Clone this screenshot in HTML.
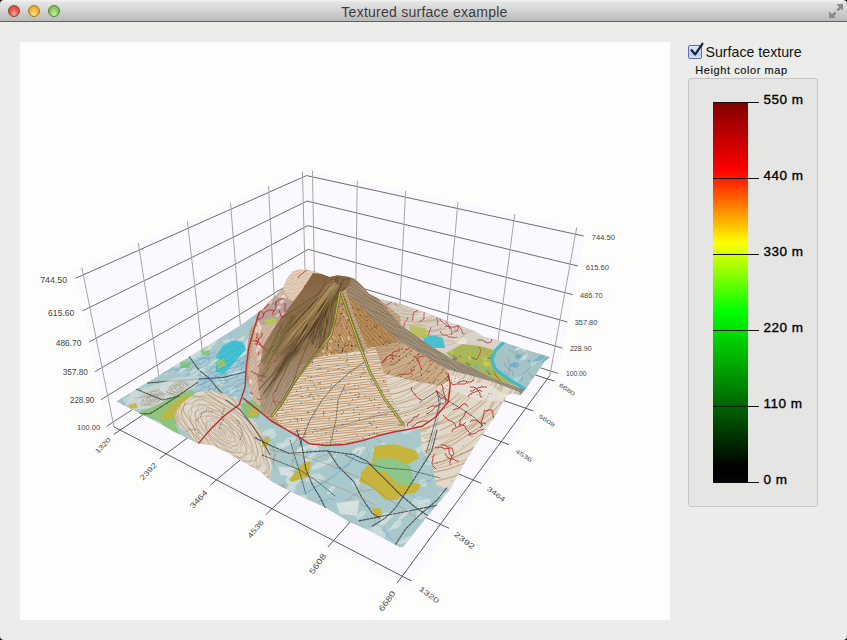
<!DOCTYPE html>
<html><head><meta charset="utf-8">
<style>
html,body{margin:0;padding:0;}
body{width:847px;height:640px;overflow:hidden;background:#ecedeb;position:relative;font-family:"Liberation Sans",sans-serif;}
#title{position:absolute;left:0;top:0;width:847px;height:21px;background:linear-gradient(#f4f4f4 0px,#e6e6e6 2px,#d2d2d2 11px,#bcbcbc 20px);border-bottom:1px solid #606060;}
#title .t{position:absolute;left:1px;width:847px;top:3.5px;text-align:center;font-size:14px;letter-spacing:0.25px;color:#3c3c3c;}
.tl{position:absolute;top:5px;width:10px;height:10px;border-radius:50%;}
#chart{position:absolute;left:20px;top:42px;width:650px;height:578px;background:#fdfefc;overflow:hidden;}
#chart svg{position:absolute;left:0;top:0;}
#chk{position:absolute;left:688px;top:45px;width:12px;height:12px;border:1px solid #6a6aa6;border-radius:2px;background:linear-gradient(#dfe8f8,#b6d2f6 70%,#cfe2fa);}
#chkl{position:absolute;left:705.5px;top:44px;font-size:14.2px;letter-spacing:0px;color:#101010;}
#hcm{position:absolute;left:695.3px;top:64px;font-size:11px;letter-spacing:0.58px;color:#111;-webkit-text-stroke:0.15px #111;}
#grp{position:absolute;left:688px;top:78px;width:128px;height:427px;border:1px solid #c6c6c6;border-radius:3px;background:#e5e6e4;}
#bar{position:absolute;left:713px;top:102px;width:35px;height:381px;background:linear-gradient(to top,#06040a 0%,#000000 4%,#00ff00 45%,#ffff00 63%,#ff0000 82%,#800000 100%);}
.tick{position:absolute;left:713px;width:46px;height:1px;background:#111;}
.bl{position:absolute;left:763.5px;font-size:13.5px;letter-spacing:0.5px;color:#000;-webkit-text-stroke:0.35px #000;}
</style></head><body>
<div id="title"><div class="t">Textured surface example</div>
<div class="tl" style="left:8px;border:1px solid #9a3e36;background:radial-gradient(ellipse at 50% 85%,#f4b0a4 0%,#e0584a 55%,#c84438 100%)"></div>
<div class="tl" style="left:28px;border:1px solid #a07a1c;background:radial-gradient(ellipse at 50% 85%,#f8e490 0%,#f0b238 55%,#d89820 100%)"></div>
<div class="tl" style="left:48px;border:1px solid #4e8a32;background:radial-gradient(ellipse at 50% 85%,#d0ecaa 0%,#8ccb5a 55%,#6aa83e 100%)"></div>
<svg style="position:absolute;left:826px;top:2px" width="20" height="18" viewBox="826 2 20 18"><polygon points="836.2,4 843,4 843,10.8 841,8.8 838.2,11.6 836.4,9.8 839.2,7" fill="#8a8a8a"/><polygon points="829,11.2 829,18 835.8,18 833.8,16 836.6,13.2 834.8,11.4 832,14.2" fill="#8a8a8a"/><line x1="836.6" y1="12.6" x2="838" y2="11.2" stroke="#f0f0f0" stroke-width="0.8" opacity="0.6"/></svg>
</div>
<div id="chart">
<svg width="650" height="578" viewBox="20 42 650 578" font-family="Liberation Sans, sans-serif">
<defs>
<pattern id="strH" width="8" height="2.6" patternUnits="userSpaceOnUse" patternTransform="rotate(-5)"><rect x="0" y="0.9" width="8" height="0.9" fill="#a8784a" opacity="0.55"/></pattern>
<pattern id="con" width="9" height="3.2" patternUnits="userSpaceOnUse" patternTransform="rotate(35)"><path d="M0,1.6 Q2.25,0.6 4.5,1.6 T9,1.6" fill="none" stroke="#a87e58" stroke-width="0.7" opacity="0.6"/></pattern>
<pattern id="dots" width="7" height="6" patternUnits="userSpaceOnUse"><circle cx="1.2" cy="1.5" r="0.55" fill="#2a2a2a" opacity="0.6"/><circle cx="4.6" cy="3.8" r="0.5" fill="#3a2a1a" opacity="0.55"/><circle cx="2.8" cy="5.2" r="0.45" fill="#202020" opacity="0.5"/></pattern>
<pattern id="strk" width="4" height="12" patternUnits="userSpaceOnUse" patternTransform="rotate(35)"><rect x="0.5" y="0" width="0.9" height="12" fill="#5a4630" opacity="0.5"/><rect x="2.6" y="0" width="0.6" height="12" fill="#d8c0a0" opacity="0.4"/></pattern>
<pattern id="mott" width="34" height="22" patternUnits="userSpaceOnUse" patternTransform="rotate(-30)"><ellipse cx="8" cy="6" rx="6" ry="3" fill="#dfe8e6" opacity="0.55"/><ellipse cx="24" cy="15" rx="7" ry="3.5" fill="#dfe8e6" opacity="0.5"/></pattern>
<pattern id="blu" width="26" height="18" patternUnits="userSpaceOnUse" patternTransform="rotate(-28)"><path d="M0,4 Q6,1 13,5 T26,4" fill="none" stroke="#5b9fd0" stroke-width="0.6" opacity="0.6"/><path d="M0,13 Q7,16 13,12 T26,13" fill="none" stroke="#7a8a90" stroke-width="0.6" opacity="0.45"/></pattern>
</defs>
<polygon points="107.65,431.03 309.36,298.08 306.34,169.71 74.24,270.57" fill="#fbf9fd"/>
<polygon points="309.36,298.08 557.94,378.09 586.02,229.26 306.34,169.71" fill="#fbf9fd"/>
<polygon points="107.65,431.03 309.36,298.08 557.94,378.09 407.56,588.68" fill="#fbf9fd"/>
<line x1="106.55" y1="426.40" x2="309.27" y2="294.18" stroke="#6e6e6e" stroke-width="1" opacity="1"/>
<line x1="100.97" y1="399.61" x2="308.75" y2="272.13" stroke="#6e6e6e" stroke-width="1" opacity="1"/>
<line x1="95.12" y1="371.51" x2="308.21" y2="249.30" stroke="#6e6e6e" stroke-width="1" opacity="1"/>
<line x1="88.97" y1="341.99" x2="307.65" y2="225.63" stroke="#6e6e6e" stroke-width="1" opacity="1"/>
<line x1="82.50" y1="310.93" x2="307.08" y2="201.07" stroke="#6e6e6e" stroke-width="1" opacity="1"/>
<line x1="75.69" y1="278.23" x2="306.48" y2="175.58" stroke="#6e6e6e" stroke-width="1" opacity="1"/>
<line x1="113.97" y1="426.86" x2="81.78" y2="267.29" stroke="#a4a4a4" stroke-width="1" opacity="1"/>
<line x1="161.85" y1="395.30" x2="138.30" y2="242.73" stroke="#a4a4a4" stroke-width="1" opacity="1"/>
<line x1="204.15" y1="367.43" x2="187.41" y2="221.39" stroke="#a4a4a4" stroke-width="1" opacity="1"/>
<line x1="241.78" y1="342.62" x2="230.47" y2="202.68" stroke="#a4a4a4" stroke-width="1" opacity="1"/>
<line x1="275.48" y1="320.41" x2="268.54" y2="186.14" stroke="#a4a4a4" stroke-width="1" opacity="1"/>
<line x1="305.84" y1="300.40" x2="302.43" y2="171.41" stroke="#a4a4a4" stroke-width="1" opacity="1"/>
<line x1="309.27" y1="294.18" x2="557.79" y2="373.34" stroke="#6e6e6e" stroke-width="1" opacity="1"/>
<line x1="308.75" y1="272.13" x2="562.50" y2="348.23" stroke="#6e6e6e" stroke-width="1" opacity="1"/>
<line x1="308.21" y1="249.30" x2="567.42" y2="322.02" stroke="#6e6e6e" stroke-width="1" opacity="1"/>
<line x1="307.65" y1="225.63" x2="572.57" y2="294.62" stroke="#6e6e6e" stroke-width="1" opacity="1"/>
<line x1="307.08" y1="201.07" x2="577.95" y2="265.97" stroke="#6e6e6e" stroke-width="1" opacity="1"/>
<line x1="306.48" y1="175.58" x2="583.58" y2="235.97" stroke="#6e6e6e" stroke-width="1" opacity="1"/>
<line x1="549.87" y1="375.49" x2="576.75" y2="227.29" stroke="#a4a4a4" stroke-width="1" opacity="1"/>
<line x1="495.67" y1="358.04" x2="514.79" y2="214.10" stroke="#a4a4a4" stroke-width="1" opacity="1"/>
<line x1="445.47" y1="341.89" x2="457.95" y2="201.99" stroke="#a4a4a4" stroke-width="1" opacity="1"/>
<line x1="398.85" y1="326.88" x2="405.60" y2="190.85" stroke="#a4a4a4" stroke-width="1" opacity="1"/>
<line x1="355.44" y1="312.91" x2="357.25" y2="180.55" stroke="#a4a4a4" stroke-width="1" opacity="1"/>
<line x1="314.91" y1="299.87" x2="312.45" y2="171.01" stroke="#a4a4a4" stroke-width="1" opacity="1"/>
<line x1="113.97" y1="426.86" x2="411.36" y2="580.91" stroke="#5a5a5a" stroke-width="1" opacity="1"/>
<line x1="161.85" y1="395.30" x2="449.07" y2="528.29" stroke="#5a5a5a" stroke-width="1" opacity="1"/>
<line x1="204.15" y1="367.43" x2="481.24" y2="483.40" stroke="#5a5a5a" stroke-width="1" opacity="1"/>
<line x1="241.78" y1="342.62" x2="509.01" y2="444.66" stroke="#5a5a5a" stroke-width="1" opacity="1"/>
<line x1="275.48" y1="320.41" x2="533.22" y2="410.88" stroke="#5a5a5a" stroke-width="1" opacity="1"/>
<line x1="305.84" y1="300.40" x2="554.51" y2="381.17" stroke="#5a5a5a" stroke-width="1" opacity="1"/>
<line x1="549.87" y1="375.49" x2="396.98" y2="583.29" stroke="#5a5a5a" stroke-width="1" opacity="1"/>
<line x1="495.67" y1="358.04" x2="327.92" y2="546.98" stroke="#5a5a5a" stroke-width="1" opacity="1"/>
<line x1="445.47" y1="341.89" x2="266.03" y2="514.44" stroke="#5a5a5a" stroke-width="1" opacity="1"/>
<line x1="398.85" y1="326.88" x2="210.25" y2="485.11" stroke="#5a5a5a" stroke-width="1" opacity="1"/>
<line x1="355.44" y1="312.91" x2="159.73" y2="458.55" stroke="#5a5a5a" stroke-width="1" opacity="1"/>
<line x1="314.91" y1="299.87" x2="113.74" y2="434.37" stroke="#5a5a5a" stroke-width="1" opacity="1"/>
<clipPath id="cout"><polygon points="116.0,401.5 241.2,324.8 263.1,308.4 270.0,301.0 275.7,295.4 282.8,288.3 287.0,278.4 292.7,271.3 299.8,269.6 308.3,270.2 315.3,271.6 322.4,274.2 329.5,277.0 338.0,275.3 349.3,276.7 355.0,279.1 362.1,285.5 369.2,294.0 377.7,298.0 403.6,304.8 427.2,313.0 450.8,322.5 474.5,330.8 483.9,336.7 498.0,340.2 521.7,348.5 550.4,357.0 544.7,361.3 537.1,372.7 526.7,387.8 520.1,395.3 512.6,393.4 506.9,395.3 503.1,402.9 494.6,417.0 486.1,429.3 474.8,446.3 460.6,470.0 450.0,490.0 427.5,516.2 403.4,547.0 399.0,546.9 370.6,531.5 348.7,521.7 324.7,507.5 302.8,497.6 290.0,491.5 269.7,480.6 260.9,471.9 241.2,460.9 228.1,453.3 212.8,445.6 197.5,443.4 175.6,432.5 153.7,420.5 134.0,410.6"/></clipPath><g clip-path="url(#cout)"><polygon points="116.0,401.5 241.2,324.8 263.1,308.4 270.0,301.0 275.7,295.4 282.8,288.3 287.0,278.4 292.7,271.3 299.8,269.6 308.3,270.2 315.3,271.6 322.4,274.2 329.5,277.0 338.0,275.3 349.3,276.7 355.0,279.1 362.1,285.5 369.2,294.0 377.7,298.0 403.6,304.8 427.2,313.0 450.8,322.5 474.5,330.8 483.9,336.7 498.0,340.2 521.7,348.5 550.4,357.0 544.7,361.3 537.1,372.7 526.7,387.8 520.1,395.3 512.6,393.4 506.9,395.3 503.1,402.9 494.6,417.0 486.1,429.3 474.8,446.3 460.6,470.0 450.0,490.0 427.5,516.2 403.4,547.0 399.0,546.9 370.6,531.5 348.7,521.7 324.7,507.5 302.8,497.6 290.0,491.5 269.7,480.6 260.9,471.9 241.2,460.9 228.1,453.3 212.8,445.6 197.5,443.4 175.6,432.5 153.7,420.5 134.0,410.6" fill="#a9c8cc" />
<clipPath id="c1"><polygon points="116.0,401.5 241.2,324.8 263.1,308.4 270.0,301.0 275.7,295.4 282.8,288.3 287.0,278.4 292.7,271.3 299.8,269.6 308.3,270.2 315.3,271.6 322.4,274.2 329.5,277.0 338.0,275.3 349.3,276.7 355.0,279.1 362.1,285.5 369.2,294.0 377.7,298.0 403.6,304.8 427.2,313.0 450.8,322.5 474.5,330.8 483.9,336.7 498.0,340.2 521.7,348.5 550.4,357.0 544.7,361.3 537.1,372.7 526.7,387.8 520.1,395.3 512.6,393.4 506.9,395.3 503.1,402.9 494.6,417.0 486.1,429.3 474.8,446.3 460.6,470.0 450.0,490.0 427.5,516.2 403.4,547.0 399.0,546.9 370.6,531.5 348.7,521.7 324.7,507.5 302.8,497.6 290.0,491.5 269.7,480.6 260.9,471.9 241.2,460.9 228.1,453.3 212.8,445.6 197.5,443.4 175.6,432.5 153.7,420.5 134.0,410.6"/></clipPath><g clip-path="url(#c1)"><ellipse cx="387.5" cy="518.5" rx="8.9" ry="2.3" fill="#d6e2e0" opacity="0.6" transform="rotate(-38 387.5 518.5)"/>
<ellipse cx="495.5" cy="271.1" rx="9.2" ry="4.2" fill="#d6e2e0" opacity="0.6" transform="rotate(-31 495.5 271.1)"/>
<ellipse cx="247.6" cy="346.8" rx="5.3" ry="3.0" fill="#d6e2e0" opacity="0.6" transform="rotate(-30 247.6 346.8)"/>
<ellipse cx="356.4" cy="545.8" rx="9.0" ry="3.6" fill="#d6e2e0" opacity="0.6" transform="rotate(-10 356.4 545.8)"/>
<ellipse cx="209.5" cy="314.0" rx="7.8" ry="1.7" fill="#d6e2e0" opacity="0.6" transform="rotate(-49 209.5 314.0)"/>
<ellipse cx="339.7" cy="398.9" rx="9.9" ry="3.6" fill="#d6e2e0" opacity="0.6" transform="rotate(-29 339.7 398.9)"/>
<ellipse cx="331.8" cy="338.3" rx="3.6" ry="2.2" fill="#d6e2e0" opacity="0.6" transform="rotate(-22 331.8 338.3)"/>
<ellipse cx="203.1" cy="372.1" rx="3.5" ry="4.3" fill="#d6e2e0" opacity="0.6" transform="rotate(-44 203.1 372.1)"/>
<ellipse cx="232.2" cy="513.8" rx="7.1" ry="4.3" fill="#d6e2e0" opacity="0.6" transform="rotate(-24 232.2 513.8)"/>
<ellipse cx="438.2" cy="295.0" rx="7.3" ry="3.2" fill="#d6e2e0" opacity="0.6" transform="rotate(-15 438.2 295.0)"/>
<ellipse cx="272.9" cy="435.5" rx="3.9" ry="2.8" fill="#d6e2e0" opacity="0.6" transform="rotate(-37 272.9 435.5)"/>
<ellipse cx="181.2" cy="496.1" rx="6.2" ry="4.7" fill="#d6e2e0" opacity="0.6" transform="rotate(-26 181.2 496.1)"/>
<ellipse cx="378.8" cy="446.6" rx="8.2" ry="2.1" fill="#d6e2e0" opacity="0.6" transform="rotate(-32 378.8 446.6)"/>
<ellipse cx="220.1" cy="381.3" rx="4.2" ry="4.7" fill="#d6e2e0" opacity="0.6" transform="rotate(-41 220.1 381.3)"/>
<ellipse cx="407.8" cy="352.9" rx="9.6" ry="3.7" fill="#d6e2e0" opacity="0.6" transform="rotate(-45 407.8 352.9)"/>
<ellipse cx="483.1" cy="531.7" rx="9.8" ry="3.4" fill="#d6e2e0" opacity="0.6" transform="rotate(-44 483.1 531.7)"/>
<ellipse cx="199.6" cy="527.0" rx="7.4" ry="2.2" fill="#d6e2e0" opacity="0.6" transform="rotate(-15 199.6 527.0)"/>
<ellipse cx="394.7" cy="427.6" rx="6.1" ry="2.9" fill="#d6e2e0" opacity="0.6" transform="rotate(-40 394.7 427.6)"/>
<ellipse cx="132.5" cy="512.7" rx="6.8" ry="3.4" fill="#d6e2e0" opacity="0.6" transform="rotate(-37 132.5 512.7)"/>
<ellipse cx="442.4" cy="276.6" rx="6.1" ry="1.7" fill="#d6e2e0" opacity="0.6" transform="rotate(-45 442.4 276.6)"/>
<ellipse cx="536.1" cy="452.1" rx="6.5" ry="3.3" fill="#d6e2e0" opacity="0.6" transform="rotate(-15 536.1 452.1)"/>
<ellipse cx="265.5" cy="433.3" rx="8.3" ry="2.7" fill="#d6e2e0" opacity="0.6" transform="rotate(-29 265.5 433.3)"/>
<ellipse cx="448.4" cy="521.8" rx="4.6" ry="4.6" fill="#d6e2e0" opacity="0.6" transform="rotate(-50 448.4 521.8)"/>
<ellipse cx="443.1" cy="494.4" rx="4.5" ry="2.9" fill="#d6e2e0" opacity="0.6" transform="rotate(-17 443.1 494.4)"/>
<ellipse cx="122.2" cy="443.9" rx="9.1" ry="3.2" fill="#d6e2e0" opacity="0.6" transform="rotate(-21 122.2 443.9)"/>
<ellipse cx="214.4" cy="324.7" rx="6.0" ry="2.2" fill="#d6e2e0" opacity="0.6" transform="rotate(-36 214.4 324.7)"/>
<ellipse cx="527.9" cy="428.6" rx="5.9" ry="2.5" fill="#d6e2e0" opacity="0.6" transform="rotate(-12 527.9 428.6)"/>
<ellipse cx="309.1" cy="541.6" rx="7.1" ry="3.3" fill="#d6e2e0" opacity="0.6" transform="rotate(-14 309.1 541.6)"/>
<ellipse cx="438.7" cy="430.7" rx="6.5" ry="4.4" fill="#d6e2e0" opacity="0.6" transform="rotate(-34 438.7 430.7)"/>
<ellipse cx="516.8" cy="288.7" rx="6.5" ry="3.3" fill="#d6e2e0" opacity="0.6" transform="rotate(-12 516.8 288.7)"/>
<ellipse cx="225.0" cy="493.2" rx="8.2" ry="3.9" fill="#d6e2e0" opacity="0.6" transform="rotate(-25 225.0 493.2)"/>
<ellipse cx="538.0" cy="361.9" rx="6.3" ry="2.2" fill="#d6e2e0" opacity="0.6" transform="rotate(-48 538.0 361.9)"/>
<ellipse cx="208.5" cy="523.5" rx="9.4" ry="2.0" fill="#d6e2e0" opacity="0.6" transform="rotate(-26 208.5 523.5)"/>
<ellipse cx="324.2" cy="434.6" rx="8.1" ry="2.6" fill="#d6e2e0" opacity="0.6" transform="rotate(-12 324.2 434.6)"/>
<ellipse cx="318.4" cy="443.8" rx="7.9" ry="2.2" fill="#d6e2e0" opacity="0.6" transform="rotate(-48 318.4 443.8)"/>
<ellipse cx="294.8" cy="481.5" rx="9.2" ry="3.9" fill="#d6e2e0" opacity="0.6" transform="rotate(-45 294.8 481.5)"/>
<ellipse cx="512.8" cy="492.1" rx="9.6" ry="3.3" fill="#d6e2e0" opacity="0.6" transform="rotate(-13 512.8 492.1)"/>
<ellipse cx="136.3" cy="278.0" rx="3.6" ry="2.4" fill="#d6e2e0" opacity="0.6" transform="rotate(-40 136.3 278.0)"/>
<ellipse cx="197.5" cy="426.9" rx="3.8" ry="3.5" fill="#d6e2e0" opacity="0.6" transform="rotate(-43 197.5 426.9)"/>
<ellipse cx="410.5" cy="275.4" rx="5.7" ry="4.6" fill="#d6e2e0" opacity="0.6" transform="rotate(-28 410.5 275.4)"/>
<ellipse cx="468.6" cy="452.1" rx="7.8" ry="2.2" fill="#d6e2e0" opacity="0.6" transform="rotate(-27 468.6 452.1)"/>
<ellipse cx="133.2" cy="492.0" rx="10.2" ry="4.3" fill="#d6e2e0" opacity="0.6" transform="rotate(-48 133.2 492.0)"/>
<ellipse cx="263.1" cy="357.8" rx="4.3" ry="3.6" fill="#d6e2e0" opacity="0.6" transform="rotate(-18 263.1 357.8)"/>
<ellipse cx="252.3" cy="508.9" rx="9.1" ry="2.0" fill="#d6e2e0" opacity="0.6" transform="rotate(-19 252.3 508.9)"/>
<ellipse cx="499.4" cy="324.3" rx="7.5" ry="3.6" fill="#d6e2e0" opacity="0.6" transform="rotate(-26 499.4 324.3)"/>
<ellipse cx="157.8" cy="453.0" rx="7.9" ry="4.2" fill="#d6e2e0" opacity="0.6" transform="rotate(-18 157.8 453.0)"/>
<ellipse cx="258.1" cy="469.9" rx="9.6" ry="4.5" fill="#d6e2e0" opacity="0.6" transform="rotate(-44 258.1 469.9)"/>
<ellipse cx="127.6" cy="450.1" rx="5.0" ry="3.4" fill="#d6e2e0" opacity="0.6" transform="rotate(-12 127.6 450.1)"/>
<ellipse cx="280.8" cy="339.7" rx="6.7" ry="3.7" fill="#d6e2e0" opacity="0.6" transform="rotate(-46 280.8 339.7)"/>
<ellipse cx="281.3" cy="306.7" rx="8.1" ry="4.3" fill="#d6e2e0" opacity="0.6" transform="rotate(-35 281.3 306.7)"/>
<ellipse cx="277.5" cy="419.3" rx="5.0" ry="2.4" fill="#d6e2e0" opacity="0.6" transform="rotate(-37 277.5 419.3)"/>
<ellipse cx="314.7" cy="292.2" rx="8.8" ry="3.5" fill="#d6e2e0" opacity="0.6" transform="rotate(-38 314.7 292.2)"/>
<ellipse cx="149.7" cy="481.3" rx="4.4" ry="2.0" fill="#d6e2e0" opacity="0.6" transform="rotate(-45 149.7 481.3)"/>
<ellipse cx="151.3" cy="521.0" rx="5.4" ry="2.6" fill="#d6e2e0" opacity="0.6" transform="rotate(-17 151.3 521.0)"/>
<ellipse cx="385.3" cy="321.5" rx="6.5" ry="4.4" fill="#d6e2e0" opacity="0.6" transform="rotate(-35 385.3 321.5)"/>
<ellipse cx="424.8" cy="296.5" rx="8.6" ry="4.1" fill="#d6e2e0" opacity="0.6" transform="rotate(-17 424.8 296.5)"/>
<ellipse cx="408.9" cy="372.4" rx="3.9" ry="3.3" fill="#d6e2e0" opacity="0.6" transform="rotate(-20 408.9 372.4)"/>
<ellipse cx="198.9" cy="343.5" rx="7.3" ry="4.0" fill="#d6e2e0" opacity="0.6" transform="rotate(-14 198.9 343.5)"/>
<ellipse cx="170.6" cy="320.7" rx="9.1" ry="3.7" fill="#d6e2e0" opacity="0.6" transform="rotate(-21 170.6 320.7)"/>
<ellipse cx="549.0" cy="530.1" rx="9.4" ry="4.1" fill="#d6e2e0" opacity="0.6" transform="rotate(-34 549.0 530.1)"/>
<ellipse cx="394.5" cy="320.8" rx="8.8" ry="4.0" fill="#d6e2e0" opacity="0.6" transform="rotate(-21 394.5 320.8)"/>
<ellipse cx="309.2" cy="374.5" rx="6.4" ry="1.7" fill="#d6e2e0" opacity="0.6" transform="rotate(-16 309.2 374.5)"/>
<ellipse cx="351.6" cy="377.1" rx="7.3" ry="3.9" fill="#d6e2e0" opacity="0.6" transform="rotate(-35 351.6 377.1)"/>
<ellipse cx="476.8" cy="524.7" rx="6.2" ry="2.0" fill="#d6e2e0" opacity="0.6" transform="rotate(-20 476.8 524.7)"/>
<ellipse cx="547.3" cy="310.7" rx="8.5" ry="4.2" fill="#d6e2e0" opacity="0.6" transform="rotate(-13 547.3 310.7)"/>
<ellipse cx="169.6" cy="295.1" rx="10.4" ry="2.0" fill="#d6e2e0" opacity="0.6" transform="rotate(-43 169.6 295.1)"/>
<ellipse cx="365.8" cy="393.4" rx="8.8" ry="2.2" fill="#d6e2e0" opacity="0.6" transform="rotate(-13 365.8 393.4)"/>
<ellipse cx="210.3" cy="483.0" rx="4.0" ry="3.1" fill="#d6e2e0" opacity="0.6" transform="rotate(-49 210.3 483.0)"/>
<ellipse cx="252.3" cy="356.2" rx="8.5" ry="3.1" fill="#d6e2e0" opacity="0.6" transform="rotate(-48 252.3 356.2)"/>
<ellipse cx="548.4" cy="516.1" rx="9.9" ry="2.4" fill="#d6e2e0" opacity="0.6" transform="rotate(-34 548.4 516.1)"/>
<ellipse cx="214.7" cy="304.2" rx="3.7" ry="3.2" fill="#d6e2e0" opacity="0.6" transform="rotate(-45 214.7 304.2)"/>
<ellipse cx="192.6" cy="508.3" rx="6.9" ry="2.2" fill="#d6e2e0" opacity="0.6" transform="rotate(-23 192.6 508.3)"/>
<ellipse cx="231.5" cy="415.8" rx="5.5" ry="3.3" fill="#d6e2e0" opacity="0.6" transform="rotate(-25 231.5 415.8)"/>
<ellipse cx="348.9" cy="379.3" rx="9.0" ry="4.4" fill="#d6e2e0" opacity="0.6" transform="rotate(-43 348.9 379.3)"/>
<ellipse cx="175.2" cy="301.0" rx="10.4" ry="4.6" fill="#d6e2e0" opacity="0.6" transform="rotate(-41 175.2 301.0)"/>
<ellipse cx="537.3" cy="327.2" rx="7.0" ry="3.2" fill="#d6e2e0" opacity="0.6" transform="rotate(-13 537.3 327.2)"/>
<ellipse cx="133.6" cy="357.1" rx="7.7" ry="1.8" fill="#d6e2e0" opacity="0.6" transform="rotate(-41 133.6 357.1)"/>
<ellipse cx="318.0" cy="513.9" rx="8.8" ry="4.3" fill="#d6e2e0" opacity="0.6" transform="rotate(-20 318.0 513.9)"/>
<ellipse cx="423.4" cy="505.3" rx="8.3" ry="4.0" fill="#d6e2e0" opacity="0.6" transform="rotate(-38 423.4 505.3)"/>
<ellipse cx="188.8" cy="479.5" rx="4.7" ry="4.5" fill="#d6e2e0" opacity="0.6" transform="rotate(-26 188.8 479.5)"/>
<ellipse cx="259.1" cy="529.4" rx="4.6" ry="3.2" fill="#d6e2e0" opacity="0.6" transform="rotate(-46 259.1 529.4)"/>
<ellipse cx="535.4" cy="429.2" rx="9.1" ry="2.5" fill="#d6e2e0" opacity="0.6" transform="rotate(-18 535.4 429.2)"/>
<ellipse cx="421.3" cy="448.2" rx="10.2" ry="3.0" fill="#d6e2e0" opacity="0.6" transform="rotate(-33 421.3 448.2)"/>
<ellipse cx="416.7" cy="501.2" rx="5.8" ry="3.7" fill="#d6e2e0" opacity="0.6" transform="rotate(-42 416.7 501.2)"/>
<ellipse cx="355.7" cy="483.0" rx="4.0" ry="3.9" fill="#d6e2e0" opacity="0.6" transform="rotate(-49 355.7 483.0)"/>
<ellipse cx="532.3" cy="399.6" rx="6.4" ry="3.9" fill="#d6e2e0" opacity="0.6" transform="rotate(-29 532.3 399.6)"/>
<ellipse cx="433.5" cy="293.1" rx="7.4" ry="3.4" fill="#d6e2e0" opacity="0.6" transform="rotate(-13 433.5 293.1)"/>
<ellipse cx="133.2" cy="395.2" rx="7.9" ry="3.4" fill="#d6e2e0" opacity="0.6" transform="rotate(-47 133.2 395.2)"/>
<ellipse cx="373.7" cy="331.2" rx="4.9" ry="4.4" fill="#d6e2e0" opacity="0.6" transform="rotate(-42 373.7 331.2)"/>
<ellipse cx="313.3" cy="477.7" rx="8.5" ry="3.4" fill="#d6e2e0" opacity="0.6" transform="rotate(-18 313.3 477.7)"/>
<ellipse cx="318.4" cy="441.7" rx="9.2" ry="3.8" fill="#d6e2e0" opacity="0.6" transform="rotate(-24 318.4 441.7)"/>
<ellipse cx="292.4" cy="424.5" rx="6.3" ry="4.0" fill="#d6e2e0" opacity="0.6" transform="rotate(-35 292.4 424.5)"/>
<ellipse cx="318.7" cy="479.2" rx="7.0" ry="2.7" fill="#d6e2e0" opacity="0.6" transform="rotate(-17 318.7 479.2)"/>
<ellipse cx="281.5" cy="503.9" rx="9.0" ry="3.0" fill="#d6e2e0" opacity="0.6" transform="rotate(-21 281.5 503.9)"/>
<ellipse cx="130.9" cy="377.7" rx="9.5" ry="3.5" fill="#d6e2e0" opacity="0.6" transform="rotate(-28 130.9 377.7)"/>
<ellipse cx="404.8" cy="457.6" rx="7.6" ry="2.9" fill="#d6e2e0" opacity="0.6" transform="rotate(-43 404.8 457.6)"/>
<ellipse cx="243.1" cy="350.9" rx="6.5" ry="4.8" fill="#d6e2e0" opacity="0.6" transform="rotate(-36 243.1 350.9)"/>
<ellipse cx="310.3" cy="372.7" rx="7.6" ry="4.6" fill="#d6e2e0" opacity="0.6" transform="rotate(-14 310.3 372.7)"/>
<ellipse cx="279.8" cy="343.6" rx="9.7" ry="3.2" fill="#d6e2e0" opacity="0.6" transform="rotate(-23 279.8 343.6)"/>
<ellipse cx="147.8" cy="510.0" rx="5.7" ry="3.2" fill="#d6e2e0" opacity="0.6" transform="rotate(-42 147.8 510.0)"/>
<ellipse cx="298.6" cy="499.3" rx="9.3" ry="3.1" fill="#d6e2e0" opacity="0.6" transform="rotate(-19 298.6 499.3)"/>
<ellipse cx="315.0" cy="373.2" rx="7.3" ry="2.2" fill="#d6e2e0" opacity="0.6" transform="rotate(-37 315.0 373.2)"/>
<ellipse cx="422.9" cy="483.3" rx="3.9" ry="3.9" fill="#d6e2e0" opacity="0.6" transform="rotate(-17 422.9 483.3)"/>
<ellipse cx="309.4" cy="286.9" rx="8.3" ry="2.4" fill="#d6e2e0" opacity="0.6" transform="rotate(-24 309.4 286.9)"/>
<ellipse cx="279.6" cy="446.3" rx="5.3" ry="3.1" fill="#d6e2e0" opacity="0.6" transform="rotate(-29 279.6 446.3)"/>
<ellipse cx="390.1" cy="326.0" rx="10.2" ry="2.5" fill="#d6e2e0" opacity="0.6" transform="rotate(-38 390.1 326.0)"/>
<ellipse cx="227.3" cy="288.3" rx="6.5" ry="4.1" fill="#d6e2e0" opacity="0.6" transform="rotate(-22 227.3 288.3)"/>
<ellipse cx="201.0" cy="307.6" rx="5.7" ry="4.1" fill="#d6e2e0" opacity="0.6" transform="rotate(-30 201.0 307.6)"/>
<ellipse cx="517.0" cy="451.7" rx="7.8" ry="4.1" fill="#d6e2e0" opacity="0.6" transform="rotate(-20 517.0 451.7)"/>
<ellipse cx="265.4" cy="340.9" rx="6.6" ry="3.2" fill="#d6e2e0" opacity="0.6" transform="rotate(-44 265.4 340.9)"/>
<ellipse cx="307.7" cy="447.1" rx="4.5" ry="2.0" fill="#d6e2e0" opacity="0.6" transform="rotate(-43 307.7 447.1)"/>
<ellipse cx="239.1" cy="536.4" rx="3.7" ry="2.2" fill="#d6e2e0" opacity="0.6" transform="rotate(-43 239.1 536.4)"/>
<ellipse cx="322.1" cy="273.8" rx="6.7" ry="2.1" fill="#d6e2e0" opacity="0.6" transform="rotate(-39 322.1 273.8)"/>
<ellipse cx="460.2" cy="320.7" rx="7.8" ry="2.9" fill="#d6e2e0" opacity="0.6" transform="rotate(-33 460.2 320.7)"/>
<ellipse cx="470.8" cy="314.2" rx="10.0" ry="4.5" fill="#d6e2e0" opacity="0.6" transform="rotate(-23 470.8 314.2)"/>
<ellipse cx="137.5" cy="453.6" rx="7.7" ry="4.1" fill="#d6e2e0" opacity="0.6" transform="rotate(-41 137.5 453.6)"/>
<ellipse cx="530.1" cy="515.4" rx="4.3" ry="2.6" fill="#d6e2e0" opacity="0.6" transform="rotate(-49 530.1 515.4)"/>
<ellipse cx="477.0" cy="523.4" rx="10.4" ry="3.6" fill="#d6e2e0" opacity="0.6" transform="rotate(-23 477.0 523.4)"/>
<ellipse cx="410.7" cy="427.8" rx="10.2" ry="3.5" fill="#d6e2e0" opacity="0.6" transform="rotate(-37 410.7 427.8)"/>
<ellipse cx="338.8" cy="274.8" rx="8.6" ry="3.8" fill="#d6e2e0" opacity="0.6" transform="rotate(-33 338.8 274.8)"/>
<ellipse cx="485.9" cy="479.2" rx="5.9" ry="1.8" fill="#d6e2e0" opacity="0.6" transform="rotate(-45 485.9 479.2)"/>
<ellipse cx="196.0" cy="353.9" rx="6.6" ry="4.6" fill="#d6e2e0" opacity="0.6" transform="rotate(-39 196.0 353.9)"/>
<ellipse cx="506.3" cy="458.4" rx="9.5" ry="2.9" fill="#d6e2e0" opacity="0.6" transform="rotate(-50 506.3 458.4)"/>
<ellipse cx="457.9" cy="337.7" rx="4.5" ry="4.2" fill="#d6e2e0" opacity="0.6" transform="rotate(-23 457.9 337.7)"/>
<ellipse cx="208.3" cy="343.8" rx="10.1" ry="2.5" fill="#d6e2e0" opacity="0.6" transform="rotate(-22 208.3 343.8)"/>
<ellipse cx="172.3" cy="495.7" rx="4.3" ry="3.3" fill="#d6e2e0" opacity="0.6" transform="rotate(-49 172.3 495.7)"/>
<ellipse cx="355.0" cy="504.5" rx="4.1" ry="2.5" fill="#d6e2e0" opacity="0.6" transform="rotate(-19 355.0 504.5)"/>
<ellipse cx="380.2" cy="356.4" rx="7.9" ry="3.1" fill="#d6e2e0" opacity="0.6" transform="rotate(-16 380.2 356.4)"/>
<ellipse cx="243.3" cy="479.8" rx="7.9" ry="4.0" fill="#d6e2e0" opacity="0.6" transform="rotate(-35 243.3 479.8)"/>
<ellipse cx="430.9" cy="463.3" rx="6.2" ry="1.7" fill="#d6e2e0" opacity="0.6" transform="rotate(-11 430.9 463.3)"/>
<ellipse cx="426.0" cy="326.4" rx="8.6" ry="2.5" fill="#d6e2e0" opacity="0.6" transform="rotate(-31 426.0 326.4)"/>
<ellipse cx="489.5" cy="393.9" rx="5.5" ry="2.6" fill="#d6e2e0" opacity="0.6" transform="rotate(-47 489.5 393.9)"/>
<ellipse cx="211.4" cy="344.8" rx="4.7" ry="1.8" fill="#d6e2e0" opacity="0.6" transform="rotate(-31 211.4 344.8)"/>
<ellipse cx="209.1" cy="474.5" rx="10.0" ry="2.5" fill="#d6e2e0" opacity="0.6" transform="rotate(-27 209.1 474.5)"/>
<ellipse cx="336.1" cy="290.4" rx="4.4" ry="4.4" fill="#d6e2e0" opacity="0.6" transform="rotate(-31 336.1 290.4)"/>
<ellipse cx="465.5" cy="288.1" rx="7.7" ry="4.4" fill="#d6e2e0" opacity="0.6" transform="rotate(-15 465.5 288.1)"/>
<ellipse cx="118.5" cy="414.3" rx="6.1" ry="4.0" fill="#d6e2e0" opacity="0.6" transform="rotate(-47 118.5 414.3)"/>
<ellipse cx="231.1" cy="495.0" rx="6.8" ry="3.1" fill="#d6e2e0" opacity="0.6" transform="rotate(-11 231.1 495.0)"/>
<ellipse cx="255.0" cy="281.2" rx="6.2" ry="2.1" fill="#d6e2e0" opacity="0.6" transform="rotate(-47 255.0 281.2)"/>
<ellipse cx="362.7" cy="534.1" rx="7.6" ry="3.7" fill="#d6e2e0" opacity="0.6" transform="rotate(-37 362.7 534.1)"/>
<ellipse cx="364.1" cy="478.3" rx="7.6" ry="4.2" fill="#d6e2e0" opacity="0.6" transform="rotate(-28 364.1 478.3)"/>
<ellipse cx="202.1" cy="431.2" rx="6.9" ry="2.1" fill="#d6e2e0" opacity="0.6" transform="rotate(-25 202.1 431.2)"/>
<ellipse cx="470.9" cy="307.1" rx="7.3" ry="3.9" fill="#d6e2e0" opacity="0.6" transform="rotate(-34 470.9 307.1)"/>
<ellipse cx="233.3" cy="372.9" rx="7.3" ry="3.8" fill="#d6e2e0" opacity="0.6" transform="rotate(-28 233.3 372.9)"/>
<ellipse cx="162.5" cy="496.5" rx="10.0" ry="1.9" fill="#d6e2e0" opacity="0.6" transform="rotate(-40 162.5 496.5)"/>
<ellipse cx="191.4" cy="505.2" rx="9.9" ry="1.7" fill="#d6e2e0" opacity="0.6" transform="rotate(-37 191.4 505.2)"/>
<ellipse cx="199.6" cy="399.8" rx="10.0" ry="1.8" fill="#d6e2e0" opacity="0.6" transform="rotate(-43 199.6 399.8)"/>
<ellipse cx="327.6" cy="415.0" rx="8.7" ry="3.0" fill="#d6e2e0" opacity="0.6" transform="rotate(-44 327.6 415.0)"/>
<ellipse cx="269.6" cy="542.0" rx="8.8" ry="2.0" fill="#d6e2e0" opacity="0.6" transform="rotate(-18 269.6 542.0)"/>
<ellipse cx="251.1" cy="486.4" rx="3.6" ry="4.4" fill="#d6e2e0" opacity="0.6" transform="rotate(-44 251.1 486.4)"/>
<ellipse cx="314.0" cy="453.2" rx="7.1" ry="2.1" fill="#d6e2e0" opacity="0.6" transform="rotate(-44 314.0 453.2)"/>
<ellipse cx="239.6" cy="284.1" rx="5.0" ry="2.0" fill="#d6e2e0" opacity="0.6" transform="rotate(-31 239.6 284.1)"/>
<ellipse cx="270.9" cy="432.4" rx="5.5" ry="1.7" fill="#d6e2e0" opacity="0.6" transform="rotate(-37 270.9 432.4)"/>
<ellipse cx="444.1" cy="340.6" rx="6.3" ry="4.0" fill="#d6e2e0" opacity="0.6" transform="rotate(-34 444.1 340.6)"/>
<ellipse cx="501.4" cy="524.3" rx="5.7" ry="4.0" fill="#d6e2e0" opacity="0.6" transform="rotate(-40 501.4 524.3)"/>
<ellipse cx="176.6" cy="391.1" rx="7.7" ry="4.6" fill="#d6e2e0" opacity="0.6" transform="rotate(-44 176.6 391.1)"/>
<ellipse cx="425.5" cy="401.5" rx="4.4" ry="4.7" fill="#d6e2e0" opacity="0.6" transform="rotate(-22 425.5 401.5)"/>
<ellipse cx="172.0" cy="520.9" rx="4.2" ry="1.9" fill="#d6e2e0" opacity="0.6" transform="rotate(-37 172.0 520.9)"/>
<ellipse cx="523.4" cy="278.8" rx="9.9" ry="3.6" fill="#d6e2e0" opacity="0.6" transform="rotate(-47 523.4 278.8)"/>
<ellipse cx="363.0" cy="396.9" rx="7.4" ry="4.0" fill="#d6e2e0" opacity="0.6" transform="rotate(-23 363.0 396.9)"/><polyline points="549,313 549,310 550,307 551,304 554,303 557,302 558,299 558,296 556,294" fill="none" stroke="#4f98d4" stroke-width="0.6" opacity="0.5"/>
<polyline points="278,530 278,533 277,536 276,539 275,542 273,544 271,546 269,548 266,549" fill="none" stroke="#4f98d4" stroke-width="0.6" opacity="0.5"/>
<polyline points="408,492 410,494 413,496 415,497 418,499 421,499 423,501 425,503 428,504" fill="none" stroke="#4f98d4" stroke-width="0.6" opacity="0.5"/>
<polyline points="162,463 161,460 160,457 159,455 158,452 156,450 154,447 153,444 156,443" fill="none" stroke="#4f98d4" stroke-width="0.6" opacity="0.5"/>
<polyline points="372,312 373,309 371,307 369,304 367,302 365,301 362,301 359,302 358,305" fill="none" stroke="#4f98d4" stroke-width="0.6" opacity="0.5"/>
<polyline points="546,533 549,534 552,532 553,529 556,528 559,527 562,526 564,524 567,523" fill="none" stroke="#4f98d4" stroke-width="0.6" opacity="0.5"/>
<polyline points="149,326 146,327 143,327 140,326 137,326 135,324 132,323 129,323 129,320" fill="none" stroke="#4f98d4" stroke-width="0.6" opacity="0.5"/>
<polyline points="533,519 532,516 532,513 531,510 529,509 526,508 523,507 520,505 519,503" fill="none" stroke="#4f98d4" stroke-width="0.6" opacity="0.5"/>
<polyline points="184,520 181,522 178,520 176,518 175,516 173,513 174,510 174,507 173,504" fill="none" stroke="#4f98d4" stroke-width="0.6" opacity="0.5"/>
<polyline points="370,534 371,531 372,529 374,526 375,523 375,520 374,517 375,514 374,511" fill="none" stroke="#4f98d4" stroke-width="0.6" opacity="0.5"/>
<polyline points="458,395 459,398 461,400 462,403 460,405 457,404 454,403 451,402 449,400" fill="none" stroke="#4f98d4" stroke-width="0.6" opacity="0.5"/>
<polyline points="120,392 119,395 118,398 116,400 114,402 112,404 110,406 107,408 104,409" fill="none" stroke="#4f98d4" stroke-width="0.6" opacity="0.5"/>
<polyline points="158,282 161,283 163,285 165,288 167,290 168,293 169,296 171,298 173,300" fill="none" stroke="#4f98d4" stroke-width="0.6" opacity="0.5"/>
<polyline points="478,443 477,440 474,438 473,436 472,433 470,431 467,430 465,428 464,425" fill="none" stroke="#4f98d4" stroke-width="0.6" opacity="0.5"/>
<polyline points="350,285 348,287 346,289 343,291 341,293 340,296 338,299 337,301 336,304" fill="none" stroke="#4f98d4" stroke-width="0.6" opacity="0.5"/>
<polyline points="401,318 404,317 407,318 409,321 408,323 409,326 408,329 407,332 405,334" fill="none" stroke="#4f98d4" stroke-width="0.6" opacity="0.5"/>
<polyline points="261,437 264,436 267,437 269,439 272,441 274,443 275,445 277,448 276,451" fill="none" stroke="#4f98d4" stroke-width="0.6" opacity="0.5"/>
<polyline points="158,455 161,456 164,456 167,455 170,455 173,453 174,451 173,448 173,445" fill="none" stroke="#4f98d4" stroke-width="0.6" opacity="0.5"/>
<polyline points="386,414 387,417 387,420 386,423 386,426 385,429 383,431 381,433 379,435" fill="none" stroke="#4f98d4" stroke-width="0.6" opacity="0.5"/>
<polyline points="231,307 230,310 230,313 230,316 231,319 231,322 230,325 231,328 228,329" fill="none" stroke="#4f98d4" stroke-width="0.6" opacity="0.5"/>
<polyline points="509,338 507,335 505,333 504,330 503,328 501,325 500,323 497,322 494,322" fill="none" stroke="#4f98d4" stroke-width="0.6" opacity="0.5"/>
<polyline points="546,278 546,281 547,284 547,287 549,289 552,289 555,287 554,284 553,282" fill="none" stroke="#4f98d4" stroke-width="0.6" opacity="0.5"/>
<polyline points="163,495 162,492 162,489 161,486 159,483 159,480 161,478 164,476 166,474" fill="none" stroke="#4f98d4" stroke-width="0.6" opacity="0.5"/>
<polyline points="166,426 167,423 168,421 171,420 173,417 173,414 175,412 176,409 177,406" fill="none" stroke="#4f98d4" stroke-width="0.6" opacity="0.5"/>
<polyline points="394,469 393,466 394,463 393,460 392,458 389,456 388,453 386,451 383,450" fill="none" stroke="#4f98d4" stroke-width="0.6" opacity="0.5"/>
<polyline points="522,533 525,531 526,529 527,526 524,524 522,522 520,520 518,518 518,515" fill="none" stroke="#4f98d4" stroke-width="0.6" opacity="0.5"/>
<polyline points="248,437 251,435 253,433 253,430 254,427 252,424 252,421 249,420 246,421" fill="none" stroke="#4f98d4" stroke-width="0.6" opacity="0.5"/>
<polyline points="399,351 400,348 401,345 403,343 402,340 401,337 399,335 398,333 396,330" fill="none" stroke="#4f98d4" stroke-width="0.6" opacity="0.5"/>
<polyline points="245,422 245,419 245,416 247,414 250,415 253,414 256,414 257,416 257,419" fill="none" stroke="#4f98d4" stroke-width="0.6" opacity="0.5"/>
<polyline points="502,488 504,486 505,483 507,481 508,478 509,475 508,472 507,469 505,467" fill="none" stroke="#4f98d4" stroke-width="0.6" opacity="0.5"/>
<polyline points="122,323 119,325 116,326 114,327 111,329 109,331 106,331 103,333 100,334" fill="none" stroke="#4f98d4" stroke-width="0.6" opacity="0.5"/>
<polyline points="498,436 501,436 504,436 507,435 510,436 513,435 514,433 514,430 511,428" fill="none" stroke="#4f98d4" stroke-width="0.6" opacity="0.5"/>
<polyline points="501,465 499,468 498,471 495,472 492,472 489,473 487,472 487,469 488,466" fill="none" stroke="#4f98d4" stroke-width="0.6" opacity="0.5"/>
<polyline points="337,294 337,291 335,288 333,286 331,284 328,283 326,281 326,278 325,276" fill="none" stroke="#4f98d4" stroke-width="0.6" opacity="0.5"/>
<polyline points="293,447 296,447 299,446 301,445 302,442 301,439 300,436 300,433 298,430" fill="none" stroke="#4f98d4" stroke-width="0.6" opacity="0.5"/>
<polyline points="289,342 286,342 283,342 282,345 282,348 279,350 280,353 281,355 282,358" fill="none" stroke="#4f98d4" stroke-width="0.6" opacity="0.5"/>
<polyline points="504,529 504,532 504,535 507,537 509,539 512,539 515,539 518,539 521,539" fill="none" stroke="#4f98d4" stroke-width="0.6" opacity="0.5"/>
<polyline points="427,509 430,508 433,508 435,511 437,513 439,515 441,517 443,518 446,520" fill="none" stroke="#4f98d4" stroke-width="0.6" opacity="0.5"/>
<polyline points="528,348 531,348 532,345 532,342 532,339 533,336 535,334 537,332 539,330" fill="none" stroke="#4f98d4" stroke-width="0.6" opacity="0.5"/>
<polyline points="376,456 375,453 375,450 377,448 380,446 380,443 379,440 377,439 374,439" fill="none" stroke="#4f98d4" stroke-width="0.6" opacity="0.5"/><polyline points="219,519 220,521 220,524 220,527 221,530 222,533 223,535 224,538 222,541 219,542 216,542" fill="none" stroke="#8a9aa0" stroke-width="0.6" opacity="0.5"/>
<polyline points="149,466 152,465 155,465 158,464 160,465 163,465 166,463 169,464 172,466 174,468 175,470" fill="none" stroke="#8a9aa0" stroke-width="0.6" opacity="0.5"/>
<polyline points="319,384 318,387 317,390 318,393 319,396 318,398 317,401 319,404 317,407 316,410 317,412" fill="none" stroke="#8a9aa0" stroke-width="0.6" opacity="0.5"/>
<polyline points="508,369 506,367 503,366 500,366 497,365 494,364 492,363 489,362 486,361 486,358 486,355" fill="none" stroke="#8a9aa0" stroke-width="0.6" opacity="0.5"/>
<polyline points="424,343 421,342 419,339 419,336 419,333 418,330 417,328 416,325 416,322 418,320 421,318" fill="none" stroke="#8a9aa0" stroke-width="0.6" opacity="0.5"/>
<polyline points="366,441 365,443 365,446 367,448 367,451 369,454 368,457 367,460 364,461 361,460 358,459" fill="none" stroke="#8a9aa0" stroke-width="0.6" opacity="0.5"/>
<polyline points="141,484 141,487 142,490 140,492 141,495 142,498 143,500 145,503 145,506 145,509 144,512" fill="none" stroke="#8a9aa0" stroke-width="0.6" opacity="0.5"/>
<polyline points="266,438 263,438 260,438 259,440 259,443 258,446 256,448 253,449 250,450 249,453 246,454" fill="none" stroke="#8a9aa0" stroke-width="0.6" opacity="0.5"/>
<polyline points="385,305 386,302 387,299 390,300 392,302 393,305 393,308 395,310 394,313 396,316 397,319" fill="none" stroke="#8a9aa0" stroke-width="0.6" opacity="0.5"/>
<polyline points="177,430 174,431 172,433 171,436 170,439 170,442 172,444 174,445 177,445 179,442 179,439" fill="none" stroke="#8a9aa0" stroke-width="0.6" opacity="0.5"/>
<polyline points="438,448 435,450 435,453 436,456 435,459 435,462 436,465 433,467 432,470 432,473 433,475" fill="none" stroke="#8a9aa0" stroke-width="0.6" opacity="0.5"/>
<polyline points="403,456 400,458 398,460 395,460 392,461 389,462 386,462 384,464 382,466 380,468 378,471" fill="none" stroke="#8a9aa0" stroke-width="0.6" opacity="0.5"/>
<polyline points="481,449 480,452 482,454 480,457 480,460 478,462 476,464 473,463 470,463 467,464 464,465" fill="none" stroke="#8a9aa0" stroke-width="0.6" opacity="0.5"/>
<polyline points="184,406 181,407 178,406 175,406 173,404 173,401 175,399 177,397 177,394 177,391 174,389" fill="none" stroke="#8a9aa0" stroke-width="0.6" opacity="0.5"/>
<polyline points="153,480 155,477 157,475 160,475 162,477 165,478 166,481 168,483 170,485 171,488 174,489" fill="none" stroke="#8a9aa0" stroke-width="0.6" opacity="0.5"/>
<polyline points="215,530 215,533 216,536 216,539 218,542 221,543 224,542 226,544 226,547 225,549 225,552" fill="none" stroke="#8a9aa0" stroke-width="0.6" opacity="0.5"/>
<polyline points="349,544 348,542 348,539 349,536 350,533 351,530 352,528 353,525 351,522 348,521 345,521" fill="none" stroke="#8a9aa0" stroke-width="0.6" opacity="0.5"/>
<polyline points="121,468 120,471 122,474 124,476 127,476 129,478 129,481 128,484 128,487 126,489 125,492" fill="none" stroke="#8a9aa0" stroke-width="0.6" opacity="0.5"/>
<polyline points="160,324 158,325 155,323 152,323 149,323 146,323 143,323 141,324 139,327 137,329 135,331" fill="none" stroke="#8a9aa0" stroke-width="0.6" opacity="0.5"/>
<polyline points="149,346 146,348 143,349 143,352 144,354 143,357 143,360 143,363 143,366 144,369 146,371" fill="none" stroke="#8a9aa0" stroke-width="0.6" opacity="0.5"/>
<polyline points="130,352 132,350 133,347 133,344 133,341 133,338 135,335 138,336 140,338 142,340 145,342" fill="none" stroke="#8a9aa0" stroke-width="0.6" opacity="0.5"/>
<polyline points="486,443 488,441 490,439 491,436 491,433 493,430 494,428 494,425 493,422 495,419 496,417" fill="none" stroke="#8a9aa0" stroke-width="0.6" opacity="0.5"/>
<polyline points="536,399 535,396 535,393 538,393 540,390 543,390 545,392 547,394 548,397 547,400 547,403" fill="none" stroke="#8a9aa0" stroke-width="0.6" opacity="0.5"/>
<polyline points="125,298 125,295 125,292 125,289 126,286 125,284 127,281 129,280 132,280 135,279 138,278" fill="none" stroke="#8a9aa0" stroke-width="0.6" opacity="0.5"/>
<polyline points="246,452 248,450 250,453 253,453 256,454 258,456 260,458 261,461 263,463 265,466 265,469" fill="none" stroke="#8a9aa0" stroke-width="0.6" opacity="0.5"/></g>
<clipPath id="c2"><polygon points="116.0,401.5 241.2,324.8 263.1,308.4 270.0,301.0 275.7,295.4 282.8,288.3 287.0,278.4 292.7,271.3 299.8,269.6 308.3,270.2 315.3,271.6 322.4,274.2 329.5,277.0 338.0,275.3 349.3,276.7 355.0,279.1 362.1,285.5 369.2,294.0 377.7,298.0 403.6,304.8 427.2,313.0 450.8,322.5 474.5,330.8 483.9,336.7 498.0,340.2 521.7,348.5 550.4,357.0 544.7,361.3 537.1,372.7 526.7,387.8 520.1,395.3 512.6,393.4 506.9,395.3 503.1,402.9 494.6,417.0 486.1,429.3 474.8,446.3 460.6,470.0 450.0,490.0 427.5,516.2 403.4,547.0 399.0,546.9 370.6,531.5 348.7,521.7 324.7,507.5 302.8,497.6 290.0,491.5 269.7,480.6 260.9,471.9 241.2,460.9 228.1,453.3 212.8,445.6 197.5,443.4 175.6,432.5 153.7,420.5 134.0,410.6"/></clipPath><g clip-path="url(#c2)"><ellipse cx="134.9" cy="337.3" rx="4.4" ry="2.4" fill="#d8e2e0" opacity="0.65" transform="rotate(-12 134.9 337.3)"/>
<ellipse cx="242.2" cy="421.5" rx="6.1" ry="2.9" fill="#d8e2e0" opacity="0.65" transform="rotate(-39 242.2 421.5)"/>
<ellipse cx="165.9" cy="320.3" rx="6.7" ry="1.9" fill="#d8e2e0" opacity="0.65" transform="rotate(-47 165.9 320.3)"/>
<ellipse cx="158.3" cy="353.9" rx="6.1" ry="1.3" fill="#d8e2e0" opacity="0.65" transform="rotate(-41 158.3 353.9)"/>
<ellipse cx="236.1" cy="409.8" rx="5.6" ry="2.6" fill="#d8e2e0" opacity="0.65" transform="rotate(-41 236.1 409.8)"/>
<ellipse cx="233.3" cy="399.9" rx="5.1" ry="1.7" fill="#d8e2e0" opacity="0.65" transform="rotate(-41 233.3 399.9)"/>
<ellipse cx="166.8" cy="354.8" rx="2.8" ry="2.3" fill="#d8e2e0" opacity="0.65" transform="rotate(-32 166.8 354.8)"/>
<ellipse cx="154.5" cy="360.4" rx="4.2" ry="2.2" fill="#d8e2e0" opacity="0.65" transform="rotate(-25 154.5 360.4)"/>
<ellipse cx="182.6" cy="340.7" rx="6.5" ry="2.5" fill="#d8e2e0" opacity="0.65" transform="rotate(-32 182.6 340.7)"/>
<ellipse cx="211.6" cy="399.0" rx="6.7" ry="3.3" fill="#d8e2e0" opacity="0.65" transform="rotate(-23 211.6 399.0)"/>
<ellipse cx="212.6" cy="336.5" rx="6.0" ry="1.9" fill="#d8e2e0" opacity="0.65" transform="rotate(-40 212.6 336.5)"/>
<ellipse cx="132.1" cy="361.7" rx="2.6" ry="2.9" fill="#d8e2e0" opacity="0.65" transform="rotate(-20 132.1 361.7)"/>
<ellipse cx="219.9" cy="333.5" rx="5.7" ry="3.3" fill="#d8e2e0" opacity="0.65" transform="rotate(-49 219.9 333.5)"/>
<ellipse cx="141.9" cy="348.1" rx="4.8" ry="1.7" fill="#d8e2e0" opacity="0.65" transform="rotate(-28 141.9 348.1)"/>
<ellipse cx="162.1" cy="388.8" rx="5.2" ry="3.0" fill="#d8e2e0" opacity="0.65" transform="rotate(-40 162.1 388.8)"/>
<ellipse cx="210.7" cy="397.1" rx="6.1" ry="1.4" fill="#d8e2e0" opacity="0.65" transform="rotate(-12 210.7 397.1)"/>
<ellipse cx="193.3" cy="348.6" rx="4.7" ry="2.5" fill="#d8e2e0" opacity="0.65" transform="rotate(-29 193.3 348.6)"/>
<ellipse cx="149.2" cy="347.8" rx="4.3" ry="3.2" fill="#d8e2e0" opacity="0.65" transform="rotate(-33 149.2 347.8)"/>
<ellipse cx="121.2" cy="367.5" rx="3.5" ry="1.3" fill="#d8e2e0" opacity="0.65" transform="rotate(-11 121.2 367.5)"/>
<ellipse cx="155.4" cy="376.4" rx="4.3" ry="1.4" fill="#d8e2e0" opacity="0.65" transform="rotate(-14 155.4 376.4)"/>
<ellipse cx="241.4" cy="339.6" rx="4.6" ry="2.2" fill="#d8e2e0" opacity="0.65" transform="rotate(-43 241.4 339.6)"/>
<ellipse cx="204.7" cy="402.1" rx="6.3" ry="2.9" fill="#d8e2e0" opacity="0.65" transform="rotate(-49 204.7 402.1)"/>
<ellipse cx="146.8" cy="374.0" rx="6.0" ry="2.2" fill="#d8e2e0" opacity="0.65" transform="rotate(-32 146.8 374.0)"/>
<ellipse cx="228.7" cy="322.5" rx="3.8" ry="2.0" fill="#d8e2e0" opacity="0.65" transform="rotate(-10 228.7 322.5)"/>
<ellipse cx="146.5" cy="324.9" rx="4.6" ry="2.9" fill="#d8e2e0" opacity="0.65" transform="rotate(-44 146.5 324.9)"/>
<ellipse cx="228.5" cy="340.6" rx="6.0" ry="1.7" fill="#d8e2e0" opacity="0.65" transform="rotate(-15 228.5 340.6)"/>
<ellipse cx="143.0" cy="396.8" rx="6.7" ry="1.9" fill="#d8e2e0" opacity="0.65" transform="rotate(-46 143.0 396.8)"/>
<ellipse cx="194.5" cy="372.4" rx="4.9" ry="3.2" fill="#d8e2e0" opacity="0.65" transform="rotate(-31 194.5 372.4)"/>
<ellipse cx="182.6" cy="371.2" rx="4.8" ry="2.3" fill="#d8e2e0" opacity="0.65" transform="rotate(-44 182.6 371.2)"/>
<ellipse cx="155.6" cy="347.8" rx="3.7" ry="3.2" fill="#d8e2e0" opacity="0.65" transform="rotate(-45 155.6 347.8)"/>
<ellipse cx="143.5" cy="375.3" rx="4.1" ry="1.9" fill="#d8e2e0" opacity="0.65" transform="rotate(-35 143.5 375.3)"/>
<ellipse cx="183.3" cy="390.8" rx="7.4" ry="3.4" fill="#d8e2e0" opacity="0.65" transform="rotate(-33 183.3 390.8)"/>
<ellipse cx="176.5" cy="363.6" rx="3.7" ry="3.6" fill="#d8e2e0" opacity="0.65" transform="rotate(-47 176.5 363.6)"/>
<ellipse cx="143.5" cy="389.5" rx="5.4" ry="1.9" fill="#d8e2e0" opacity="0.65" transform="rotate(-13 143.5 389.5)"/>
<ellipse cx="170.9" cy="382.6" rx="3.0" ry="3.5" fill="#d8e2e0" opacity="0.65" transform="rotate(-46 170.9 382.6)"/>
<ellipse cx="168.8" cy="413.0" rx="7.2" ry="3.5" fill="#d8e2e0" opacity="0.65" transform="rotate(-17 168.8 413.0)"/>
<ellipse cx="147.3" cy="323.3" rx="4.8" ry="1.4" fill="#d8e2e0" opacity="0.65" transform="rotate(-12 147.3 323.3)"/>
<ellipse cx="117.1" cy="354.2" rx="3.5" ry="1.3" fill="#d8e2e0" opacity="0.65" transform="rotate(-30 117.1 354.2)"/>
<ellipse cx="126.2" cy="414.5" rx="5.9" ry="2.2" fill="#d8e2e0" opacity="0.65" transform="rotate(-16 126.2 414.5)"/>
<ellipse cx="222.8" cy="354.3" rx="6.7" ry="3.6" fill="#d8e2e0" opacity="0.65" transform="rotate(-25 222.8 354.3)"/>
<ellipse cx="163.1" cy="414.6" rx="7.2" ry="2.1" fill="#d8e2e0" opacity="0.65" transform="rotate(-47 163.1 414.6)"/>
<ellipse cx="232.3" cy="389.8" rx="3.7" ry="2.7" fill="#d8e2e0" opacity="0.65" transform="rotate(-38 232.3 389.8)"/>
<ellipse cx="239.2" cy="355.9" rx="3.5" ry="1.4" fill="#d8e2e0" opacity="0.65" transform="rotate(-36 239.2 355.9)"/>
<ellipse cx="248.6" cy="342.9" rx="4.8" ry="3.7" fill="#d8e2e0" opacity="0.65" transform="rotate(-50 248.6 342.9)"/>
<ellipse cx="155.5" cy="406.2" rx="3.0" ry="3.6" fill="#d8e2e0" opacity="0.65" transform="rotate(-17 155.5 406.2)"/>
<ellipse cx="135.2" cy="382.2" rx="5.3" ry="3.0" fill="#d8e2e0" opacity="0.65" transform="rotate(-38 135.2 382.2)"/>
<ellipse cx="167.5" cy="345.3" rx="4.0" ry="1.7" fill="#d8e2e0" opacity="0.65" transform="rotate(-14 167.5 345.3)"/>
<ellipse cx="234.9" cy="357.8" rx="6.0" ry="2.5" fill="#d8e2e0" opacity="0.65" transform="rotate(-39 234.9 357.8)"/>
<ellipse cx="162.8" cy="421.3" rx="4.2" ry="2.7" fill="#d8e2e0" opacity="0.65" transform="rotate(-12 162.8 421.3)"/>
<ellipse cx="155.9" cy="404.9" rx="3.1" ry="3.1" fill="#d8e2e0" opacity="0.65" transform="rotate(-18 155.9 404.9)"/><polyline points="228,422 226,420 223,419 221,417 219,418 216,418 213,420" fill="none" stroke="#4f98d4" stroke-width="0.7" opacity="0.65"/>
<polyline points="212,402 215,400 218,401 221,400 224,400 227,400 229,402" fill="none" stroke="#4f98d4" stroke-width="0.7" opacity="0.65"/>
<polyline points="161,369 163,367 165,365 167,362 170,362 173,362 176,363" fill="none" stroke="#4f98d4" stroke-width="0.7" opacity="0.65"/>
<polyline points="216,387 215,389 214,392 212,395 212,398 210,400 207,401" fill="none" stroke="#4f98d4" stroke-width="0.7" opacity="0.65"/>
<polyline points="121,419 118,419 115,419 112,419 111,422 110,425 109,428" fill="none" stroke="#4f98d4" stroke-width="0.7" opacity="0.65"/>
<polyline points="123,406 122,403 122,400 121,398 118,397 115,397 112,397" fill="none" stroke="#4f98d4" stroke-width="0.7" opacity="0.65"/>
<polyline points="161,321 160,323 157,325 154,326 153,329 150,330 148,332" fill="none" stroke="#4f98d4" stroke-width="0.7" opacity="0.65"/>
<polyline points="164,399 161,398 159,397 157,395 155,392 154,389 153,386" fill="none" stroke="#4f98d4" stroke-width="0.7" opacity="0.65"/>
<polyline points="208,329 211,328 214,329 217,329 220,329 221,332 223,334" fill="none" stroke="#4f98d4" stroke-width="0.7" opacity="0.65"/>
<polyline points="216,416 217,413 218,411 221,409 222,406 224,404 226,402" fill="none" stroke="#4f98d4" stroke-width="0.7" opacity="0.65"/>
<polyline points="215,417 217,419 220,419 223,419 226,419 227,416 229,413" fill="none" stroke="#4f98d4" stroke-width="0.7" opacity="0.65"/>
<polyline points="121,351 118,349 116,347 115,344 117,341 117,338 119,336" fill="none" stroke="#4f98d4" stroke-width="0.7" opacity="0.65"/>
<polyline points="204,412 206,410 209,410 212,409 215,409 217,408 220,407" fill="none" stroke="#4f98d4" stroke-width="0.7" opacity="0.65"/>
<polyline points="180,416 183,418 186,419 188,419 190,422 189,425 188,428" fill="none" stroke="#4f98d4" stroke-width="0.7" opacity="0.65"/>
<polyline points="217,398 219,400 221,403 222,405 221,408 220,411 217,412" fill="none" stroke="#4f98d4" stroke-width="0.7" opacity="0.65"/>
<polyline points="176,339 174,336 171,334 169,332 168,330 169,327 168,324" fill="none" stroke="#4f98d4" stroke-width="0.7" opacity="0.65"/>
<polyline points="203,422 205,420 207,418 208,415 208,412 207,409 207,406" fill="none" stroke="#4f98d4" stroke-width="0.7" opacity="0.65"/>
<polyline points="247,383 244,383 241,383 239,384 236,386 234,388 232,390" fill="none" stroke="#4f98d4" stroke-width="0.7" opacity="0.65"/>
<polyline points="150,419 153,419 156,417 158,416 161,415 164,414 167,414" fill="none" stroke="#4f98d4" stroke-width="0.7" opacity="0.65"/>
<polyline points="230,333 231,336 230,338 231,341 232,344 235,346 238,347" fill="none" stroke="#4f98d4" stroke-width="0.7" opacity="0.65"/>
<polyline points="209,386 209,389 208,392 208,395 208,398 207,400 205,403" fill="none" stroke="#4f98d4" stroke-width="0.7" opacity="0.65"/>
<polyline points="237,360 239,361 242,363 245,364 248,364 250,366 252,368" fill="none" stroke="#4f98d4" stroke-width="0.7" opacity="0.65"/>
<polyline points="197,357 200,359 203,358 206,358 209,358 209,361 210,364" fill="none" stroke="#4f98d4" stroke-width="0.7" opacity="0.65"/>
<polyline points="250,353 247,354 245,357 244,360 243,362 241,365 241,368" fill="none" stroke="#4f98d4" stroke-width="0.7" opacity="0.65"/>
<polyline points="249,379 249,382 250,384 250,387 252,389 255,391 256,394" fill="none" stroke="#4f98d4" stroke-width="0.7" opacity="0.65"/>
<polyline points="205,322 207,325 207,328 206,331 208,333 211,334 213,336" fill="none" stroke="#4f98d4" stroke-width="0.7" opacity="0.65"/>
<polyline points="131,388 134,389 137,389 140,389 143,390 146,389 149,389" fill="none" stroke="#4f98d4" stroke-width="0.7" opacity="0.65"/>
<polyline points="142,393 144,396 147,397 149,396 152,395 155,395 158,394" fill="none" stroke="#4f98d4" stroke-width="0.7" opacity="0.65"/>
<polyline points="166,361 166,364 168,366 171,367 173,369 176,370 179,371" fill="none" stroke="#4f98d4" stroke-width="0.7" opacity="0.65"/>
<polyline points="162,396 164,394 167,392 170,393 173,393 174,396 177,397" fill="none" stroke="#4f98d4" stroke-width="0.7" opacity="0.65"/><polyline points="119,409 120,406 123,405 125,403 127,401 129,398 130,395" fill="none" stroke="#3a4a50" stroke-width="0.8" opacity="0.55" stroke-dasharray="1.5,1"/>
<polyline points="161,373 164,373 167,372 170,371 171,369 171,366 174,364" fill="none" stroke="#3a4a50" stroke-width="0.8" opacity="0.55" stroke-dasharray="1.5,1"/>
<polyline points="228,381 225,380 222,381 219,380 218,377 215,376 213,374" fill="none" stroke="#3a4a50" stroke-width="0.8" opacity="0.55" stroke-dasharray="1.5,1"/>
<polyline points="145,323 148,323 150,325 153,325 155,327 158,329 160,327" fill="none" stroke="#3a4a50" stroke-width="0.8" opacity="0.55" stroke-dasharray="1.5,1"/>
<polyline points="184,386 183,389 181,391 178,393 175,393 172,392 170,391" fill="none" stroke="#3a4a50" stroke-width="0.8" opacity="0.55" stroke-dasharray="1.5,1"/>
<polyline points="159,380 158,383 159,386 159,389 160,392 160,395 158,397" fill="none" stroke="#3a4a50" stroke-width="0.8" opacity="0.55" stroke-dasharray="1.5,1"/>
<polyline points="168,424 170,423 173,422 176,423 179,424 182,425 184,427" fill="none" stroke="#3a4a50" stroke-width="0.8" opacity="0.55" stroke-dasharray="1.5,1"/>
<polyline points="149,380 148,377 149,375 152,373 150,370 148,368 145,367" fill="none" stroke="#3a4a50" stroke-width="0.8" opacity="0.55" stroke-dasharray="1.5,1"/>
<polyline points="165,330 167,332 170,333 172,335 174,337 174,340 175,343" fill="none" stroke="#3a4a50" stroke-width="0.8" opacity="0.55" stroke-dasharray="1.5,1"/>
<polyline points="242,416 242,419 241,422 241,425 243,428 245,430 247,432" fill="none" stroke="#3a4a50" stroke-width="0.8" opacity="0.55" stroke-dasharray="1.5,1"/></g>
<clipPath id="c3"><polygon points="116.0,401.5 241.2,324.8 263.1,308.4 270.0,301.0 275.7,295.4 282.8,288.3 287.0,278.4 292.7,271.3 299.8,269.6 308.3,270.2 315.3,271.6 322.4,274.2 329.5,277.0 338.0,275.3 349.3,276.7 355.0,279.1 362.1,285.5 369.2,294.0 377.7,298.0 403.6,304.8 427.2,313.0 450.8,322.5 474.5,330.8 483.9,336.7 498.0,340.2 521.7,348.5 550.4,357.0 544.7,361.3 537.1,372.7 526.7,387.8 520.1,395.3 512.6,393.4 506.9,395.3 503.1,402.9 494.6,417.0 486.1,429.3 474.8,446.3 460.6,470.0 450.0,490.0 427.5,516.2 403.4,547.0 399.0,546.9 370.6,531.5 348.7,521.7 324.7,507.5 302.8,497.6 290.0,491.5 269.7,480.6 260.9,471.9 241.2,460.9 228.1,453.3 212.8,445.6 197.5,443.4 175.6,432.5 153.7,420.5 134.0,410.6"/></clipPath><g clip-path="url(#c3)"><ellipse cx="326.6" cy="532.6" rx="8.4" ry="2.0" fill="#d8e2e0" opacity="0.65" transform="rotate(-19 326.6 532.6)"/>
<ellipse cx="308.7" cy="459.7" rx="4.2" ry="3.2" fill="#d8e2e0" opacity="0.65" transform="rotate(-39 308.7 459.7)"/>
<ellipse cx="302.2" cy="450.5" rx="4.9" ry="3.8" fill="#d8e2e0" opacity="0.65" transform="rotate(-49 302.2 450.5)"/>
<ellipse cx="349.1" cy="504.5" rx="3.3" ry="2.4" fill="#d8e2e0" opacity="0.65" transform="rotate(-14 349.1 504.5)"/>
<ellipse cx="448.9" cy="531.0" rx="4.0" ry="3.8" fill="#d8e2e0" opacity="0.65" transform="rotate(-32 448.9 531.0)"/>
<ellipse cx="288.3" cy="491.5" rx="8.5" ry="4.1" fill="#d8e2e0" opacity="0.65" transform="rotate(-34 288.3 491.5)"/>
<ellipse cx="267.4" cy="536.4" rx="8.9" ry="3.0" fill="#d8e2e0" opacity="0.65" transform="rotate(-41 267.4 536.4)"/>
<ellipse cx="361.0" cy="514.5" rx="5.9" ry="2.6" fill="#d8e2e0" opacity="0.65" transform="rotate(-40 361.0 514.5)"/>
<ellipse cx="312.9" cy="445.3" rx="4.5" ry="4.4" fill="#d8e2e0" opacity="0.65" transform="rotate(-50 312.9 445.3)"/>
<ellipse cx="396.9" cy="524.4" rx="5.4" ry="3.3" fill="#d8e2e0" opacity="0.65" transform="rotate(-41 396.9 524.4)"/>
<ellipse cx="385.3" cy="515.7" rx="7.4" ry="3.0" fill="#d8e2e0" opacity="0.65" transform="rotate(-11 385.3 515.7)"/>
<ellipse cx="423.9" cy="501.3" rx="7.1" ry="2.3" fill="#d8e2e0" opacity="0.65" transform="rotate(-12 423.9 501.3)"/>
<ellipse cx="380.8" cy="535.8" rx="4.7" ry="4.4" fill="#d8e2e0" opacity="0.65" transform="rotate(-46 380.8 535.8)"/>
<ellipse cx="358.4" cy="451.8" rx="4.1" ry="3.8" fill="#d8e2e0" opacity="0.65" transform="rotate(-47 358.4 451.8)"/>
<ellipse cx="329.6" cy="460.5" rx="8.1" ry="1.7" fill="#d8e2e0" opacity="0.65" transform="rotate(-37 329.6 460.5)"/>
<ellipse cx="422.0" cy="513.5" rx="7.2" ry="4.5" fill="#d8e2e0" opacity="0.65" transform="rotate(-49 422.0 513.5)"/>
<ellipse cx="384.6" cy="519.7" rx="7.5" ry="3.6" fill="#d8e2e0" opacity="0.65" transform="rotate(-47 384.6 519.7)"/>
<ellipse cx="271.4" cy="522.7" rx="6.7" ry="2.3" fill="#d8e2e0" opacity="0.65" transform="rotate(-50 271.4 522.7)"/>
<ellipse cx="359.0" cy="449.7" rx="7.5" ry="2.5" fill="#d8e2e0" opacity="0.65" transform="rotate(-18 359.0 449.7)"/>
<ellipse cx="273.6" cy="492.9" rx="3.6" ry="3.8" fill="#d8e2e0" opacity="0.65" transform="rotate(-28 273.6 492.9)"/>
<ellipse cx="300.8" cy="543.0" rx="7.1" ry="2.5" fill="#d8e2e0" opacity="0.65" transform="rotate(-16 300.8 543.0)"/>
<ellipse cx="329.1" cy="540.8" rx="4.8" ry="4.5" fill="#d8e2e0" opacity="0.65" transform="rotate(-48 329.1 540.8)"/>
<ellipse cx="398.2" cy="471.2" rx="5.5" ry="3.4" fill="#d8e2e0" opacity="0.65" transform="rotate(-48 398.2 471.2)"/>
<ellipse cx="298.6" cy="451.1" rx="7.4" ry="2.2" fill="#d8e2e0" opacity="0.65" transform="rotate(-30 298.6 451.1)"/>
<ellipse cx="319.1" cy="465.3" rx="8.6" ry="3.0" fill="#d8e2e0" opacity="0.65" transform="rotate(-24 319.1 465.3)"/>
<ellipse cx="392.4" cy="527.9" rx="4.6" ry="1.7" fill="#d8e2e0" opacity="0.65" transform="rotate(-31 392.4 527.9)"/>
<ellipse cx="288.2" cy="442.2" rx="8.5" ry="3.4" fill="#d8e2e0" opacity="0.65" transform="rotate(-33 288.2 442.2)"/>
<ellipse cx="281.6" cy="521.5" rx="6.2" ry="2.0" fill="#d8e2e0" opacity="0.65" transform="rotate(-11 281.6 521.5)"/>
<ellipse cx="440.4" cy="539.2" rx="8.0" ry="3.1" fill="#d8e2e0" opacity="0.65" transform="rotate(-38 440.4 539.2)"/>
<ellipse cx="382.1" cy="456.2" rx="6.7" ry="1.7" fill="#d8e2e0" opacity="0.65" transform="rotate(-49 382.1 456.2)"/>
<ellipse cx="394.5" cy="476.7" rx="7.2" ry="3.8" fill="#d8e2e0" opacity="0.65" transform="rotate(-17 394.5 476.7)"/>
<ellipse cx="375.1" cy="530.6" rx="7.0" ry="4.3" fill="#d8e2e0" opacity="0.65" transform="rotate(-14 375.1 530.6)"/>
<ellipse cx="263.4" cy="468.6" rx="5.3" ry="2.3" fill="#d8e2e0" opacity="0.65" transform="rotate(-43 263.4 468.6)"/>
<ellipse cx="425.3" cy="442.7" rx="4.1" ry="3.8" fill="#d8e2e0" opacity="0.65" transform="rotate(-41 425.3 442.7)"/>
<ellipse cx="305.4" cy="543.5" rx="7.6" ry="2.8" fill="#d8e2e0" opacity="0.65" transform="rotate(-45 305.4 543.5)"/>
<ellipse cx="307.5" cy="545.0" rx="7.7" ry="1.7" fill="#d8e2e0" opacity="0.65" transform="rotate(-22 307.5 545.0)"/>
<ellipse cx="328.3" cy="517.0" rx="4.8" ry="1.9" fill="#d8e2e0" opacity="0.65" transform="rotate(-49 328.3 517.0)"/>
<ellipse cx="312.7" cy="532.1" rx="8.3" ry="3.5" fill="#d8e2e0" opacity="0.65" transform="rotate(-20 312.7 532.1)"/>
<ellipse cx="293.0" cy="477.9" rx="8.4" ry="4.5" fill="#d8e2e0" opacity="0.65" transform="rotate(-32 293.0 477.9)"/>
<ellipse cx="406.3" cy="539.9" rx="9.0" ry="2.4" fill="#d8e2e0" opacity="0.65" transform="rotate(-24 406.3 539.9)"/>
<ellipse cx="331.0" cy="489.8" rx="5.8" ry="2.3" fill="#d8e2e0" opacity="0.65" transform="rotate(-49 331.0 489.8)"/>
<ellipse cx="404.5" cy="514.5" rx="8.0" ry="2.0" fill="#d8e2e0" opacity="0.65" transform="rotate(-41 404.5 514.5)"/>
<ellipse cx="371.2" cy="540.2" rx="5.8" ry="2.1" fill="#d8e2e0" opacity="0.65" transform="rotate(-26 371.2 540.2)"/>
<ellipse cx="441.7" cy="532.9" rx="8.4" ry="2.7" fill="#d8e2e0" opacity="0.65" transform="rotate(-40 441.7 532.9)"/>
<ellipse cx="424.8" cy="524.3" rx="8.1" ry="2.7" fill="#d8e2e0" opacity="0.65" transform="rotate(-39 424.8 524.3)"/><polyline points="302,533 303,530 306,529 309,530 311,532 314,532 317,532" fill="none" stroke="#4f98d4" stroke-width="0.7" opacity="0.6"/>
<polyline points="307,468 304,467 301,466 299,465 296,463 294,461 291,460" fill="none" stroke="#4f98d4" stroke-width="0.7" opacity="0.6"/>
<polyline points="335,500 332,499 329,498 327,500 324,500 321,501 318,502" fill="none" stroke="#4f98d4" stroke-width="0.7" opacity="0.6"/>
<polyline points="286,491 285,488 282,486 279,486 276,485 273,485 271,483" fill="none" stroke="#4f98d4" stroke-width="0.7" opacity="0.6"/>
<polyline points="421,483 424,482 427,481 430,481 432,479 434,477 436,474" fill="none" stroke="#4f98d4" stroke-width="0.7" opacity="0.6"/>
<polyline points="429,457 429,454 429,451 430,448 432,448 435,447 438,446" fill="none" stroke="#4f98d4" stroke-width="0.7" opacity="0.6"/>
<polyline points="407,476 405,477 402,476 399,475 396,475 393,476 390,476" fill="none" stroke="#4f98d4" stroke-width="0.7" opacity="0.6"/>
<polyline points="267,534 270,533 273,532 275,535 276,537 277,540 276,543" fill="none" stroke="#4f98d4" stroke-width="0.7" opacity="0.6"/>
<polyline points="350,464 348,465 345,466 342,467 339,468 336,468 334,469" fill="none" stroke="#4f98d4" stroke-width="0.7" opacity="0.6"/>
<polyline points="375,511 373,509 370,507 367,507 365,506 362,505 360,503" fill="none" stroke="#4f98d4" stroke-width="0.7" opacity="0.6"/>
<polyline points="442,532 441,529 441,526 441,523 443,521 443,518 443,515" fill="none" stroke="#4f98d4" stroke-width="0.7" opacity="0.6"/>
<polyline points="297,516 299,519 302,520 304,522 306,524 308,526 311,526" fill="none" stroke="#4f98d4" stroke-width="0.7" opacity="0.6"/>
<polyline points="394,541 391,539 389,537 388,535 386,532 384,530 384,527" fill="none" stroke="#4f98d4" stroke-width="0.7" opacity="0.6"/>
<polyline points="392,466 393,463 393,460 394,457 396,455 397,452 400,451" fill="none" stroke="#4f98d4" stroke-width="0.7" opacity="0.6"/><polyline points="296,448 296,451 294,453 293,456 294,458 293,461 292,464 293,467 294,470" fill="none" stroke="#a8805a" stroke-width="0.7" opacity="0.6"/>
<polyline points="441,464 439,462 436,462 434,461 431,461 429,458 427,456 424,458 422,460" fill="none" stroke="#a8805a" stroke-width="0.7" opacity="0.6"/>
<polyline points="316,459 319,457 322,457 324,455 327,455 329,453 332,455 333,457 336,460" fill="none" stroke="#a8805a" stroke-width="0.7" opacity="0.6"/>
<polyline points="345,500 348,500 350,499 351,496 354,495 357,494 359,492 361,490 362,487" fill="none" stroke="#a8805a" stroke-width="0.7" opacity="0.6"/>
<polyline points="276,469 274,467 274,464 273,461 274,458 275,455 274,452 274,449 272,446" fill="none" stroke="#a8805a" stroke-width="0.7" opacity="0.6"/>
<polyline points="344,540 341,540 338,539 335,540 332,539 329,539 326,540 323,540 321,538" fill="none" stroke="#a8805a" stroke-width="0.7" opacity="0.6"/>
<polyline points="291,446 293,444 295,442 297,440 297,437 298,434 300,432 303,432 306,432" fill="none" stroke="#a8805a" stroke-width="0.7" opacity="0.6"/>
<polyline points="346,535 348,537 350,539 349,542 347,544 346,547 345,549 343,552 342,555" fill="none" stroke="#a8805a" stroke-width="0.7" opacity="0.6"/>
<polyline points="303,547 301,549 298,549 295,547 293,545 292,543 289,541 287,539 286,536" fill="none" stroke="#a8805a" stroke-width="0.7" opacity="0.6"/>
<polyline points="362,491 365,491 368,490 371,490 374,489 375,487 375,484 377,482 377,479" fill="none" stroke="#a8805a" stroke-width="0.7" opacity="0.6"/>
<polyline points="356,537 356,540 357,543 358,546 357,549 357,552 359,554 360,557 359,560" fill="none" stroke="#a8805a" stroke-width="0.7" opacity="0.6"/>
<polyline points="285,483 284,486 282,489 283,492 283,495 283,498 285,500 286,503 287,506" fill="none" stroke="#a8805a" stroke-width="0.7" opacity="0.6"/>
<polyline points="292,496 290,495 287,493 285,491 285,488 283,485 280,485 277,485 274,484" fill="none" stroke="#a8805a" stroke-width="0.7" opacity="0.6"/>
<polyline points="277,453 275,455 274,458 275,461 273,463 270,464 267,465 264,465 263,462" fill="none" stroke="#a8805a" stroke-width="0.7" opacity="0.6"/></g>
<polygon points="215.8,356.7 223.3,345.3 232.8,340.6 242.2,341.6 246.0,349.1 234.7,362.3 223.3,373.7 215.8,371.8" fill="#40c2d2" />
<polygon points="216.0,361.0 224.0,359.0 226.0,366.0 218.0,369.0" fill="#9cc46a" />
<polygon points="180.0,362.0 191.0,361.0 190.0,368.0 181.0,368.0" fill="#88c480" />
<polygon points="201.0,350.0 210.0,349.0 210.0,355.0 202.0,355.0" fill="#88c480" />
<polygon points="258.0,336.0 268.0,331.0 272.0,336.0 262.0,340.0" fill="#88c480" />
<polyline points="189.3,356.7 198.8,369.9 208.2,377.4 219.6,390.7 232.8,405.8" fill="none" stroke="#2e3236" stroke-width="1.1" stroke-linejoin="round" stroke-linecap="round" opacity="0.8" stroke-dasharray="2,1"/>
<polyline points="147.8,383.1 170.0,381.0 195.0,379.3 223.3,377.4 246.0,371.8" fill="none" stroke="#2e3236" stroke-width="1.1" stroke-linejoin="round" stroke-linecap="round" opacity="0.8" stroke-dasharray="2,1"/>
<polyline points="135.0,398.0 165.0,394.0 190.0,398.0 215.0,394.0" fill="none" stroke="#2e3236" stroke-width="1.0" stroke-linejoin="round" stroke-linecap="round" opacity="0.6" stroke-dasharray="2,1"/>
<polyline points="200.0,385.0 215.0,378.0 230.0,372.0 248.0,360.0" fill="none" stroke="#4f98d4" stroke-width="0.8" stroke-linejoin="round" stroke-linecap="round" opacity="0.7"/>
<clipPath id="c4"><polygon points="180.0,370.0 215.0,352.0 246.0,340.0 248.0,395.0 200.0,400.0 175.0,392.0"/></clipPath><g clip-path="url(#c4)"><polyline points="168,338 173,338 176,335" fill="none" stroke="#4f98d4" stroke-width="0.7" opacity="0.7"/>
<polyline points="167,344 171,343 174,339 178,338 182,337 185,333" fill="none" stroke="#4f98d4" stroke-width="0.7" opacity="0.7"/>
<polyline points="169,348 173,347 176,344 180,342 185,341 187,338 191,337 195,335" fill="none" stroke="#4f98d4" stroke-width="0.7" opacity="0.7"/>
<polyline points="167,354 171,352 176,351 178,347 183,347 186,345 189,342 194,341 197,339 200,336" fill="none" stroke="#4f98d4" stroke-width="0.7" opacity="0.7"/>
<polyline points="170,359 173,356 177,354 181,353 184,350 188,348 192,347 195,344 199,343 203,341 206,338 211,337 214,335" fill="none" stroke="#4f98d4" stroke-width="0.7" opacity="0.7"/>
<polyline points="168,364 171,362 176,361 179,358 183,356 187,356 190,352 194,350 198,350 201,346 205,345 209,344 212,340 216,339 220,338 223,334" fill="none" stroke="#4f98d4" stroke-width="0.7" opacity="0.7"/>
<polyline points="170,367 174,367 177,364 181,362 186,361 188,358 192,356 197,355 199,352 203,350 208,349 210,346 215,345 219,343 221,340 226,339 230,337 232,334" fill="none" stroke="#4f98d4" stroke-width="0.7" opacity="0.7"/>
<polyline points="169,375 173,372 176,369 180,369 183,366 187,364 191,363 194,360 198,358 203,358 205,354 209,352 214,352 216,348 220,347 225,346 227,342 232,341 236,340 238,336" fill="none" stroke="#4f98d4" stroke-width="0.7" opacity="0.7"/>
<polyline points="168,381 171,379 174,376 179,375 182,373 185,370 190,370 193,367 196,364 201,364 204,361 208,358 212,358 215,355 219,353 223,352 226,349 230,347 234,346 237,342 241,341 245,340 248,336 252,336" fill="none" stroke="#4f98d4" stroke-width="0.7" opacity="0.7"/>
<polyline points="170,385 174,384 177,380 181,380 185,378 188,374 192,374 196,372 199,368 203,368 207,366 210,363 215,363 218,359 221,357 226,357 229,353 232,351 237,351 240,347 244,346 248,345 251,341 255,340" fill="none" stroke="#4f98d4" stroke-width="0.7" opacity="0.7"/>
<polyline points="168,391 172,389 176,389 179,385 183,383 188,383 190,379 194,378 199,377 201,373 206,372 210,371 212,367 217,367 220,365 223,361 228,361 231,358 234,355 239,355 242,352 246,350 250,349 253,346" fill="none" stroke="#4f98d4" stroke-width="0.7" opacity="0.7"/>
<polyline points="170,395 175,395 178,392 181,389 186,389 189,385 193,384 197,383 200,379 204,378 208,377 211,373 215,372 219,371 222,367 226,367 230,365 233,361 238,361 241,359 244,356 249,355 252,353 255,350" fill="none" stroke="#4f98d4" stroke-width="0.7" opacity="0.7"/>
<polyline points="169,402 173,399 176,396 180,396 184,393 187,391 192,390 195,387 198,385 203,385 205,381 209,379 214,379 216,375 221,374 225,373 227,369 232,368 236,367 238,363 243,363 247,360 250,357 254,357" fill="none" stroke="#4f98d4" stroke-width="0.7" opacity="0.7"/>
<polyline points="171,404 175,404 179,402 182,398 186,398 190,396 193,393 197,392 201,390 204,387 209,387 212,383 215,381 220,381 223,377 226,375 231,375 233,371 237,370 242,369 244,365 249,364 253,363" fill="none" stroke="#4f98d4" stroke-width="0.7" opacity="0.7"/>
<polyline points="185,404 188,401 192,400 196,398 199,395 203,395 207,392 210,389 215,389 218,386 221,383 226,383 228,380 232,378 237,377 239,374 243,372 248,371 250,367 255,367" fill="none" stroke="#4f98d4" stroke-width="0.7" opacity="0.7"/>
<polyline points="191,407 194,403 198,403 202,401 205,397 209,397 213,394 216,392 221,392 224,388 227,386 232,386 235,382 238,380 243,380 245,376 250,375 254,374" fill="none" stroke="#4f98d4" stroke-width="0.7" opacity="0.7"/>
<polyline points="204,404 208,403 211,399 215,399 219,397 222,393 226,393 230,391 233,388 237,387 241,385 244,382 249,382 252,379 255,376" fill="none" stroke="#4f98d4" stroke-width="0.7" opacity="0.7"/>
<polyline points="210,407 213,404 217,402 221,401 224,397 228,396 232,395 235,391 239,391 243,389 246,386 250,385 254,383" fill="none" stroke="#4f98d4" stroke-width="0.7" opacity="0.7"/>
<polyline points="219,406 222,403 227,403 230,400 233,398 238,397 241,394 244,392 249,392 252,388 256,386" fill="none" stroke="#4f98d4" stroke-width="0.7" opacity="0.7"/>
<polyline points="232,405 235,401 240,401 243,399 246,395 251,395 254,392" fill="none" stroke="#4f98d4" stroke-width="0.7" opacity="0.7"/>
<polyline points="242,404 245,403 248,399 253,399" fill="none" stroke="#4f98d4" stroke-width="0.7" opacity="0.7"/></g>
<clipPath id="c5"><polygon points="130.0,395.0 240.0,328.0 252.0,322.0 246.0,345.0 140.0,405.0"/></clipPath><g clip-path="url(#c5)"><ellipse cx="136.7" cy="322.3" rx="8.6" ry="1.4" fill="#dce6e4" opacity="0.7" transform="rotate(-23 136.7 322.3)"/>
<ellipse cx="167.1" cy="338.5" rx="4.5" ry="3.0" fill="#dce6e4" opacity="0.7" transform="rotate(-49 167.1 338.5)"/>
<ellipse cx="235.5" cy="369.1" rx="4.4" ry="1.8" fill="#dce6e4" opacity="0.7" transform="rotate(-24 235.5 369.1)"/>
<ellipse cx="206.8" cy="348.4" rx="5.0" ry="2.4" fill="#dce6e4" opacity="0.7" transform="rotate(-14 206.8 348.4)"/>
<ellipse cx="195.7" cy="391.7" rx="6.8" ry="2.7" fill="#dce6e4" opacity="0.7" transform="rotate(-30 195.7 391.7)"/>
<ellipse cx="213.0" cy="362.8" rx="7.4" ry="1.7" fill="#dce6e4" opacity="0.7" transform="rotate(-37 213.0 362.8)"/>
<ellipse cx="236.5" cy="354.8" rx="8.1" ry="3.6" fill="#dce6e4" opacity="0.7" transform="rotate(-27 236.5 354.8)"/>
<ellipse cx="142.4" cy="384.8" rx="7.0" ry="2.0" fill="#dce6e4" opacity="0.7" transform="rotate(-15 142.4 384.8)"/>
<ellipse cx="188.9" cy="326.7" rx="3.4" ry="1.8" fill="#dce6e4" opacity="0.7" transform="rotate(-26 188.9 326.7)"/>
<ellipse cx="229.5" cy="330.2" rx="3.1" ry="2.8" fill="#dce6e4" opacity="0.7" transform="rotate(-34 229.5 330.2)"/>
<ellipse cx="183.9" cy="390.1" rx="8.5" ry="3.7" fill="#dce6e4" opacity="0.7" transform="rotate(-19 183.9 390.1)"/>
<ellipse cx="130.4" cy="334.5" rx="6.5" ry="3.6" fill="#dce6e4" opacity="0.7" transform="rotate(-47 130.4 334.5)"/>
<ellipse cx="192.8" cy="354.9" rx="5.4" ry="1.9" fill="#dce6e4" opacity="0.7" transform="rotate(-39 192.8 354.9)"/>
<ellipse cx="159.1" cy="330.6" rx="6.3" ry="2.4" fill="#dce6e4" opacity="0.7" transform="rotate(-21 159.1 330.6)"/>
<ellipse cx="208.1" cy="401.1" rx="5.0" ry="3.5" fill="#dce6e4" opacity="0.7" transform="rotate(-35 208.1 401.1)"/>
<ellipse cx="210.6" cy="388.8" rx="5.4" ry="2.4" fill="#dce6e4" opacity="0.7" transform="rotate(-25 210.6 388.8)"/>
<ellipse cx="143.5" cy="366.1" rx="3.6" ry="1.8" fill="#dce6e4" opacity="0.7" transform="rotate(-25 143.5 366.1)"/>
<ellipse cx="248.6" cy="404.9" rx="4.6" ry="1.6" fill="#dce6e4" opacity="0.7" transform="rotate(-29 248.6 404.9)"/>
<ellipse cx="183.8" cy="353.5" rx="7.6" ry="3.0" fill="#dce6e4" opacity="0.7" transform="rotate(-28 183.8 353.5)"/>
<ellipse cx="205.8" cy="370.3" rx="7.1" ry="3.6" fill="#dce6e4" opacity="0.7" transform="rotate(-12 205.8 370.3)"/>
<ellipse cx="249.5" cy="393.4" rx="3.6" ry="2.4" fill="#dce6e4" opacity="0.7" transform="rotate(-19 249.5 393.4)"/>
<ellipse cx="165.9" cy="372.4" rx="3.3" ry="1.8" fill="#dce6e4" opacity="0.7" transform="rotate(-34 165.9 372.4)"/>
<ellipse cx="138.6" cy="357.2" rx="4.4" ry="3.4" fill="#dce6e4" opacity="0.7" transform="rotate(-37 138.6 357.2)"/>
<ellipse cx="176.4" cy="388.6" rx="6.4" ry="1.4" fill="#dce6e4" opacity="0.7" transform="rotate(-41 176.4 388.6)"/>
<ellipse cx="204.5" cy="338.5" rx="4.5" ry="2.8" fill="#dce6e4" opacity="0.7" transform="rotate(-30 204.5 338.5)"/></g>
<polyline points="175.0,370.0 195.0,362.0 215.0,352.0" fill="none" stroke="#4f98d4" stroke-width="0.8" stroke-linejoin="round" stroke-linecap="round" opacity="0.6"/>
<polygon points="122.0,400.0 140.0,390.0 160.0,383.0 180.0,377.0 200.0,376.0 195.0,388.0 175.0,398.0 150.0,408.0 132.0,410.0" fill="#d4dcd8" opacity="0.7"/>
<clipPath id="c6"><polygon points="122.0,400.0 140.0,390.0 160.0,383.0 180.0,377.0 200.0,376.0 195.0,388.0 175.0,398.0 150.0,408.0 132.0,410.0"/></clipPath><g clip-path="url(#c6)"><polyline points="155,397 155,397 155,397 155,397 154,398 154,398 154,398 154,398 154,399 153,399 153,399 153,399 152,399 152,400 151,400 151,400 150,400 150,400 150,400 150,400 150,400 150,399 150,399 150,399 149,399 149,398 149,398 150,398 150,398 150,397 151,397 151,397 151,397 152,396 152,396 153,396 153,396 153,396 153,396 154,396 154,396 155,396 155,396 155,397" fill="none" stroke="#a8805a" stroke-width="0.7" opacity="0.65"/>
<polyline points="157,396 157,396 156,397 156,397 156,397 156,398 156,398 156,399 155,399 154,400 154,400 153,401 152,401 152,401 151,401 150,401 149,401 149,401 149,401 148,401 148,400 148,400 148,400 148,400 147,399 147,399 147,398 148,398 148,397 149,397 150,397 150,396 151,396 151,395 152,395 153,395 153,395 154,395 154,395 155,395 155,395 156,395 157,395 157,396" fill="none" stroke="#a8805a" stroke-width="0.7" opacity="0.65"/>
<polyline points="159,395 159,395 158,396 157,397 158,397 158,398 158,399 157,399 156,400 155,401 154,401 153,402 152,402 151,402 150,402 149,403 148,403 147,403 147,402 147,402 147,401 146,401 146,401 146,400 146,400 146,399 146,398 146,398 147,397 148,397 149,396 149,395 150,394 151,394 152,394 153,394 154,394 155,394 156,394 156,394 157,394 158,394 158,394 159,395" fill="none" stroke="#a8805a" stroke-width="0.7" opacity="0.65"/>
<polyline points="161,394 162,394 162,395 161,396 160,397 159,398 159,399 159,400 158,401 157,402 155,402 154,403 152,404 151,404 150,404 149,404 147,404 146,404 144,405 144,404 144,403 144,402 144,401 143,401 143,400 144,399 144,399 144,398 144,397 145,396 147,395 148,394 150,394 151,393 152,392 154,391 155,391 156,391 157,392 158,392 159,392 159,393 160,394 161,394" fill="none" stroke="#a8805a" stroke-width="0.7" opacity="0.65"/>
<polyline points="163,393 163,394 163,395 164,396 163,397 163,398 161,399 160,400 158,401 158,402 156,404 155,405 153,405 151,405 149,405 148,405 146,405 145,405 144,405 143,405 141,405 140,404 141,403 142,402 142,400 142,400 141,399 141,398 142,396 144,395 145,394 147,393 149,392 151,392 152,391 154,391 156,390 158,389 159,390 160,391 160,392 161,392 162,393 163,393" fill="none" stroke="#a8805a" stroke-width="0.7" opacity="0.65"/><polyline points="181,387 181,387 180,387 181,387 181,388 181,388 180,388 180,389 180,389 179,389 179,389 179,389 178,389 178,390 177,390 177,390 177,390 176,390 176,390 176,389 176,389 176,389 175,389 175,389 175,389 175,388 175,388 176,388 176,388 176,387 176,387 177,387 177,387 178,386 178,386 178,386 179,386 179,386 179,386 180,386 180,386 181,386 181,386 181,387" fill="none" stroke="#a8805a" stroke-width="0.7" opacity="0.6"/>
<polyline points="183,385 183,386 183,386 183,387 183,387 183,388 183,388 182,389 181,389 180,390 180,390 179,391 178,391 177,392 177,392 176,392 175,392 174,392 174,392 174,391 173,391 173,391 172,391 172,390 172,389 173,389 174,388 174,388 174,387 175,387 175,386 176,386 176,385 177,385 178,385 179,385 180,385 180,384 181,384 182,384 183,384 183,385 183,385 183,385" fill="none" stroke="#a8805a" stroke-width="0.7" opacity="0.6"/>
<polyline points="186,384 186,385 187,385 186,386 185,387 184,388 183,389 183,389 182,390 182,391 181,391 179,392 178,392 177,393 176,393 175,393 174,393 173,393 172,394 170,394 170,393 170,392 171,391 171,390 171,390 171,389 171,388 172,388 172,387 173,386 174,386 175,385 176,385 177,384 178,384 179,383 181,382 182,382 183,383 184,383 184,383 185,383 185,384 186,384" fill="none" stroke="#a8805a" stroke-width="0.7" opacity="0.6"/>
<polyline points="187,384 188,384 188,385 188,386 188,387 188,388 187,389 185,390 184,391 182,391 181,392 180,394 179,395 177,395 175,395 174,394 173,394 172,394 171,394 170,393 169,393 168,393 167,392 168,391 169,390 169,389 170,389 169,388 170,387 171,385 172,385 174,384 175,383 177,382 178,382 180,382 181,382 183,381 184,381 185,381 186,382 186,383 186,383 187,384" fill="none" stroke="#a8805a" stroke-width="0.7" opacity="0.6"/></g>
<polygon points="136.0,413.0 150.0,408.0 165.0,401.0 180.5,392.3 192.6,390.3 196.7,396.4 186.5,406.5 182.5,416.7 174.4,422.8 178.4,430.9 180.5,435.0 170.3,430.9 158.1,420.8 145.0,416.0" fill="#8fc47c" />
<polygon points="165.0,410.0 180.0,398.0 190.0,394.0 185.0,404.0 178.0,414.0 170.0,420.0 160.0,418.0" fill="#c4b440" opacity="0.85"/>
<polygon points="128.0,405.0 136.0,403.0 138.0,408.0 130.0,409.0" fill="#c4b440" opacity="0.85"/>
<polyline points="136.0,414.0 150.0,413.8 175.0,398.0 197.5,382.5" fill="none" stroke="#2e3236" stroke-width="1.1" stroke-linejoin="round" stroke-linecap="round" opacity="0.8" stroke-dasharray="2.4,1.2"/>
<polyline points="136.0,389.0 162.5,400.0 180.0,396.0" fill="none" stroke="#2e3236" stroke-width="1.1" stroke-linejoin="round" stroke-linecap="round" opacity="0.75" stroke-dasharray="2.4,1.2"/>
<polygon points="174.4,414.7 180.5,404.5 196.7,392.3 210.9,390.3 227.2,394.4 239.3,402.5 245.4,414.7 255.6,422.8 263.7,437.0 269.8,451.2 271.8,467.5 269.7,480.6 260.9,471.9 241.2,460.9 228.1,453.3 212.8,445.6 197.5,443.4 186.5,432.9 176.4,424.8" fill="#dfd8cc" />
<clipPath id="c7"><polygon points="174.4,414.7 180.5,404.5 196.7,392.3 210.9,390.3 227.2,394.4 239.3,402.5 245.4,414.7 255.6,422.8 263.7,437.0 269.8,451.2 271.8,467.5 269.7,480.6 260.9,471.9 241.2,460.9 228.1,453.3 212.8,445.6 197.5,443.4 186.5,432.9 176.4,424.8"/></clipPath><g clip-path="url(#c7)"><polyline points="224,434 224,434 224,434 224,434 223,434 223,434 223,434 222,434 222,434 222,433 221,433 221,433 221,433 220,432 220,432 220,432 220,431 220,431 220,431 220,430 220,430 220,430 220,430 220,430 220,430 220,430 221,430 221,430 221,430 222,430 222,431 222,431 223,431 223,431 223,432 224,432 224,432 224,433 224,433 224,433 225,434 225,434 224,434 224,434" fill="none" stroke="#a8805a" stroke-width="0.7" opacity="0.55"/>
<polyline points="226,436 226,436 226,436 225,436 225,436 224,436 224,436 223,436 222,435 222,435 221,434 220,434 220,433 219,432 219,432 218,431 218,431 218,430 218,430 218,429 218,429 218,429 218,428 218,428 218,428 219,428 220,428 220,428 221,428 222,429 222,429 223,430 223,430 224,431 225,431 225,432 225,432 225,433 226,434 226,434 226,435 226,435 226,436 226,436" fill="none" stroke="#a8805a" stroke-width="0.7" opacity="0.55"/>
<polyline points="228,438 228,438 227,438 227,438 226,438 225,438 224,438 223,437 222,436 221,436 220,435 219,435 218,434 218,433 217,432 216,431 216,430 215,429 215,428 215,428 215,427 215,426 216,426 216,426 217,426 218,426 219,426 219,426 220,427 221,427 222,428 223,428 224,429 225,430 226,431 227,432 227,433 228,434 229,435 229,436 229,436 229,437 228,437 228,438" fill="none" stroke="#a8805a" stroke-width="0.7" opacity="0.55"/>
<polyline points="230,439 230,440 230,441 229,441 228,441 226,440 225,440 224,439 222,439 221,438 220,437 218,436 216,434 215,433 215,432 214,430 214,429 213,428 212,427 212,426 213,425 213,424 213,424 214,423 215,424 216,424 217,424 218,424 219,424 221,424 222,425 224,427 225,428 226,429 228,430 229,432 230,433 231,434 231,436 232,437 232,438 231,438 230,439 230,439" fill="none" stroke="#a8805a" stroke-width="0.7" opacity="0.55"/>
<polyline points="233,442 232,442 231,442 230,443 229,443 228,443 226,442 224,441 222,440 221,439 219,437 218,436 216,435 214,433 212,432 211,430 211,428 211,427 210,426 210,424 210,423 210,422 211,421 212,421 213,421 214,421 216,422 218,423 219,423 221,424 222,424 224,425 226,427 227,428 229,430 230,432 232,433 233,435 233,436 234,438 235,440 235,441 234,442 233,442" fill="none" stroke="#a8805a" stroke-width="0.7" opacity="0.55"/>
<polyline points="237,445 236,446 234,446 231,445 230,444 228,444 227,444 225,443 223,442 221,440 218,439 217,437 215,435 213,433 212,432 210,430 208,427 207,425 206,423 207,422 208,422 209,421 209,420 210,419 211,419 213,419 214,419 216,419 218,420 220,422 222,424 224,425 226,426 229,428 231,429 232,432 233,433 234,435 235,437 236,439 236,441 236,442 237,444 237,445" fill="none" stroke="#a8805a" stroke-width="0.7" opacity="0.55"/>
<polyline points="237,446 236,446 234,446 233,447 232,447 230,448 228,448 225,446 223,444 220,442 218,440 215,438 213,436 211,434 209,431 207,429 206,427 206,425 206,423 207,422 207,421 206,419 206,417 207,416 209,416 211,417 213,417 215,417 218,418 220,420 223,421 225,422 228,424 230,426 232,429 233,431 234,434 236,436 238,438 239,440 239,442 239,443 238,445 237,446" fill="none" stroke="#a8805a" stroke-width="0.7" opacity="0.55"/>
<polyline points="239,447 238,448 237,450 236,450 233,450 230,448 228,446 225,445 223,445 220,443 217,441 214,439 212,437 209,434 207,431 206,429 205,426 204,424 203,421 202,419 202,417 204,416 206,416 207,416 209,416 211,415 213,416 215,416 217,417 220,418 223,419 225,422 228,424 230,427 233,429 236,431 238,434 240,437 240,439 241,441 241,443 241,445 240,446 239,447" fill="none" stroke="#a8805a" stroke-width="0.7" opacity="0.55"/>
<polyline points="241,449 241,451 240,453 238,453 235,453 232,452 229,451 226,449 223,446 220,444 217,442 214,440 210,437 208,434 207,431 206,429 205,426 203,423 202,421 201,419 201,416 201,414 202,412 203,412 206,412 209,413 211,413 213,413 216,413 219,415 223,418 226,421 229,423 231,426 234,429 236,431 238,434 240,437 242,440 243,443 243,444 242,446 241,447 241,449" fill="none" stroke="#a8805a" stroke-width="0.7" opacity="0.55"/>
<polyline points="245,453 242,453 239,452 237,452 235,452 232,452 229,451 226,450 223,448 219,447 216,444 213,441 210,437 208,434 204,431 201,428 198,424 198,421 198,419 198,417 199,415 200,413 202,413 203,412 205,411 207,410 209,410 213,412 216,414 220,416 223,418 226,419 230,422 233,425 236,428 239,431 242,435 243,438 244,441 244,443 245,446 246,449 247,452 245,453" fill="none" stroke="#a8805a" stroke-width="0.7" opacity="0.55"/>
<polyline points="246,453 245,456 244,458 242,458 238,457 234,455 230,452 227,451 223,450 219,448 216,445 212,441 209,438 206,435 204,431 202,428 201,425 199,422 196,418 195,414 195,412 197,411 199,410 201,409 203,408 205,408 208,408 212,409 215,410 219,412 223,415 226,419 229,422 232,425 236,428 240,431 243,435 244,438 245,441 246,444 247,447 247,449 246,451 246,453" fill="none" stroke="#a8805a" stroke-width="0.7" opacity="0.55"/>
<polyline points="246,454 244,455 243,456 241,457 238,458 235,457 231,456 228,455 223,453 219,449 215,445 211,442 207,439 203,435 199,431 197,427 196,423 196,420 195,417 195,415 196,412 197,411 198,409 198,406 200,405 204,405 208,407 212,409 215,411 219,411 223,413 227,416 232,419 235,423 239,427 242,431 244,435 245,438 247,442 249,446 251,450 251,452 249,454 246,454" fill="none" stroke="#a8805a" stroke-width="0.7" opacity="0.55"/>
<polyline points="252,459 251,462 248,462 243,460 239,458 235,457 231,456 228,455 223,453 219,450 214,447 210,444 205,439 202,435 200,431 197,427 193,422 190,418 188,413 189,411 191,409 193,407 195,406 197,405 200,404 203,405 206,405 210,405 214,406 219,410 223,414 227,417 231,420 236,423 241,426 245,431 248,435 250,440 252,444 253,447 253,450 252,453 252,456 252,459" fill="none" stroke="#a8805a" stroke-width="0.7" opacity="0.55"/>
<polyline points="254,461 250,461 247,461 244,461 241,462 238,463 233,462 229,459 223,456 218,453 213,449 209,444 206,439 202,435 198,431 193,426 191,422 190,418 191,415 192,412 191,409 192,406 193,404 195,402 197,401 199,399 203,399 208,402 214,406 218,409 223,411 228,413 233,417 238,421 242,426 245,431 248,435 250,440 251,443 252,447 253,451 255,455 256,459 254,461" fill="none" stroke="#a8805a" stroke-width="0.7" opacity="0.55"/>
<polyline points="255,462 254,464 251,466 247,466 242,463 237,460 232,458 228,458 223,457 218,454 213,450 208,445 203,440 199,436 195,431 193,426 190,421 187,416 184,411 183,407 185,404 189,404 192,403 194,402 196,400 200,400 204,400 208,402 213,403 218,406 223,409 228,414 232,418 237,422 243,426 249,431 253,436 255,441 256,445 257,449 258,453 258,457 256,459 255,462" fill="none" stroke="#a8805a" stroke-width="0.7" opacity="0.55"/>
<polyline points="257,463 257,467 255,470 250,469 244,467 239,465 234,464 229,462 224,460 218,456 212,451 206,447 201,441 197,436 195,431 193,426 190,421 186,416 183,411 183,407 185,404 187,403 189,401 191,399 194,397 198,397 202,397 206,397 211,398 217,401 223,406 229,412 234,417 239,421 245,425 250,431 253,436 255,441 256,445 258,450 258,453 257,456 256,459 257,463" fill="none" stroke="#a8805a" stroke-width="0.7" opacity="0.55"/>
<polyline points="260,466 256,467 251,466 247,465 244,466 240,467 236,467 230,464 224,459 218,455 212,451 207,446 201,441 196,436 191,431 186,425 182,419 181,414 182,410 184,407 185,404 184,400 185,396 187,394 192,395 197,396 202,397 207,399 212,401 218,405 223,408 229,410 236,414 242,419 247,425 250,431 253,436 257,441 261,447 263,453 264,457 263,461 262,464 260,466" fill="none" stroke="#a8805a" stroke-width="0.7" opacity="0.55"/>
<polyline points="260,466 258,469 255,470 251,470 247,471 242,470 236,467 229,463 224,459 218,456 211,453 204,449 198,443 194,436 191,430 187,425 184,419 182,414 181,409 180,405 180,401 180,397 183,395 189,396 194,397 198,397 201,396 205,395 211,396 217,400 223,404 230,409 236,414 241,419 246,425 251,431 256,437 262,443 265,449 265,453 262,456 260,459 260,462 260,466" fill="none" stroke="#a8805a" stroke-width="0.7" opacity="0.55"/>
<polyline points="266,472 262,473 256,472 251,471 247,472 243,473 238,472 231,469 224,465 217,460 210,455 204,448 200,442 196,436 191,431 185,424 180,418 178,412 179,408 181,405 182,402 182,398 182,394 185,392 188,390 192,389 197,388 203,390 210,395 217,400 223,404 230,408 237,412 244,418 249,424 253,431 256,436 259,442 261,447 262,452 263,457 265,462 267,467 266,472" fill="none" stroke="#a8805a" stroke-width="0.7" opacity="0.55"/>
<polyline points="268,473 263,474 257,472 252,471 247,472 242,471 237,470 230,467 224,464 217,461 210,456 203,449 198,443 194,436 188,430 181,424 176,417 174,411 174,406 176,402 177,398 179,395 182,394 186,393 189,391 192,389 197,388 203,391 210,396 217,401 223,404 230,407 237,412 244,417 251,424 256,430 261,437 265,444 266,449 266,454 266,459 268,464 270,470 268,473" fill="none" stroke="#a8805a" stroke-width="0.7" opacity="0.55"/>
<polyline points="267,472 264,475 261,477 256,478 250,476 243,473 237,470 231,469 224,467 216,464 209,458 202,451 196,443 191,437 186,430 181,424 178,417 176,411 173,405 171,399 173,395 178,394 183,394 186,393 188,389 190,386 195,386 202,388 209,392 216,396 224,400 231,405 237,412 244,417 251,424 259,430 264,438 267,444 266,449 266,454 267,459 269,465 269,469 267,472" fill="none" stroke="#a8805a" stroke-width="0.7" opacity="0.55"/>
<polyline points="272,477 266,477 261,477 257,478 253,481 248,482 240,480 232,474 224,468 217,463 209,457 203,450 197,443 191,437 184,430 178,423 174,416 174,411 175,406 176,402 174,396 172,390 173,386 177,383 182,382 187,382 193,383 201,386 209,391 216,396 224,399 232,403 240,409 246,416 251,424 255,430 259,437 264,443 268,450 270,456 272,462 274,468 275,474 272,477" fill="none" stroke="#a8805a" stroke-width="0.7" opacity="0.55"/>
<polyline points="271,476 266,477 262,479 260,483 256,486 249,485 241,481 232,475 224,469 216,464 209,458 202,451 195,444 188,437 181,430 176,423 174,416 175,411 175,406 173,400 169,393 169,387 171,384 176,382 181,381 186,380 193,382 201,385 208,389 216,392 224,395 233,400 240,408 246,416 251,424 256,430 262,437 267,444 271,451 273,457 275,464 276,470 275,474 271,476" fill="none" stroke="#a8805a" stroke-width="0.7" opacity="0.55"/>
<polyline points="269,474 268,479 268,485 264,488 257,487 249,484 240,479 232,476 224,471 216,466 208,459 200,453 192,446 184,438 179,430 177,423 177,417 174,411 170,403 166,396 166,390 168,387 172,384 175,381 180,380 186,381 193,383 200,384 207,385 215,387 224,392 233,400 240,409 246,416 253,423 260,430 266,438 270,445 273,452 276,459 278,465 276,469 272,472 269,474" fill="none" stroke="#a8805a" stroke-width="0.7" opacity="0.55"/>
<polyline points="262,485 253,481 246,479 240,479 233,478 224,473 216,467 208,460 200,453 192,445 185,438 180,430 174,422 167,414 160,404 157,397 160,392 164,389 168,386 170,382 172,378 177,376 184,377 191,379 199,382 207,385 216,391 224,398 231,404 240,409 249,414 258,421 265,430 269,438 272,446 276,453" fill="none" stroke="#a8805a" stroke-width="0.7" opacity="0.55"/>
<polyline points="276,481 274,485 271,489 266,491 258,489 249,484 240,478 232,475 224,473 215,469 206,463 197,455 189,447 181,438 175,430 170,421 168,414 165,406 160,398 156,390 157,384 162,381 170,382 175,381 180,380 185,378 191,378 198,380 206,383 215,386 224,391 233,399 241,407 248,415 257,422 267,430 276,439 280,448" fill="none" stroke="#a8805a" stroke-width="0.7" opacity="0.55"/>
<polyline points="243,487 233,480 224,472 216,466 207,461 198,454 190,447 182,438 173,430 166,420 161,412 160,404 161,398 161,393 159,385 157,377 160,372 166,371 175,373 183,375 190,377 198,380 207,384 215,389 224,393 233,397 243,404 251,413 257,422 263,430 270,438 278,447" fill="none" stroke="#a8805a" stroke-width="0.7" opacity="0.55"/>
<polyline points="251,488 242,483 234,480 225,478 215,473 204,466 195,457 186,448 178,439 172,430 168,421 166,413 162,405 157,396 153,388 155,382 161,380 167,380 172,378 176,375 181,373 188,373 196,375 205,377 214,381 224,387 234,396 242,405 251,413 260,421 270,430 278,439" fill="none" stroke="#a8805a" stroke-width="0.7" opacity="0.55"/>
<polyline points="235,488 225,482 215,473 206,463 198,455 189,447 181,438 175,430 168,421 162,412 155,402 152,394 154,388 158,384 161,380 161,374 162,367 167,364 175,364 185,368 195,372 204,376 214,383 224,390 233,398 243,405 253,412 263,420 269,430 273,439 275,446 280,455" fill="none" stroke="#a8805a" stroke-width="0.7" opacity="0.55"/>
<polyline points="235,486 225,480 215,474 204,466 196,457 187,448 178,439 167,429 157,419 151,408 151,400 153,394 154,388 153,381 155,375 159,371 164,369 170,367 176,366 185,368 195,374 206,381 215,386 224,389 235,393 246,400 256,410 264,420 271,430 279,439" fill="none" stroke="#a8805a" stroke-width="0.7" opacity="0.55"/><polyline points="220,429 220,426 221,423 223,421 223,418 222,415 223,412 224,410 224,407" fill="none" stroke="#2e3236" stroke-width="0.8" opacity="0.6" stroke-dasharray="2,1"/>
<polyline points="213,461 215,463 218,464 221,465 223,466 226,466 229,467 232,469 234,467" fill="none" stroke="#2e3236" stroke-width="0.8" opacity="0.6" stroke-dasharray="2,1"/>
<polyline points="240,440 241,437 242,434 242,431 241,428 238,426 239,423 238,421 235,420" fill="none" stroke="#2e3236" stroke-width="0.8" opacity="0.6" stroke-dasharray="2,1"/>
<polyline points="213,411 210,412 208,411 205,411 202,413 201,416 199,418 197,420 194,421" fill="none" stroke="#2e3236" stroke-width="0.8" opacity="0.6" stroke-dasharray="2,1"/>
<polyline points="199,434 198,431 196,429 193,430 190,429 187,431 185,433 183,435 181,437" fill="none" stroke="#2e3236" stroke-width="0.8" opacity="0.6" stroke-dasharray="2,1"/>
<polyline points="216,479 213,480 211,478 208,476 206,474 204,472 206,469 205,466 204,463" fill="none" stroke="#2e3236" stroke-width="0.8" opacity="0.6" stroke-dasharray="2,1"/></g>
<polygon points="377.7,298.0 403.6,304.8 427.2,313.0 450.8,322.5 474.5,330.8 483.9,336.7 498.0,340.2 521.7,348.5 550.4,357.0 544.7,361.3 537.1,372.7 526.7,387.8 522.8,389.0 492.0,378.0 469.0,366.0 453.7,360.0 430.7,346.0 400.0,324.6 378.0,299.0" fill="#d8d2c8" />
<clipPath id="c8"><polygon points="377.7,298.0 403.6,304.8 427.2,313.0 450.8,322.5 474.5,330.8 483.9,336.7 498.0,340.2 521.7,348.5 550.4,357.0 544.7,361.3 537.1,372.7 526.7,387.8 522.8,389.0 492.0,378.0 469.0,366.0 453.7,360.0 430.7,346.0 400.0,324.6 378.0,299.0"/></clipPath><g clip-path="url(#c8)"><ellipse cx="534.9" cy="326.2" rx="2.6" ry="1.7" fill="#eeeae4" opacity="0.7" transform="rotate(37 534.9 326.2)"/>
<ellipse cx="378.7" cy="302.9" rx="3.0" ry="3.5" fill="#eeeae4" opacity="0.7" transform="rotate(15 378.7 302.9)"/>
<ellipse cx="497.1" cy="362.2" rx="4.7" ry="3.1" fill="#eeeae4" opacity="0.7" transform="rotate(18 497.1 362.2)"/>
<ellipse cx="471.3" cy="325.9" rx="2.5" ry="2.7" fill="#eeeae4" opacity="0.7" transform="rotate(11 471.3 325.9)"/>
<ellipse cx="425.2" cy="378.0" rx="4.3" ry="1.5" fill="#eeeae4" opacity="0.7" transform="rotate(25 425.2 378.0)"/>
<ellipse cx="470.7" cy="303.2" rx="4.2" ry="2.8" fill="#eeeae4" opacity="0.7" transform="rotate(11 470.7 303.2)"/>
<ellipse cx="548.0" cy="370.7" rx="5.0" ry="3.5" fill="#eeeae4" opacity="0.7" transform="rotate(1 548.0 370.7)"/>
<ellipse cx="416.5" cy="381.2" rx="5.0" ry="1.7" fill="#eeeae4" opacity="0.7" transform="rotate(23 416.5 381.2)"/>
<ellipse cx="503.8" cy="352.9" rx="2.7" ry="1.3" fill="#eeeae4" opacity="0.7" transform="rotate(16 503.8 352.9)"/>
<ellipse cx="380.5" cy="305.7" rx="5.7" ry="2.3" fill="#eeeae4" opacity="0.7" transform="rotate(3 380.5 305.7)"/>
<ellipse cx="529.1" cy="331.5" rx="6.9" ry="2.8" fill="#eeeae4" opacity="0.7" transform="rotate(25 529.1 331.5)"/>
<ellipse cx="450.9" cy="359.2" rx="3.7" ry="1.9" fill="#eeeae4" opacity="0.7" transform="rotate(35 450.9 359.2)"/>
<ellipse cx="412.9" cy="333.1" rx="6.2" ry="2.1" fill="#eeeae4" opacity="0.7" transform="rotate(15 412.9 333.1)"/>
<ellipse cx="534.7" cy="316.8" rx="3.7" ry="3.5" fill="#eeeae4" opacity="0.7" transform="rotate(11 534.7 316.8)"/>
<ellipse cx="434.8" cy="378.3" rx="4.1" ry="3.7" fill="#eeeae4" opacity="0.7" transform="rotate(33 434.8 378.3)"/>
<ellipse cx="523.9" cy="318.5" rx="3.6" ry="3.1" fill="#eeeae4" opacity="0.7" transform="rotate(33 523.9 318.5)"/>
<ellipse cx="416.5" cy="316.7" rx="3.7" ry="1.6" fill="#eeeae4" opacity="0.7" transform="rotate(17 416.5 316.7)"/>
<ellipse cx="464.6" cy="355.2" rx="2.8" ry="1.7" fill="#eeeae4" opacity="0.7" transform="rotate(5 464.6 355.2)"/>
<ellipse cx="424.3" cy="314.9" rx="7.2" ry="2.2" fill="#eeeae4" opacity="0.7" transform="rotate(6 424.3 314.9)"/>
<ellipse cx="492.8" cy="386.5" rx="6.5" ry="2.9" fill="#eeeae4" opacity="0.7" transform="rotate(15 492.8 386.5)"/>
<ellipse cx="447.3" cy="325.5" rx="6.5" ry="3.3" fill="#eeeae4" opacity="0.7" transform="rotate(20 447.3 325.5)"/>
<ellipse cx="526.6" cy="357.4" rx="5.9" ry="1.9" fill="#eeeae4" opacity="0.7" transform="rotate(10 526.6 357.4)"/>
<ellipse cx="417.0" cy="381.0" rx="6.5" ry="3.5" fill="#eeeae4" opacity="0.7" transform="rotate(33 417.0 381.0)"/>
<ellipse cx="516.7" cy="337.7" rx="6.3" ry="1.7" fill="#eeeae4" opacity="0.7" transform="rotate(26 516.7 337.7)"/>
<ellipse cx="385.1" cy="385.9" rx="6.9" ry="1.7" fill="#eeeae4" opacity="0.7" transform="rotate(31 385.1 385.9)"/>
<ellipse cx="519.9" cy="301.8" rx="5.3" ry="2.3" fill="#eeeae4" opacity="0.7" transform="rotate(25 519.9 301.8)"/>
<ellipse cx="530.8" cy="363.8" rx="3.6" ry="2.6" fill="#eeeae4" opacity="0.7" transform="rotate(22 530.8 363.8)"/>
<ellipse cx="379.7" cy="310.0" rx="4.3" ry="1.7" fill="#eeeae4" opacity="0.7" transform="rotate(9 379.7 310.0)"/>
<ellipse cx="494.5" cy="385.5" rx="4.8" ry="2.9" fill="#eeeae4" opacity="0.7" transform="rotate(30 494.5 385.5)"/>
<ellipse cx="493.9" cy="357.8" rx="2.5" ry="3.4" fill="#eeeae4" opacity="0.7" transform="rotate(6 493.9 357.8)"/>
<ellipse cx="408.9" cy="344.4" rx="5.4" ry="3.1" fill="#eeeae4" opacity="0.7" transform="rotate(12 408.9 344.4)"/>
<ellipse cx="540.9" cy="355.2" rx="6.7" ry="2.4" fill="#eeeae4" opacity="0.7" transform="rotate(3 540.9 355.2)"/>
<ellipse cx="379.8" cy="356.3" rx="4.6" ry="2.4" fill="#eeeae4" opacity="0.7" transform="rotate(13 379.8 356.3)"/>
<ellipse cx="408.5" cy="341.1" rx="3.8" ry="3.5" fill="#eeeae4" opacity="0.7" transform="rotate(7 408.5 341.1)"/>
<ellipse cx="544.8" cy="376.3" rx="4.4" ry="3.2" fill="#eeeae4" opacity="0.7" transform="rotate(23 544.8 376.3)"/>
<ellipse cx="458.2" cy="371.9" rx="6.7" ry="1.8" fill="#eeeae4" opacity="0.7" transform="rotate(36 458.2 371.9)"/>
<ellipse cx="383.2" cy="298.5" rx="4.9" ry="2.0" fill="#eeeae4" opacity="0.7" transform="rotate(17 383.2 298.5)"/>
<ellipse cx="460.4" cy="340.6" rx="7.0" ry="3.5" fill="#eeeae4" opacity="0.7" transform="rotate(14 460.4 340.6)"/>
<ellipse cx="427.4" cy="357.5" rx="3.5" ry="2.3" fill="#eeeae4" opacity="0.7" transform="rotate(29 427.4 357.5)"/>
<ellipse cx="378.7" cy="368.2" rx="6.2" ry="2.2" fill="#eeeae4" opacity="0.7" transform="rotate(10 378.7 368.2)"/><polyline points="439,315 441,313 443,311 444,308 442,305 441,303 441,300 443,297" fill="none" stroke="#b83232" stroke-width="0.9" opacity="0.85"/>
<polyline points="419,322 421,321 424,319 424,316 424,313 425,310 426,307 427,305" fill="none" stroke="#b83232" stroke-width="0.9" opacity="0.85"/>
<polyline points="410,305 407,304 404,303 401,302 400,299 398,297 398,294 398,291" fill="none" stroke="#b83232" stroke-width="0.9" opacity="0.85"/>
<polyline points="466,305 464,302 462,301 459,300 456,299 453,298 450,297 449,295" fill="none" stroke="#b83232" stroke-width="0.9" opacity="0.85"/>
<polyline points="448,316 447,319 446,322 448,324 450,327 451,329 452,332 451,335" fill="none" stroke="#b83232" stroke-width="0.9" opacity="0.85"/>
<polyline points="477,340 480,340 483,340 485,342 488,343 491,342 492,339 493,336" fill="none" stroke="#b83232" stroke-width="0.9" opacity="0.85"/>
<polyline points="411,337 409,339 409,342 408,345 409,348 408,351 406,353 404,355" fill="none" stroke="#b83232" stroke-width="0.9" opacity="0.85"/>
<polyline points="399,336 400,333 402,331 404,328 404,325 405,322 407,320 408,317" fill="none" stroke="#b83232" stroke-width="0.9" opacity="0.85"/>
<polyline points="423,345 424,342 425,339 427,338 428,336 429,333 430,330 431,327" fill="none" stroke="#b83232" stroke-width="0.9" opacity="0.85"/>
<polyline points="392,302 390,303 387,305 384,306 382,308 379,309 376,309 373,310" fill="none" stroke="#b83232" stroke-width="0.9" opacity="0.85"/>
<polyline points="437,325 438,322 437,319 437,316 436,314 433,312 431,310 429,308" fill="none" stroke="#b83232" stroke-width="0.9" opacity="0.85"/>
<polyline points="476,348 479,348 482,350 484,351 487,352 488,355 490,357 492,359" fill="none" stroke="#b83232" stroke-width="0.9" opacity="0.85"/>
<polyline points="396,305 395,302 397,300 397,297 398,294 400,291 402,289 402,286" fill="none" stroke="#b83232" stroke-width="0.9" opacity="0.85"/>
<polyline points="459,319 459,322 458,325 455,327 452,327 449,327 446,326 444,327" fill="none" stroke="#b83232" stroke-width="0.9" opacity="0.85"/>
<polyline points="436,338 433,340 432,343 429,343 427,341 424,339 422,337 420,335" fill="none" stroke="#b83232" stroke-width="0.9" opacity="0.85"/>
<polyline points="475,314 473,312 470,310 468,309 465,307 462,306 459,305 457,303" fill="none" stroke="#b83232" stroke-width="0.9" opacity="0.85"/>
<polyline points="452,319 454,321 456,323 458,325 460,328 462,330 462,333 465,334" fill="none" stroke="#b83232" stroke-width="0.9" opacity="0.85"/>
<polyline points="440,331 441,333 443,335 446,335 449,337 452,337 455,338 458,337" fill="none" stroke="#b83232" stroke-width="0.9" opacity="0.85"/>
<polyline points="465,315 464,318 462,320 461,322 459,325 458,328 457,331 454,331" fill="none" stroke="#b83232" stroke-width="0.9" opacity="0.85"/>
<polyline points="438,314 440,316 440,319 441,321 444,323 446,325 449,326 450,329" fill="none" stroke="#b83232" stroke-width="0.9" opacity="0.85"/>
<polyline points="412,321 413,318 413,315 414,312 417,311 419,308 418,305 419,303" fill="none" stroke="#b83232" stroke-width="0.9" opacity="0.85"/>
<polyline points="399,333 397,335 396,338 393,339 390,340 388,342 386,345 383,345" fill="none" stroke="#b83232" stroke-width="0.9" opacity="0.85"/>
<polyline points="409,349 409,352 410,355 413,357 415,359 418,360 420,362 423,363" fill="none" stroke="#b83232" stroke-width="0.9" opacity="0.85"/>
<polyline points="427,301 424,299 422,298 419,296 418,293 417,290 417,288 417,285" fill="none" stroke="#b83232" stroke-width="0.9" opacity="0.85"/><polyline points="404,301 404,302 403,302 403,302 403,302 403,302 402,302 401,302 401,302 400,302 400,302 399,302 399,301 398,301 398,301 397,301 397,300 397,300 397,300 396,299 396,299 396,299 396,298 396,298 397,298 397,298 397,298 398,298 398,298 399,298 399,298 400,298 400,298 401,298 401,299 402,299 402,299 403,300 403,300 404,300 404,301 404,301 404,301 404,301" fill="none" stroke="#a8805a" stroke-width="0.6" opacity="0.5"/>
<polyline points="408,303 407,303 406,303 406,304 405,304 405,304 404,304 403,304 402,304 401,304 400,304 399,303 398,303 397,302 396,302 394,301 393,301 393,300 393,299 393,299 392,298 393,298 393,297 393,297 394,296 394,296 395,296 396,296 397,296 398,296 399,296 400,296 401,296 402,297 403,297 404,298 405,298 406,299 406,300 407,300 407,301 408,302 408,302 408,303" fill="none" stroke="#a8805a" stroke-width="0.6" opacity="0.5"/>
<polyline points="410,304 410,304 410,305 409,305 408,306 407,306 405,306 404,306 402,305 401,305 399,305 398,305 396,304 395,303 394,302 393,302 392,301 391,300 390,299 390,298 389,297 389,296 389,296 390,295 391,295 392,295 393,294 394,294 395,294 397,294 398,294 400,295 401,295 403,296 404,297 405,297 407,298 408,299 410,300 410,301 411,302 411,302 410,303 410,304" fill="none" stroke="#a8805a" stroke-width="0.6" opacity="0.5"/>
<polyline points="414,305 414,306 413,307 411,307 410,307 408,307 407,308 405,308 403,308 401,307 399,306 397,306 396,305 394,304 392,303 390,302 389,301 387,300 386,299 386,297 386,296 387,296 387,295 387,294 388,293 389,292 391,292 392,292 394,292 396,293 398,293 400,294 402,294 404,294 406,295 408,296 409,297 410,298 411,300 413,301 414,302 414,303 414,304 414,305" fill="none" stroke="#a8805a" stroke-width="0.6" opacity="0.5"/>
<polyline points="417,306 416,307 416,308 414,309 412,309 411,310 409,310 407,310 404,310 402,309 399,308 397,307 395,306 392,305 390,304 388,303 386,301 385,300 384,298 383,297 383,296 383,295 383,293 383,292 384,291 386,290 388,291 391,291 393,291 395,291 397,291 400,292 402,292 405,293 407,294 409,296 410,297 412,298 414,300 416,301 417,302 418,304 418,305 417,306" fill="none" stroke="#a8805a" stroke-width="0.6" opacity="0.5"/>
<polyline points="421,308 421,309 420,310 418,311 416,312 413,312 410,312 407,311 405,311 402,311 399,310 396,309 393,308 391,306 388,304 386,303 384,301 382,300 381,298 379,296 378,294 378,293 379,292 381,291 383,290 384,289 385,288 387,287 390,288 394,288 397,289 400,290 403,291 405,292 408,293 411,295 414,296 416,298 418,299 419,301 419,303 420,304 421,306 421,308" fill="none" stroke="#a8805a" stroke-width="0.6" opacity="0.5"/>
<polyline points="426,309 425,311 422,312 420,312 418,313 416,314 413,315 410,314 406,314 402,313 399,312 395,310 392,309 389,307 386,305 383,304 380,302 378,300 377,298 377,296 376,294 376,292 376,290 377,289 378,288 380,286 382,285 385,285 389,286 393,287 396,288 400,288 403,289 407,290 410,292 413,294 415,295 418,297 420,299 421,301 423,303 424,305 426,307 426,309" fill="none" stroke="#a8805a" stroke-width="0.6" opacity="0.5"/>
<polyline points="426,310 427,312 426,314 423,315 420,315 417,315 413,315 410,315 407,315 403,314 399,314 394,313 390,311 386,309 383,307 381,304 378,302 375,300 373,297 371,295 371,293 372,291 373,289 375,288 377,287 380,286 382,285 384,284 387,284 391,284 395,285 399,286 403,288 407,289 412,290 416,292 419,294 422,297 425,299 427,302 427,304 427,306 426,308 426,310" fill="none" stroke="#a8805a" stroke-width="0.6" opacity="0.5"/>
<polyline points="430,311 430,313 430,316 428,317 424,318 420,318 415,317 412,317 408,318 403,317 398,316 394,314 389,312 385,310 382,307 379,304 377,302 374,300 371,297 368,294 368,292 369,290 371,288 372,287 373,285 375,283 378,282 382,282 385,281 390,281 395,282 399,284 404,286 408,288 412,290 417,291 421,294 424,297 426,299 427,302 429,304 430,306 430,309 430,311" fill="none" stroke="#a8805a" stroke-width="0.6" opacity="0.5"/>
<polyline points="433,312 432,314 432,317 431,319 427,320 423,321 418,320 413,320 408,319 403,318 398,316 393,314 388,313 383,311 379,308 376,305 374,302 371,300 369,297 366,294 364,291 364,288 365,286 366,284 368,282 372,281 377,281 381,281 385,280 389,280 394,280 399,282 404,284 409,287 413,289 418,291 422,294 425,296 429,299 432,302 435,305 436,308 435,310 433,312" fill="none" stroke="#a8805a" stroke-width="0.6" opacity="0.5"/>
<polyline points="438,314 438,317 437,319 433,320 428,321 423,321 419,322 415,322 409,321 404,320 398,319 392,317 387,314 382,311 379,308 376,305 372,302 367,300 363,296 362,293 363,290 363,288 364,286 365,283 367,281 370,280 373,278 377,277 382,277 388,278 394,280 399,282 405,284 410,285 416,287 421,290 425,293 428,296 431,299 433,302 435,305 435,308 436,310 438,314" fill="none" stroke="#a8805a" stroke-width="0.6" opacity="0.5"/>
<polyline points="443,316 442,318 438,320 433,320 428,321 424,322 420,323 415,323 410,322 404,321 398,320 392,318 386,315 381,312 377,309 371,306 365,303 361,299 358,296 358,292 358,289 359,287 360,284 363,282 366,280 369,279 372,277 376,276 382,276 388,278 394,280 399,281 405,282 411,283 417,285 423,289 428,292 432,295 436,299 438,302 439,306 440,309 442,312 443,316" fill="none" stroke="#a8805a" stroke-width="0.6" opacity="0.5"/>
<polyline points="445,316 444,319 440,321 434,321 430,322 426,324 422,325 417,325 411,325 404,324 398,322 391,320 384,317 379,313 374,310 369,307 363,303 358,299 356,296 356,292 357,289 358,286 359,283 360,281 363,279 366,277 370,275 374,274 380,274 387,276 393,277 399,279 406,279 413,281 419,284 425,287 430,291 434,295 438,299 440,302 441,306 442,309 444,313 445,316" fill="none" stroke="#a8805a" stroke-width="0.6" opacity="0.5"/>
<polyline points="451,318 449,322 445,324 440,325 436,326 430,327 423,326 417,325 411,325 404,325 397,324 390,321 384,318 379,314 373,310 367,307 361,303 356,299 353,295 350,291 349,287 349,283 352,281 357,279 360,277 363,275 366,272 371,271 378,272 386,274 392,276 399,277 406,279 412,281 419,284 426,287 433,290 438,294 442,299 443,303 445,306 447,310 450,315 451,318" fill="none" stroke="#a8805a" stroke-width="0.6" opacity="0.5"/>
<polyline points="449,318 446,320 443,323 442,326 440,329 435,331 428,331 420,330 412,329 405,327 397,325 390,322 383,319 375,316 368,312 362,308 358,304 357,299 356,296 353,292 350,287 348,283 349,280 352,277 355,274 359,272 364,271 371,271 378,271 384,271 391,271 399,272 407,275 414,279 420,283 426,287 433,290 438,294 443,299 446,303 449,307 451,311 451,315 449,318" fill="none" stroke="#a8805a" stroke-width="0.6" opacity="0.5"/>
<polyline points="453,319 452,323 449,326 445,328 439,329 433,330 428,331 422,333 414,333 405,331 397,327 389,323 382,320 374,317 367,313 362,308 356,304 352,299 348,295 347,290 349,287 350,284 351,280 350,276 351,272 355,269 361,269 369,269 376,269 383,269 391,270 399,272 407,275 415,277 424,280 431,284 436,289 439,294 442,299 447,303 452,307 454,312 454,316 453,319" fill="none" stroke="#a8805a" stroke-width="0.6" opacity="0.5"/>
<polyline points="462,322 459,326 453,328 446,329 440,330 435,331 429,332 421,332 414,331 405,331 397,329 388,326 380,322 373,317 367,313 358,309 350,304 344,299 341,294 341,289 341,285 342,281 344,277 348,275 352,272 355,270 359,267 366,266 374,267 383,269 391,271 399,272 407,274 416,276 425,279 432,284 440,288 446,293 451,298 453,303 455,308 457,312 460,318 462,322" fill="none" stroke="#a8805a" stroke-width="0.6" opacity="0.5"/>
<polyline points="461,322 457,325 455,329 453,333 448,335 440,336 431,335 423,335 414,333 406,331 397,328 389,325 380,322 370,319 361,315 354,310 350,304 346,299 342,294 338,289 335,283 335,279 337,275 339,271 343,268 350,266 359,266 367,267 374,267 381,266 389,266 399,268 408,272 416,276 424,280 433,284 440,288 447,293 453,298 459,304 465,309 467,315 465,319 461,322" fill="none" stroke="#a8805a" stroke-width="0.6" opacity="0.5"/>
<polyline points="466,324 462,327 459,331 454,333 447,335 439,335 432,336 425,337 416,338 407,337 396,334 387,329 378,324 369,320 360,316 352,310 346,305 340,299 336,293 333,288 333,283 337,279 341,276 343,273 344,268 347,264 353,262 362,262 371,263 380,263 389,264 399,266 408,270 418,273 428,276 438,281 447,286 452,292 454,298 457,303 461,309 466,314 467,320 466,324" fill="none" stroke="#a8805a" stroke-width="0.6" opacity="0.5"/>
<polyline points="470,326 467,330 464,334 460,338 455,341 446,341 435,340 425,337 415,335 406,335 396,333 386,330 376,326 367,321 358,316 350,311 344,305 340,299 336,293 330,287 324,281 323,275 327,271 334,268 341,266 346,263 352,261 360,260 369,260 379,261 388,262 399,264 409,269 418,274 426,278 435,282 446,286 456,292 462,298 466,304 468,310 471,315 471,321 470,326" fill="none" stroke="#a8805a" stroke-width="0.6" opacity="0.5"/>
<polyline points="476,328 471,331 465,334 461,338 457,342 450,345 440,345 429,343 417,340 407,337 396,334 386,331 376,326 366,322 356,317 346,312 339,305 335,299 334,293 331,288 327,281 323,275 323,269 327,265 333,262 340,259 348,258 358,258 368,259 378,260 388,261 398,262 410,265 420,270 429,276 436,282 445,287 454,292 462,298 468,304 472,310 476,317 478,323 476,328" fill="none" stroke="#a8805a" stroke-width="0.6" opacity="0.5"/></g>
<polygon points="505.0,340.0 521.7,348.5 550.4,357.0 544.7,361.3 537.1,372.7 526.7,387.8 522.8,387.5 507.4,378.3 495.2,369.0 492.0,360.0 495.2,350.7" fill="#a6c4c8" />
<clipPath id="c9"><polygon points="505.0,340.0 521.7,348.5 550.4,357.0 544.7,361.3 537.1,372.7 526.7,387.8 522.8,387.5 507.4,378.3 495.2,369.0 492.0,360.0 495.2,350.7"/></clipPath><g clip-path="url(#c9)"><polyline points="542,368 540,371 539,373 539,376 537,379 536,382 534,384" fill="none" stroke="#6a8090" stroke-width="0.7" opacity="0.6"/>
<polyline points="524,349 522,347 519,347 516,347 514,345 511,344 510,341" fill="none" stroke="#6a8090" stroke-width="0.7" opacity="0.6"/>
<polyline points="504,371 505,373 508,375 508,378 508,381 507,384 505,386" fill="none" stroke="#6a8090" stroke-width="0.7" opacity="0.6"/>
<polyline points="507,357 508,359 509,362 510,365 509,368 509,371 509,374" fill="none" stroke="#6a8090" stroke-width="0.7" opacity="0.6"/>
<polyline points="501,388 504,389 507,389 508,392 510,394 512,396 515,397" fill="none" stroke="#6a8090" stroke-width="0.7" opacity="0.6"/>
<polyline points="523,354 520,356 518,358 516,355 514,353 512,351 509,350" fill="none" stroke="#6a8090" stroke-width="0.7" opacity="0.6"/>
<polyline points="541,372 539,375 539,378 538,381 538,384 539,387 541,389" fill="none" stroke="#6a8090" stroke-width="0.7" opacity="0.6"/>
<polyline points="533,389 533,386 533,383 534,380 533,377 531,375 528,373" fill="none" stroke="#6a8090" stroke-width="0.7" opacity="0.6"/>
<polyline points="512,346 514,348 516,350 517,353 519,356 521,358 523,359" fill="none" stroke="#6a8090" stroke-width="0.7" opacity="0.6"/>
<polyline points="505,343 507,341 507,338 509,335 510,333 511,330 513,327" fill="none" stroke="#6a8090" stroke-width="0.7" opacity="0.6"/>
<polyline points="504,362 505,365 507,367 509,369 512,371 513,373 513,376" fill="none" stroke="#6a8090" stroke-width="0.7" opacity="0.6"/>
<polyline points="524,374 526,371 528,370 530,367 532,365 534,363 534,360" fill="none" stroke="#6a8090" stroke-width="0.7" opacity="0.6"/><ellipse cx="545.6" cy="360.6" rx="4.0" ry="2.4" fill="#5aa8d0" opacity="0.6" transform="rotate(-46 545.6 360.6)"/>
<ellipse cx="518.1" cy="356.6" rx="2.9" ry="2.5" fill="#5aa8d0" opacity="0.6" transform="rotate(-47 518.1 356.6)"/>
<ellipse cx="546.3" cy="363.8" rx="2.6" ry="2.4" fill="#5aa8d0" opacity="0.6" transform="rotate(-39 546.3 363.8)"/>
<ellipse cx="535.6" cy="360.8" rx="2.9" ry="1.4" fill="#5aa8d0" opacity="0.6" transform="rotate(-42 535.6 360.8)"/>
<ellipse cx="543.1" cy="368.8" rx="2.8" ry="2.5" fill="#5aa8d0" opacity="0.6" transform="rotate(-14 543.1 368.8)"/>
<ellipse cx="507.9" cy="389.9" rx="1.5" ry="2.2" fill="#5aa8d0" opacity="0.6" transform="rotate(-39 507.9 389.9)"/>
<ellipse cx="512.6" cy="364.7" rx="3.3" ry="1.9" fill="#5aa8d0" opacity="0.6" transform="rotate(-21 512.6 364.7)"/>
<ellipse cx="547.5" cy="348.4" rx="2.2" ry="2.2" fill="#5aa8d0" opacity="0.6" transform="rotate(-34 547.5 348.4)"/>
<ellipse cx="515.8" cy="365.2" rx="3.6" ry="2.8" fill="#5aa8d0" opacity="0.6" transform="rotate(-12 515.8 365.2)"/>
<ellipse cx="541.0" cy="357.3" rx="4.2" ry="2.4" fill="#5aa8d0" opacity="0.6" transform="rotate(-43 541.0 357.3)"/>
<ellipse cx="547.7" cy="352.4" rx="3.5" ry="2.4" fill="#5aa8d0" opacity="0.6" transform="rotate(-14 547.7 352.4)"/>
<ellipse cx="533.3" cy="389.2" rx="1.7" ry="1.1" fill="#5aa8d0" opacity="0.6" transform="rotate(-42 533.3 389.2)"/>
<ellipse cx="528.8" cy="361.2" rx="1.7" ry="1.4" fill="#5aa8d0" opacity="0.6" transform="rotate(-27 528.8 361.2)"/>
<ellipse cx="520.1" cy="378.2" rx="2.9" ry="2.8" fill="#5aa8d0" opacity="0.6" transform="rotate(-20 520.1 378.2)"/><ellipse cx="524.7" cy="357.9" rx="2.9" ry="1.6" fill="#d4e0e0" opacity="0.6" transform="rotate(-36 524.7 357.9)"/>
<ellipse cx="518.1" cy="349.0" rx="3.9" ry="1.2" fill="#d4e0e0" opacity="0.6" transform="rotate(-15 518.1 349.0)"/>
<ellipse cx="527.5" cy="344.8" rx="3.3" ry="1.5" fill="#d4e0e0" opacity="0.6" transform="rotate(-44 527.5 344.8)"/>
<ellipse cx="524.0" cy="349.2" rx="2.6" ry="2.4" fill="#d4e0e0" opacity="0.6" transform="rotate(-33 524.0 349.2)"/>
<ellipse cx="533.6" cy="363.5" rx="4.0" ry="1.6" fill="#d4e0e0" opacity="0.6" transform="rotate(-33 533.6 363.5)"/>
<ellipse cx="524.0" cy="357.1" rx="5.3" ry="1.5" fill="#d4e0e0" opacity="0.6" transform="rotate(-41 524.0 357.1)"/>
<ellipse cx="517.2" cy="379.3" rx="5.4" ry="2.1" fill="#d4e0e0" opacity="0.6" transform="rotate(-36 517.2 379.3)"/>
<ellipse cx="532.4" cy="381.3" rx="3.0" ry="2.3" fill="#d4e0e0" opacity="0.6" transform="rotate(-22 532.4 381.3)"/>
<ellipse cx="519.5" cy="347.2" rx="4.4" ry="1.4" fill="#d4e0e0" opacity="0.6" transform="rotate(-35 519.5 347.2)"/>
<ellipse cx="527.2" cy="388.1" rx="2.6" ry="1.1" fill="#d4e0e0" opacity="0.6" transform="rotate(-28 527.2 388.1)"/></g>
<polygon points="462.0,344.0 480.0,346.0 494.0,350.0 492.0,360.0 495.0,369.0 507.0,378.0 522.0,388.0 492.0,378.0 469.0,366.0 453.7,360.0 446.0,353.0" fill="#a8b454" opacity="0.95"/>
<clipPath id="c10"><polygon points="462.0,344.0 480.0,346.0 494.0,350.0 492.0,360.0 495.0,369.0 507.0,378.0 522.0,388.0 492.0,378.0 469.0,366.0 453.7,360.0 446.0,353.0"/></clipPath><g clip-path="url(#c10)"><ellipse cx="517.7" cy="346.0" rx="3.4" ry="0.8" fill="#d8d040" opacity="0.7" transform="rotate(22 517.7 346.0)"/>
<ellipse cx="455.1" cy="373.0" rx="2.6" ry="1.7" fill="#d8d040" opacity="0.7" transform="rotate(10 455.1 373.0)"/>
<ellipse cx="451.7" cy="352.0" rx="2.3" ry="1.0" fill="#d8d040" opacity="0.7" transform="rotate(8 451.7 352.0)"/>
<ellipse cx="487.4" cy="363.3" rx="4.0" ry="1.5" fill="#d8d040" opacity="0.7" transform="rotate(22 487.4 363.3)"/>
<ellipse cx="500.0" cy="381.6" rx="3.3" ry="0.8" fill="#d8d040" opacity="0.7" transform="rotate(18 500.0 381.6)"/>
<ellipse cx="448.5" cy="370.6" rx="1.7" ry="1.6" fill="#d8d040" opacity="0.7" transform="rotate(6 448.5 370.6)"/>
<ellipse cx="511.0" cy="348.1" rx="3.5" ry="1.8" fill="#d8d040" opacity="0.7" transform="rotate(11 511.0 348.1)"/>
<ellipse cx="491.1" cy="358.5" rx="2.3" ry="1.1" fill="#d8d040" opacity="0.7" transform="rotate(1 491.1 358.5)"/>
<ellipse cx="497.1" cy="347.2" rx="2.1" ry="0.9" fill="#d8d040" opacity="0.7" transform="rotate(32 497.1 347.2)"/>
<ellipse cx="486.2" cy="364.6" rx="3.2" ry="2.0" fill="#d8d040" opacity="0.7" transform="rotate(25 486.2 364.6)"/>
<ellipse cx="485.0" cy="357.8" rx="3.1" ry="2.2" fill="#d8d040" opacity="0.7" transform="rotate(23 485.0 357.8)"/>
<ellipse cx="482.3" cy="383.1" rx="1.7" ry="0.8" fill="#d8d040" opacity="0.7" transform="rotate(32 482.3 383.1)"/>
<ellipse cx="517.6" cy="346.2" rx="1.6" ry="0.8" fill="#d8d040" opacity="0.7" transform="rotate(23 517.6 346.2)"/>
<ellipse cx="456.5" cy="368.7" rx="3.5" ry="0.8" fill="#d8d040" opacity="0.7" transform="rotate(35 456.5 368.7)"/>
<ellipse cx="465.2" cy="368.4" rx="2.6" ry="1.3" fill="#d8d040" opacity="0.7" transform="rotate(16 465.2 368.4)"/>
<ellipse cx="446.3" cy="362.9" rx="2.3" ry="1.3" fill="#d8d040" opacity="0.7" transform="rotate(7 446.3 362.9)"/>
<ellipse cx="471.5" cy="374.8" rx="4.5" ry="1.0" fill="#d8d040" opacity="0.7" transform="rotate(35 471.5 374.8)"/>
<ellipse cx="492.7" cy="348.4" rx="1.5" ry="2.1" fill="#d8d040" opacity="0.7" transform="rotate(9 492.7 348.4)"/>
<ellipse cx="454.1" cy="372.8" rx="3.6" ry="2.1" fill="#d8d040" opacity="0.7" transform="rotate(20 454.1 372.8)"/>
<ellipse cx="469.7" cy="358.0" rx="2.1" ry="1.7" fill="#d8d040" opacity="0.7" transform="rotate(38 469.7 358.0)"/>
<ellipse cx="452.4" cy="361.0" rx="2.6" ry="0.9" fill="#d8d040" opacity="0.7" transform="rotate(24 452.4 361.0)"/>
<ellipse cx="520.7" cy="356.2" rx="3.7" ry="2.1" fill="#d8d040" opacity="0.7" transform="rotate(11 520.7 356.2)"/>
<ellipse cx="515.8" cy="376.9" rx="3.4" ry="1.0" fill="#d8d040" opacity="0.7" transform="rotate(11 515.8 376.9)"/>
<ellipse cx="453.7" cy="383.4" rx="3.9" ry="0.9" fill="#d8d040" opacity="0.7" transform="rotate(21 453.7 383.4)"/>
<ellipse cx="462.2" cy="377.7" rx="3.2" ry="2.2" fill="#d8d040" opacity="0.7" transform="rotate(29 462.2 377.7)"/><ellipse cx="453.7" cy="360.4" rx="2.7" ry="1.7" fill="#5a7a48" opacity="0.6" transform="rotate(15 453.7 360.4)"/>
<ellipse cx="460.3" cy="356.5" rx="1.9" ry="0.8" fill="#5a7a48" opacity="0.6" transform="rotate(14 460.3 356.5)"/>
<ellipse cx="464.9" cy="366.5" rx="3.5" ry="1.7" fill="#5a7a48" opacity="0.6" transform="rotate(6 464.9 366.5)"/>
<ellipse cx="489.3" cy="373.6" rx="1.6" ry="1.2" fill="#5a7a48" opacity="0.6" transform="rotate(8 489.3 373.6)"/>
<ellipse cx="473.7" cy="358.3" rx="3.3" ry="0.9" fill="#5a7a48" opacity="0.6" transform="rotate(22 473.7 358.3)"/>
<ellipse cx="490.5" cy="358.5" rx="3.6" ry="1.0" fill="#5a7a48" opacity="0.6" transform="rotate(13 490.5 358.5)"/>
<ellipse cx="498.6" cy="365.5" rx="3.1" ry="0.8" fill="#5a7a48" opacity="0.6" transform="rotate(6 498.6 365.5)"/>
<ellipse cx="501.9" cy="361.1" rx="3.4" ry="0.9" fill="#5a7a48" opacity="0.6" transform="rotate(10 501.9 361.1)"/>
<ellipse cx="511.6" cy="359.9" rx="1.5" ry="0.9" fill="#5a7a48" opacity="0.6" transform="rotate(31 511.6 359.9)"/>
<ellipse cx="466.2" cy="368.5" rx="3.3" ry="1.3" fill="#5a7a48" opacity="0.6" transform="rotate(30 466.2 368.5)"/>
<ellipse cx="520.2" cy="357.2" rx="3.4" ry="1.3" fill="#5a7a48" opacity="0.6" transform="rotate(8 520.2 357.2)"/>
<ellipse cx="456.0" cy="358.4" rx="1.6" ry="1.5" fill="#5a7a48" opacity="0.6" transform="rotate(22 456.0 358.4)"/>
<ellipse cx="449.4" cy="382.6" rx="2.7" ry="1.1" fill="#5a7a48" opacity="0.6" transform="rotate(6 449.4 382.6)"/>
<ellipse cx="481.7" cy="384.4" rx="2.7" ry="1.2" fill="#5a7a48" opacity="0.6" transform="rotate(24 481.7 384.4)"/>
<ellipse cx="487.8" cy="371.4" rx="1.7" ry="0.8" fill="#5a7a48" opacity="0.6" transform="rotate(1 487.8 371.4)"/>
<ellipse cx="509.2" cy="344.1" rx="1.9" ry="1.3" fill="#5a7a48" opacity="0.6" transform="rotate(20 509.2 344.1)"/>
<ellipse cx="514.5" cy="353.4" rx="1.5" ry="0.8" fill="#5a7a48" opacity="0.6" transform="rotate(20 514.5 353.4)"/>
<ellipse cx="468.1" cy="364.0" rx="3.0" ry="1.0" fill="#5a7a48" opacity="0.6" transform="rotate(27 468.1 364.0)"/>
<ellipse cx="447.5" cy="368.0" rx="3.5" ry="1.7" fill="#5a7a48" opacity="0.6" transform="rotate(23 447.5 368.0)"/>
<ellipse cx="520.7" cy="354.4" rx="2.0" ry="1.1" fill="#5a7a48" opacity="0.6" transform="rotate(20 520.7 354.4)"/>
<ellipse cx="508.3" cy="363.7" rx="1.4" ry="1.4" fill="#5a7a48" opacity="0.6" transform="rotate(9 508.3 363.7)"/>
<ellipse cx="513.1" cy="353.3" rx="2.0" ry="0.8" fill="#5a7a48" opacity="0.6" transform="rotate(12 513.1 353.3)"/>
<ellipse cx="491.7" cy="355.8" rx="1.4" ry="1.3" fill="#5a7a48" opacity="0.6" transform="rotate(29 491.7 355.8)"/>
<ellipse cx="454.3" cy="362.7" rx="1.4" ry="0.6" fill="#5a7a48" opacity="0.6" transform="rotate(15 454.3 362.7)"/>
<ellipse cx="467.8" cy="382.5" rx="1.3" ry="1.4" fill="#5a7a48" opacity="0.6" transform="rotate(29 467.8 382.5)"/><ellipse cx="477.7" cy="366.0" rx="1.9" ry="0.9" fill="#60b8c8" opacity="0.6" transform="rotate(2 477.7 366.0)"/>
<ellipse cx="514.8" cy="345.3" rx="1.6" ry="1.5" fill="#60b8c8" opacity="0.6" transform="rotate(18 514.8 345.3)"/>
<ellipse cx="484.9" cy="357.0" rx="1.7" ry="1.6" fill="#60b8c8" opacity="0.6" transform="rotate(5 484.9 357.0)"/>
<ellipse cx="468.5" cy="377.1" rx="2.0" ry="1.7" fill="#60b8c8" opacity="0.6" transform="rotate(7 468.5 377.1)"/>
<ellipse cx="486.1" cy="367.7" rx="2.5" ry="1.5" fill="#60b8c8" opacity="0.6" transform="rotate(2 486.1 367.7)"/>
<ellipse cx="487.5" cy="378.7" rx="1.4" ry="1.3" fill="#60b8c8" opacity="0.6" transform="rotate(18 487.5 378.7)"/>
<ellipse cx="476.8" cy="367.7" rx="2.8" ry="1.4" fill="#60b8c8" opacity="0.6" transform="rotate(36 476.8 367.7)"/>
<ellipse cx="495.9" cy="388.0" rx="2.9" ry="0.9" fill="#60b8c8" opacity="0.6" transform="rotate(6 495.9 388.0)"/>
<ellipse cx="451.4" cy="355.8" rx="1.5" ry="1.4" fill="#60b8c8" opacity="0.6" transform="rotate(28 451.4 355.8)"/>
<ellipse cx="492.5" cy="360.8" rx="2.4" ry="0.9" fill="#60b8c8" opacity="0.6" transform="rotate(37 492.5 360.8)"/><polyline points="447,358 445,356 442,357 439,356 439,353 441,350" fill="none" stroke="#b83232" stroke-width="0.9" opacity="0.7"/>
<polyline points="467,370 468,373 468,376 469,379 468,382 465,383" fill="none" stroke="#b83232" stroke-width="0.9" opacity="0.7"/>
<polyline points="501,383 500,380 498,378 496,376 495,373 493,371" fill="none" stroke="#b83232" stroke-width="0.9" opacity="0.7"/>
<polyline points="454,355 454,357 454,360 455,363 456,366 456,369" fill="none" stroke="#b83232" stroke-width="0.9" opacity="0.7"/>
<polyline points="498,354 496,352 495,349 493,347 490,347 487,347" fill="none" stroke="#b83232" stroke-width="0.9" opacity="0.7"/>
<polyline points="479,347 481,350 480,353 479,355 478,358 476,360" fill="none" stroke="#b83232" stroke-width="0.9" opacity="0.7"/></g>
<polyline points="507.4,339.0 504.4,341.5 495.2,350.7 492.0,360.0 495.2,369.0 507.4,378.3 522.8,387.5 528.0,391.0" fill="none" stroke="#3cbccc" stroke-width="3.2" stroke-linejoin="round" stroke-linecap="round" opacity="1"/>
<polygon points="423.0,335.0 436.0,336.0 443.0,338.0 445.0,348.0 430.0,348.0 424.0,342.0" fill="#48c0d0" />
<polygon points="409.0,325.0 426.0,328.0 428.0,338.0 412.0,338.0" fill="#b8c050" opacity="0.85"/>
<polygon points="372.0,318.0 400.0,341.5 423.0,355.3 446.0,369.0 469.0,375.0 492.0,381.4 519.7,392.0 512.6,393.4 506.9,395.3 503.1,402.9 494.6,417.0 486.1,429.3 474.8,446.3 460.6,470.0 450.0,490.0 436.0,485.0 432.0,464.0 423.0,453.0 420.0,428.6 407.3,429.5 392.0,432.0 380.0,420.0 372.0,385.0 368.0,340.0" fill="#e2d8ca" />
<clipPath id="c11"><polygon points="372.0,318.0 400.0,341.5 423.0,355.3 446.0,369.0 469.0,375.0 492.0,381.4 519.7,392.0 512.6,393.4 506.9,395.3 503.1,402.9 494.6,417.0 486.1,429.3 474.8,446.3 460.6,470.0 450.0,490.0 436.0,485.0 432.0,464.0 423.0,453.0 420.0,428.6 407.3,429.5 392.0,432.0 380.0,420.0 372.0,385.0 368.0,340.0"/></clipPath><g clip-path="url(#c11)"><polyline points="366,311 364,315 361,319" fill="none" stroke="#a8805a" stroke-width="0.7" opacity="0.58"/>
<polyline points="368,312 366,316 363,320" fill="none" stroke="#a8805a" stroke-width="0.7" opacity="0.58"/>
<polyline points="371,314 369,319 366,323 361,326" fill="none" stroke="#a8805a" stroke-width="0.7" opacity="0.58"/>
<polyline points="375,316 372,321 367,324 362,327 357,330 350,332 344,332 337,332 330,331 322,330 316,326 309,322 304,317 299,312 293,308 289,302 285,296 283,290 282,284 282,278 282,272 284,267 288,262 291,258 295,254 300,250 306,248 313,247 320,248 327,249 334,251 341,253 348,256 354,260 360,264 365,269 370,275 373,281 375,287 376,293 377,299 378,305 378,311 375,316" fill="none" stroke="#a8805a" stroke-width="0.7" opacity="0.58"/>
<polyline points="377,317 374,322 369,326 363,328 357,331 351,333 344,335 337,335 330,333 322,330 315,327 308,324 302,320 296,315 290,309 286,303 282,297 279,290 278,283 279,277 281,272 282,266 285,260 288,255 293,252 299,249 306,248 312,246 319,246 327,247 334,249 341,251 349,254 356,257 362,262 367,268 372,274 375,280 379,287 381,293 382,300 382,306 380,312 377,317" fill="none" stroke="#a8805a" stroke-width="0.7" opacity="0.58"/>
<polyline points="380,319 377,325 372,329 366,332 359,334 352,335 345,336 337,337 330,336 322,333 314,331 306,327 299,322 293,316 288,310 284,304 280,297 276,290 274,283 274,276 276,270 279,264 282,259 286,254 292,250 298,247 304,245 311,243 318,242 326,243 334,246 342,249 349,252 357,256 364,261 370,266 375,273 379,279 383,286 384,293 385,300 384,307 382,313 380,319" fill="none" stroke="#a8805a" stroke-width="0.7" opacity="0.58"/>
<polyline points="383,320 379,326 374,331 368,335 361,337 354,338 346,338 338,338 330,337 321,336 313,333 305,329 298,323 292,317 286,311 281,304 277,297 275,290 273,283 272,275 272,268 275,262 280,257 285,253 290,249 296,245 302,242 310,241 318,241 326,241 335,243 343,246 350,250 358,255 365,260 372,265 378,272 383,279 385,286 386,294 387,301 387,308 385,314 383,320" fill="none" stroke="#a8805a" stroke-width="0.7" opacity="0.58"/>
<polyline points="385,322 382,328 377,333 370,337 363,340 355,342 347,342 338,341 330,339 321,337 312,334 304,330 296,325 290,319 285,312 280,305 275,298 272,290 270,282 270,275 270,268 272,261 276,254 281,250 287,246 294,243 301,240 309,238 317,237 326,238 335,241 343,244 351,248 359,253 366,259 372,265 378,272 384,279 388,286 390,294 390,301 389,308 387,315 385,322" fill="none" stroke="#a8805a" stroke-width="0.7" opacity="0.58"/>
<polyline points="387,323 384,330 379,335 372,339 364,340 355,342 347,343 339,343 330,343 320,340 312,337 303,332 295,327 288,320 282,313 277,306 272,298 268,290 266,282 266,274 268,267 271,260 275,254 280,249 286,244 293,241 300,238 308,236 317,235 326,236 335,239 344,243 352,247 361,251 369,256 377,263 382,270 387,278 390,286 392,294 393,302 392,309 390,316 387,323" fill="none" stroke="#a8805a" stroke-width="0.7" opacity="0.58"/>
<polyline points="390,325 386,331 381,337 375,342 367,345 358,346 348,346 339,345 330,344 320,342 311,339 302,334 294,328 286,321 279,314 274,306 270,298 267,290 265,282 263,273 263,265 266,258 271,252 277,246 283,242 290,238 298,235 307,233 316,233 326,234 335,236 345,239 353,244 361,250 369,256 377,262 384,269 390,277 393,286 395,294 396,302 396,310 394,318 390,325" fill="none" stroke="#a8805a" stroke-width="0.7" opacity="0.58"/>
<polyline points="394,327 388,333 382,338 375,342 368,347 359,350 350,351 340,349 330,347 320,344 310,340 301,335 293,329 285,322 277,315 270,308 266,299 263,290 262,282 262,273 263,265 264,257 268,249 273,243 280,238 288,234 297,232 306,231 316,232 326,233 335,234 345,237 355,241 364,247 372,254 379,261 385,269 391,277 395,286 398,294 399,303 399,312 398,320 394,327" fill="none" stroke="#a8805a" stroke-width="0.7" opacity="0.58"/>
<polyline points="395,328 391,334 385,340 378,345 370,350 361,353 351,354 340,352 330,349 319,346 309,343 299,338 290,332 282,324 275,316 270,308 265,299 262,290 261,281 260,273 260,264 262,255 265,248 271,242 279,237 287,234 296,230 305,228 315,227 325,228 336,231 346,234 356,239 365,245 373,253 380,261 387,268 393,277 398,285 401,294 401,303 400,312 398,320 395,328" fill="none" stroke="#a8805a" stroke-width="0.7" opacity="0.58"/>
<polyline points="400,330 394,337 387,342 378,346 369,349 360,352 351,354 340,354 329,352 319,349 308,345 298,339 289,333 281,325 274,317 266,309 260,300 256,290 255,281 256,271 258,263 260,255 264,247 270,241 277,235 285,231 294,228 304,226 315,226 325,228 336,231 346,234 357,238 367,243 376,250 384,258 390,267 396,276 400,285 403,295 404,304 404,313 403,322 400,330" fill="none" stroke="#a8805a" stroke-width="0.7" opacity="0.58"/>
<polyline points="400,330 395,338 389,345 381,350 372,354 362,356 352,357 341,357 329,354 319,350 308,345 298,340 287,335 278,327 270,319 265,309 260,300 256,290 254,280 253,271 254,262 257,253 260,244 266,237 274,232 284,229 294,227 304,225 314,224 325,224 336,227 347,231 358,236 368,243 377,250 385,258 391,267 398,276 403,285 408,295 409,305 407,314 404,322 400,330" fill="none" stroke="#a8805a" stroke-width="0.7" opacity="0.58"/>
<polyline points="405,334 399,341 391,346 383,352 374,356 364,359 353,360 341,359 329,358 318,355 306,350 296,343 287,335 278,327 269,319 261,310 255,300 252,290 251,280 250,270 251,261 254,252 259,244 265,237 272,230 280,224 290,221 301,220 313,221 325,223 336,225 348,228 359,233 370,240 379,248 388,256 395,265 401,275 404,285 407,295 409,305 410,315 410,325 405,334" fill="none" stroke="#a8805a" stroke-width="0.7" opacity="0.58"/>
<polyline points="407,334 401,342 394,349 385,355 376,359 365,361 354,363 342,364 329,362 317,358 306,352 295,344 285,337 275,330 266,321 259,311 253,301 250,290 247,280 247,269 249,260 253,251 257,242 262,234 269,226 278,221 289,219 301,218 313,218 324,219 337,221 349,225 360,231 371,238 382,245 391,254 397,264 402,275 406,285 410,295 414,306 414,316 412,326 407,334" fill="none" stroke="#a8805a" stroke-width="0.7" opacity="0.58"/>
<polyline points="410,336 403,344 395,350 386,356 377,360 366,363 354,364 342,364 329,364 316,361 304,356 292,348 282,340 272,331 263,322 255,312 249,301 245,290 244,279 243,268 245,258 250,249 255,241 262,234 269,227 277,220 287,216 299,215 312,215 324,217 337,219 349,223 362,228 373,235 384,243 394,252 403,262 408,273 411,284 413,295 415,306 416,317 414,327 410,336" fill="none" stroke="#a8805a" stroke-width="0.7" opacity="0.58"/>
<polyline points="412,337 406,346 398,353 389,359 379,364 368,367 356,369 343,369 329,366 317,360 305,354 293,348 281,341 270,333 261,323 254,312 248,301 244,290 242,279 241,268 243,258 246,248 250,238 256,229 264,222 275,218 287,215 299,214 311,213 324,214 337,217 350,221 362,227 374,234 385,243 394,253 401,263 407,274 413,284 419,296 421,307 420,318 417,328 412,337" fill="none" stroke="#a8805a" stroke-width="0.7" opacity="0.58"/>
<polyline points="416,340 410,349 400,355 390,360 379,363 368,367 356,369 343,369 329,367 316,364 303,359 290,352 279,344 269,334 260,324 251,313 243,302 238,290 236,278 237,267 240,256 244,246 249,237 256,229 265,223 275,217 285,213 297,210 311,210 324,213 337,217 350,221 363,225 376,232 388,240 398,250 406,261 413,272 418,284 421,296 421,307 421,318 420,329 416,340" fill="none" stroke="#a8805a" stroke-width="0.7" opacity="0.58"/>
<polyline points="414,339 409,348 402,356 392,363 382,368 370,371 357,373 343,373 329,370 316,365 302,360 289,353 276,346 264,337 255,326 248,314 243,302 239,290 237,278 236,267 238,256 242,245 246,235 253,226 262,219 273,215 285,213 297,210 310,208 324,208 338,210 352,215 365,222 378,230 389,239 399,249 407,261 414,272 420,284 425,296 427,308 424,319 420,329 414,339" fill="none" stroke="#a8805a" stroke-width="0.7" opacity="0.58"/>
<polyline points="418,341 411,349 403,358 394,365 383,370 371,374 358,376 344,376 329,374 315,369 301,362 289,354 276,346 264,337 253,327 245,315 240,302 237,290 235,278 234,266 236,255 240,244 245,234 251,225 259,216 270,211 283,208 296,207 310,206 324,206 338,208 352,213 366,220 379,228 391,237 401,248 409,260 415,272 420,284 425,296 428,308 428,321 424,331 418,341" fill="none" stroke="#a8805a" stroke-width="0.7" opacity="0.58"/>
<polyline points="422,343 415,352 406,360 395,366 385,372 373,378 359,380 344,379 329,376 315,370 300,365 287,357 274,349 262,338 252,327 243,315 236,303 232,290 232,278 233,266 234,254 236,242 240,231 247,222 257,215 269,209 281,205 295,203 309,202 323,204 338,207 353,211 368,217 381,225 393,236 402,248 410,259 418,271 425,284 429,296 430,309 429,321 427,333 422,343" fill="none" stroke="#a8805a" stroke-width="0.7" opacity="0.58"/>
<polyline points="426,346 419,355 410,364 398,370 386,374 373,378 359,381 345,381 329,378 314,372 300,365 287,357 274,349 261,339 251,328 242,316 234,303 229,290 226,277 227,264 230,252 233,241 238,230 244,219 254,211 266,206 280,203 294,201 308,201 323,203 338,206 353,211 367,217 381,225 394,235 405,246 413,258 420,271 426,283 432,296 435,310 435,323 431,335 426,346" fill="none" stroke="#a8805a" stroke-width="0.7" opacity="0.58"/>
<polyline points="430,348 422,358 412,365 399,370 386,375 374,379 360,382 345,382 329,380 314,376 298,370 284,362 270,352 259,341 248,329 238,317 229,304 223,290 221,276 223,263 226,251 230,240 236,229 244,219 254,212 266,205 278,200 292,197 308,197 323,200 338,205 353,209 369,215 384,222 398,232 409,244 418,256 426,270 432,283 436,297 436,310 436,323 434,336 430,348" fill="none" stroke="#a8805a" stroke-width="0.7" opacity="0.58"/>
<polyline points="432,349 424,359 414,368 402,374 389,378 375,382 361,385 345,386 329,383 313,377 298,370 284,362 269,353 256,343 244,331 235,318 227,304 221,290 218,276 219,262 223,250 227,238 233,226 239,215 250,207 263,201 277,198 292,197 307,196 323,198 339,201 354,206 370,213 385,220 399,230 411,243 420,256 427,269 434,283 440,297 443,311 442,325 438,337 432,349" fill="none" stroke="#a8805a" stroke-width="0.7" opacity="0.58"/>
<polyline points="437,352 429,363 418,371 406,378 392,384 378,387 362,388 346,387 329,385 313,381 296,375 281,366 268,355 256,343 245,331 235,318 226,304 220,290 217,276 216,262 218,248 222,235 229,224 239,215 249,206 261,199 274,192 289,189 306,190 323,194 339,198 355,204 371,211 386,220 399,230 412,242 423,255 432,268 437,283 440,297 440,311 441,325 441,339 437,352" fill="none" stroke="#a8805a" stroke-width="0.7" opacity="0.58"/>
<polyline points="438,352 429,363 419,372 407,380 394,386 379,390 363,391 346,391 329,389 312,383 296,374 282,365 267,356 252,346 239,334 229,320 222,305 217,290 214,275 213,261 215,247 220,234 226,222 234,211 244,201 258,194 273,192 290,191 306,191 322,192 339,194 356,200 372,208 387,217 402,228 414,241 424,254 432,268 439,283 445,297 449,312 450,327 445,341 438,352" fill="none" stroke="#a8805a" stroke-width="0.7" opacity="0.58"/>
<polyline points="442,354 435,367 424,377 410,383 395,388 380,391 363,393 346,392 329,389 312,384 295,379 278,371 263,360 250,347 239,333 229,320 220,305 212,290 208,275 208,260 210,245 215,232 222,220 233,210 245,202 259,196 272,190 288,185 304,184 322,187 339,193 356,200 373,207 389,216 403,227 417,239 428,253 439,267 446,282 450,298 449,312 448,327 445,341 442,354" fill="none" stroke="#a8805a" stroke-width="0.7" opacity="0.58"/>
<polyline points="442,355 436,368 427,379 414,388 398,393 382,395 364,396 347,395 329,392 312,386 294,380 277,372 261,362 246,350 235,335 227,320 219,305 212,290 206,274 205,259 207,244 212,230 219,217 229,207 241,198 256,192 271,188 287,184 304,182 322,183 340,188 357,196 374,205 389,215 405,226 418,238 430,252 440,267 448,282 454,298 455,313 452,328 447,342 442,355" fill="none" stroke="#a8805a" stroke-width="0.7" opacity="0.58"/>
<polyline points="446,357 437,369 426,379 413,387 398,393 382,396 365,397 347,396 329,395 310,393 292,386 275,376 259,363 246,350 233,337 221,322 212,306 207,290 203,274 202,258 204,243 211,230 220,218 231,209 242,199 254,190 269,183 285,180 303,181 322,183 340,187 358,193 376,201 392,211 408,223 423,235 437,249 446,265 451,282 453,298 454,313 454,329 452,344 446,357" fill="none" stroke="#a8805a" stroke-width="0.7" opacity="0.58"/>
<polyline points="451,360 440,371 427,380 415,389 401,397 385,402 367,404 348,403 329,399 310,394 292,385 275,375 260,363 246,350 231,337 219,323 210,307 205,290 204,274 204,259 205,243 208,228 215,215 225,203 236,193 250,184 266,179 284,178 303,179 322,182 340,185 359,190 378,198 394,209 409,222 422,236 433,251 443,266 450,282 455,298 458,314 460,330 458,346 451,360" fill="none" stroke="#a8805a" stroke-width="0.7" opacity="0.58"/>
<polyline points="449,358 442,372 432,384 418,393 403,400 386,404 368,406 348,405 329,400 310,393 292,387 273,378 255,368 241,354 229,338 220,322 212,306 205,290 201,274 200,258 202,242 205,227 212,213 222,201 236,193 251,186 267,181 284,176 302,173 321,175 341,180 360,188 378,197 395,208 410,221 423,235 435,250 446,265 455,281 461,298 461,315 458,330 453,344 449,358" fill="none" stroke="#a8805a" stroke-width="0.7" opacity="0.58"/>
<polyline points="452,361 446,375 436,388 422,397 405,402 386,405 368,406 349,406 329,404 309,399 290,391 272,381 254,369 239,355 227,339 218,323 210,307 202,290 196,273 194,256 197,240 203,226 212,213 221,201 234,190 248,182 265,176 282,172 301,170 321,172 341,177 360,187 378,197 395,207 413,219 428,232 440,248 450,265 456,281 461,298 463,315 461,331 457,346 452,361" fill="none" stroke="#a8805a" stroke-width="0.7" opacity="0.58"/>
<polyline points="459,365 449,377 435,387 420,395 404,402 388,408 369,411 349,411 329,407 309,400 290,392 271,381 255,368 240,354 227,339 213,324 202,308 196,290 194,273 195,256 198,241 202,225 208,210 218,198 231,187 245,178 262,172 281,169 301,170 321,174 341,179 360,185 380,192 399,203 415,217 428,232 440,248 450,264 458,281 463,298 465,315 466,332 464,349 459,365" fill="none" stroke="#a8805a" stroke-width="0.7" opacity="0.58"/>
<polyline points="458,364 451,379 440,392 426,402 408,407 388,409 369,410 349,409 329,407 309,401 289,393 270,383 251,372 235,358 222,342 212,325 203,308 195,290 188,272 186,254 188,237 195,222 205,208 216,196 229,186 245,178 263,173 281,169 300,167 321,168 341,174 361,183 379,194 397,205 415,217 432,230 445,246 456,263 464,281 470,299 472,317 470,334 465,349 458,364" fill="none" stroke="#a8805a" stroke-width="0.7" opacity="0.58"/>
<polyline points="462,366 453,380 441,392 427,403 411,412 392,416 371,416 350,412 329,408 308,403 288,397 268,387 250,374 234,359 220,343 208,326 199,308 193,290 190,272 187,254 186,236 190,219 199,205 213,193 228,184 243,176 260,169 279,164 299,164 320,166 342,171 362,178 382,189 400,202 416,216 431,230 446,246 460,262 468,281 472,299 473,317 472,334 469,351 462,366" fill="none" stroke="#a8805a" stroke-width="0.7" opacity="0.58"/>
<polyline points="465,368 455,382 443,394 427,403 410,410 391,415 372,419 351,420 329,416 308,408 288,397 269,385 250,373 233,360 217,344 205,327 196,309 188,290 184,272 185,254 189,237 194,221 200,205 209,190 222,178 239,170 259,166 279,164 299,163 320,165 342,170 363,177 383,187 403,198 421,211 436,228 447,245 456,263 465,281 473,299 478,318 477,336 473,353 465,368" fill="none" stroke="#a8805a" stroke-width="0.7" opacity="0.58"/>
<polyline points="469,370 459,385 446,397 429,405 411,411 392,417 372,421 351,422 329,418 307,409 287,399 267,387 249,375 231,361 216,344 203,327 192,309 184,290 180,271 181,253 185,236 191,220 198,204 207,188 220,176 238,168 257,163 278,161 299,161 320,163 342,169 363,177 384,186 404,196 423,210 438,226 450,244 459,262 468,281 476,299 481,318 480,337 476,354 469,370" fill="none" stroke="#a8805a" stroke-width="0.7" opacity="0.58"/>
<polyline points="469,370 458,384 445,396 430,407 412,414 393,419 373,422 352,424 329,422 306,416 285,404 265,391 246,377 228,363 212,347 198,329 189,310 183,290 179,271 179,252 183,235 190,219 199,204 208,190 220,176 236,166 255,160 277,158 298,159 320,160 342,164 364,171 386,181 406,193 426,207 443,224 455,242 464,261 470,280 476,299 481,318 482,337 478,355 469,370" fill="none" stroke="#a8805a" stroke-width="0.7" opacity="0.58"/>
<polyline points="474,373 463,388 450,401 434,412 417,420 396,425 374,425 351,421 329,416 307,412 284,405 263,395 243,381 226,364 211,347 197,329 187,310 180,290 176,271 173,251 173,231 178,213 189,198 204,186 220,176 237,167 255,160 275,155 297,155 320,157 342,163 365,170 386,181 405,195 423,210 440,225 457,242 472,260 481,280 485,300 486,319 484,338 481,356 474,373" fill="none" stroke="#a8805a" stroke-width="0.7" opacity="0.58"/>
<polyline points="476,375 466,390 450,401 432,409 414,417 396,424 375,428 352,429 329,425 306,419 283,409 261,397 241,382 225,365 210,348 195,330 182,310 174,290 172,270 174,251 179,233 184,216 192,200 203,186 218,174 234,164 253,156 273,151 296,151 320,155 342,162 365,168 388,177 411,188 430,204 446,222 459,241 470,260 479,280 483,300 485,319 484,338 482,357 476,375" fill="none" stroke="#a8805a" stroke-width="0.7" opacity="0.58"/>
<polyline points="476,374 467,390 453,404 436,413 416,419 396,424 375,428 353,430 329,429 305,422 282,411 260,398 240,384 222,367 206,349 194,330 183,310 174,290 168,270 169,250 175,232 183,216 192,200 202,185 215,171 232,161 252,154 273,151 296,149 319,151 343,158 366,167 388,177 410,188 432,202 450,219 463,239 472,260 479,280 485,300 488,320 488,339 483,357 476,374" fill="none" stroke="#a8805a" stroke-width="0.7" opacity="0.58"/>
<polyline points="481,377 469,392 454,404 436,413 418,422 398,430 377,435 353,436 329,431 305,422 282,412 259,400 238,385 220,369 204,350 189,331 177,311 169,290 167,270 170,250 175,232 179,214 186,196 197,180 212,168 230,159 250,152 272,148 295,147 319,150 343,156 367,163 391,172 414,184 434,200 450,220 462,240 473,259 483,280 490,300 493,321 492,340 488,359 481,377" fill="none" stroke="#a8805a" stroke-width="0.7" opacity="0.58"/>
<polyline points="481,377 472,395 459,409 442,421 423,429 401,435 378,438 353,435 329,429 305,421 282,412 258,402 236,388 217,371 202,351 190,331 180,311 171,290 166,269 165,249 167,229 171,209 179,191 192,177 210,166 230,158 250,151 271,145 294,142 319,144 343,151 367,161 390,172 412,186 431,203 448,221 463,239 477,259 489,279 496,300 497,321 493,341 488,359 481,377" fill="none" stroke="#a8805a" stroke-width="0.7" opacity="0.58"/>
<polyline points="483,378 470,393 457,407 442,421 423,431 401,435 377,436 353,434 329,431 304,424 280,415 257,403 235,389 213,373 195,355 181,334 173,312 167,290 163,269 160,248 161,227 168,208 179,191 193,177 209,165 228,156 250,150 272,148 295,146 319,146 344,148 369,156 392,169 414,184 434,201 453,218 470,237 483,257 493,279 500,301 503,322 501,343 494,362 483,378" fill="none" stroke="#a8805a" stroke-width="0.7" opacity="0.58"/>
<polyline points="492,384 481,401 465,414 444,423 422,429 401,434 378,438 354,438 329,434 304,427 279,418 255,406 234,390 216,372 200,352 184,333 169,312 158,290 153,268 154,246 159,226 167,207 177,190 190,175 207,163 226,153 246,145 269,139 293,139 319,144 343,152 367,161 391,170 415,182 437,197 456,216 472,236 485,257 495,279 501,301 502,322 501,343 498,364 492,384" fill="none" stroke="#a8805a" stroke-width="0.7" opacity="0.58"/>
<polyline points="496,386 482,402 464,413 444,422 423,430 402,437 379,441 354,441 329,437 303,430 278,421 254,408 233,391 214,373 196,354 178,334 163,313 154,290 151,268 153,246 158,226 165,206 175,189 189,174 205,161 224,150 245,142 268,137 293,139 319,144 344,150 368,157 394,166 418,178 440,195 459,214 475,235 488,256 498,279 503,301 505,323 505,344 503,366 496,386" fill="none" stroke="#a8805a" stroke-width="0.7" opacity="0.58"/>
<polyline points="495,385 484,403 468,417 448,427 426,435 404,441 381,447 355,448 329,445 302,435 277,423 253,409 231,393 211,375 194,355 180,334 166,313 156,290 151,267 153,246 159,226 166,207 174,188 185,170 200,156 220,145 242,138 266,133 292,132 318,136 344,144 370,154 395,164 420,177 442,193 461,213 474,235 485,257 495,279 503,301 506,323 506,345 502,365 495,385" fill="none" stroke="#a8805a" stroke-width="0.7" opacity="0.58"/>
<polyline points="500,388 484,403 466,416 447,427 428,437 406,446 382,449 355,447 329,440 303,432 278,422 253,409 231,393 210,376 190,357 172,336 158,314 152,290 150,267 151,245 153,224 157,203 166,183 181,167 199,155 220,145 243,138 267,135 293,136 318,140 344,145 370,151 397,161 421,175 441,194 459,214 476,235 491,256 503,278 510,301 513,324 513,347 509,369 500,388" fill="none" stroke="#a8805a" stroke-width="0.7" opacity="0.58"/>
<polyline points="501,389 491,408 474,423 453,433 430,440 406,446 382,449 356,449 329,444 302,436 276,426 251,413 228,396 209,376 193,356 178,335 163,313 151,290 145,267 145,244 149,222 157,202 167,183 181,167 199,154 219,143 240,134 264,128 290,127 318,132 344,141 370,152 395,163 420,176 443,193 462,212 479,233 493,255 504,278 509,301 511,324 509,346 506,367 501,389" fill="none" stroke="#a8805a" stroke-width="0.7" opacity="0.58"/>
<polyline points="499,388 490,407 475,424 454,435 431,441 407,446 382,450 356,452 329,449 301,442 274,431 248,417 224,400 204,380 187,358 174,336 161,313 149,290 142,266 142,243 149,222 158,203 169,185 182,168 198,153 218,142 240,133 264,127 290,124 317,127 345,136 371,147 397,160 423,173 447,189 468,209 484,231 496,255 506,278 512,301 513,324 511,346 506,367 499,388" fill="none" stroke="#a8805a" stroke-width="0.7" opacity="0.58"/>
<polyline points="502,389 491,408 476,425 457,438 435,448 411,454 384,457 357,455 329,448 302,438 276,427 250,415 224,400 202,382 184,360 170,337 159,314 149,290 144,267 143,243 145,221 150,199 158,178 172,160 192,147 216,139 240,133 264,128 290,125 317,126 345,133 372,144 398,157 423,173 445,191 464,211 480,233 496,255 510,278 520,302 522,326 518,348 511,369 502,389" fill="none" stroke="#a8805a" stroke-width="0.7" opacity="0.58"/>
<polyline points="510,394 494,410 475,424 455,436 435,448 411,456 385,459 357,456 329,450 301,442 274,430 249,416 226,399 203,381 182,361 162,339 148,315 142,290 140,266 140,243 142,220 146,197 157,177 172,160 191,146 212,135 236,127 263,125 290,127 318,131 345,135 373,142 401,153 426,169 447,189 467,210 485,231 500,254 512,278 520,302 524,326 525,351 521,374 510,394" fill="none" stroke="#a8805a" stroke-width="0.7" opacity="0.58"/>
<polyline points="509,393 494,411 476,425 457,438 436,450 412,458 385,460 357,457 329,449 301,441 274,432 246,420 221,404 198,384 178,363 160,340 147,315 140,290 138,266 138,242 139,218 143,195 153,174 170,158 192,147 214,138 238,130 263,125 290,124 317,126 345,131 374,139 402,151 427,167 449,188 468,209 487,230 505,253 519,277 527,302 528,327 525,351 519,373 509,393" fill="none" stroke="#a8805a" stroke-width="0.7" opacity="0.58"/>
<polyline points="514,396 498,414 479,428 459,440 438,452 414,461 387,465 358,464 329,459 299,451 271,439 245,422 222,403 200,383 179,362 160,340 145,316 138,290 136,266 137,242 140,219 145,197 156,176 170,158 188,142 208,129 232,119 259,116 288,118 317,123 346,128 375,136 403,147 430,164 453,184 473,206 490,229 504,253 514,277 520,302 524,326 526,351 524,375 514,396" fill="none" stroke="#a8805a" stroke-width="0.7" opacity="0.58"/>
<polyline points="513,396 497,413 479,427 459,441 439,454 415,463 388,467 358,465 329,458 300,449 271,439 243,425 217,408 193,388 172,366 154,342 140,316 134,290 133,265 134,241 136,217 140,194 150,173 167,156 188,142 210,132 234,124 260,119 288,118 317,120 346,125 376,132 405,143 432,161 455,182 474,205 493,228 510,252 523,277 531,303 532,328 530,352 524,375 513,396" fill="none" stroke="#a8805a" stroke-width="0.7" opacity="0.58"/>
<polyline points="518,399 502,416 484,432 465,447 443,461 418,469 389,471 359,468 329,461 299,452 271,440 244,424 219,406 195,386 172,365 153,342 141,316 135,290 133,265 131,240 131,215 135,191 146,170 162,152 182,136 204,124 230,116 258,114 288,115 317,118 346,122 376,130 405,143 431,162 453,184 474,205 493,228 509,252 521,277 529,303 534,328 535,354 530,378 518,399" fill="none" stroke="#a8805a" stroke-width="0.7" opacity="0.58"/>
<polyline points="519,399 506,420 490,437 468,451 444,461 417,468 389,471 359,469 329,461 300,450 271,439 242,427 214,411 189,391 169,367 153,342 140,316 129,290 123,264 123,238 126,213 131,189 141,167 158,148 180,135 206,127 232,120 259,115 287,111 316,113 347,120 376,131 405,145 432,161 456,181 477,203 496,227 514,251 530,276 540,303 543,330 538,355 529,377 519,399" fill="none" stroke="#a8805a" stroke-width="0.7" opacity="0.58"/>
<polyline points="528,405 513,424 492,439 469,451 444,461 417,467 388,469 359,467" fill="none" stroke="#a8805a" stroke-width="0.7" opacity="0.58"/>
<polyline points="528,404 511,423 490,438 468,451 445,463 419,472 390,476 360,476" fill="none" stroke="#a8805a" stroke-width="0.7" opacity="0.58"/>
<polyline points="528,404 516,426 498,445 475,459 449,469 421,476 391,478 360,475" fill="none" stroke="#a8805a" stroke-width="0.7" opacity="0.58"/>
<polyline points="532,407 519,429 499,446 474,457 447,466 419,472 390,476 360,476" fill="none" stroke="#a8805a" stroke-width="0.7" opacity="0.58"/>
<polyline points="533,407 517,428 498,445 475,459 449,469 420,474 391,477 360,479" fill="none" stroke="#a8805a" stroke-width="0.7" opacity="0.58"/>
<polyline points="533,407 515,426 496,444 477,461 454,476 426,485 394,488 362,486" fill="none" stroke="#a8805a" stroke-width="0.7" opacity="0.58"/>
<polyline points="524,433 504,451 481,466 454,477 424,483 393,486 362,487" fill="none" stroke="#a8805a" stroke-width="0.7" opacity="0.58"/><circle cx="514.9" cy="409.4" r="0.5" fill="#2a2a2a" opacity="0.6"/>
<circle cx="417.8" cy="445.7" r="0.5" fill="#2a2a2a" opacity="0.6"/>
<circle cx="485.5" cy="460.0" r="0.5" fill="#2a2a2a" opacity="0.6"/>
<circle cx="405.8" cy="415.6" r="0.5" fill="#2a2a2a" opacity="0.6"/>
<circle cx="511.8" cy="475.3" r="0.5" fill="#2a2a2a" opacity="0.6"/>
<circle cx="400.1" cy="452.4" r="0.5" fill="#2a2a2a" opacity="0.6"/>
<circle cx="368.9" cy="465.4" r="0.5" fill="#2a2a2a" opacity="0.6"/>
<circle cx="378.4" cy="321.4" r="0.5" fill="#2a2a2a" opacity="0.6"/>
<circle cx="437.6" cy="320.7" r="0.5" fill="#2a2a2a" opacity="0.6"/>
<circle cx="373.8" cy="427.2" r="0.5" fill="#2a2a2a" opacity="0.6"/>
<circle cx="516.7" cy="375.3" r="0.5" fill="#2a2a2a" opacity="0.6"/>
<circle cx="463.7" cy="468.1" r="0.5" fill="#2a2a2a" opacity="0.6"/>
<circle cx="454.3" cy="385.4" r="0.5" fill="#2a2a2a" opacity="0.6"/>
<circle cx="463.0" cy="445.9" r="0.5" fill="#2a2a2a" opacity="0.6"/>
<circle cx="431.4" cy="360.3" r="0.5" fill="#2a2a2a" opacity="0.6"/>
<circle cx="502.4" cy="426.3" r="0.5" fill="#2a2a2a" opacity="0.6"/>
<circle cx="476.1" cy="472.9" r="0.5" fill="#2a2a2a" opacity="0.6"/>
<circle cx="433.3" cy="466.3" r="0.5" fill="#2a2a2a" opacity="0.6"/>
<circle cx="411.1" cy="381.0" r="0.5" fill="#2a2a2a" opacity="0.6"/>
<circle cx="389.9" cy="400.9" r="0.5" fill="#2a2a2a" opacity="0.6"/>
<circle cx="415.8" cy="410.1" r="0.5" fill="#2a2a2a" opacity="0.6"/>
<circle cx="421.6" cy="377.3" r="0.5" fill="#2a2a2a" opacity="0.6"/>
<circle cx="380.2" cy="401.2" r="0.5" fill="#2a2a2a" opacity="0.6"/>
<circle cx="508.3" cy="483.9" r="0.5" fill="#2a2a2a" opacity="0.6"/>
<circle cx="407.1" cy="469.3" r="0.5" fill="#2a2a2a" opacity="0.6"/>
<circle cx="449.9" cy="372.1" r="0.5" fill="#2a2a2a" opacity="0.6"/>
<circle cx="378.0" cy="435.6" r="0.5" fill="#2a2a2a" opacity="0.6"/>
<circle cx="451.7" cy="481.1" r="0.5" fill="#2a2a2a" opacity="0.6"/>
<circle cx="466.0" cy="380.3" r="0.5" fill="#2a2a2a" opacity="0.6"/>
<circle cx="380.1" cy="463.9" r="0.5" fill="#2a2a2a" opacity="0.6"/>
<circle cx="516.0" cy="455.1" r="0.5" fill="#2a2a2a" opacity="0.6"/>
<circle cx="392.7" cy="470.5" r="0.5" fill="#2a2a2a" opacity="0.6"/>
<circle cx="407.9" cy="332.5" r="0.5" fill="#2a2a2a" opacity="0.6"/>
<circle cx="479.7" cy="476.7" r="0.5" fill="#2a2a2a" opacity="0.6"/>
<circle cx="419.1" cy="486.7" r="0.5" fill="#2a2a2a" opacity="0.6"/>
<circle cx="501.0" cy="359.5" r="0.5" fill="#2a2a2a" opacity="0.6"/>
<circle cx="404.1" cy="426.9" r="0.5" fill="#2a2a2a" opacity="0.6"/>
<circle cx="415.6" cy="333.5" r="0.5" fill="#2a2a2a" opacity="0.6"/>
<circle cx="473.0" cy="421.6" r="0.5" fill="#2a2a2a" opacity="0.6"/>
<circle cx="498.5" cy="439.9" r="0.5" fill="#2a2a2a" opacity="0.6"/>
<circle cx="502.1" cy="446.2" r="0.5" fill="#2a2a2a" opacity="0.6"/>
<circle cx="411.7" cy="465.4" r="0.5" fill="#2a2a2a" opacity="0.6"/>
<circle cx="448.5" cy="368.5" r="0.5" fill="#2a2a2a" opacity="0.6"/>
<circle cx="430.3" cy="337.9" r="0.5" fill="#2a2a2a" opacity="0.6"/>
<circle cx="470.6" cy="458.5" r="0.5" fill="#2a2a2a" opacity="0.6"/>
<circle cx="402.5" cy="322.4" r="0.5" fill="#2a2a2a" opacity="0.6"/>
<circle cx="495.3" cy="358.1" r="0.5" fill="#2a2a2a" opacity="0.6"/>
<circle cx="476.2" cy="358.7" r="0.5" fill="#2a2a2a" opacity="0.6"/>
<circle cx="394.5" cy="451.3" r="0.5" fill="#2a2a2a" opacity="0.6"/>
<circle cx="415.6" cy="394.0" r="0.5" fill="#2a2a2a" opacity="0.6"/>
<circle cx="419.0" cy="462.1" r="0.5" fill="#2a2a2a" opacity="0.6"/>
<circle cx="509.1" cy="432.9" r="0.5" fill="#2a2a2a" opacity="0.6"/>
<circle cx="437.2" cy="463.0" r="0.5" fill="#2a2a2a" opacity="0.6"/>
<circle cx="461.5" cy="453.2" r="0.5" fill="#2a2a2a" opacity="0.6"/>
<circle cx="509.2" cy="469.4" r="0.5" fill="#2a2a2a" opacity="0.6"/>
<circle cx="428.2" cy="365.5" r="0.5" fill="#2a2a2a" opacity="0.6"/>
<circle cx="511.5" cy="379.1" r="0.5" fill="#2a2a2a" opacity="0.6"/>
<circle cx="412.3" cy="426.1" r="0.5" fill="#2a2a2a" opacity="0.6"/>
<circle cx="369.9" cy="418.3" r="0.5" fill="#2a2a2a" opacity="0.6"/>
<circle cx="383.6" cy="451.8" r="0.5" fill="#2a2a2a" opacity="0.6"/>
<circle cx="473.0" cy="457.1" r="0.5" fill="#2a2a2a" opacity="0.6"/>
<circle cx="425.8" cy="370.5" r="0.5" fill="#2a2a2a" opacity="0.6"/>
<circle cx="494.4" cy="338.8" r="0.5" fill="#2a2a2a" opacity="0.6"/>
<circle cx="448.9" cy="445.5" r="0.5" fill="#2a2a2a" opacity="0.6"/>
<circle cx="472.0" cy="436.2" r="0.5" fill="#2a2a2a" opacity="0.6"/>
<circle cx="421.5" cy="365.6" r="0.5" fill="#2a2a2a" opacity="0.6"/>
<circle cx="457.1" cy="327.8" r="0.5" fill="#2a2a2a" opacity="0.6"/>
<circle cx="473.9" cy="322.0" r="0.5" fill="#2a2a2a" opacity="0.6"/>
<circle cx="425.2" cy="360.7" r="0.5" fill="#2a2a2a" opacity="0.6"/>
<circle cx="442.5" cy="365.0" r="0.5" fill="#2a2a2a" opacity="0.6"/>
<circle cx="496.0" cy="353.7" r="0.5" fill="#2a2a2a" opacity="0.6"/>
<circle cx="509.0" cy="326.7" r="0.5" fill="#2a2a2a" opacity="0.6"/>
<circle cx="421.1" cy="347.3" r="0.5" fill="#2a2a2a" opacity="0.6"/>
<circle cx="378.2" cy="378.2" r="0.5" fill="#2a2a2a" opacity="0.6"/>
<circle cx="495.8" cy="333.9" r="0.5" fill="#2a2a2a" opacity="0.6"/>
<circle cx="435.8" cy="353.5" r="0.5" fill="#2a2a2a" opacity="0.6"/>
<circle cx="515.0" cy="393.3" r="0.5" fill="#2a2a2a" opacity="0.6"/>
<circle cx="483.7" cy="463.9" r="0.5" fill="#2a2a2a" opacity="0.6"/>
<circle cx="423.8" cy="467.9" r="0.5" fill="#2a2a2a" opacity="0.6"/>
<circle cx="497.0" cy="387.7" r="0.5" fill="#2a2a2a" opacity="0.6"/>
<circle cx="451.1" cy="339.7" r="0.5" fill="#2a2a2a" opacity="0.6"/>
<circle cx="476.2" cy="364.3" r="0.5" fill="#2a2a2a" opacity="0.6"/>
<circle cx="502.2" cy="434.1" r="0.5" fill="#2a2a2a" opacity="0.6"/>
<circle cx="456.0" cy="388.1" r="0.5" fill="#2a2a2a" opacity="0.6"/>
<circle cx="511.7" cy="416.1" r="0.5" fill="#2a2a2a" opacity="0.6"/>
<circle cx="428.4" cy="444.7" r="0.5" fill="#2a2a2a" opacity="0.6"/>
<circle cx="425.5" cy="431.3" r="0.5" fill="#2a2a2a" opacity="0.6"/>
<circle cx="465.1" cy="465.8" r="0.5" fill="#2a2a2a" opacity="0.6"/>
<circle cx="429.4" cy="332.7" r="0.5" fill="#2a2a2a" opacity="0.6"/>
<circle cx="475.3" cy="369.1" r="0.5" fill="#2a2a2a" opacity="0.6"/><ellipse cx="373.2" cy="407.6" rx="4.5" ry="1.5" fill="#f2eee8" opacity="0.6" transform="rotate(12 373.2 407.6)"/>
<ellipse cx="438.4" cy="346.8" rx="2.8" ry="1.8" fill="#f2eee8" opacity="0.6" transform="rotate(48 438.4 346.8)"/>
<ellipse cx="422.6" cy="440.0" rx="3.5" ry="1.8" fill="#f2eee8" opacity="0.6" transform="rotate(16 422.6 440.0)"/>
<ellipse cx="396.0" cy="450.5" rx="3.7" ry="1.6" fill="#f2eee8" opacity="0.6" transform="rotate(49 396.0 450.5)"/>
<ellipse cx="501.2" cy="363.5" rx="3.7" ry="2.1" fill="#f2eee8" opacity="0.6" transform="rotate(17 501.2 363.5)"/>
<ellipse cx="432.8" cy="366.9" rx="5.2" ry="1.2" fill="#f2eee8" opacity="0.6" transform="rotate(50 432.8 366.9)"/>
<ellipse cx="403.7" cy="375.0" rx="2.3" ry="2.8" fill="#f2eee8" opacity="0.6" transform="rotate(43 403.7 375.0)"/>
<ellipse cx="378.3" cy="408.8" rx="3.6" ry="2.2" fill="#f2eee8" opacity="0.6" transform="rotate(23 378.3 408.8)"/>
<ellipse cx="513.1" cy="355.5" rx="5.3" ry="1.5" fill="#f2eee8" opacity="0.6" transform="rotate(36 513.1 355.5)"/>
<ellipse cx="432.9" cy="408.5" rx="4.1" ry="2.3" fill="#f2eee8" opacity="0.6" transform="rotate(13 432.9 408.5)"/>
<ellipse cx="377.0" cy="485.0" rx="3.0" ry="1.7" fill="#f2eee8" opacity="0.6" transform="rotate(20 377.0 485.0)"/>
<ellipse cx="465.9" cy="487.2" rx="3.6" ry="1.6" fill="#f2eee8" opacity="0.6" transform="rotate(24 465.9 487.2)"/>
<ellipse cx="372.1" cy="333.5" rx="2.2" ry="1.6" fill="#f2eee8" opacity="0.6" transform="rotate(49 372.1 333.5)"/>
<ellipse cx="389.4" cy="412.4" rx="2.8" ry="1.1" fill="#f2eee8" opacity="0.6" transform="rotate(43 389.4 412.4)"/>
<ellipse cx="387.3" cy="341.2" rx="5.3" ry="1.5" fill="#f2eee8" opacity="0.6" transform="rotate(18 387.3 341.2)"/>
<ellipse cx="511.1" cy="351.4" rx="5.3" ry="1.6" fill="#f2eee8" opacity="0.6" transform="rotate(33 511.1 351.4)"/>
<ellipse cx="415.2" cy="376.3" rx="5.7" ry="2.8" fill="#f2eee8" opacity="0.6" transform="rotate(17 415.2 376.3)"/>
<ellipse cx="477.9" cy="342.0" rx="3.2" ry="1.1" fill="#f2eee8" opacity="0.6" transform="rotate(36 477.9 342.0)"/>
<ellipse cx="478.2" cy="446.4" rx="5.1" ry="1.8" fill="#f2eee8" opacity="0.6" transform="rotate(17 478.2 446.4)"/>
<ellipse cx="368.7" cy="393.7" rx="5.7" ry="1.9" fill="#f2eee8" opacity="0.6" transform="rotate(35 368.7 393.7)"/>
<ellipse cx="507.1" cy="466.4" rx="5.0" ry="2.2" fill="#f2eee8" opacity="0.6" transform="rotate(19 507.1 466.4)"/>
<ellipse cx="481.6" cy="389.8" rx="4.8" ry="1.4" fill="#f2eee8" opacity="0.6" transform="rotate(48 481.6 389.8)"/>
<ellipse cx="392.9" cy="454.0" rx="5.6" ry="1.3" fill="#f2eee8" opacity="0.6" transform="rotate(45 392.9 454.0)"/>
<ellipse cx="465.8" cy="421.8" rx="3.0" ry="1.7" fill="#f2eee8" opacity="0.6" transform="rotate(19 465.8 421.8)"/>
<ellipse cx="435.0" cy="429.4" rx="4.9" ry="2.4" fill="#f2eee8" opacity="0.6" transform="rotate(24 435.0 429.4)"/>
<ellipse cx="419.0" cy="449.3" rx="5.9" ry="1.4" fill="#f2eee8" opacity="0.6" transform="rotate(27 419.0 449.3)"/>
<ellipse cx="409.9" cy="485.6" rx="2.1" ry="2.8" fill="#f2eee8" opacity="0.6" transform="rotate(41 409.9 485.6)"/>
<ellipse cx="418.3" cy="435.0" rx="3.5" ry="2.3" fill="#f2eee8" opacity="0.6" transform="rotate(27 418.3 435.0)"/>
<ellipse cx="506.8" cy="396.7" rx="5.2" ry="2.2" fill="#f2eee8" opacity="0.6" transform="rotate(25 506.8 396.7)"/>
<ellipse cx="514.7" cy="351.6" rx="5.6" ry="3.0" fill="#f2eee8" opacity="0.6" transform="rotate(44 514.7 351.6)"/></g>
<polygon points="445.0,374.0 470.0,381.0 492.0,386.0 505.0,395.0 503.0,402.0 480.0,400.0 455.0,392.0 440.0,385.0" fill="#e8e2d8" opacity="0.85"/>
<clipPath id="c12"><polygon points="445.0,374.0 470.0,381.0 492.0,386.0 505.0,395.0 503.0,402.0 480.0,400.0 455.0,392.0 440.0,385.0"/></clipPath><g clip-path="url(#c12)"><circle cx="480.3" cy="387.4" r="0.5" fill="#2a2a2a" opacity="0.6"/>
<circle cx="481.1" cy="400.8" r="0.5" fill="#2a2a2a" opacity="0.6"/>
<circle cx="501.3" cy="381.2" r="0.5" fill="#2a2a2a" opacity="0.6"/>
<circle cx="468.6" cy="400.3" r="0.5" fill="#2a2a2a" opacity="0.6"/>
<circle cx="494.4" cy="377.2" r="0.5" fill="#2a2a2a" opacity="0.6"/>
<circle cx="491.1" cy="393.5" r="0.5" fill="#2a2a2a" opacity="0.6"/>
<circle cx="496.7" cy="401.2" r="0.5" fill="#2a2a2a" opacity="0.6"/>
<circle cx="469.1" cy="376.8" r="0.5" fill="#2a2a2a" opacity="0.6"/>
<circle cx="483.1" cy="395.9" r="0.5" fill="#2a2a2a" opacity="0.6"/>
<circle cx="446.1" cy="380.5" r="0.5" fill="#2a2a2a" opacity="0.6"/>
<circle cx="444.8" cy="373.8" r="0.5" fill="#2a2a2a" opacity="0.6"/>
<circle cx="447.1" cy="385.4" r="0.5" fill="#2a2a2a" opacity="0.6"/>
<circle cx="488.5" cy="393.7" r="0.5" fill="#2a2a2a" opacity="0.6"/>
<circle cx="463.4" cy="380.8" r="0.5" fill="#2a2a2a" opacity="0.6"/>
<circle cx="500.0" cy="401.5" r="0.5" fill="#2a2a2a" opacity="0.6"/>
<circle cx="445.2" cy="372.1" r="0.5" fill="#2a2a2a" opacity="0.6"/>
<circle cx="451.4" cy="380.3" r="0.5" fill="#2a2a2a" opacity="0.6"/>
<circle cx="495.2" cy="382.6" r="0.5" fill="#2a2a2a" opacity="0.6"/>
<circle cx="467.6" cy="383.5" r="0.5" fill="#2a2a2a" opacity="0.6"/>
<circle cx="454.5" cy="381.3" r="0.5" fill="#2a2a2a" opacity="0.6"/>
<circle cx="491.5" cy="372.7" r="0.5" fill="#2a2a2a" opacity="0.6"/>
<circle cx="455.5" cy="378.5" r="0.5" fill="#2a2a2a" opacity="0.6"/>
<circle cx="504.2" cy="380.1" r="0.5" fill="#2a2a2a" opacity="0.6"/>
<circle cx="458.1" cy="392.8" r="0.5" fill="#2a2a2a" opacity="0.6"/>
<circle cx="496.7" cy="383.7" r="0.5" fill="#2a2a2a" opacity="0.6"/>
<circle cx="471.7" cy="394.4" r="0.5" fill="#2a2a2a" opacity="0.6"/>
<circle cx="501.7" cy="385.7" r="0.5" fill="#2a2a2a" opacity="0.6"/>
<circle cx="459.6" cy="382.6" r="0.5" fill="#2a2a2a" opacity="0.6"/>
<circle cx="501.1" cy="376.9" r="0.5" fill="#2a2a2a" opacity="0.6"/>
<circle cx="460.0" cy="379.1" r="0.5" fill="#2a2a2a" opacity="0.6"/>
<circle cx="469.6" cy="399.9" r="0.5" fill="#2a2a2a" opacity="0.6"/>
<circle cx="481.8" cy="386.1" r="0.5" fill="#2a2a2a" opacity="0.6"/>
<circle cx="476.6" cy="381.7" r="0.5" fill="#2a2a2a" opacity="0.6"/>
<circle cx="484.3" cy="378.8" r="0.5" fill="#2a2a2a" opacity="0.6"/>
<circle cx="485.9" cy="399.2" r="0.5" fill="#2a2a2a" opacity="0.6"/>
<circle cx="457.7" cy="393.8" r="0.5" fill="#2a2a2a" opacity="0.6"/>
<circle cx="440.6" cy="393.5" r="0.5" fill="#2a2a2a" opacity="0.6"/>
<circle cx="487.8" cy="396.9" r="0.5" fill="#2a2a2a" opacity="0.6"/>
<circle cx="479.6" cy="379.5" r="0.5" fill="#2a2a2a" opacity="0.6"/>
<circle cx="477.2" cy="394.7" r="0.5" fill="#2a2a2a" opacity="0.6"/></g>
<polygon points="365.0,345.0 385.0,345.0 400.0,341.5 423.0,355.3 446.0,369.0 450.0,380.0 440.0,386.0 410.0,380.0 385.0,374.0 372.0,365.0" fill="#c9a67c" opacity="0.85"/>
<clipPath id="c13"><polygon points="365.0,345.0 385.0,345.0 400.0,341.5 423.0,355.3 446.0,369.0 450.0,380.0 440.0,386.0 410.0,380.0 385.0,374.0 372.0,365.0"/></clipPath><g clip-path="url(#c13)"><circle cx="371.1" cy="381.0" r="0.55" fill="#1a1a1a" opacity="0.7"/>
<circle cx="421.5" cy="375.1" r="0.55" fill="#1a1a1a" opacity="0.7"/>
<circle cx="392.4" cy="342.2" r="0.55" fill="#1a1a1a" opacity="0.7"/>
<circle cx="421.3" cy="369.4" r="0.55" fill="#1a1a1a" opacity="0.7"/>
<circle cx="384.3" cy="347.1" r="0.55" fill="#1a1a1a" opacity="0.7"/>
<circle cx="395.0" cy="363.9" r="0.55" fill="#1a1a1a" opacity="0.7"/>
<circle cx="422.0" cy="385.7" r="0.55" fill="#1a1a1a" opacity="0.7"/>
<circle cx="444.9" cy="344.8" r="0.55" fill="#1a1a1a" opacity="0.7"/>
<circle cx="394.0" cy="378.1" r="0.55" fill="#1a1a1a" opacity="0.7"/>
<circle cx="379.4" cy="363.0" r="0.55" fill="#1a1a1a" opacity="0.7"/>
<circle cx="375.6" cy="385.1" r="0.55" fill="#1a1a1a" opacity="0.7"/>
<circle cx="422.1" cy="379.8" r="0.55" fill="#1a1a1a" opacity="0.7"/>
<circle cx="441.0" cy="344.4" r="0.55" fill="#1a1a1a" opacity="0.7"/>
<circle cx="366.4" cy="370.1" r="0.55" fill="#1a1a1a" opacity="0.7"/>
<circle cx="394.3" cy="379.8" r="0.55" fill="#1a1a1a" opacity="0.7"/>
<circle cx="379.4" cy="353.9" r="0.55" fill="#1a1a1a" opacity="0.7"/>
<circle cx="446.1" cy="372.9" r="0.55" fill="#1a1a1a" opacity="0.7"/>
<circle cx="376.2" cy="352.8" r="0.55" fill="#1a1a1a" opacity="0.7"/>
<circle cx="370.8" cy="350.6" r="0.55" fill="#1a1a1a" opacity="0.7"/>
<circle cx="430.3" cy="356.3" r="0.55" fill="#1a1a1a" opacity="0.7"/>
<circle cx="449.9" cy="354.5" r="0.55" fill="#1a1a1a" opacity="0.7"/>
<circle cx="430.8" cy="384.3" r="0.55" fill="#1a1a1a" opacity="0.7"/>
<circle cx="374.7" cy="352.0" r="0.55" fill="#1a1a1a" opacity="0.7"/>
<circle cx="399.7" cy="360.4" r="0.55" fill="#1a1a1a" opacity="0.7"/>
<circle cx="409.2" cy="363.1" r="0.55" fill="#1a1a1a" opacity="0.7"/>
<circle cx="441.4" cy="372.3" r="0.55" fill="#1a1a1a" opacity="0.7"/>
<circle cx="429.0" cy="384.7" r="0.55" fill="#1a1a1a" opacity="0.7"/>
<circle cx="370.1" cy="368.8" r="0.55" fill="#1a1a1a" opacity="0.7"/>
<circle cx="403.5" cy="379.8" r="0.55" fill="#1a1a1a" opacity="0.7"/>
<circle cx="431.2" cy="347.3" r="0.55" fill="#1a1a1a" opacity="0.7"/>
<circle cx="411.2" cy="370.9" r="0.55" fill="#1a1a1a" opacity="0.7"/>
<circle cx="421.7" cy="349.2" r="0.55" fill="#1a1a1a" opacity="0.7"/>
<circle cx="447.2" cy="380.3" r="0.55" fill="#1a1a1a" opacity="0.7"/>
<circle cx="448.2" cy="368.0" r="0.55" fill="#1a1a1a" opacity="0.7"/>
<circle cx="436.1" cy="347.6" r="0.55" fill="#1a1a1a" opacity="0.7"/>
<circle cx="413.6" cy="379.3" r="0.55" fill="#1a1a1a" opacity="0.7"/>
<circle cx="391.1" cy="364.9" r="0.55" fill="#1a1a1a" opacity="0.7"/>
<circle cx="378.6" cy="363.1" r="0.55" fill="#1a1a1a" opacity="0.7"/>
<circle cx="379.2" cy="345.1" r="0.55" fill="#1a1a1a" opacity="0.7"/>
<circle cx="419.4" cy="381.9" r="0.55" fill="#1a1a1a" opacity="0.7"/>
<circle cx="430.7" cy="364.4" r="0.55" fill="#1a1a1a" opacity="0.7"/>
<circle cx="438.0" cy="380.0" r="0.55" fill="#1a1a1a" opacity="0.7"/>
<circle cx="442.7" cy="344.8" r="0.55" fill="#1a1a1a" opacity="0.7"/>
<circle cx="389.5" cy="371.7" r="0.55" fill="#1a1a1a" opacity="0.7"/>
<circle cx="393.4" cy="358.2" r="0.55" fill="#1a1a1a" opacity="0.7"/>
<circle cx="381.7" cy="365.4" r="0.55" fill="#1a1a1a" opacity="0.7"/>
<circle cx="411.2" cy="369.3" r="0.55" fill="#1a1a1a" opacity="0.7"/>
<circle cx="445.5" cy="378.2" r="0.55" fill="#1a1a1a" opacity="0.7"/>
<circle cx="429.4" cy="382.6" r="0.55" fill="#1a1a1a" opacity="0.7"/>
<circle cx="402.1" cy="348.9" r="0.55" fill="#1a1a1a" opacity="0.7"/>
<circle cx="378.5" cy="379.8" r="0.55" fill="#1a1a1a" opacity="0.7"/>
<circle cx="436.6" cy="346.7" r="0.55" fill="#1a1a1a" opacity="0.7"/>
<circle cx="441.2" cy="342.0" r="0.55" fill="#1a1a1a" opacity="0.7"/>
<circle cx="430.3" cy="354.9" r="0.55" fill="#1a1a1a" opacity="0.7"/>
<circle cx="389.8" cy="354.2" r="0.55" fill="#1a1a1a" opacity="0.7"/>
<circle cx="398.2" cy="375.8" r="0.55" fill="#1a1a1a" opacity="0.7"/>
<circle cx="414.6" cy="366.4" r="0.55" fill="#1a1a1a" opacity="0.7"/>
<circle cx="443.0" cy="358.8" r="0.55" fill="#1a1a1a" opacity="0.7"/>
<circle cx="385.6" cy="376.7" r="0.55" fill="#1a1a1a" opacity="0.7"/>
<circle cx="400.7" cy="383.1" r="0.55" fill="#1a1a1a" opacity="0.7"/>
<circle cx="370.1" cy="370.0" r="0.55" fill="#1a1a1a" opacity="0.7"/>
<circle cx="365.3" cy="370.6" r="0.55" fill="#1a1a1a" opacity="0.7"/>
<circle cx="385.7" cy="379.8" r="0.55" fill="#1a1a1a" opacity="0.7"/>
<circle cx="433.8" cy="354.5" r="0.55" fill="#1a1a1a" opacity="0.7"/>
<circle cx="422.4" cy="385.8" r="0.55" fill="#1a1a1a" opacity="0.7"/>
<circle cx="405.5" cy="349.3" r="0.55" fill="#1a1a1a" opacity="0.7"/>
<circle cx="399.8" cy="343.5" r="0.55" fill="#1a1a1a" opacity="0.7"/>
<circle cx="387.5" cy="378.1" r="0.55" fill="#1a1a1a" opacity="0.7"/>
<circle cx="430.1" cy="349.3" r="0.55" fill="#1a1a1a" opacity="0.7"/>
<circle cx="406.5" cy="356.4" r="0.55" fill="#1a1a1a" opacity="0.7"/>
<circle cx="371.0" cy="364.3" r="0.55" fill="#1a1a1a" opacity="0.7"/>
<circle cx="418.3" cy="346.4" r="0.55" fill="#1a1a1a" opacity="0.7"/>
<circle cx="449.4" cy="360.4" r="0.55" fill="#1a1a1a" opacity="0.7"/>
<circle cx="371.2" cy="357.2" r="0.55" fill="#1a1a1a" opacity="0.7"/>
<circle cx="449.8" cy="345.3" r="0.55" fill="#1a1a1a" opacity="0.7"/>
<circle cx="373.5" cy="368.3" r="0.55" fill="#1a1a1a" opacity="0.7"/>
<circle cx="391.2" cy="361.6" r="0.55" fill="#1a1a1a" opacity="0.7"/>
<circle cx="448.0" cy="348.6" r="0.55" fill="#1a1a1a" opacity="0.7"/>
<circle cx="447.6" cy="376.6" r="0.55" fill="#1a1a1a" opacity="0.7"/>
<circle cx="380.7" cy="359.7" r="0.55" fill="#1a1a1a" opacity="0.7"/>
<circle cx="426.2" cy="342.6" r="0.55" fill="#1a1a1a" opacity="0.7"/>
<circle cx="417.1" cy="380.6" r="0.55" fill="#1a1a1a" opacity="0.7"/>
<circle cx="398.8" cy="359.7" r="0.55" fill="#1a1a1a" opacity="0.7"/>
<circle cx="431.6" cy="345.6" r="0.55" fill="#1a1a1a" opacity="0.7"/>
<circle cx="418.9" cy="354.4" r="0.55" fill="#1a1a1a" opacity="0.7"/>
<circle cx="384.1" cy="352.8" r="0.55" fill="#1a1a1a" opacity="0.7"/>
<circle cx="406.7" cy="343.5" r="0.55" fill="#1a1a1a" opacity="0.7"/>
<circle cx="425.3" cy="356.2" r="0.55" fill="#1a1a1a" opacity="0.7"/>
<circle cx="417.8" cy="349.0" r="0.55" fill="#1a1a1a" opacity="0.7"/>
<circle cx="411.2" cy="351.0" r="0.55" fill="#1a1a1a" opacity="0.7"/>
<circle cx="427.7" cy="371.5" r="0.55" fill="#1a1a1a" opacity="0.7"/>
<circle cx="376.5" cy="348.5" r="0.55" fill="#1a1a1a" opacity="0.7"/>
<circle cx="368.6" cy="342.5" r="0.55" fill="#1a1a1a" opacity="0.7"/>
<circle cx="367.8" cy="349.4" r="0.55" fill="#1a1a1a" opacity="0.7"/>
<circle cx="417.7" cy="354.6" r="0.55" fill="#1a1a1a" opacity="0.7"/>
<circle cx="401.9" cy="348.8" r="0.55" fill="#1a1a1a" opacity="0.7"/>
<circle cx="436.0" cy="368.1" r="0.55" fill="#1a1a1a" opacity="0.7"/>
<circle cx="447.6" cy="380.6" r="0.55" fill="#1a1a1a" opacity="0.7"/>
<circle cx="374.5" cy="378.5" r="0.55" fill="#1a1a1a" opacity="0.7"/>
<circle cx="397.2" cy="362.4" r="0.55" fill="#1a1a1a" opacity="0.7"/>
<circle cx="400.7" cy="376.5" r="0.55" fill="#1a1a1a" opacity="0.7"/>
<circle cx="411.4" cy="376.7" r="0.55" fill="#1a1a1a" opacity="0.7"/>
<circle cx="442.3" cy="369.7" r="0.55" fill="#1a1a1a" opacity="0.7"/>
<circle cx="416.0" cy="377.2" r="0.55" fill="#1a1a1a" opacity="0.7"/>
<circle cx="390.9" cy="358.3" r="0.55" fill="#1a1a1a" opacity="0.7"/>
<circle cx="421.4" cy="374.8" r="0.55" fill="#1a1a1a" opacity="0.7"/>
<circle cx="393.0" cy="364.8" r="0.55" fill="#1a1a1a" opacity="0.7"/>
<circle cx="412.2" cy="374.4" r="0.55" fill="#1a1a1a" opacity="0.7"/>
<circle cx="373.4" cy="374.4" r="0.55" fill="#1a1a1a" opacity="0.7"/>
<circle cx="412.9" cy="344.4" r="0.55" fill="#1a1a1a" opacity="0.7"/>
<circle cx="405.7" cy="378.6" r="0.55" fill="#1a1a1a" opacity="0.7"/>
<circle cx="419.9" cy="343.1" r="0.55" fill="#1a1a1a" opacity="0.7"/>
<circle cx="413.2" cy="360.5" r="0.55" fill="#1a1a1a" opacity="0.7"/>
<circle cx="413.7" cy="367.8" r="0.55" fill="#1a1a1a" opacity="0.7"/>
<circle cx="427.7" cy="378.1" r="0.55" fill="#1a1a1a" opacity="0.7"/>
<circle cx="376.3" cy="344.1" r="0.55" fill="#1a1a1a" opacity="0.7"/>
<circle cx="428.9" cy="371.4" r="0.55" fill="#1a1a1a" opacity="0.7"/>
<circle cx="418.0" cy="356.9" r="0.55" fill="#1a1a1a" opacity="0.7"/>
<circle cx="423.5" cy="343.3" r="0.55" fill="#1a1a1a" opacity="0.7"/>
<circle cx="399.0" cy="356.3" r="0.55" fill="#1a1a1a" opacity="0.7"/>
<circle cx="372.2" cy="370.0" r="0.55" fill="#1a1a1a" opacity="0.7"/>
<circle cx="443.4" cy="345.2" r="0.55" fill="#1a1a1a" opacity="0.7"/>
<circle cx="435.3" cy="379.2" r="0.55" fill="#1a1a1a" opacity="0.7"/>
<circle cx="448.0" cy="343.4" r="0.55" fill="#1a1a1a" opacity="0.7"/>
<circle cx="404.1" cy="352.1" r="0.55" fill="#1a1a1a" opacity="0.7"/>
<circle cx="440.2" cy="356.2" r="0.55" fill="#1a1a1a" opacity="0.7"/>
<circle cx="439.1" cy="344.4" r="0.55" fill="#1a1a1a" opacity="0.7"/>
<circle cx="411.7" cy="382.7" r="0.55" fill="#1a1a1a" opacity="0.7"/>
<circle cx="441.5" cy="384.5" r="0.55" fill="#1a1a1a" opacity="0.7"/>
<circle cx="434.2" cy="381.8" r="0.55" fill="#1a1a1a" opacity="0.7"/>
<circle cx="373.7" cy="350.3" r="0.55" fill="#1a1a1a" opacity="0.7"/>
<circle cx="376.4" cy="378.6" r="0.55" fill="#1a1a1a" opacity="0.7"/>
<circle cx="399.6" cy="356.5" r="0.55" fill="#1a1a1a" opacity="0.7"/>
<circle cx="410.3" cy="354.4" r="0.55" fill="#1a1a1a" opacity="0.7"/>
<circle cx="420.5" cy="372.2" r="0.55" fill="#1a1a1a" opacity="0.7"/>
<circle cx="413.0" cy="345.3" r="0.55" fill="#1a1a1a" opacity="0.7"/>
<circle cx="439.5" cy="341.7" r="0.55" fill="#1a1a1a" opacity="0.7"/>
<circle cx="433.1" cy="382.9" r="0.55" fill="#1a1a1a" opacity="0.7"/>
<circle cx="373.7" cy="357.2" r="0.55" fill="#1a1a1a" opacity="0.7"/>
<circle cx="393.8" cy="376.9" r="0.55" fill="#1a1a1a" opacity="0.7"/><polyline points="369,335 362,338 354,340" fill="none" stroke="#8a6038" stroke-width="0.7" opacity="0.5"/>
<polyline points="378,334 372,339 364,342 356,343" fill="none" stroke="#8a6038" stroke-width="0.7" opacity="0.5"/>
<polyline points="381,337 375,342 366,345 357,346" fill="none" stroke="#8a6038" stroke-width="0.7" opacity="0.5"/>
<polyline points="390,334 384,340 376,344 367,346 359,349" fill="none" stroke="#8a6038" stroke-width="0.7" opacity="0.5"/>
<polyline points="391,335 384,340 377,345 369,349 361,353" fill="none" stroke="#8a6038" stroke-width="0.7" opacity="0.5"/>
<polyline points="393,336 387,343 380,348 371,351 361,353 351,354" fill="none" stroke="#8a6038" stroke-width="0.7" opacity="0.5"/>
<polyline points="400,330 396,338 389,344 380,349 371,352 362,354 351,356" fill="none" stroke="#8a6038" stroke-width="0.7" opacity="0.5"/>
<polyline points="401,331 396,339 391,346 383,352 374,356 363,357 352,357" fill="none" stroke="#8a6038" stroke-width="0.7" opacity="0.5"/>
<polyline points="406,334 401,342 394,349 384,353 374,357 364,360 353,362" fill="none" stroke="#8a6038" stroke-width="0.7" opacity="0.5"/>
<polyline points="407,335 402,343 396,351 388,357 377,361 366,363 354,363" fill="none" stroke="#8a6038" stroke-width="0.7" opacity="0.5"/>
<polyline points="409,336 404,345 398,353 389,359 379,363 367,366 355,368" fill="none" stroke="#8a6038" stroke-width="0.7" opacity="0.5"/>
<polyline points="415,339 409,348 400,355 391,361 380,365 368,368 355,368 342,367 329,366 316,363 303,359 290,351 280,342 271,332 262,322 254,312 247,301 243,290 240,279 239,267 240,256 244,246 250,238 258,230 266,224 275,217 285,212 297,209 311,210 324,212 337,216 350,221 363,227 374,234 385,243 395,252 404,262 411,273 416,284 417,296 418,306 418,317 418,329 415,339" fill="none" stroke="#8a6038" stroke-width="0.7" opacity="0.5"/>
<polyline points="418,341 412,350 403,357 392,363 381,366 369,369 356,371 343,372 329,370 316,365 303,359 290,351 279,343 268,335 258,324 250,314 243,302 237,290 234,278 235,266 238,256 242,246 247,236 253,226 261,218 272,213 284,210 297,209 310,209 324,210 337,214 351,219 364,225 377,231 389,239 399,250 406,261 412,272 418,284 422,296 425,308 425,320 423,331 418,341" fill="none" stroke="#8a6038" stroke-width="0.7" opacity="0.5"/>
<polyline points="418,341 412,350 403,358 393,364 382,369 370,372 358,375 344,376 329,373 315,368 302,361 288,354 275,347 263,338 253,327 245,315 239,303 234,290 232,278 233,266 236,255 240,244 244,234 250,224 259,217 271,212 284,210 297,208 310,207 324,207 338,209 352,214 366,220 379,228 392,237 402,248 410,260 416,272 422,284 427,296 430,309 429,321 424,331 418,341" fill="none" stroke="#8a6038" stroke-width="0.7" opacity="0.5"/>
<polyline points="425,345 418,355 409,363 397,368 384,372 372,375 358,376 344,376 329,374 315,370 300,365 286,358 273,349 263,338 254,327 245,315 236,303 230,290 227,277 227,264 230,252 234,241 240,231 248,223 259,216 270,210 281,205 294,202 308,201 323,204 338,209 352,214 366,220 380,227 392,236 404,247 413,258 422,271 427,283 430,296 431,309 429,321 428,333 425,345" fill="none" stroke="#8a6038" stroke-width="0.7" opacity="0.5"/>
<polyline points="424,344 418,354 410,364 400,372 387,376 373,378 359,378 344,379 329,377 314,374 299,368 284,361 271,352 258,341 248,329 240,316 235,303 230,290 225,277 223,263 226,251 231,240 239,230 247,222 257,214 268,208 280,204 294,201 308,199 323,199 338,203 353,209 368,217 381,225 395,234 407,245 418,257 425,270 430,283 434,297 435,310 433,322 429,333 424,344" fill="none" stroke="#8a6038" stroke-width="0.7" opacity="0.5"/>
<polyline points="426,345 420,356 412,366 402,374 389,378 374,380 359,380 345,380 329,379 314,376 298,370 283,363 269,353 256,343 246,330 238,317 232,304 227,290 223,277 221,263 223,250 229,239 237,229 245,220 255,212 266,206 279,201 293,199 307,197 323,197 339,200 354,207 368,215 382,224 396,233 409,243 420,256 428,269 433,283 436,297 437,310 436,323 432,335 426,345" fill="none" stroke="#8a6038" stroke-width="0.7" opacity="0.5"/>
<polyline points="431,348 423,358 414,367 402,374 389,379 375,382 361,384 345,385 329,385 313,381 297,374 282,364 269,354 256,343 244,331 234,318 227,304 222,290 219,276 219,262 222,250 228,239 236,228 243,218 251,209 262,201 276,196 291,195 307,195 323,196 339,199 355,204 370,212 385,220 400,230 413,241 422,255 429,269 433,283 436,297 439,311 440,324 437,337 431,348" fill="none" stroke="#8a6038" stroke-width="0.7" opacity="0.5"/>
<polyline points="434,350 427,361 419,372 407,379 392,384 377,386 362,388 346,389 329,388 312,384 296,376 281,367 266,356 254,345 243,332 235,318 227,304 221,290 216,276 215,261 218,248 225,237 232,226 239,215 249,206 260,198 274,193 289,190 306,189 322,191 339,195 355,202 371,211 386,219 401,229 414,241 424,254 431,268 436,283 439,297 442,311 441,325 438,338 434,350" fill="none" stroke="#8a6038" stroke-width="0.7" opacity="0.5"/>
<polyline points="439,353 432,365 422,375 408,381 393,385 378,389 363,391 346,392 329,390 312,384 296,377 280,368 265,357 253,345 242,332 233,319 223,305 216,290 211,275 212,261 216,247 221,235 227,223 235,211 245,202 258,195 273,190 288,187 305,186 322,189 339,195 356,202 372,209 388,217 403,227 415,240 425,254 433,268 439,283 444,297 446,312 445,326 443,340 439,353" fill="none" stroke="#8a6038" stroke-width="0.7" opacity="0.5"/>
<polyline points="439,353 431,364 422,375 411,385 397,390 380,392 363,392 346,390 329,388 312,385 295,378 279,370 263,359 249,348 237,335 227,320 221,305 216,290 211,275 208,259 209,245 214,231 223,220 233,210 245,202 258,195 273,190 289,188 305,187 322,187 340,191 357,198 373,207 387,217 402,228 416,239 429,252 439,267 445,282 449,298 451,313 450,327 446,341 439,353" fill="none" stroke="#8a6038" stroke-width="0.7" opacity="0.5"/>
<polyline points="444,356 435,367 424,377 411,385 398,392 383,397 365,399 347,397 329,391 312,385 295,379 278,371 261,361 247,349 235,335 225,321 216,306 211,290 209,275 208,260 209,245 211,230 217,216 227,205 241,198 256,192 271,188 287,185 304,184 322,185 340,189 358,195 375,203 391,213 405,226 416,239 428,253 439,267 448,282 454,298 455,313 453,328 449,342 444,356" fill="none" stroke="#8a6038" stroke-width="0.7" opacity="0.5"/>
<polyline points="445,356 437,369 427,379 413,387 399,393 383,398 365,399 347,398 329,394 311,389 293,383 275,376 258,366 243,352 231,337 222,322 213,306 207,290 204,274 203,258 205,243 209,229 216,216 227,206 241,198 256,192 271,187 286,182 303,180 322,181 340,186 358,193 376,201 393,211 408,223 421,236 434,251 445,265 454,282 458,298 458,314 454,329 450,343 445,356" fill="none" stroke="#8a6038" stroke-width="0.7" opacity="0.5"/>
<polyline points="452,360 442,372 429,381 414,388 399,393 383,399 366,402 348,403 329,399 310,393 292,385 275,376 258,365 244,352 230,338 218,323 207,307 200,290 198,273 200,258 204,243 209,229 215,215 224,203 237,193 251,186 267,181 285,178 303,179 322,182 340,187 358,192 377,198 395,207 412,220 425,234 436,250 445,265 453,282 459,298 461,315 460,331 457,346 452,360" fill="none" stroke="#8a6038" stroke-width="0.7" opacity="0.5"/>
<polyline points="450,359 442,372 431,383 418,393 404,401 387,407 368,408 349,406 329,401 310,396 291,389 272,381 254,369 239,355 227,339 216,323 208,307 203,290 201,274 200,258 200,242 203,226 210,212 222,201 236,193 251,185 266,179 283,174 302,173 321,175 341,178 361,185 380,194 397,206 411,220 425,234 437,249 449,265 458,281 462,298 462,315 460,330 456,345 450,359" fill="none" stroke="#8a6038" stroke-width="0.7" opacity="0.5"/>
<polyline points="460,365 449,377 435,387 420,394" fill="none" stroke="#8a6038" stroke-width="0.7" opacity="0.5"/>
<polyline points="459,365 448,377 435,387 420,395" fill="none" stroke="#8a6038" stroke-width="0.7" opacity="0.5"/>
<polyline points="459,365 450,378 437,389 422,397" fill="none" stroke="#8a6038" stroke-width="0.7" opacity="0.5"/>
<polyline points="460,365 451,379 441,393" fill="none" stroke="#8a6038" stroke-width="0.7" opacity="0.5"/><polyline points="394,383 397,383 400,384 403,385 406,384 408,385 411,386" fill="none" stroke="#b83232" stroke-width="1.0" opacity="0.9"/>
<polyline points="418,362 418,359 420,357 423,356 426,355 429,356 432,357" fill="none" stroke="#b83232" stroke-width="1.0" opacity="0.9"/>
<polyline points="429,362 431,360 434,358 436,357 439,356 439,353 439,350" fill="none" stroke="#b83232" stroke-width="1.0" opacity="0.9"/>
<polyline points="442,342 443,339 446,339 447,336 449,333 450,331 449,328" fill="none" stroke="#b83232" stroke-width="1.0" opacity="0.9"/>
<polyline points="399,348 399,351 396,351 393,352 392,354 392,357 393,360" fill="none" stroke="#b83232" stroke-width="1.0" opacity="0.9"/>
<polyline points="421,348 419,346 416,345 413,345 411,347 408,349 406,350" fill="none" stroke="#b83232" stroke-width="1.0" opacity="0.9"/>
<polyline points="413,356 416,357 417,360 419,362 420,365 421,368 422,370" fill="none" stroke="#b83232" stroke-width="1.0" opacity="0.9"/>
<polyline points="387,356 386,359 385,361 382,363 380,364 377,366 375,363" fill="none" stroke="#b83232" stroke-width="1.0" opacity="0.9"/>
<polyline points="382,362 384,360 386,358 388,356 391,355 394,356 397,356" fill="none" stroke="#b83232" stroke-width="1.0" opacity="0.9"/>
<polyline points="388,342 391,341 392,339 395,337 398,338 399,341 398,344" fill="none" stroke="#b83232" stroke-width="1.0" opacity="0.9"/>
<polyline points="438,359 437,356 439,354 439,351 440,348 442,346 444,343" fill="none" stroke="#b83232" stroke-width="1.0" opacity="0.9"/>
<polyline points="414,382 414,385 413,388 413,391 415,393 416,396 419,397" fill="none" stroke="#b83232" stroke-width="1.0" opacity="0.9"/>
<polyline points="399,374 402,375 405,374 408,374 411,373 413,370 415,370" fill="none" stroke="#b83232" stroke-width="1.0" opacity="0.9"/>
<polyline points="390,371 388,373 387,376 387,379 388,382 387,385 390,387" fill="none" stroke="#b83232" stroke-width="1.0" opacity="0.9"/></g>
<clipPath id="c14"><polygon points="372.0,318.0 400.0,341.5 423.0,355.3 446.0,369.0 469.0,375.0 492.0,381.4 519.7,392.0 512.6,393.4 506.9,395.3 503.1,402.9 494.6,417.0 486.1,429.3 474.8,446.3 460.6,470.0 450.0,490.0 436.0,485.0 432.0,464.0 423.0,453.0 420.0,428.6 407.3,429.5 392.0,432.0 380.0,420.0 372.0,385.0 368.0,340.0"/></clipPath><g clip-path="url(#c14)"><polyline points="480,428 482,426 481,423 482,420 483,417 484,414 484,411" fill="none" stroke="#b83232" stroke-width="1.0" opacity="0.9"/>
<polyline points="474,461 475,464 476,467 477,470 480,472 482,474 484,475" fill="none" stroke="#b83232" stroke-width="1.0" opacity="0.9"/>
<polyline points="435,454 433,456 433,459 432,462 432,465 434,467 436,469" fill="none" stroke="#b83232" stroke-width="1.0" opacity="0.9"/>
<polyline points="489,460 486,461 483,461 481,463 478,461 475,462 474,465" fill="none" stroke="#b83232" stroke-width="1.0" opacity="0.9"/>
<polyline points="399,444 402,445 402,448 403,451 404,454 407,454 410,455" fill="none" stroke="#b83232" stroke-width="1.0" opacity="0.9"/>
<polyline points="452,456 450,455 449,452 449,449 447,446 444,445 441,445" fill="none" stroke="#b83232" stroke-width="1.0" opacity="0.9"/>
<polyline points="468,435 470,434 473,434 476,433 478,431 481,430 484,429" fill="none" stroke="#b83232" stroke-width="1.0" opacity="0.9"/>
<polyline points="427,409 430,407 433,406 436,406 439,405 441,403 444,404" fill="none" stroke="#b83232" stroke-width="1.0" opacity="0.9"/>
<polyline points="470,436 470,433 468,431 466,429 465,426 462,425 459,424" fill="none" stroke="#b83232" stroke-width="1.0" opacity="0.9"/>
<polyline points="452,432 453,429 456,428 458,427 461,426 464,424 466,422" fill="none" stroke="#b83232" stroke-width="1.0" opacity="0.9"/>
<polyline points="412,427 415,425 417,423 420,422 423,421 426,421 428,421" fill="none" stroke="#b83232" stroke-width="1.0" opacity="0.9"/>
<polyline points="468,407 466,404 463,404 461,406 459,408 456,409 453,410" fill="none" stroke="#b83232" stroke-width="1.0" opacity="0.9"/>
<polyline points="441,404 438,405 435,407 433,410 431,411 429,413 426,414" fill="none" stroke="#b83232" stroke-width="1.0" opacity="0.9"/>
<polyline points="436,390 437,393 439,395 440,398 443,398 446,400 448,402" fill="none" stroke="#b83232" stroke-width="1.0" opacity="0.9"/>
<polyline points="422,400 419,399 417,397 415,395 413,392 411,390 412,387" fill="none" stroke="#b83232" stroke-width="1.0" opacity="0.9"/>
<polyline points="482,398 480,396 480,393 478,391 476,388 473,387 470,387" fill="none" stroke="#b83232" stroke-width="1.0" opacity="0.9"/>
<polyline points="486,435 484,437 483,440 483,443 482,446 479,448 476,448" fill="none" stroke="#b83232" stroke-width="1.0" opacity="0.9"/>
<polyline points="494,419 493,416 493,413 492,410 489,410 486,411 484,410" fill="none" stroke="#b83232" stroke-width="1.0" opacity="0.9"/>
<polyline points="419,414 417,417 414,417 413,419 411,422 408,423 407,426" fill="none" stroke="#b83232" stroke-width="1.0" opacity="0.9"/>
<polyline points="396,443 398,445 400,444 403,443 406,442 409,441 412,440" fill="none" stroke="#b83232" stroke-width="1.0" opacity="0.9"/>
<polyline points="443,415 445,417 447,419 450,421 453,422 455,424 456,427" fill="none" stroke="#b83232" stroke-width="1.0" opacity="0.9"/>
<polyline points="467,382 465,384 462,384 459,384 456,384 453,385 451,382" fill="none" stroke="#b83232" stroke-width="1.0" opacity="0.9"/>
<polyline points="470,391 473,391 475,389 478,388 481,387 484,387 487,387" fill="none" stroke="#b83232" stroke-width="1.0" opacity="0.9"/>
<polyline points="450,465 450,462 451,459 452,456 454,454 453,451 452,448" fill="none" stroke="#b83232" stroke-width="1.0" opacity="0.9"/>
<polyline points="467,411 465,413 464,416 462,418 460,420 460,423 459,426" fill="none" stroke="#b83232" stroke-width="1.0" opacity="0.9"/>
<polyline points="452,448 449,448 446,449 443,448 440,447 437,448 435,447" fill="none" stroke="#b83232" stroke-width="1.0" opacity="0.9"/>
<polyline points="491,451 489,453 486,454 483,454 482,457 479,458 477,460" fill="none" stroke="#b83232" stroke-width="1.0" opacity="0.9"/>
<polyline points="445,453 446,455 448,458 451,459 454,459 456,461 459,461" fill="none" stroke="#b83232" stroke-width="1.0" opacity="0.9"/>
<polyline points="442,385 443,388 443,391 444,394 445,397 446,400 445,403" fill="none" stroke="#b83232" stroke-width="1.0" opacity="0.9"/>
<polyline points="457,383 459,382 462,381 465,381 468,382 471,382 474,380" fill="none" stroke="#b83232" stroke-width="1.0" opacity="0.9"/>
<polyline points="486,424 483,423 480,423 478,421 475,420 472,420 470,422" fill="none" stroke="#b83232" stroke-width="1.0" opacity="0.9"/>
<polyline points="398,413 395,413 392,413 389,414 386,414 383,415 380,415" fill="none" stroke="#b83232" stroke-width="1.0" opacity="0.9"/>
<polyline points="397,430 395,428 393,426 391,424 389,422 387,420 387,417" fill="none" stroke="#b83232" stroke-width="1.0" opacity="0.9"/>
<polyline points="468,397 469,395 472,393 475,392 477,391 480,390 482,392" fill="none" stroke="#b83232" stroke-width="1.0" opacity="0.9"/></g>
<polyline points="420.0,402.0 437.0,391.0 450.3,402.2 461.3,408.8 474.4,417.5 483.2,426.3" fill="none" stroke="#2e3236" stroke-width="0.9" stroke-linejoin="round" stroke-linecap="round" opacity="0.8" stroke-dasharray="2.4,1.2"/>
<polyline points="437.2,391.3 439.4,404.4 435.0,421.9 426.3,452.5" fill="none" stroke="#2e3236" stroke-width="0.9" stroke-linejoin="round" stroke-linecap="round" opacity="0.8" stroke-dasharray="2.4,1.2"/>
<polyline points="441.6,393.5 437.2,421.9 426.3,461.3" fill="none" stroke="#4f98d4" stroke-width="0.8" stroke-linejoin="round" stroke-linecap="round" opacity="0.7"/>
<polygon points="250.0,330.0 263.1,308.4 270.0,301.0 275.7,295.4 282.8,288.3 287.0,278.4 292.7,271.3 299.8,269.6 308.3,270.2 315.3,271.6 322.4,274.2 329.5,277.0 338.0,275.3 349.3,276.7 355.0,279.1 362.1,285.5 369.2,294.0 377.7,298.0 400.0,316.0 402.0,341.0 380.0,360.0 392.0,400.0 403.6,424.8 392.2,432.3 345.0,444.6 309.1,443.7 271.3,421.0 260.0,411.6 246.0,380.0 247.0,350.0" fill="#c4a888" />
<clipPath id="c15"><polygon points="250.0,330.0 263.1,308.4 270.0,301.0 275.7,295.4 282.8,288.3 287.0,278.4 292.7,271.3 299.8,269.6 308.3,270.2 315.3,271.6 322.4,274.2 329.5,277.0 338.0,275.3 349.3,276.7 355.0,279.1 362.1,285.5 369.2,294.0 377.7,298.0 400.0,316.0 402.0,341.0 380.0,360.0 392.0,400.0 403.6,424.8 392.2,432.3 345.0,444.6 309.1,443.7 271.3,421.0 260.0,411.6 246.0,380.0 247.0,350.0"/></clipPath><g clip-path="url(#c15)"><circle cx="364.4" cy="298.3" r="0.5" fill="#1a1a1a" opacity="0.6"/>
<circle cx="386.5" cy="346.4" r="0.5" fill="#1a1a1a" opacity="0.6"/>
<circle cx="290.6" cy="341.5" r="0.5" fill="#1a1a1a" opacity="0.6"/>
<circle cx="246.9" cy="403.3" r="0.5" fill="#1a1a1a" opacity="0.6"/>
<circle cx="328.8" cy="405.8" r="0.5" fill="#1a1a1a" opacity="0.6"/>
<circle cx="283.1" cy="364.2" r="0.5" fill="#1a1a1a" opacity="0.6"/>
<circle cx="383.7" cy="384.5" r="0.5" fill="#1a1a1a" opacity="0.6"/>
<circle cx="272.0" cy="351.6" r="0.5" fill="#1a1a1a" opacity="0.6"/>
<circle cx="359.7" cy="323.9" r="0.5" fill="#1a1a1a" opacity="0.6"/>
<circle cx="250.0" cy="357.7" r="0.5" fill="#1a1a1a" opacity="0.6"/>
<circle cx="288.7" cy="380.0" r="0.5" fill="#1a1a1a" opacity="0.6"/>
<circle cx="277.0" cy="436.7" r="0.5" fill="#1a1a1a" opacity="0.6"/>
<circle cx="380.3" cy="412.5" r="0.5" fill="#1a1a1a" opacity="0.6"/>
<circle cx="340.4" cy="281.3" r="0.5" fill="#1a1a1a" opacity="0.6"/>
<circle cx="350.0" cy="381.6" r="0.5" fill="#1a1a1a" opacity="0.6"/>
<circle cx="259.0" cy="285.5" r="0.5" fill="#1a1a1a" opacity="0.6"/>
<circle cx="294.6" cy="378.5" r="0.5" fill="#1a1a1a" opacity="0.6"/>
<circle cx="386.7" cy="418.2" r="0.5" fill="#1a1a1a" opacity="0.6"/>
<circle cx="342.6" cy="392.0" r="0.5" fill="#1a1a1a" opacity="0.6"/>
<circle cx="365.4" cy="290.5" r="0.5" fill="#1a1a1a" opacity="0.6"/>
<circle cx="325.1" cy="343.8" r="0.5" fill="#1a1a1a" opacity="0.6"/>
<circle cx="278.4" cy="303.7" r="0.5" fill="#1a1a1a" opacity="0.6"/>
<circle cx="390.0" cy="385.2" r="0.5" fill="#1a1a1a" opacity="0.6"/>
<circle cx="287.6" cy="393.9" r="0.5" fill="#1a1a1a" opacity="0.6"/>
<circle cx="272.8" cy="398.6" r="0.5" fill="#1a1a1a" opacity="0.6"/>
<circle cx="348.3" cy="332.0" r="0.5" fill="#1a1a1a" opacity="0.6"/>
<circle cx="259.6" cy="374.2" r="0.5" fill="#1a1a1a" opacity="0.6"/>
<circle cx="366.5" cy="306.0" r="0.5" fill="#1a1a1a" opacity="0.6"/>
<circle cx="358.2" cy="432.3" r="0.5" fill="#1a1a1a" opacity="0.6"/>
<circle cx="306.4" cy="433.8" r="0.5" fill="#1a1a1a" opacity="0.6"/>
<circle cx="327.2" cy="274.9" r="0.5" fill="#1a1a1a" opacity="0.6"/>
<circle cx="322.7" cy="368.3" r="0.5" fill="#1a1a1a" opacity="0.6"/>
<circle cx="257.8" cy="395.3" r="0.5" fill="#1a1a1a" opacity="0.6"/>
<circle cx="258.5" cy="310.0" r="0.5" fill="#1a1a1a" opacity="0.6"/>
<circle cx="301.5" cy="275.4" r="0.5" fill="#1a1a1a" opacity="0.6"/>
<circle cx="247.0" cy="270.0" r="0.5" fill="#1a1a1a" opacity="0.6"/>
<circle cx="275.2" cy="393.3" r="0.5" fill="#1a1a1a" opacity="0.6"/>
<circle cx="303.6" cy="271.7" r="0.5" fill="#1a1a1a" opacity="0.6"/>
<circle cx="344.8" cy="337.2" r="0.5" fill="#1a1a1a" opacity="0.6"/>
<circle cx="327.3" cy="409.3" r="0.5" fill="#1a1a1a" opacity="0.6"/>
<circle cx="273.4" cy="278.8" r="0.5" fill="#1a1a1a" opacity="0.6"/>
<circle cx="365.7" cy="393.3" r="0.5" fill="#1a1a1a" opacity="0.6"/>
<circle cx="371.2" cy="345.1" r="0.5" fill="#1a1a1a" opacity="0.6"/>
<circle cx="350.5" cy="337.8" r="0.5" fill="#1a1a1a" opacity="0.6"/>
<circle cx="354.4" cy="354.3" r="0.5" fill="#1a1a1a" opacity="0.6"/>
<circle cx="285.9" cy="331.2" r="0.5" fill="#1a1a1a" opacity="0.6"/>
<circle cx="378.1" cy="420.4" r="0.5" fill="#1a1a1a" opacity="0.6"/>
<circle cx="338.2" cy="386.8" r="0.5" fill="#1a1a1a" opacity="0.6"/>
<circle cx="274.0" cy="337.4" r="0.5" fill="#1a1a1a" opacity="0.6"/>
<circle cx="353.9" cy="290.7" r="0.5" fill="#1a1a1a" opacity="0.6"/>
<circle cx="344.9" cy="357.8" r="0.5" fill="#1a1a1a" opacity="0.6"/>
<circle cx="335.6" cy="444.4" r="0.5" fill="#1a1a1a" opacity="0.6"/>
<circle cx="320.2" cy="425.6" r="0.5" fill="#1a1a1a" opacity="0.6"/>
<circle cx="366.9" cy="281.5" r="0.5" fill="#1a1a1a" opacity="0.6"/>
<circle cx="361.0" cy="331.9" r="0.5" fill="#1a1a1a" opacity="0.6"/>
<circle cx="338.8" cy="351.8" r="0.5" fill="#1a1a1a" opacity="0.6"/>
<circle cx="256.6" cy="340.6" r="0.5" fill="#1a1a1a" opacity="0.6"/>
<circle cx="282.6" cy="289.2" r="0.5" fill="#1a1a1a" opacity="0.6"/>
<circle cx="400.3" cy="302.2" r="0.5" fill="#1a1a1a" opacity="0.6"/>
<circle cx="309.4" cy="363.2" r="0.5" fill="#1a1a1a" opacity="0.6"/>
<circle cx="345.8" cy="395.8" r="0.5" fill="#1a1a1a" opacity="0.6"/>
<circle cx="266.7" cy="395.0" r="0.5" fill="#1a1a1a" opacity="0.6"/>
<circle cx="336.0" cy="387.2" r="0.5" fill="#1a1a1a" opacity="0.6"/>
<circle cx="341.9" cy="387.5" r="0.5" fill="#1a1a1a" opacity="0.6"/>
<circle cx="366.1" cy="271.1" r="0.5" fill="#1a1a1a" opacity="0.6"/>
<circle cx="398.7" cy="307.8" r="0.5" fill="#1a1a1a" opacity="0.6"/>
<circle cx="317.9" cy="328.5" r="0.5" fill="#1a1a1a" opacity="0.6"/>
<circle cx="295.3" cy="314.4" r="0.5" fill="#1a1a1a" opacity="0.6"/>
<circle cx="271.2" cy="337.5" r="0.5" fill="#1a1a1a" opacity="0.6"/>
<circle cx="298.7" cy="339.5" r="0.5" fill="#1a1a1a" opacity="0.6"/>
<circle cx="315.9" cy="329.1" r="0.5" fill="#1a1a1a" opacity="0.6"/>
<circle cx="398.0" cy="271.4" r="0.5" fill="#1a1a1a" opacity="0.6"/>
<circle cx="326.6" cy="421.0" r="0.5" fill="#1a1a1a" opacity="0.6"/>
<circle cx="352.4" cy="437.0" r="0.5" fill="#1a1a1a" opacity="0.6"/>
<circle cx="361.6" cy="377.3" r="0.5" fill="#1a1a1a" opacity="0.6"/>
<circle cx="248.2" cy="317.3" r="0.5" fill="#1a1a1a" opacity="0.6"/>
<circle cx="282.7" cy="348.4" r="0.5" fill="#1a1a1a" opacity="0.6"/>
<circle cx="331.2" cy="429.2" r="0.5" fill="#1a1a1a" opacity="0.6"/>
<circle cx="255.0" cy="374.5" r="0.5" fill="#1a1a1a" opacity="0.6"/>
<circle cx="269.7" cy="391.5" r="0.5" fill="#1a1a1a" opacity="0.6"/>
<circle cx="364.6" cy="392.1" r="0.5" fill="#1a1a1a" opacity="0.6"/>
<circle cx="352.2" cy="441.2" r="0.5" fill="#1a1a1a" opacity="0.6"/>
<circle cx="267.8" cy="384.2" r="0.5" fill="#1a1a1a" opacity="0.6"/>
<circle cx="264.6" cy="288.5" r="0.5" fill="#1a1a1a" opacity="0.6"/>
<circle cx="378.9" cy="358.1" r="0.5" fill="#1a1a1a" opacity="0.6"/>
<circle cx="320.5" cy="431.0" r="0.5" fill="#1a1a1a" opacity="0.6"/>
<circle cx="295.8" cy="292.3" r="0.5" fill="#1a1a1a" opacity="0.6"/>
<circle cx="359.3" cy="278.5" r="0.5" fill="#1a1a1a" opacity="0.6"/>
<circle cx="351.4" cy="278.4" r="0.5" fill="#1a1a1a" opacity="0.6"/>
<circle cx="402.7" cy="281.8" r="0.5" fill="#1a1a1a" opacity="0.6"/>
<circle cx="262.3" cy="298.2" r="0.5" fill="#1a1a1a" opacity="0.6"/>
<circle cx="367.1" cy="404.5" r="0.5" fill="#1a1a1a" opacity="0.6"/>
<circle cx="318.5" cy="374.5" r="0.5" fill="#1a1a1a" opacity="0.6"/>
<circle cx="285.1" cy="397.7" r="0.5" fill="#1a1a1a" opacity="0.6"/>
<circle cx="324.5" cy="367.0" r="0.5" fill="#1a1a1a" opacity="0.6"/>
<circle cx="249.2" cy="331.5" r="0.5" fill="#1a1a1a" opacity="0.6"/>
<circle cx="265.6" cy="407.2" r="0.5" fill="#1a1a1a" opacity="0.6"/>
<circle cx="263.1" cy="299.3" r="0.5" fill="#1a1a1a" opacity="0.6"/>
<circle cx="355.1" cy="332.6" r="0.5" fill="#1a1a1a" opacity="0.6"/>
<circle cx="357.6" cy="342.3" r="0.5" fill="#1a1a1a" opacity="0.6"/>
<circle cx="284.4" cy="388.7" r="0.5" fill="#1a1a1a" opacity="0.6"/>
<circle cx="294.4" cy="402.8" r="0.5" fill="#1a1a1a" opacity="0.6"/>
<circle cx="367.8" cy="368.8" r="0.5" fill="#1a1a1a" opacity="0.6"/>
<circle cx="307.1" cy="376.0" r="0.5" fill="#1a1a1a" opacity="0.6"/>
<circle cx="300.9" cy="318.8" r="0.5" fill="#1a1a1a" opacity="0.6"/>
<circle cx="395.0" cy="373.4" r="0.5" fill="#1a1a1a" opacity="0.6"/>
<circle cx="331.8" cy="417.2" r="0.5" fill="#1a1a1a" opacity="0.6"/>
<circle cx="330.8" cy="346.5" r="0.5" fill="#1a1a1a" opacity="0.6"/>
<circle cx="342.2" cy="401.1" r="0.5" fill="#1a1a1a" opacity="0.6"/>
<circle cx="252.5" cy="358.5" r="0.5" fill="#1a1a1a" opacity="0.6"/>
<circle cx="308.9" cy="359.3" r="0.5" fill="#1a1a1a" opacity="0.6"/>
<circle cx="370.3" cy="376.0" r="0.5" fill="#1a1a1a" opacity="0.6"/>
<circle cx="348.6" cy="294.1" r="0.5" fill="#1a1a1a" opacity="0.6"/>
<circle cx="386.3" cy="307.3" r="0.5" fill="#1a1a1a" opacity="0.6"/>
<circle cx="294.9" cy="300.3" r="0.5" fill="#1a1a1a" opacity="0.6"/>
<circle cx="321.0" cy="363.2" r="0.5" fill="#1a1a1a" opacity="0.6"/>
<circle cx="283.0" cy="386.7" r="0.5" fill="#1a1a1a" opacity="0.6"/>
<circle cx="275.2" cy="393.4" r="0.5" fill="#1a1a1a" opacity="0.6"/>
<circle cx="260.4" cy="306.1" r="0.5" fill="#1a1a1a" opacity="0.6"/>
<circle cx="277.3" cy="328.0" r="0.5" fill="#1a1a1a" opacity="0.6"/><polyline points="238,268 245,267 252,266" fill="none" stroke="#8a6440" stroke-width="0.8" opacity="0.5"/>
<polyline points="238,272 245,270 252,269 259,269 266,267 273,266 280,266 287,264" fill="none" stroke="#8a6440" stroke-width="0.8" opacity="0.5"/>
<polyline points="239,275 246,273 253,272 260,272 266,270 273,269 280,269 287,267 294,266 301,266" fill="none" stroke="#8a6440" stroke-width="0.8" opacity="0.5"/>
<polyline points="239,276 246,276 253,275 260,273 267,273 274,272 281,270 288,270 295,269 302,268 309,267 315,266 322,265" fill="none" stroke="#8a6440" stroke-width="0.8" opacity="0.5"/>
<polyline points="240,279 246,278 253,278 260,276 267,276 274,275 281,273 288,273 295,272 302,270 309,270 316,269 323,267 330,267 337,266 344,265" fill="none" stroke="#8a6440" stroke-width="0.8" opacity="0.5"/>
<polyline points="240,283 247,282 254,280 261,280 268,279 275,277 282,277 289,276 295,274 303,274 309,273 316,272 323,271 330,270 337,269 344,268 351,267 358,266 365,265" fill="none" stroke="#8a6440" stroke-width="0.8" opacity="0.5"/>
<polyline points="240,285 247,285 254,283 261,282 268,282 275,280 282,279 289,279 296,277 303,276 310,276 317,274 324,274 331,273 338,271 345,271 351,270 358,268 365,268 372,267 379,265" fill="none" stroke="#8a6440" stroke-width="0.8" opacity="0.5"/>
<polyline points="241,288 248,287 255,287 262,285 268,284 276,284 282,282 289,281 296,281 303,279 310,279 317,278 324,276 331,276 338,275 345,273 352,273 359,272 366,270 373,270 380,269 387,267 394,267 400,266" fill="none" stroke="#8a6440" stroke-width="0.8" opacity="0.5"/>
<polyline points="241,291 248,290 255,290 262,288 269,287 276,287 283,285 290,285 297,284 304,282 311,282 318,281 324,279 332,279 338,278 345,276 352,276 359,275 366,273 373,273 380,272 387,271 394,270 401,268 408,268" fill="none" stroke="#8a6440" stroke-width="0.8" opacity="0.5"/>
<polyline points="242,294 249,294 255,292 262,291 269,291 276,289 283,288 290,288 297,286 304,286 311,285 318,283 325,283 332,282 339,280 346,280 353,279 360,277 367,277 374,276 380,275 388,274 394,273 401,272 408,271" fill="none" stroke="#8a6440" stroke-width="0.8" opacity="0.5"/>
<polyline points="235,298 242,298 249,296 256,295 263,295 270,293 277,293 284,292 291,290 298,290 305,289 311,287 319,287 325,286 332,284 339,284 346,283 353,282 360,281 367,280 374,279 381,279 388,277 395,276 402,276 409,274" fill="none" stroke="#8a6440" stroke-width="0.8" opacity="0.5"/>
<polyline points="236,302 242,300 250,300 256,299 263,298 270,297 277,296 284,295 291,295 298,293 305,292 312,292 319,290 326,289 333,289 340,287 347,286 354,285 361,284 368,284 375,282 381,281 388,281 395,279 402,278 409,278" fill="none" stroke="#8a6440" stroke-width="0.8" opacity="0.5"/>
<polyline points="236,305 243,303 250,302 257,302 264,300 271,300 278,299 285,297 292,297 299,296 305,294 312,294 319,293 326,291 333,291 340,290 347,289 354,288 361,287 368,286 375,286 382,284 389,283 396,283 403,281 410,280" fill="none" stroke="#8a6440" stroke-width="0.8" opacity="0.5"/>
<polyline points="236,307 243,307 250,306 257,304 264,304 271,303 278,302 285,301 292,300 299,299 306,299 313,297 320,296 327,296 334,294 341,293 348,293 354,291 361,290 368,290 375,288 382,288 389,287 396,285 403,285 410,283" fill="none" stroke="#8a6440" stroke-width="0.8" opacity="0.5"/>
<polyline points="237,311 244,311 251,309 258,308 265,308 272,306 279,305 286,305 292,303 299,302 306,302 313,300 320,299 327,299 334,297 341,297 348,296 355,294 362,294 369,293 376,291 383,291 390,290 397,288 404,288 411,286" fill="none" stroke="#8a6440" stroke-width="0.8" opacity="0.5"/>
<polyline points="237,314 244,314 251,312 258,311 265,311 272,309 279,308 286,308 293,306 300,305 307,305 314,303 321,303 328,302 334,300 342,300 348,299 355,297 362,297 369,295 376,294 383,294 390,292 397,291 404,291 411,289" fill="none" stroke="#8a6440" stroke-width="0.8" opacity="0.5"/>
<polyline points="238,317 245,316 252,316 259,314 266,313 273,313 279,311 286,311 293,310 300,308 307,308 314,307 321,305 328,305 335,304 342,302 349,302 356,300 363,299 370,299 377,297 384,297 391,296 397,294 404,294 411,293" fill="none" stroke="#8a6440" stroke-width="0.8" opacity="0.5"/>
<polyline points="238,320 245,319 252,319 259,317 266,317 273,316 280,314 287,314 294,313 301,311 308,311 315,310 321,308 329,308 335,307 342,306 349,305 356,304 363,303 370,302 377,301 384,300 391,299 398,298 405,297 412,296" fill="none" stroke="#8a6440" stroke-width="0.8" opacity="0.5"/>
<polyline points="239,323 246,323 252,321 259,321 266,320 273,318 280,318 287,317 294,315 301,315 308,314 315,312 322,312 329,311 336,310 343,309 350,308 357,307 364,307 371,305 378,304 385,304 391,302 398,301 405,301 412,299" fill="none" stroke="#8a6440" stroke-width="0.8" opacity="0.5"/>
<polyline points="239,326 246,326 253,325 260,323 267,323 274,322 281,320 288,320 295,319 302,317 309,317 315,316 322,315 329,314 336,313 343,312 350,311 357,310 364,309 371,308 378,307 385,306 392,305 399,304 406,304 413,302" fill="none" stroke="#8a6440" stroke-width="0.8" opacity="0.5"/>
<polyline points="239,330 246,328 253,328 260,326 267,325 274,325 281,323 288,322 295,322 302,320 309,319 316,319 323,317 330,317 337,316 344,314 351,314 358,313 364,311 371,311 378,310 385,308 392,308 399,307 406,306 413,305" fill="none" stroke="#8a6440" stroke-width="0.8" opacity="0.5"/>
<polyline points="240,332 247,332 254,330 261,330 268,329 275,327 282,327 289,326 295,324 302,324 309,323 316,321 323,321 330,320 337,319 344,319 351,317 358,316 365,316 372,314 379,313 386,313 393,311 400,310 407,310 413,308" fill="none" stroke="#8a6440" stroke-width="0.8" opacity="0.5"/>
<polyline points="240,336 247,335 254,334 261,333 268,332 275,331 282,330 289,330 296,328 303,327 310,327 317,325 324,324 331,324 338,322 345,321 352,321 358,319 365,319 372,318 379,316 386,316 393,315 400,313 407,313 414,312" fill="none" stroke="#8a6440" stroke-width="0.8" opacity="0.5"/>
<polyline points="241,339 248,339 255,337 262,336 269,336 276,334 283,333 290,333 296,331 303,331 310,330 317,328 324,328 331,327 338,325 345,325 352,324 359,322 366,322 373,321 380,319 387,319 394,318 401,317 408,316" fill="none" stroke="#8a6440" stroke-width="0.8" opacity="0.5"/>
<polyline points="241,343 248,341 255,340 262,340 269,338 276,337 283,337 290,335 297,335 304,334 311,332 318,332 325,331 332,329 339,329 345,328 352,326 359,326 366,325 373,323 380,323 387,322 394,321 401,320 408,319" fill="none" stroke="#8a6440" stroke-width="0.8" opacity="0.5"/>
<polyline points="242,344 249,344 256,343 262,342 269,341 276,340 283,339 290,339 297,337 304,336 311,336 318,334 325,333 332,333 339,331 346,330 353,330 360,328 367,327 374,327 380,325 388,325 394,324 401,322 408,322" fill="none" stroke="#8a6440" stroke-width="0.8" opacity="0.5"/>
<polyline points="235,350 242,348 249,347 256,346 263,345 270,345 277,343 284,342 291,342 298,340 305,339 312,339 318,337 325,336 332,336 339,334 346,333 353,333 360,331 367,331 374,330 381,328 388,328 395,327 402,325 409,325" fill="none" stroke="#8a6440" stroke-width="0.8" opacity="0.5"/>
<polyline points="236,353 242,351 249,350 256,350 263,348 270,347 277,347 284,345 291,345 298,344 305,342 312,342 319,340 326,339 333,339 340,337 347,336 354,336 361,334 368,333 375,333 381,331 388,331 395,330 402,328 409,328" fill="none" stroke="#8a6440" stroke-width="0.8" opacity="0.5"/>
<polyline points="236,356 243,354 250,353 257,353 264,351 271,350 278,350 285,348 292,347 299,347 305,345 312,345 319,344 326,342 333,342 340,341 347,339 354,339 361,338 368,336 375,336 382,335 389,333 396,333 403,332 410,331" fill="none" stroke="#8a6440" stroke-width="0.8" opacity="0.5"/>
<polyline points="236,358 243,358 250,356 257,355 264,355 271,353 278,352 285,352 292,350 299,350 306,349 313,347 320,347 327,346 334,344 341,344 348,343 354,341 362,341 368,340 375,339 382,338 389,337 396,336 403,335 410,334" fill="none" stroke="#8a6440" stroke-width="0.8" opacity="0.5"/>
<polyline points="237,362 244,360 251,359 258,359 265,357 272,357 279,356 285,354 292,354 299,353 306,351 313,351 320,350 327,348 334,348 341,347 348,345 355,345 362,344 369,343 376,342 383,341 390,340 397,339 404,338 411,337" fill="none" stroke="#8a6440" stroke-width="0.8" opacity="0.5"/>
<polyline points="237,364 244,364 251,362 258,361 265,361 272,359 279,359 286,358 293,356 300,356 307,355 314,353 321,353 328,352 334,350 342,350 348,349 355,347 362,347 369,346 376,345 383,344 390,343 397,342 404,342 411,340" fill="none" stroke="#8a6440" stroke-width="0.8" opacity="0.5"/>
<polyline points="238,368 245,366 252,365 259,365 265,363 272,362 279,362 286,360 293,360 300,359 307,357 314,357 321,355 328,354 335,354 342,352 349,351 356,351 363,349 370,348 377,348 383,346 390,346 397,345 404,343 411,343" fill="none" stroke="#8a6440" stroke-width="0.8" opacity="0.5"/>
<polyline points="238,370 245,368 252,368 259,367 266,365 273,365 280,364 287,363 294,362 301,361 307,360 315,359 321,358 328,357 335,357 342,355 349,354 356,353 363,352 370,351 377,350 384,349 391,349 398,347 405,346 412,346" fill="none" stroke="#8a6440" stroke-width="0.8" opacity="0.5"/>
<polyline points="238,373 245,371 252,371 259,370 266,368 273,368 280,367 287,365 294,365 301,363 308,362 315,362 322,360 329,360 336,359 343,357 350,357 357,356 363,354 370,354 377,353 384,351 391,351 398,350 405,349 412,348" fill="none" stroke="#8a6440" stroke-width="0.8" opacity="0.5"/>
<polyline points="239,375 246,374 253,374 260,372 267,371 274,371 280,369 287,368 294,368 301,366 308,366 315,365 322,363 329,363 336,362 343,360 350,360 357,359 364,357 371,357 378,356 385,354 392,354 399,353 405,352 413,351" fill="none" stroke="#8a6440" stroke-width="0.8" opacity="0.5"/>
<polyline points="239,377 246,377 253,376 260,375 267,375 274,373 281,372 288,372 295,370 302,369 309,369 316,367 323,366 330,366 336,364 343,363 350,363 357,361 364,361 371,360 378,358 385,358 392,357 399,355 406,355 413,353" fill="none" stroke="#8a6440" stroke-width="0.8" opacity="0.5"/>
<polyline points="240,381 247,380 254,379 260,378 267,377 274,377 281,375 288,374 295,374 302,372 309,371 316,371 323,369 330,368 337,368 344,366 351,365 358,365 365,363 372,363 379,362 385,360 392,360 399,359 406,357 413,357" fill="none" stroke="#8a6440" stroke-width="0.8" opacity="0.5"/>
<polyline points="240,384 247,383 254,382 261,381 268,380 275,379 282,379 289,377 296,376 303,376 309,374 316,373 323,373 330,371 337,370 344,370 351,368 358,368 365,367 372,365 379,365 386,364 393,362 400,362 407,361 414,359" fill="none" stroke="#8a6440" stroke-width="0.8" opacity="0.5"/>
<polyline points="240,387 247,387 254,385 261,384 268,384 275,382 282,381 289,381 296,379 303,378 310,378 317,376 324,376 331,374 338,373 345,373 352,371 359,370 366,370 372,368 379,367 386,367 393,365 400,365 407,364 414,362" fill="none" stroke="#8a6440" stroke-width="0.8" opacity="0.5"/>
<polyline points="241,390 248,389 255,388 262,388 269,386 276,385 283,385 289,383 296,382 303,382 310,380 317,379 324,379 331,377 338,377 345,375 352,374 359,374 366,372 373,371 380,371 387,369 394,368 401,368 408,366 415,365" fill="none" stroke="#8a6440" stroke-width="0.8" opacity="0.5"/>
<polyline points="241,392 248,392 255,391 262,389 269,389 276,388 283,387 290,386 297,385 304,384 311,383 318,382 325,381 332,380 338,379 345,378 352,377 359,376 366,375 373,374 380,373 387,373 394,371 401,370 408,370" fill="none" stroke="#8a6440" stroke-width="0.8" opacity="0.5"/>
<polyline points="242,396 249,395 256,394 263,393 270,393 276,391 283,390 290,390 297,388 304,387 311,387 318,385 325,384 332,384 339,382 346,381 353,381 360,379 367,379 374,378 381,376 388,376 395,375 401,373 408,373" fill="none" stroke="#8a6440" stroke-width="0.8" opacity="0.5"/>
<polyline points="235,401 242,400 249,398 256,398 263,396 270,395 277,395 284,393 291,392 298,392 305,390 312,390 319,389 326,387 333,387 340,386 346,384 353,384 360,383 367,381 374,381 381,380 388,379 395,378 402,377 409,376" fill="none" stroke="#8a6440" stroke-width="0.8" opacity="0.5"/>
<polyline points="236,404 243,402 250,401 257,401 263,399 270,398 277,398 284,396 291,395 298,395 305,393 312,393 319,392 326,390 333,390 340,389 347,387 354,387 361,386 368,384 375,384 382,383 388,381 396,381 402,380 409,379" fill="none" stroke="#8a6440" stroke-width="0.8" opacity="0.5"/>
<polyline points="236,406 243,405 250,404 257,403 264,403 271,401 278,400 285,400 292,398 299,397 306,397 312,395 319,394 326,394 333,392 340,392 347,391 354,389 361,389 368,387 375,386 382,386 389,384 396,383 403,383 410,381" fill="none" stroke="#8a6440" stroke-width="0.8" opacity="0.5"/>
<polyline points="236,409 243,408 250,407 257,406 264,405 271,404 278,403 285,402 292,401 299,400 306,399 313,398 320,397 327,396 334,395 341,394 348,394 355,392 361,391 368,391 375,389 382,388 389,388 396,386 403,385 410,385" fill="none" stroke="#8a6440" stroke-width="0.8" opacity="0.5"/>
<polyline points="237,413 244,411 251,410 258,410 265,408 272,407 279,407 285,405 293,405 299,403 306,402 313,402 320,400 327,399 334,399 341,397 348,396 355,396 362,394 369,393 376,393 383,391 390,391 397,390 404,388 411,388" fill="none" stroke="#8a6440" stroke-width="0.8" opacity="0.5"/>
<polyline points="237,416 244,414 251,414 258,413 265,411 272,411 279,410 286,408 293,408 300,407 307,405 314,405 321,404 328,402 335,402 342,400 348,400 356,399 362,397 369,397 376,396 383,394 390,394 397,393 404,391 411,391" fill="none" stroke="#8a6440" stroke-width="0.8" opacity="0.5"/>
<polyline points="238,418 245,417 252,417 259,415 266,414 273,414 279,412 286,412 293,411 300,409 307,409 314,408 321,406 328,406 335,405 342,403 349,403 356,402 363,401 370,400 377,399 384,398 391,398 398,396 405,395 412,395" fill="none" stroke="#8a6440" stroke-width="0.8" opacity="0.5"/>
<polyline points="238,422 245,420 252,419 259,419 266,417 273,416 280,416 287,414 294,414 301,413 308,411 315,411 322,410 328,408 336,408 342,407 349,405 356,405 363,404 370,403 377,402 384,401 391,400 398,400 405,398 412,397" fill="none" stroke="#8a6440" stroke-width="0.8" opacity="0.5"/>
<polyline points="239,425 246,423 253,423 260,422 266,420 273,420 280,419 287,417 294,417 301,416 308,415 315,415 322,413 329,412 336,412 343,410 350,409 357,409 364,407 371,406 378,406 384,404 392,404 398,403 405,401 412,401" fill="none" stroke="#8a6440" stroke-width="0.8" opacity="0.5"/>
<polyline points="239,427 246,427 253,426 260,424 267,424 274,423 281,421 288,421 295,420 302,419 309,418 315,417 322,416 329,415 336,413 343,413 350,412 357,410 364,410 371,409 378,408 385,407 392,406 399,405 406,405 413,403" fill="none" stroke="#8a6440" stroke-width="0.8" opacity="0.5"/>
<polyline points="240,431 246,429 253,429 260,428 267,426 274,426 281,425 288,423 295,423 302,422 309,420 316,420 323,419 330,418 337,418 344,416 351,415 358,415 365,413 371,412 379,412 385,410 392,409 399,409 406,407 413,406" fill="none" stroke="#8a6440" stroke-width="0.8" opacity="0.5"/>
<polyline points="240,434 247,433 254,432 261,432 268,430 275,429 282,429 289,427 296,426 303,426 309,424 316,423 323,423 330,421 337,420 344,420 351,418 358,418 365,417 372,415 379,415 386,414 393,412 400,412 407,411 414,409" fill="none" stroke="#8a6440" stroke-width="0.8" opacity="0.5"/>
<polyline points="240,437 247,436 254,436 261,434 268,433 275,433 282,431 289,430 296,430 303,428 310,428 317,427 324,425 331,425 338,424 345,422 352,422 359,421 365,419 372,419 379,418 386,416 393,416 400,415 407,414 414,413" fill="none" stroke="#8a6440" stroke-width="0.8" opacity="0.5"/>
<polyline points="241,440 248,439 255,438 262,438 269,436 276,435 283,435 289,433 296,432 303,432 310,430 317,429 324,429 331,427 338,426 345,426 352,424 359,424 366,423 373,421 380,421 387,420 394,418 401,418 408,417 414,415" fill="none" stroke="#8a6440" stroke-width="0.8" opacity="0.5"/>
<polyline points="241,443 248,442 255,442 262,440 269,439 276,439 283,437 290,436 297,436 304,434 311,433 318,433 325,431 332,431 339,430 345,428 352,428 359,427 366,425 373,425 380,424 387,422 394,422 401,420 408,419" fill="none" stroke="#8a6440" stroke-width="0.8" opacity="0.5"/>
<polyline points="242,446 249,444 256,444 262,443 269,441 276,441 283,440 290,439 297,438 304,436 311,436 318,435 325,433 332,433 339,432 346,431 353,430 360,429 367,428 374,427 381,426 387,425 394,425 401,423 408,422" fill="none" stroke="#8a6440" stroke-width="0.8" opacity="0.5"/>
<polyline points="242,449 249,448 256,446 263,446 270,445 277,443 284,443 291,442 298,440 305,440 312,439 318,438 325,438 332,436 339,435 346,435 353,433 360,432 367,432 374,430 381,429 388,429 395,427 402,427 409,426" fill="none" stroke="#8a6440" stroke-width="0.8" opacity="0.5"/>
<polyline points="263,449 270,447 277,447 284,446 291,444 298,444 305,443 312,441 319,441 326,440 333,438 340,438 347,437 354,436 361,435 367,434 374,433 381,433 388,431 395,430 402,430 409,428" fill="none" stroke="#8a6440" stroke-width="0.8" opacity="0.5"/>
<polyline points="278,450 285,448 292,448 298,447 305,446 312,445 319,443 326,443 333,442 340,440 347,440 354,439 361,437 368,437 375,436 382,435 389,434 396,433 403,432 410,432" fill="none" stroke="#8a6440" stroke-width="0.8" opacity="0.5"/>
<polyline points="299,450 306,448 313,448 320,447 327,445 334,445 340,444 347,443 354,442 361,441 368,440 375,439 382,437 389,437 396,436 403,435 410,434" fill="none" stroke="#8a6440" stroke-width="0.8" opacity="0.5"/>
<polyline points="327,449 334,447 341,447 348,446 355,444 362,444 369,443 376,441 383,441 390,440 396,438 403,438 410,437" fill="none" stroke="#8a6440" stroke-width="0.8" opacity="0.5"/>
<polyline points="341,450 348,448 355,448 362,447 369,445 376,445 383,444 390,442 397,442 404,441 411,440" fill="none" stroke="#8a6440" stroke-width="0.8" opacity="0.5"/>
<polyline points="363,450 370,449 376,447 383,447 390,445 397,444 404,444 411,442" fill="none" stroke="#8a6440" stroke-width="0.8" opacity="0.5"/>
<polyline points="384,450 391,448 398,448 405,447 412,445" fill="none" stroke="#8a6440" stroke-width="0.8" opacity="0.5"/></g>
<polygon points="253.0,324.8 263.1,308.4 270.0,301.0 275.7,295.4 282.8,288.3 296.7,310.3 289.1,327.3 277.8,350.0 268.3,370.8 262.7,385.0 260.0,411.6 250.0,395.0 248.0,370.0 253.0,340.0" fill="#d2b8a6" />
<clipPath id="c16"><polygon points="253.0,324.8 263.1,308.4 270.0,301.0 275.7,295.4 282.8,288.3 296.7,310.3 289.1,327.3 277.8,350.0 268.3,370.8 262.7,385.0 260.0,411.6 250.0,395.0 248.0,370.0 253.0,340.0"/></clipPath><g clip-path="url(#c16)"><polyline points="241,290 244,287 246,284 246,281" fill="none" stroke="#a8805a" stroke-width="0.7" opacity="0.5"/>
<polyline points="244,291 247,289 249,286 249,282" fill="none" stroke="#a8805a" stroke-width="0.7" opacity="0.5"/>
<polyline points="244,299 245,296 248,294 249,290 250,287 253,285 254,281" fill="none" stroke="#a8805a" stroke-width="0.7" opacity="0.5"/>
<polyline points="244,303 247,301 249,298 249,294 252,292 254,289 254,285 258,283" fill="none" stroke="#a8805a" stroke-width="0.7" opacity="0.5"/>
<polyline points="244,311 247,309 247,305 249,302 252,300 252,296 254,293 257,291 258,287 260,284 262,282" fill="none" stroke="#a8805a" stroke-width="0.7" opacity="0.5"/>
<polyline points="244,319 246,317 246,313 249,310 251,308 252,304 255,302 256,299 257,295 260,293 261,289 262,286 265,284" fill="none" stroke="#a8805a" stroke-width="0.7" opacity="0.5"/>
<polyline points="244,323 247,321 248,318 249,314 252,312 253,309 255,306 257,303 258,299 260,297 263,294 263,290 265,288 268,285 268,281" fill="none" stroke="#a8805a" stroke-width="0.7" opacity="0.5"/>
<polyline points="243,331 246,329 247,325 249,322 251,320 252,316 254,313 257,311 257,307 259,304 262,302 262,298 265,295 267,293 267,289 270,287 272,283" fill="none" stroke="#a8805a" stroke-width="0.7" opacity="0.5"/>
<polyline points="242,339 245,336 247,333 247,329 250,327 252,324 252,320 256,318 257,315 258,311 261,309 262,306 263,302 266,300 267,297 268,294 272,291 272,288 274,285 277,282" fill="none" stroke="#a8805a" stroke-width="0.7" opacity="0.5"/>
<polyline points="243,343 246,341 248,338 248,334 252,332 253,329 254,325 257,323 258,319 259,316 262,314 263,310 265,307 267,305 268,301 270,298 273,296 273,292 276,290 278,287 278,283" fill="none" stroke="#a8805a" stroke-width="0.7" opacity="0.5"/>
<polyline points="242,351 245,348 246,345 247,342 251,339 251,336 253,333 256,330 256,327 258,324 261,321 261,318 264,315 266,312 267,308 269,306 271,303 272,299 275,297 276,294 277,290 280,288 281,285 282,281" fill="none" stroke="#a8805a" stroke-width="0.7" opacity="0.5"/>
<polyline points="243,355 245,352 248,350 248,346 250,343 253,341 253,337 255,334 258,332 258,328 261,325 263,323 264,319 266,316 268,314 269,310 272,307 273,304 274,301 277,299 278,295 279,292 283,290 283,286 285,283" fill="none" stroke="#a8805a" stroke-width="0.7" opacity="0.5"/>
<polyline points="242,363 245,360 247,357 247,354 251,352 252,348 253,345 256,343 257,339 258,336 261,334 262,330 264,327 266,324 267,321 269,318 272,315 272,311 275,309 277,306 277,302 280,300 282,297 282,293 285,291 287,288 287,284 291,282" fill="none" stroke="#a8805a" stroke-width="0.7" opacity="0.5"/>
<polyline points="243,367 246,365 247,361 248,358 252,356 252,352 254,349 257,347 257,343 259,340 262,338 262,334 265,332 267,329 267,325 270,323 272,320 273,316 276,314 277,311 278,307 281,305 282,301 283,298 286,296 287,292 288,289 292,287 292,283" fill="none" stroke="#a8805a" stroke-width="0.7" opacity="0.5"/>
<polyline points="244,371 247,369 248,366 249,363 252,360 253,357 254,354 257,351 258,348 260,345 263,342 263,338 265,336 268,333 268,329 271,327 273,324 273,320 276,318 278,315 278,311 281,309 283,306 284,302 287,300 288,297 289,293 292,291 293,287 294,284 297,282" fill="none" stroke="#a8805a" stroke-width="0.7" opacity="0.5"/>
<polyline points="241,382 244,380 246,377 246,373 250,371 250,367 252,364 255,362 255,358 257,355 260,353 261,349 263,346 265,344 266,340 268,337 270,335 271,331 273,329 276,326 276,322 279,320 281,317 281,313 284,311 286,307 286,304 290,302 291,298 292,295 295,293 296,289 297,286 300,284" fill="none" stroke="#a8805a" stroke-width="0.7" opacity="0.5"/>
<polyline points="243,387 245,384 246,381 249,379 250,375 251,372 254,370 255,366 256,363 259,361 260,357 262,354 265,351 265,348 267,345 270,342 270,338 273,336 275,333 275,329 278,327 280,324 280,320 283,318 285,315 286,311 289,309 290,306 291,302 294,300 295,297 296,293 299,291 300,287 302,285" fill="none" stroke="#a8805a" stroke-width="0.7" opacity="0.5"/>
<polyline points="241,394 244,392 246,389 246,385 249,383 251,380 252,376 255,374 256,371 257,367 260,365 261,362 262,358 265,356 266,352 268,349 271,347 271,343 273,340 276,338 276,334 279,331 281,329 281,325 284,323 286,320 286,316 289,314 291,311 292,307 295,305 296,301 297,298 300,296 301,292" fill="none" stroke="#a8805a" stroke-width="0.7" opacity="0.5"/>
<polyline points="242,399 245,396 246,393 247,390 250,387 251,384 253,381 256,378 256,375 258,372 261,369 261,366 263,363 266,360 266,356 269,354 271,351 271,347 274,345 276,342 277,338 280,336 281,333 282,329 285,327 286,324 287,320 290,318 291,315 293,311 296,309 296,305 298,302 301,300" fill="none" stroke="#a8805a" stroke-width="0.7" opacity="0.5"/>
<polyline points="244,404 245,401 248,398 249,394 251,392 253,389 254,385 256,383 258,380 259,376 262,374 264,371 264,367 267,365 269,362 269,358 272,356 274,353 274,349 278,347 279,343 280,340 283,338 284,334 285,331 288,329 289,325 291,322 293,320 294,316 296,313 299,311 299,307 301,305" fill="none" stroke="#a8805a" stroke-width="0.7" opacity="0.5"/>
<polyline points="242,411 246,409 247,405 248,402 251,400 252,396 253,393 256,391 257,387 259,384 261,382 262,378 264,375 267,373 267,369 269,366 272,364 272,360 275,357 277,354 277,351 280,348 282,345 282,342 286,340 287,336 288,333 291,331 292,327 293,324 296,322 297,318 298,315 301,313" fill="none" stroke="#a8805a" stroke-width="0.7" opacity="0.5"/>
<polyline points="244,416 245,412 248,410 249,407 250,403 253,401 254,398 256,394 259,392 259,388 261,386 264,383 264,379 266,377 269,374 269,370 272,368 274,365 274,361 277,359 279,356 280,352 283,350 284,347 285,343 288,341 289,337 290,334 293,332 294,328 296,325 299,323 299,319 301,316" fill="none" stroke="#a8805a" stroke-width="0.7" opacity="0.5"/>
<polyline points="247,418 247,414 249,411 252,409 252,405 255,402 257,399 257,396 260,393 262,390 263,386 266,384 267,381 268,377 271,375 272,372 273,369 276,366 277,363 279,360 282,357 282,354 284,351 287,348 287,344 289,342 292,339 292,335 295,333 297,330 297,326 300,324 302,321" fill="none" stroke="#a8805a" stroke-width="0.7" opacity="0.5"/>
<polyline points="251,416 252,412 255,410 256,407 257,403 260,401 261,398 262,394 265,392 266,388 268,385 271,383 271,379 273,376 276,374 276,370 278,368 281,365 281,361 284,359 286,356 286,352 289,350 291,347 292,343 295,341 296,338 297,334 300,332 301,328" fill="none" stroke="#a8805a" stroke-width="0.7" opacity="0.5"/>
<polyline points="253,417 256,415 256,411 259,408 261,406 261,402 264,399 266,397 266,393 269,390 271,387 272,384 275,381 276,378 277,375 280,373 281,369 282,366 286,364 286,360 288,357 291,355 291,351 293,348 296,346 296,342 298,339 301,336" fill="none" stroke="#a8805a" stroke-width="0.7" opacity="0.5"/>
<polyline points="258,416 258,412 262,410 263,407 264,403 267,401 268,398 269,394 272,392 273,388 274,385 277,383 278,379 280,376 283,374 283,370 285,367 288,365 288,361 291,359 293,356 293,352 296,350 298,347 298,343 302,341" fill="none" stroke="#a8805a" stroke-width="0.7" opacity="0.5"/>
<polyline points="260,417 261,414 264,411 265,408 266,405 269,402 270,399 272,396 275,393 275,389 277,387 280,384 280,380 283,378 285,375 285,371 288,369 290,366 290,362 294,360 295,357 296,353 299,351 300,348 301,344" fill="none" stroke="#a8805a" stroke-width="0.7" opacity="0.5"/>
<polyline points="263,419 264,415 265,412 268,410 269,406 271,403 274,401 274,397 276,394 279,392 279,388 281,385 284,383 284,379 287,376 289,374 289,370 292,368 294,364 295,361 298,359 299,355 300,352 303,350" fill="none" stroke="#a8805a" stroke-width="0.7" opacity="0.5"/>
<polyline points="266,417 269,414 271,411 271,408 275,405 276,402 277,399 280,397 281,393 282,390 285,388 286,384 287,381 290,378 291,375 293,372 296,369 296,366 298,363 301,360" fill="none" stroke="#a8805a" stroke-width="0.7" opacity="0.5"/>
<polyline points="272,416 272,412 276,410 277,407 278,403 281,401 282,397 283,394 286,392 287,388 288,385 291,383 292,379 294,376 296,374 297,370 299,368 302,365" fill="none" stroke="#a8805a" stroke-width="0.7" opacity="0.5"/>
<polyline points="273,417 277,415 277,411 279,408 282,406 282,402 284,399 287,397 287,393 290,390 292,388 292,384 295,381 297,378 298,375 300,372 302,369" fill="none" stroke="#a8805a" stroke-width="0.7" opacity="0.5"/>
<polyline points="276,418 278,415 281,413 281,409 283,407 286,404 286,400 289,398 291,395 291,391 294,389 296,385 296,382 300,380 301,376 302,373" fill="none" stroke="#a8805a" stroke-width="0.7" opacity="0.5"/>
<polyline points="282,418 283,414 284,411 287,409 288,405 289,402 292,400 293,396 294,393 297,391 298,387 300,384 303,381" fill="none" stroke="#a8805a" stroke-width="0.7" opacity="0.5"/>
<polyline points="284,419 285,415 287,412 289,410 290,406 292,403 294,401 295,397 297,395 300,392 300,388 303,386" fill="none" stroke="#a8805a" stroke-width="0.7" opacity="0.5"/>
<polyline points="287,417 290,414 291,411 292,408 295,405 296,402 298,399 301,396 301,392" fill="none" stroke="#a8805a" stroke-width="0.7" opacity="0.5"/>
<polyline points="293,416 293,412 296,410 298,407 298,403 301,401" fill="none" stroke="#a8805a" stroke-width="0.7" opacity="0.5"/>
<polyline points="294,417 295,413 299,411 299,408 301,404 304,402" fill="none" stroke="#a8805a" stroke-width="0.7" opacity="0.5"/>
<polyline points="296,418 299,416 301,413" fill="none" stroke="#a8805a" stroke-width="0.7" opacity="0.5"/><polyline points="257,322 257,325 258,328 258,331 257,334 257,337 256,339" fill="none" stroke="#b83232" stroke-width="1.0" opacity="0.9"/>
<polyline points="265,376 268,376 271,376 274,376 275,373 276,370 277,368" fill="none" stroke="#b83232" stroke-width="1.0" opacity="0.9"/>
<polyline points="261,395 262,398 264,400 263,403 261,405 260,408 257,407" fill="none" stroke="#b83232" stroke-width="1.0" opacity="0.9"/>
<polyline points="276,384 273,382 270,383 267,383 264,382 262,381 259,380" fill="none" stroke="#b83232" stroke-width="1.0" opacity="0.9"/>
<polyline points="276,407 277,410 277,413 277,416 277,419 276,422 277,425" fill="none" stroke="#b83232" stroke-width="1.0" opacity="0.9"/>
<polyline points="289,375 291,373 293,371 295,368 296,365 297,363 299,360" fill="none" stroke="#b83232" stroke-width="1.0" opacity="0.9"/>
<polyline points="249,381 247,384 246,386 246,389 248,391 251,393 253,394" fill="none" stroke="#b83232" stroke-width="1.0" opacity="0.9"/>
<polyline points="257,398 259,400 262,398 265,398 268,398 271,400 271,403" fill="none" stroke="#b83232" stroke-width="1.0" opacity="0.9"/>
<polyline points="267,352 266,350 264,347 261,346 260,343 258,342 255,340" fill="none" stroke="#b83232" stroke-width="1.0" opacity="0.9"/>
<polyline points="286,352 285,355 284,358 286,361 287,363 289,366 291,367" fill="none" stroke="#b83232" stroke-width="1.0" opacity="0.9"/>
<polyline points="277,408 277,411 276,414 276,417 274,420 275,423 276,425" fill="none" stroke="#b83232" stroke-width="1.0" opacity="0.9"/>
<polyline points="296,336 295,339 294,342 293,345 295,347 298,347 300,346" fill="none" stroke="#b83232" stroke-width="1.0" opacity="0.9"/>
<polyline points="289,332 287,330 285,328 282,329 280,327 278,324 276,322" fill="none" stroke="#b83232" stroke-width="1.0" opacity="0.9"/>
<polyline points="282,378 279,378 277,380 275,383 274,386 272,388 272,390" fill="none" stroke="#b83232" stroke-width="1.0" opacity="0.9"/>
<polyline points="277,293 275,296 273,298 270,296 267,296 264,295 262,294" fill="none" stroke="#b83232" stroke-width="1.0" opacity="0.9"/>
<polyline points="250,339 252,341 255,341 258,341 259,338 262,336 262,333" fill="none" stroke="#b83232" stroke-width="1.0" opacity="0.9"/>
<polyline points="296,318 299,316 301,314 303,313 306,313 309,313 312,312" fill="none" stroke="#b83232" stroke-width="1.0" opacity="0.9"/>
<polyline points="276,373 278,370 279,368 281,365 282,363 283,360 284,357" fill="none" stroke="#b83232" stroke-width="1.0" opacity="0.9"/>
<polyline points="285,377 284,380 283,382 284,385 286,387 288,389 291,391" fill="none" stroke="#b83232" stroke-width="1.0" opacity="0.9"/>
<polyline points="281,406 280,409 279,411 279,414 279,417 277,420 275,422" fill="none" stroke="#b83232" stroke-width="1.0" opacity="0.9"/>
<polyline points="296,403 295,406 293,408 292,411 290,412 288,415 285,415" fill="none" stroke="#b83232" stroke-width="1.0" opacity="0.9"/>
<polyline points="255,344 258,344 261,345 263,348 265,349 268,351 270,353" fill="none" stroke="#b83232" stroke-width="1.0" opacity="0.9"/>
<polyline points="274,364 271,364 268,362 265,362 263,364 260,364 258,367" fill="none" stroke="#b83232" stroke-width="1.0" opacity="0.9"/>
<polyline points="249,377 247,379 245,382 242,382 240,380 238,378 237,375" fill="none" stroke="#b83232" stroke-width="1.0" opacity="0.9"/>
<polyline points="251,371 254,373 256,374 259,375 262,376 265,377 268,376" fill="none" stroke="#b83232" stroke-width="1.0" opacity="0.9"/>
<polyline points="269,386 271,389 272,391 275,392 278,392 281,393 281,396" fill="none" stroke="#b83232" stroke-width="1.0" opacity="0.9"/>
<polyline points="257,376 260,376 263,375 265,377 267,379 270,379 272,377" fill="none" stroke="#b83232" stroke-width="1.0" opacity="0.9"/>
<polyline points="281,321 280,324 280,327 282,329 283,331 286,333 289,334" fill="none" stroke="#b83232" stroke-width="1.0" opacity="0.9"/>
<polyline points="296,352 293,351 290,349 289,347 287,345 284,343 281,345" fill="none" stroke="#b83232" stroke-width="1.0" opacity="0.9"/>
<polyline points="282,379 279,378 276,380 273,381 270,381 267,382 265,383" fill="none" stroke="#b83232" stroke-width="1.0" opacity="0.9"/>
<polyline points="284,306 286,305 289,304 291,302 294,300 297,301 300,302" fill="none" stroke="#b83232" stroke-width="1.0" opacity="0.9"/>
<polyline points="258,355 259,352 258,350 257,347 257,344 258,341 259,338" fill="none" stroke="#b83232" stroke-width="1.0" opacity="0.9"/>
<polyline points="293,311 292,314 293,317 294,319 293,322 294,325 296,328" fill="none" stroke="#b83232" stroke-width="1.0" opacity="0.9"/>
<polyline points="275,316 277,313 280,312 282,310 285,308 288,308 290,309" fill="none" stroke="#b83232" stroke-width="1.0" opacity="0.9"/><ellipse cx="276.8" cy="299.0" rx="4.2" ry="1.0" fill="#eee4da" opacity="0.7" transform="rotate(-41 276.8 299.0)"/>
<ellipse cx="275.5" cy="381.0" rx="3.5" ry="2.0" fill="#eee4da" opacity="0.7" transform="rotate(-62 275.5 381.0)"/>
<ellipse cx="258.1" cy="323.6" rx="1.8" ry="1.5" fill="#eee4da" opacity="0.7" transform="rotate(-54 258.1 323.6)"/>
<ellipse cx="274.9" cy="358.3" rx="3.1" ry="2.9" fill="#eee4da" opacity="0.7" transform="rotate(-46 274.9 358.3)"/>
<ellipse cx="260.9" cy="357.0" rx="4.4" ry="1.5" fill="#eee4da" opacity="0.7" transform="rotate(-52 260.9 357.0)"/>
<ellipse cx="279.5" cy="370.8" rx="3.2" ry="2.5" fill="#eee4da" opacity="0.7" transform="rotate(-65 279.5 370.8)"/>
<ellipse cx="293.6" cy="358.2" rx="2.5" ry="2.3" fill="#eee4da" opacity="0.7" transform="rotate(-53 293.6 358.2)"/>
<ellipse cx="292.8" cy="366.7" rx="3.1" ry="1.7" fill="#eee4da" opacity="0.7" transform="rotate(-63 292.8 366.7)"/>
<ellipse cx="262.0" cy="364.8" rx="4.1" ry="2.2" fill="#eee4da" opacity="0.7" transform="rotate(-72 262.0 364.8)"/>
<ellipse cx="249.8" cy="396.6" rx="2.4" ry="2.4" fill="#eee4da" opacity="0.7" transform="rotate(-42 249.8 396.6)"/>
<ellipse cx="293.8" cy="356.7" rx="4.2" ry="1.8" fill="#eee4da" opacity="0.7" transform="rotate(-42 293.8 356.7)"/>
<ellipse cx="281.1" cy="298.2" rx="3.9" ry="1.3" fill="#eee4da" opacity="0.7" transform="rotate(-40 281.1 298.2)"/>
<ellipse cx="250.4" cy="381.6" rx="2.0" ry="2.1" fill="#eee4da" opacity="0.7" transform="rotate(-65 250.4 381.6)"/>
<ellipse cx="290.6" cy="322.1" rx="3.7" ry="2.9" fill="#eee4da" opacity="0.7" transform="rotate(-77 290.6 322.1)"/>
<ellipse cx="282.8" cy="298.6" rx="3.8" ry="2.7" fill="#eee4da" opacity="0.7" transform="rotate(-74 282.8 298.6)"/>
<ellipse cx="291.1" cy="342.3" rx="2.4" ry="2.9" fill="#eee4da" opacity="0.7" transform="rotate(-65 291.1 342.3)"/>
<ellipse cx="258.2" cy="329.0" rx="4.2" ry="3.0" fill="#eee4da" opacity="0.7" transform="rotate(-62 258.2 329.0)"/>
<ellipse cx="272.0" cy="362.0" rx="4.0" ry="1.0" fill="#eee4da" opacity="0.7" transform="rotate(-48 272.0 362.0)"/>
<ellipse cx="295.4" cy="338.3" rx="2.8" ry="2.9" fill="#eee4da" opacity="0.7" transform="rotate(-64 295.4 338.3)"/>
<ellipse cx="266.3" cy="394.3" rx="2.9" ry="2.3" fill="#eee4da" opacity="0.7" transform="rotate(-69 266.3 394.3)"/>
<ellipse cx="281.1" cy="333.7" rx="3.9" ry="2.0" fill="#eee4da" opacity="0.7" transform="rotate(-43 281.1 333.7)"/>
<ellipse cx="274.7" cy="394.0" rx="2.8" ry="2.3" fill="#eee4da" opacity="0.7" transform="rotate(-69 274.7 394.0)"/>
<ellipse cx="276.6" cy="370.1" rx="2.1" ry="2.1" fill="#eee4da" opacity="0.7" transform="rotate(-43 276.6 370.1)"/>
<ellipse cx="257.8" cy="348.5" rx="4.0" ry="1.9" fill="#eee4da" opacity="0.7" transform="rotate(-79 257.8 348.5)"/>
<ellipse cx="273.6" cy="345.3" rx="4.3" ry="2.3" fill="#eee4da" opacity="0.7" transform="rotate(-49 273.6 345.3)"/>
<ellipse cx="265.9" cy="398.8" rx="4.0" ry="1.2" fill="#eee4da" opacity="0.7" transform="rotate(-54 265.9 398.8)"/></g>
<polygon points="255.0,318.0 263.0,308.0 270.0,301.0 276.0,296.0 290.0,300.0 296.0,310.0 280.0,322.0 262.0,325.0" fill="#b4a09a" opacity="0.85"/>
<clipPath id="c17"><polygon points="255.0,318.0 263.0,308.0 270.0,301.0 276.0,296.0 290.0,300.0 296.0,310.0 280.0,322.0 262.0,325.0"/></clipPath><g clip-path="url(#c17)"><polyline points="293,315 296,315 298,312 299,310 301,307 302,305" fill="none" stroke="#b83232" stroke-width="1.0" opacity="0.9"/>
<polyline points="273,315 273,312 275,310 276,307 276,304 276,301" fill="none" stroke="#b83232" stroke-width="1.0" opacity="0.9"/>
<polyline points="260,310 262,312 264,314 263,317 260,319 257,319" fill="none" stroke="#b83232" stroke-width="1.0" opacity="0.9"/>
<polyline points="283,316 281,319 281,322 282,325 282,328 280,330" fill="none" stroke="#b83232" stroke-width="1.0" opacity="0.9"/>
<polyline points="286,298 283,298 281,299 278,300 276,303 275,305" fill="none" stroke="#b83232" stroke-width="1.0" opacity="0.9"/>
<polyline points="274,303 271,303 268,302 265,301 262,301 260,300" fill="none" stroke="#b83232" stroke-width="1.0" opacity="0.9"/>
<polyline points="288,311 290,313 290,316 288,318 286,320 286,323" fill="none" stroke="#b83232" stroke-width="1.0" opacity="0.9"/>
<polyline points="263,316 264,313 267,311 269,310 272,310 275,311" fill="none" stroke="#b83232" stroke-width="1.0" opacity="0.9"/>
<polyline points="281,317 283,314 285,312 285,309 285,306 285,303" fill="none" stroke="#b83232" stroke-width="1.0" opacity="0.9"/>
<polyline points="264,309 266,307 268,305 267,302 266,299 263,298" fill="none" stroke="#b83232" stroke-width="1.0" opacity="0.9"/>
<polyline points="289,319 287,318 284,317 281,316 280,313 279,310" fill="none" stroke="#b83232" stroke-width="1.0" opacity="0.9"/>
<polyline points="294,301 294,298 292,295 291,293 288,291 286,290" fill="none" stroke="#b83232" stroke-width="1.0" opacity="0.9"/><ellipse cx="286.5" cy="313.0" rx="2.1" ry="1.1" fill="#e8e0e0" opacity="0.7" transform="rotate(-11 286.5 313.0)"/>
<ellipse cx="270.7" cy="302.5" rx="2.1" ry="1.7" fill="#e8e0e0" opacity="0.7" transform="rotate(-13 270.7 302.5)"/>
<ellipse cx="278.9" cy="307.2" rx="2.5" ry="1.3" fill="#e8e0e0" opacity="0.7" transform="rotate(-17 278.9 307.2)"/>
<ellipse cx="289.8" cy="316.8" rx="2.9" ry="1.4" fill="#e8e0e0" opacity="0.7" transform="rotate(-11 289.8 316.8)"/>
<ellipse cx="282.0" cy="301.8" rx="2.3" ry="1.5" fill="#e8e0e0" opacity="0.7" transform="rotate(-33 282.0 301.8)"/>
<ellipse cx="261.2" cy="305.9" rx="2.6" ry="0.8" fill="#e8e0e0" opacity="0.7" transform="rotate(-50 261.2 305.9)"/>
<ellipse cx="291.8" cy="325.1" rx="2.7" ry="1.6" fill="#e8e0e0" opacity="0.7" transform="rotate(-21 291.8 325.1)"/>
<ellipse cx="277.7" cy="315.2" rx="2.5" ry="1.0" fill="#e8e0e0" opacity="0.7" transform="rotate(-42 277.7 315.2)"/>
<ellipse cx="283.8" cy="313.7" rx="3.0" ry="1.1" fill="#e8e0e0" opacity="0.7" transform="rotate(-33 283.8 313.7)"/>
<ellipse cx="259.2" cy="295.5" rx="1.3" ry="1.3" fill="#e8e0e0" opacity="0.7" transform="rotate(-11 259.2 295.5)"/></g>
<polygon points="264.0,320.0 274.0,318.0 278.0,323.0 268.0,325.0" fill="#b8c458" />
<polygon points="282.8,288.3 287.0,278.4 292.7,271.3 299.8,269.6 308.3,270.2 315.3,271.6 322.4,274.2 321.2,287.7 311.8,299.0 302.3,306.6 289.1,299.0" fill="#dcc2aa" />
<clipPath id="c18"><polygon points="282.8,288.3 287.0,278.4 292.7,271.3 299.8,269.6 308.3,270.2 315.3,271.6 322.4,274.2 321.2,287.7 311.8,299.0 302.3,306.6 289.1,299.0"/></clipPath><g clip-path="url(#c18)"><polyline points="277,268 280,266 284,264" fill="none" stroke="#f4e8dc" stroke-width="0.9" opacity="0.55"/>
<polyline points="278,270 282,268 285,267 288,265" fill="none" stroke="#f4e8dc" stroke-width="0.9" opacity="0.55"/>
<polyline points="277,275 280,273 283,272 286,270 289,268 293,267 296,266" fill="none" stroke="#f4e8dc" stroke-width="0.9" opacity="0.55"/>
<polyline points="278,277 281,276 284,274 288,273 291,271 294,269 297,268 301,267 304,265" fill="none" stroke="#f4e8dc" stroke-width="0.9" opacity="0.55"/>
<polyline points="276,281 279,281 282,279 286,277 289,276 292,274 295,273 299,272 302,269 305,268 308,267 311,265" fill="none" stroke="#f4e8dc" stroke-width="0.9" opacity="0.55"/>
<polyline points="277,285 281,283 284,281 287,280 290,279 293,277 297,276 300,274 303,272 307,271 310,269 313,268 316,267 319,265" fill="none" stroke="#f4e8dc" stroke-width="0.9" opacity="0.55"/>
<polyline points="278,287 281,285 285,284 288,282 291,281 295,280 298,277 301,276 304,275 307,273 311,272 314,270 317,268 321,268 324,266 327,264" fill="none" stroke="#f4e8dc" stroke-width="0.9" opacity="0.55"/>
<polyline points="276,291 280,290 283,288 286,286 290,286 293,283 296,282 299,281 302,279 306,277 309,276 312,274 315,273 319,272 322,270 325,269 328,267" fill="none" stroke="#f4e8dc" stroke-width="0.9" opacity="0.55"/>
<polyline points="277,293 281,293 284,290 287,289 291,288 294,286 297,285 300,283 303,281 307,280 310,279 313,277 317,276 320,274 323,272 326,271 329,269" fill="none" stroke="#f4e8dc" stroke-width="0.9" opacity="0.55"/>
<polyline points="279,296 282,295 285,293 288,291 292,291 295,288 298,287 302,286 304,284 308,283 311,281 314,279 318,278 321,277 324,275 327,274" fill="none" stroke="#f4e8dc" stroke-width="0.9" opacity="0.55"/>
<polyline points="277,300 280,299 283,297 286,296 290,295 293,292 296,291 300,290 302,288 306,287 309,285 312,283 316,283 319,281 322,279 325,278 328,276" fill="none" stroke="#f4e8dc" stroke-width="0.9" opacity="0.55"/>
<polyline points="278,303 281,302 284,299 288,299 291,297 294,295 298,294 301,292 304,290 307,290 310,288 313,286 317,285 320,283 323,282 327,281" fill="none" stroke="#f4e8dc" stroke-width="0.9" opacity="0.55"/>
<polyline points="276,307 279,306 282,304 286,303 289,301 292,299 296,299 299,296 302,295 305,294 308,292 312,291 315,289 318,287 321,286 325,285 328,283" fill="none" stroke="#f4e8dc" stroke-width="0.9" opacity="0.55"/>
<polyline points="278,310 281,308 284,308 287,306 290,304 294,303 297,301 300,299 304,299 306,296 310,295 313,294 316,292 320,291 323,289 326,287 329,286" fill="none" stroke="#f4e8dc" stroke-width="0.9" opacity="0.55"/>
<polyline points="282,312 285,310 289,309 292,307 295,305 298,305 301,303 305,301 308,300 311,298 314,296 318,296 321,293 324,292 328,291" fill="none" stroke="#f4e8dc" stroke-width="0.9" opacity="0.55"/>
<polyline points="290,312 293,310 297,309 300,307 303,306 306,305 309,302 313,301 316,300 319,298 322,297 326,295 329,293" fill="none" stroke="#f4e8dc" stroke-width="0.9" opacity="0.55"/>
<polyline points="298,311 301,310 304,308 307,307 311,306 314,304 317,302 321,301 323,299 327,298" fill="none" stroke="#f4e8dc" stroke-width="0.9" opacity="0.55"/>
<polyline points="305,311 308,309 312,308 315,307 318,304 322,304 325,302 328,300" fill="none" stroke="#f4e8dc" stroke-width="0.9" opacity="0.55"/>
<polyline points="313,311 316,308 319,307 323,306 326,304 329,303" fill="none" stroke="#f4e8dc" stroke-width="0.9" opacity="0.55"/>
<polyline points="317,311 321,310 324,309 327,307" fill="none" stroke="#f4e8dc" stroke-width="0.9" opacity="0.55"/><polyline points="284,281 283,278 281,276 279,274 278,271 277,268 277,265" fill="none" stroke="#b83232" stroke-width="1.0" opacity="0.85"/>
<polyline points="303,304 305,307 307,309 310,309 313,310 314,312 314,315" fill="none" stroke="#b83232" stroke-width="1.0" opacity="0.85"/>
<polyline points="305,290 307,288 309,286 310,283 313,283 316,282 319,283" fill="none" stroke="#b83232" stroke-width="1.0" opacity="0.85"/>
<polyline points="321,282 318,281 315,283 313,284 310,284 307,286 304,286" fill="none" stroke="#b83232" stroke-width="1.0" opacity="0.85"/>
<polyline points="304,270 305,267 305,264 304,262 302,259 300,258 297,257" fill="none" stroke="#b83232" stroke-width="1.0" opacity="0.85"/>
<polyline points="298,278 300,275 302,274 304,272 307,270 309,269 312,268" fill="none" stroke="#b83232" stroke-width="1.0" opacity="0.85"/></g>
<polygon points="300.0,366.0 314.0,357.0 331.0,352.0 352.0,350.0 365.0,352.0 372.2,340.6 380.0,360.0 392.0,400.0 403.6,424.8 392.2,432.3 377.1,436.1 362.0,440.8 345.0,444.6 326.1,445.6 309.1,443.7 297.8,436.1 284.6,428.6 273.0,416.0 280.0,390.0" fill="#e8dac6" />
<clipPath id="c19"><polygon points="300.0,366.0 314.0,357.0 331.0,352.0 352.0,350.0 365.0,352.0 372.2,340.6 380.0,360.0 392.0,400.0 403.6,424.8 392.2,432.3 377.1,436.1 362.0,440.8 345.0,444.6 326.1,445.6 309.1,443.7 297.8,436.1 284.6,428.6 273.0,416.0 280.0,390.0"/></clipPath><g clip-path="url(#c19)"><polyline points="266,341 277,339 288,338 299,337 310,335" fill="none" stroke="#a47444" stroke-width="1.1" opacity="0.62"/>
<polyline points="266,342 277,342 288,341 299,339 310,338 321,337 332,335" fill="none" stroke="#a47444" stroke-width="1.1" opacity="0.62"/>
<polyline points="266,345 277,344 288,342 299,342 310,340 321,339 333,339 344,337 355,336" fill="none" stroke="#a47444" stroke-width="1.1" opacity="0.62"/>
<polyline points="266,347 278,346 289,345 300,344 311,343 322,341 333,340 344,340 355,338 366,337 377,336" fill="none" stroke="#a47444" stroke-width="1.1" opacity="0.62"/>
<polyline points="267,350 278,349 289,347 300,346 311,346 322,344 333,343 344,342 355,340 366,340 377,338 388,337 399,336" fill="none" stroke="#a47444" stroke-width="1.1" opacity="0.62"/>
<polyline points="267,352 278,351 289,350 300,349 311,347 322,347 333,345 344,344 355,343 366,341 377,341 388,340 399,338 411,337" fill="none" stroke="#a47444" stroke-width="1.1" opacity="0.62"/>
<polyline points="267,355 278,353 289,352 300,351 311,349 322,349 333,347 344,346 356,345 367,344 378,343 389,342 400,340 411,339" fill="none" stroke="#a47444" stroke-width="1.1" opacity="0.62"/>
<polyline points="267,356 279,356 290,354 301,353 312,352 323,351 334,350 345,349 356,347 367,347 378,345 389,344 400,343 411,341" fill="none" stroke="#a47444" stroke-width="1.1" opacity="0.62"/>
<polyline points="268,359 279,358 290,357 301,355 312,355 323,353 334,352 345,351 356,349 367,349 378,348 389,346 400,345 411,344" fill="none" stroke="#a47444" stroke-width="1.1" opacity="0.62"/>
<polyline points="268,361 279,360 290,358 301,358 312,357 323,355 334,354 345,353 356,351 367,351 378,349 389,348 400,347 411,346" fill="none" stroke="#a47444" stroke-width="1.1" opacity="0.62"/>
<polyline points="268,364 279,362 290,362 301,360 312,359 323,358 334,356 346,356 357,355 368,353 379,352 390,351 401,350 412,349" fill="none" stroke="#a47444" stroke-width="1.1" opacity="0.62"/>
<polyline points="268,366 280,365 291,364 302,362 313,362 324,360 335,359 346,358 357,357 368,356 379,355 390,353 401,352 412,351" fill="none" stroke="#a47444" stroke-width="1.1" opacity="0.62"/>
<polyline points="269,368 280,367 291,366 302,364 313,364 324,362 335,361 346,360 357,359 368,358 379,357 390,355 401,355 412,353" fill="none" stroke="#a47444" stroke-width="1.1" opacity="0.62"/>
<polyline points="258,372 269,371 280,369 291,369 302,367 313,366 324,365 335,364 346,363 357,362 368,360 379,359 390,358 401,357 413,356" fill="none" stroke="#a47444" stroke-width="1.1" opacity="0.62"/>
<polyline points="258,374 269,373 280,372 291,371 302,370 313,368 324,368 335,366 346,365 358,364 369,362 380,362 391,361 402,359 413,358" fill="none" stroke="#a47444" stroke-width="1.1" opacity="0.62"/>
<polyline points="258,376 269,375 281,374 291,373 303,372 314,370 325,369 336,369 347,367 358,366 369,365 380,363 391,363 402,361 413,360" fill="none" stroke="#a47444" stroke-width="1.1" opacity="0.62"/>
<polyline points="259,379 270,377 281,376 292,376 303,374 314,373 325,372 336,370 347,370 358,368 369,367 380,366 391,364 402,364 413,363" fill="none" stroke="#a47444" stroke-width="1.1" opacity="0.62"/>
<polyline points="259,381 270,380 281,379 292,377 303,376 314,376 325,374 336,373 347,372 358,370 369,370 380,368 391,367 402,366 413,364" fill="none" stroke="#a47444" stroke-width="1.1" opacity="0.62"/>
<polyline points="259,383 270,382 281,381 292,379 303,379 314,377 325,376 336,375 347,373 358,373 370,372 381,370 392,370 403,368 414,367" fill="none" stroke="#a47444" stroke-width="1.1" opacity="0.62"/>
<polyline points="259,386 270,384 281,383 293,383 304,381 315,380 326,379 337,377 348,377 359,375 370,374 381,373 392,372 403,370 414,370" fill="none" stroke="#a47444" stroke-width="1.1" opacity="0.62"/>
<polyline points="260,389 271,387 282,386 293,385 304,383 315,383 326,381 337,380 348,379 359,377 370,376 381,376 392,374 403,373 414,372" fill="none" stroke="#a47444" stroke-width="1.1" opacity="0.62"/>
<polyline points="260,391 271,390 282,388 293,388 304,386 315,385 326,384 337,382 348,381 359,380 370,379 381,378 392,377 403,375 414,375" fill="none" stroke="#a47444" stroke-width="1.1" opacity="0.62"/>
<polyline points="260,393 271,392 282,390 293,390 304,388 315,387 326,387 337,385 348,384 360,383 371,381 382,381 393,379 404,378 415,377" fill="none" stroke="#a47444" stroke-width="1.1" opacity="0.62"/>
<polyline points="260,396 271,394 283,394 294,392 305,391 316,390 327,388 338,387 349,387 360,385 371,384 382,383 393,381 404,381 415,379" fill="none" stroke="#a47444" stroke-width="1.1" opacity="0.62"/>
<polyline points="261,398 272,397 283,395 294,395 305,393 316,392 327,391 338,389 349,389 360,388 371,386 382,385 393,384 404,382 415,382" fill="none" stroke="#a47444" stroke-width="1.1" opacity="0.62"/>
<polyline points="261,400 272,399 283,398 294,396 305,396 316,394 327,393 338,392 349,390 360,389 371,389 382,387 393,386 404,385 415,383" fill="none" stroke="#a47444" stroke-width="1.1" opacity="0.62"/>
<polyline points="261,402 272,402 283,400 294,399 305,398 316,396 327,396 338,395 349,393 361,392 372,391 383,390 394,389 405,387 416,386" fill="none" stroke="#a47444" stroke-width="1.1" opacity="0.62"/>
<polyline points="261,405 272,404 284,403 295,401 306,401 317,399 328,398 339,397 350,396 361,394 372,394 383,392 394,391 405,390 416,388" fill="none" stroke="#a47444" stroke-width="1.1" opacity="0.62"/>
<polyline points="262,408 273,406 284,405 295,404 306,403 317,402 328,400 339,399 350,398 361,397 372,396 383,395 394,393 405,393 416,391" fill="none" stroke="#a47444" stroke-width="1.1" opacity="0.62"/>
<polyline points="262,410 273,408 284,408 295,406 306,405 317,404 328,403 339,402 350,401 361,399 372,398 383,397 394,396 405,395 416,394" fill="none" stroke="#a47444" stroke-width="1.1" opacity="0.62"/>
<polyline points="262,413 273,411 284,410 295,409 306,408 317,406 328,406 339,404 351,403 362,402 373,400 384,400 395,398 406,397 417,397" fill="none" stroke="#a47444" stroke-width="1.1" opacity="0.62"/>
<polyline points="262,414 274,414 285,413 296,411 307,411 318,409 329,408 340,407 351,405 362,405 373,403 384,402 395,401 406,400 417,398" fill="none" stroke="#a47444" stroke-width="1.1" opacity="0.62"/>
<polyline points="263,417 274,417 285,415 296,414 307,413 318,411 329,411 340,410 351,408 362,407 373,406 384,404 395,404 406,402 417,401" fill="none" stroke="#a47444" stroke-width="1.1" opacity="0.62"/>
<polyline points="263,420 274,419 285,417 296,416 307,415 318,414 329,413 340,411 351,410 362,410 373,408 384,407 395,406 406,404 418,404" fill="none" stroke="#a47444" stroke-width="1.1" opacity="0.62"/>
<polyline points="263,423 274,421 285,420 296,419 307,418 318,417 330,416 340,414 352,413 363,412 374,410 385,410 396,408 407,407 418,407" fill="none" stroke="#a47444" stroke-width="1.1" opacity="0.62"/>
<polyline points="264,425 275,424 286,423 297,421 308,420 319,419 330,418 341,417 352,416 363,414 374,414 385,412 396,411 407,410 418,408" fill="none" stroke="#a47444" stroke-width="1.1" opacity="0.62"/>
<polyline points="264,427 275,427 286,425 297,424 308,423 319,421 330,421 341,420 352,418 363,417 374,416 385,415 396,414 407,412 418,411" fill="none" stroke="#a47444" stroke-width="1.1" opacity="0.62"/>
<polyline points="264,430 275,429 286,427 297,427 308,425 319,424 330,423 341,422 352,421 363,420 374,418 385,417 397,416 408,415 419,414" fill="none" stroke="#a47444" stroke-width="1.1" opacity="0.62"/>
<polyline points="264,433 275,431 286,431 297,429 308,428 320,427 331,425 342,425 353,424 364,422 375,421 386,420 397,418 408,418" fill="none" stroke="#a47444" stroke-width="1.1" opacity="0.62"/>
<polyline points="265,434 276,434 287,433 298,431 309,430 320,429 331,428 342,427 353,425 364,424 375,423 386,422 397,421 408,420" fill="none" stroke="#a47444" stroke-width="1.1" opacity="0.62"/>
<polyline points="265,437 276,436 287,434 298,434 309,432 320,431 331,430 342,428 353,428 364,427 375,425 386,424 397,423 408,422" fill="none" stroke="#a47444" stroke-width="1.1" opacity="0.62"/>
<polyline points="265,439 276,438 287,437 298,435 309,434 320,434 331,432 342,431 353,430 364,428 375,428 386,426 397,425 409,424" fill="none" stroke="#a47444" stroke-width="1.1" opacity="0.62"/>
<polyline points="265,441 276,440 287,439 298,438 309,437 320,436 331,434 343,433 354,432 365,431 376,430 387,429 398,427 409,427" fill="none" stroke="#a47444" stroke-width="1.1" opacity="0.62"/>
<polyline points="265,444 277,443 288,442 299,440 310,440 321,438 332,437 343,436 354,434 365,434 376,433 387,431 398,430 409,429" fill="none" stroke="#a47444" stroke-width="1.1" opacity="0.62"/>
<polyline points="266,446 277,445 288,444 299,443 310,442 321,440 332,440 343,438 354,437 365,436 376,434 387,434 398,432 409,431" fill="none" stroke="#a47444" stroke-width="1.1" opacity="0.62"/>
<polyline points="266,449 277,448 288,447 299,445 310,445 321,443 332,442 343,441 354,439 365,439 376,438 387,436 399,435 410,434" fill="none" stroke="#a47444" stroke-width="1.1" opacity="0.62"/>
<polyline points="277,450 288,449 299,447 310,447 321,445 333,444 344,443 355,441 366,441 377,440 388,438 399,438 410,436" fill="none" stroke="#a47444" stroke-width="1.1" opacity="0.62"/>
<polyline points="300,450 311,449 322,448 333,447 344,445 355,445 366,443 377,442 388,441 399,439 410,439" fill="none" stroke="#a47444" stroke-width="1.1" opacity="0.62"/>
<polyline points="322,450 333,449 344,448 355,447 366,445 377,445 388,443 399,442 410,441" fill="none" stroke="#a47444" stroke-width="1.1" opacity="0.62"/>
<polyline points="344,450 355,448 366,448 377,447 388,445 400,445 410,443" fill="none" stroke="#a47444" stroke-width="1.1" opacity="0.62"/>
<polyline points="367,450 378,449 389,448 400,447 411,445" fill="none" stroke="#a47444" stroke-width="1.1" opacity="0.62"/><circle cx="353.2" cy="346.4" r="0.55" fill="#1e1e1e" opacity="0.7"/>
<circle cx="338.9" cy="349.3" r="0.55" fill="#1e1e1e" opacity="0.7"/>
<circle cx="397.7" cy="418.3" r="0.55" fill="#1e1e1e" opacity="0.7"/>
<circle cx="301.5" cy="419.1" r="0.55" fill="#1e1e1e" opacity="0.7"/>
<circle cx="357.6" cy="407.0" r="0.55" fill="#1e1e1e" opacity="0.7"/>
<circle cx="284.9" cy="392.0" r="0.55" fill="#1e1e1e" opacity="0.7"/>
<circle cx="344.0" cy="389.2" r="0.55" fill="#1e1e1e" opacity="0.7"/>
<circle cx="398.3" cy="403.1" r="0.55" fill="#1e1e1e" opacity="0.7"/>
<circle cx="367.0" cy="352.0" r="0.55" fill="#1e1e1e" opacity="0.7"/>
<circle cx="277.1" cy="424.0" r="0.55" fill="#1e1e1e" opacity="0.7"/>
<circle cx="401.5" cy="422.2" r="0.55" fill="#1e1e1e" opacity="0.7"/>
<circle cx="343.5" cy="412.1" r="0.55" fill="#1e1e1e" opacity="0.7"/>
<circle cx="348.7" cy="365.3" r="0.55" fill="#1e1e1e" opacity="0.7"/>
<circle cx="396.5" cy="363.1" r="0.55" fill="#1e1e1e" opacity="0.7"/>
<circle cx="349.4" cy="443.5" r="0.55" fill="#1e1e1e" opacity="0.7"/>
<circle cx="301.8" cy="440.2" r="0.55" fill="#1e1e1e" opacity="0.7"/>
<circle cx="329.1" cy="419.1" r="0.55" fill="#1e1e1e" opacity="0.7"/>
<circle cx="370.8" cy="423.1" r="0.55" fill="#1e1e1e" opacity="0.7"/>
<circle cx="324.8" cy="388.7" r="0.55" fill="#1e1e1e" opacity="0.7"/>
<circle cx="295.0" cy="432.7" r="0.55" fill="#1e1e1e" opacity="0.7"/>
<circle cx="323.8" cy="413.1" r="0.55" fill="#1e1e1e" opacity="0.7"/>
<circle cx="286.5" cy="386.6" r="0.55" fill="#1e1e1e" opacity="0.7"/>
<circle cx="286.1" cy="412.1" r="0.55" fill="#1e1e1e" opacity="0.7"/>
<circle cx="288.9" cy="349.0" r="0.55" fill="#1e1e1e" opacity="0.7"/>
<circle cx="339.5" cy="382.0" r="0.55" fill="#1e1e1e" opacity="0.7"/>
<circle cx="315.0" cy="429.2" r="0.55" fill="#1e1e1e" opacity="0.7"/>
<circle cx="296.5" cy="391.0" r="0.55" fill="#1e1e1e" opacity="0.7"/>
<circle cx="369.5" cy="399.0" r="0.55" fill="#1e1e1e" opacity="0.7"/>
<circle cx="352.9" cy="399.5" r="0.55" fill="#1e1e1e" opacity="0.7"/>
<circle cx="380.1" cy="439.6" r="0.55" fill="#1e1e1e" opacity="0.7"/>
<circle cx="294.0" cy="361.7" r="0.55" fill="#1e1e1e" opacity="0.7"/>
<circle cx="354.0" cy="412.2" r="0.55" fill="#1e1e1e" opacity="0.7"/>
<circle cx="307.4" cy="387.8" r="0.55" fill="#1e1e1e" opacity="0.7"/>
<circle cx="337.7" cy="365.3" r="0.55" fill="#1e1e1e" opacity="0.7"/>
<circle cx="331.3" cy="345.7" r="0.55" fill="#1e1e1e" opacity="0.7"/>
<circle cx="349.2" cy="404.7" r="0.55" fill="#1e1e1e" opacity="0.7"/>
<circle cx="347.5" cy="359.9" r="0.55" fill="#1e1e1e" opacity="0.7"/>
<circle cx="392.9" cy="401.8" r="0.55" fill="#1e1e1e" opacity="0.7"/>
<circle cx="354.6" cy="385.7" r="0.55" fill="#1e1e1e" opacity="0.7"/>
<circle cx="318.9" cy="383.2" r="0.55" fill="#1e1e1e" opacity="0.7"/>
<circle cx="376.7" cy="433.8" r="0.55" fill="#1e1e1e" opacity="0.7"/>
<circle cx="294.1" cy="350.0" r="0.55" fill="#1e1e1e" opacity="0.7"/>
<circle cx="374.3" cy="399.5" r="0.55" fill="#1e1e1e" opacity="0.7"/>
<circle cx="348.3" cy="384.1" r="0.55" fill="#1e1e1e" opacity="0.7"/>
<circle cx="307.0" cy="356.5" r="0.55" fill="#1e1e1e" opacity="0.7"/>
<circle cx="371.3" cy="382.1" r="0.55" fill="#1e1e1e" opacity="0.7"/>
<circle cx="287.9" cy="431.6" r="0.55" fill="#1e1e1e" opacity="0.7"/>
<circle cx="277.7" cy="361.4" r="0.55" fill="#1e1e1e" opacity="0.7"/>
<circle cx="308.5" cy="412.0" r="0.55" fill="#1e1e1e" opacity="0.7"/>
<circle cx="338.9" cy="368.8" r="0.55" fill="#1e1e1e" opacity="0.7"/>
<circle cx="355.4" cy="395.1" r="0.55" fill="#1e1e1e" opacity="0.7"/>
<circle cx="314.0" cy="398.5" r="0.55" fill="#1e1e1e" opacity="0.7"/>
<circle cx="348.6" cy="348.1" r="0.55" fill="#1e1e1e" opacity="0.7"/>
<circle cx="401.1" cy="425.4" r="0.55" fill="#1e1e1e" opacity="0.7"/>
<circle cx="403.4" cy="380.3" r="0.55" fill="#1e1e1e" opacity="0.7"/>
<circle cx="367.2" cy="362.6" r="0.55" fill="#1e1e1e" opacity="0.7"/>
<circle cx="312.5" cy="362.4" r="0.55" fill="#1e1e1e" opacity="0.7"/>
<circle cx="335.3" cy="444.0" r="0.55" fill="#1e1e1e" opacity="0.7"/>
<circle cx="378.5" cy="439.6" r="0.55" fill="#1e1e1e" opacity="0.7"/>
<circle cx="388.9" cy="389.9" r="0.55" fill="#1e1e1e" opacity="0.7"/>
<circle cx="397.2" cy="369.0" r="0.55" fill="#1e1e1e" opacity="0.7"/>
<circle cx="323.6" cy="415.0" r="0.55" fill="#1e1e1e" opacity="0.7"/>
<circle cx="317.1" cy="346.1" r="0.55" fill="#1e1e1e" opacity="0.7"/>
<circle cx="316.9" cy="430.8" r="0.55" fill="#1e1e1e" opacity="0.7"/>
<circle cx="375.5" cy="341.2" r="0.55" fill="#1e1e1e" opacity="0.7"/>
<circle cx="398.0" cy="345.8" r="0.55" fill="#1e1e1e" opacity="0.7"/>
<circle cx="346.6" cy="375.7" r="0.55" fill="#1e1e1e" opacity="0.7"/>
<circle cx="330.9" cy="388.5" r="0.55" fill="#1e1e1e" opacity="0.7"/>
<circle cx="360.0" cy="341.2" r="0.55" fill="#1e1e1e" opacity="0.7"/>
<circle cx="328.1" cy="370.6" r="0.55" fill="#1e1e1e" opacity="0.7"/>
<circle cx="347.4" cy="443.9" r="0.55" fill="#1e1e1e" opacity="0.7"/>
<circle cx="297.6" cy="421.9" r="0.55" fill="#1e1e1e" opacity="0.7"/>
<circle cx="286.0" cy="346.7" r="0.55" fill="#1e1e1e" opacity="0.7"/>
<circle cx="326.0" cy="432.7" r="0.55" fill="#1e1e1e" opacity="0.7"/>
<circle cx="308.0" cy="389.5" r="0.55" fill="#1e1e1e" opacity="0.7"/>
<circle cx="292.9" cy="444.5" r="0.55" fill="#1e1e1e" opacity="0.7"/>
<circle cx="399.0" cy="374.3" r="0.55" fill="#1e1e1e" opacity="0.7"/>
<circle cx="363.9" cy="373.1" r="0.55" fill="#1e1e1e" opacity="0.7"/>
<circle cx="323.7" cy="411.9" r="0.55" fill="#1e1e1e" opacity="0.7"/>
<circle cx="402.5" cy="391.8" r="0.55" fill="#1e1e1e" opacity="0.7"/>
<circle cx="287.0" cy="369.6" r="0.55" fill="#1e1e1e" opacity="0.7"/>
<circle cx="318.5" cy="395.7" r="0.55" fill="#1e1e1e" opacity="0.7"/>
<circle cx="388.4" cy="407.5" r="0.55" fill="#1e1e1e" opacity="0.7"/>
<circle cx="399.4" cy="373.4" r="0.55" fill="#1e1e1e" opacity="0.7"/>
<circle cx="376.5" cy="427.1" r="0.55" fill="#1e1e1e" opacity="0.7"/>
<circle cx="297.3" cy="419.2" r="0.55" fill="#1e1e1e" opacity="0.7"/>
<circle cx="347.0" cy="419.7" r="0.55" fill="#1e1e1e" opacity="0.7"/>
<circle cx="282.3" cy="409.9" r="0.55" fill="#1e1e1e" opacity="0.7"/>
<circle cx="281.3" cy="364.8" r="0.55" fill="#1e1e1e" opacity="0.7"/>
<circle cx="385.7" cy="414.7" r="0.55" fill="#1e1e1e" opacity="0.7"/>
<circle cx="273.3" cy="358.9" r="0.55" fill="#1e1e1e" opacity="0.7"/>
<circle cx="285.7" cy="355.5" r="0.55" fill="#1e1e1e" opacity="0.7"/>
<circle cx="286.8" cy="393.5" r="0.55" fill="#1e1e1e" opacity="0.7"/>
<circle cx="365.9" cy="358.7" r="0.55" fill="#1e1e1e" opacity="0.7"/>
<circle cx="355.1" cy="354.0" r="0.55" fill="#1e1e1e" opacity="0.7"/>
<circle cx="301.2" cy="402.8" r="0.55" fill="#1e1e1e" opacity="0.7"/>
<circle cx="326.6" cy="443.0" r="0.55" fill="#1e1e1e" opacity="0.7"/>
<circle cx="397.3" cy="346.4" r="0.55" fill="#1e1e1e" opacity="0.7"/>
<circle cx="300.5" cy="387.2" r="0.55" fill="#1e1e1e" opacity="0.7"/>
<circle cx="281.9" cy="350.1" r="0.55" fill="#1e1e1e" opacity="0.7"/>
<circle cx="357.5" cy="397.2" r="0.55" fill="#1e1e1e" opacity="0.7"/>
<circle cx="287.1" cy="400.9" r="0.55" fill="#1e1e1e" opacity="0.7"/>
<circle cx="345.7" cy="392.1" r="0.55" fill="#1e1e1e" opacity="0.7"/>
<circle cx="306.3" cy="344.7" r="0.55" fill="#1e1e1e" opacity="0.7"/>
<circle cx="277.3" cy="414.2" r="0.55" fill="#1e1e1e" opacity="0.7"/>
<circle cx="359.0" cy="393.9" r="0.55" fill="#1e1e1e" opacity="0.7"/>
<circle cx="371.2" cy="400.8" r="0.55" fill="#1e1e1e" opacity="0.7"/>
<circle cx="314.0" cy="410.8" r="0.55" fill="#1e1e1e" opacity="0.7"/>
<circle cx="293.7" cy="435.7" r="0.55" fill="#1e1e1e" opacity="0.7"/>
<circle cx="400.5" cy="386.2" r="0.55" fill="#1e1e1e" opacity="0.7"/>
<circle cx="305.0" cy="436.5" r="0.55" fill="#1e1e1e" opacity="0.7"/>
<circle cx="305.2" cy="359.1" r="0.55" fill="#1e1e1e" opacity="0.7"/>
<circle cx="320.8" cy="388.2" r="0.55" fill="#1e1e1e" opacity="0.7"/>
<circle cx="304.3" cy="359.2" r="0.55" fill="#1e1e1e" opacity="0.7"/>
<circle cx="305.1" cy="379.7" r="0.55" fill="#1e1e1e" opacity="0.7"/>
<circle cx="393.7" cy="435.5" r="0.55" fill="#1e1e1e" opacity="0.7"/>
<circle cx="283.7" cy="443.0" r="0.55" fill="#1e1e1e" opacity="0.7"/>
<circle cx="382.0" cy="390.2" r="0.55" fill="#1e1e1e" opacity="0.7"/>
<circle cx="342.8" cy="369.6" r="0.55" fill="#1e1e1e" opacity="0.7"/>
<circle cx="277.6" cy="374.5" r="0.55" fill="#1e1e1e" opacity="0.7"/>
<circle cx="292.7" cy="435.3" r="0.55" fill="#1e1e1e" opacity="0.7"/>
<circle cx="358.6" cy="386.6" r="0.55" fill="#1e1e1e" opacity="0.7"/>
<circle cx="346.1" cy="361.4" r="0.55" fill="#1e1e1e" opacity="0.7"/>
<circle cx="304.6" cy="428.3" r="0.55" fill="#1e1e1e" opacity="0.7"/>
<circle cx="311.0" cy="394.1" r="0.55" fill="#1e1e1e" opacity="0.7"/>
<circle cx="394.1" cy="385.5" r="0.55" fill="#1e1e1e" opacity="0.7"/>
<circle cx="369.3" cy="435.4" r="0.55" fill="#1e1e1e" opacity="0.7"/>
<circle cx="359.4" cy="418.9" r="0.55" fill="#1e1e1e" opacity="0.7"/>
<circle cx="393.7" cy="342.1" r="0.55" fill="#1e1e1e" opacity="0.7"/>
<circle cx="303.3" cy="442.1" r="0.55" fill="#1e1e1e" opacity="0.7"/>
<circle cx="316.1" cy="388.3" r="0.55" fill="#1e1e1e" opacity="0.7"/>
<circle cx="382.5" cy="359.5" r="0.55" fill="#1e1e1e" opacity="0.7"/>
<circle cx="330.5" cy="436.2" r="0.55" fill="#1e1e1e" opacity="0.7"/>
<circle cx="331.3" cy="384.7" r="0.55" fill="#1e1e1e" opacity="0.7"/>
<circle cx="378.7" cy="412.5" r="0.55" fill="#1e1e1e" opacity="0.7"/>
<circle cx="403.5" cy="419.4" r="0.55" fill="#1e1e1e" opacity="0.7"/>
<circle cx="388.9" cy="361.0" r="0.55" fill="#1e1e1e" opacity="0.7"/>
<circle cx="373.7" cy="443.9" r="0.55" fill="#1e1e1e" opacity="0.7"/>
<circle cx="331.3" cy="399.7" r="0.55" fill="#1e1e1e" opacity="0.7"/>
<circle cx="365.2" cy="346.6" r="0.55" fill="#1e1e1e" opacity="0.7"/>
<circle cx="302.5" cy="397.0" r="0.55" fill="#1e1e1e" opacity="0.7"/>
<circle cx="306.1" cy="342.5" r="0.55" fill="#1e1e1e" opacity="0.7"/>
<circle cx="299.7" cy="443.4" r="0.55" fill="#1e1e1e" opacity="0.7"/>
<circle cx="362.0" cy="410.5" r="0.55" fill="#1e1e1e" opacity="0.7"/>
<circle cx="396.8" cy="380.4" r="0.55" fill="#1e1e1e" opacity="0.7"/>
<circle cx="371.7" cy="424.5" r="0.55" fill="#1e1e1e" opacity="0.7"/>
<circle cx="307.8" cy="424.0" r="0.55" fill="#1e1e1e" opacity="0.7"/>
<circle cx="359.2" cy="414.1" r="0.55" fill="#1e1e1e" opacity="0.7"/>
<circle cx="318.8" cy="365.3" r="0.55" fill="#1e1e1e" opacity="0.7"/>
<circle cx="380.6" cy="350.4" r="0.55" fill="#1e1e1e" opacity="0.7"/>
<circle cx="336.4" cy="430.5" r="0.55" fill="#1e1e1e" opacity="0.7"/>
<circle cx="305.6" cy="433.9" r="0.55" fill="#1e1e1e" opacity="0.7"/>
<circle cx="311.0" cy="376.9" r="0.55" fill="#1e1e1e" opacity="0.7"/>
<circle cx="284.1" cy="381.2" r="0.55" fill="#1e1e1e" opacity="0.7"/>
<circle cx="320.2" cy="382.9" r="0.55" fill="#1e1e1e" opacity="0.7"/>
<circle cx="317.3" cy="369.7" r="0.55" fill="#1e1e1e" opacity="0.7"/>
<circle cx="332.8" cy="439.1" r="0.55" fill="#1e1e1e" opacity="0.7"/>
<circle cx="358.9" cy="396.4" r="0.55" fill="#1e1e1e" opacity="0.7"/>
<circle cx="394.3" cy="415.1" r="0.55" fill="#1e1e1e" opacity="0.7"/>
<circle cx="379.8" cy="404.2" r="0.55" fill="#1e1e1e" opacity="0.7"/>
<circle cx="347.9" cy="350.0" r="0.55" fill="#1e1e1e" opacity="0.7"/>
<circle cx="320.2" cy="348.2" r="0.55" fill="#1e1e1e" opacity="0.7"/>
<circle cx="295.3" cy="356.1" r="0.55" fill="#1e1e1e" opacity="0.7"/>
<circle cx="350.2" cy="392.8" r="0.55" fill="#1e1e1e" opacity="0.7"/>
<circle cx="281.3" cy="406.5" r="0.55" fill="#1e1e1e" opacity="0.7"/>
<circle cx="280.0" cy="445.2" r="0.55" fill="#1e1e1e" opacity="0.7"/>
<circle cx="356.9" cy="435.2" r="0.55" fill="#1e1e1e" opacity="0.7"/>
<circle cx="294.5" cy="418.2" r="0.55" fill="#1e1e1e" opacity="0.7"/>
<circle cx="383.8" cy="380.9" r="0.55" fill="#1e1e1e" opacity="0.7"/>
<circle cx="360.5" cy="376.8" r="0.55" fill="#1e1e1e" opacity="0.7"/>
<circle cx="341.5" cy="413.8" r="0.55" fill="#1e1e1e" opacity="0.7"/>
<circle cx="395.3" cy="376.9" r="0.55" fill="#1e1e1e" opacity="0.7"/>
<circle cx="290.2" cy="421.0" r="0.55" fill="#1e1e1e" opacity="0.7"/>
<circle cx="313.5" cy="417.1" r="0.55" fill="#1e1e1e" opacity="0.7"/>
<circle cx="339.3" cy="353.2" r="0.55" fill="#1e1e1e" opacity="0.7"/>
<circle cx="399.1" cy="425.0" r="0.55" fill="#1e1e1e" opacity="0.7"/>
<circle cx="283.3" cy="350.4" r="0.55" fill="#1e1e1e" opacity="0.7"/>
<circle cx="351.6" cy="374.0" r="0.55" fill="#1e1e1e" opacity="0.7"/>
<circle cx="393.1" cy="443.0" r="0.55" fill="#1e1e1e" opacity="0.7"/>
<circle cx="291.9" cy="409.0" r="0.55" fill="#1e1e1e" opacity="0.7"/>
<circle cx="365.0" cy="430.5" r="0.55" fill="#1e1e1e" opacity="0.7"/>
<circle cx="363.2" cy="437.9" r="0.55" fill="#1e1e1e" opacity="0.7"/>
<circle cx="320.1" cy="368.4" r="0.55" fill="#1e1e1e" opacity="0.7"/>
<circle cx="342.9" cy="424.1" r="0.55" fill="#1e1e1e" opacity="0.7"/>
<circle cx="395.1" cy="379.7" r="0.55" fill="#1e1e1e" opacity="0.7"/>
<circle cx="334.1" cy="347.4" r="0.55" fill="#1e1e1e" opacity="0.7"/>
<circle cx="332.6" cy="351.8" r="0.55" fill="#1e1e1e" opacity="0.7"/>
<circle cx="346.7" cy="353.9" r="0.55" fill="#1e1e1e" opacity="0.7"/>
<circle cx="277.2" cy="406.9" r="0.55" fill="#1e1e1e" opacity="0.7"/>
<circle cx="378.7" cy="408.0" r="0.55" fill="#1e1e1e" opacity="0.7"/>
<circle cx="279.7" cy="429.6" r="0.55" fill="#1e1e1e" opacity="0.7"/>
<circle cx="400.8" cy="371.6" r="0.55" fill="#1e1e1e" opacity="0.7"/>
<circle cx="399.8" cy="420.7" r="0.55" fill="#1e1e1e" opacity="0.7"/>
<circle cx="379.9" cy="368.6" r="0.55" fill="#1e1e1e" opacity="0.7"/>
<circle cx="389.9" cy="373.5" r="0.55" fill="#1e1e1e" opacity="0.7"/>
<circle cx="353.4" cy="409.5" r="0.55" fill="#1e1e1e" opacity="0.7"/>
<circle cx="312.9" cy="381.8" r="0.55" fill="#1e1e1e" opacity="0.7"/>
<circle cx="351.9" cy="445.4" r="0.55" fill="#1e1e1e" opacity="0.7"/>
<circle cx="361.7" cy="373.8" r="0.55" fill="#1e1e1e" opacity="0.7"/>
<circle cx="291.5" cy="365.5" r="0.55" fill="#1e1e1e" opacity="0.7"/>
<circle cx="374.2" cy="432.9" r="0.55" fill="#1e1e1e" opacity="0.7"/>
<circle cx="312.7" cy="432.3" r="0.55" fill="#1e1e1e" opacity="0.7"/>
<circle cx="339.9" cy="357.7" r="0.55" fill="#1e1e1e" opacity="0.7"/>
<circle cx="307.8" cy="376.0" r="0.55" fill="#1e1e1e" opacity="0.7"/>
<circle cx="309.9" cy="394.2" r="0.55" fill="#1e1e1e" opacity="0.7"/>
<circle cx="387.5" cy="347.6" r="0.55" fill="#1e1e1e" opacity="0.7"/>
<circle cx="373.6" cy="379.5" r="0.55" fill="#1e1e1e" opacity="0.7"/>
<circle cx="281.2" cy="421.5" r="0.55" fill="#1e1e1e" opacity="0.7"/>
<circle cx="373.7" cy="421.3" r="0.55" fill="#1e1e1e" opacity="0.7"/>
<circle cx="393.8" cy="356.2" r="0.55" fill="#1e1e1e" opacity="0.7"/>
<circle cx="364.9" cy="372.5" r="0.55" fill="#1e1e1e" opacity="0.7"/>
<circle cx="363.4" cy="368.8" r="0.55" fill="#1e1e1e" opacity="0.7"/>
<circle cx="307.5" cy="412.5" r="0.55" fill="#1e1e1e" opacity="0.7"/>
<circle cx="364.3" cy="354.4" r="0.55" fill="#1e1e1e" opacity="0.7"/>
<circle cx="322.5" cy="444.1" r="0.55" fill="#1e1e1e" opacity="0.7"/>
<circle cx="393.5" cy="352.8" r="0.55" fill="#1e1e1e" opacity="0.7"/>
<circle cx="365.0" cy="396.1" r="0.55" fill="#1e1e1e" opacity="0.7"/>
<circle cx="315.1" cy="414.5" r="0.55" fill="#1e1e1e" opacity="0.7"/>
<circle cx="388.4" cy="440.2" r="0.55" fill="#1e1e1e" opacity="0.7"/>
<circle cx="374.1" cy="405.1" r="0.55" fill="#1e1e1e" opacity="0.7"/>
<circle cx="299.3" cy="430.4" r="0.55" fill="#1e1e1e" opacity="0.7"/>
<circle cx="301.0" cy="396.3" r="0.55" fill="#1e1e1e" opacity="0.7"/>
<circle cx="274.7" cy="363.8" r="0.55" fill="#1e1e1e" opacity="0.7"/>
<circle cx="373.6" cy="384.8" r="0.55" fill="#1e1e1e" opacity="0.7"/>
<circle cx="284.2" cy="404.3" r="0.55" fill="#1e1e1e" opacity="0.7"/>
<circle cx="309.0" cy="396.4" r="0.55" fill="#1e1e1e" opacity="0.7"/>
<circle cx="369.2" cy="422.8" r="0.55" fill="#1e1e1e" opacity="0.7"/>
<circle cx="312.9" cy="397.3" r="0.55" fill="#1e1e1e" opacity="0.7"/>
<circle cx="310.3" cy="380.9" r="0.55" fill="#1e1e1e" opacity="0.7"/>
<circle cx="281.7" cy="394.7" r="0.55" fill="#1e1e1e" opacity="0.7"/>
<circle cx="279.6" cy="395.2" r="0.55" fill="#1e1e1e" opacity="0.7"/>
<circle cx="347.7" cy="341.6" r="0.55" fill="#1e1e1e" opacity="0.7"/>
<circle cx="291.1" cy="375.1" r="0.55" fill="#1e1e1e" opacity="0.7"/>
<circle cx="398.9" cy="400.8" r="0.55" fill="#1e1e1e" opacity="0.7"/>
<circle cx="276.4" cy="415.4" r="0.55" fill="#1e1e1e" opacity="0.7"/>
<circle cx="314.3" cy="385.5" r="0.55" fill="#1e1e1e" opacity="0.7"/>
<circle cx="297.0" cy="419.0" r="0.55" fill="#1e1e1e" opacity="0.7"/>
<circle cx="390.4" cy="393.5" r="0.55" fill="#1e1e1e" opacity="0.7"/>
<circle cx="371.0" cy="379.4" r="0.55" fill="#1e1e1e" opacity="0.7"/>
<circle cx="287.6" cy="366.1" r="0.55" fill="#1e1e1e" opacity="0.7"/></g>
<polyline points="300.0,445.0 310.0,420.0 322.0,400.0 335.0,385.0 350.0,372.0 365.0,362.0" fill="none" stroke="#2e3236" stroke-width="0.8" stroke-linejoin="round" stroke-linecap="round" opacity="0.75" stroke-dasharray="2.4,1.2"/>
<polyline points="330.0,445.0 336.0,420.0 338.0,400.0 345.0,385.0" fill="none" stroke="#2e3236" stroke-width="0.8" stroke-linejoin="round" stroke-linecap="round" opacity="0.65" stroke-dasharray="2.4,1.2"/>
<polyline points="320.0,430.0 350.0,423.0 380.0,415.0 400.0,410.0" fill="none" stroke="#2e3236" stroke-width="0.8" stroke-linejoin="round" stroke-linecap="round" opacity="0.55" stroke-dasharray="2.4,1.2"/>
<polygon points="336.0,292.0 345.0,298.0 352.0,322.0 362.0,345.0 352.0,352.0 330.0,355.0 314.0,358.0 331.0,335.0 336.0,315.0" fill="#c49868" />
<clipPath id="c20"><polygon points="336.0,292.0 345.0,298.0 352.0,322.0 362.0,345.0 352.0,352.0 330.0,355.0 314.0,358.0 331.0,335.0 336.0,315.0"/></clipPath><g clip-path="url(#c20)"><circle cx="352.3" cy="298.0" r="0.55" fill="#1a1a1a" opacity="0.75"/>
<circle cx="358.3" cy="318.5" r="0.55" fill="#1a1a1a" opacity="0.75"/>
<circle cx="349.0" cy="342.1" r="0.55" fill="#1a1a1a" opacity="0.75"/>
<circle cx="324.6" cy="326.6" r="0.55" fill="#1a1a1a" opacity="0.75"/>
<circle cx="347.9" cy="300.7" r="0.55" fill="#1a1a1a" opacity="0.75"/>
<circle cx="338.2" cy="345.2" r="0.55" fill="#1a1a1a" opacity="0.75"/>
<circle cx="358.4" cy="349.5" r="0.55" fill="#1a1a1a" opacity="0.75"/>
<circle cx="314.3" cy="322.1" r="0.55" fill="#1a1a1a" opacity="0.75"/>
<circle cx="351.1" cy="315.7" r="0.55" fill="#1a1a1a" opacity="0.75"/>
<circle cx="336.4" cy="293.2" r="0.55" fill="#1a1a1a" opacity="0.75"/>
<circle cx="355.1" cy="296.7" r="0.55" fill="#1a1a1a" opacity="0.75"/>
<circle cx="343.1" cy="316.8" r="0.55" fill="#1a1a1a" opacity="0.75"/>
<circle cx="314.4" cy="299.5" r="0.55" fill="#1a1a1a" opacity="0.75"/>
<circle cx="347.2" cy="356.0" r="0.55" fill="#1a1a1a" opacity="0.75"/>
<circle cx="339.6" cy="334.5" r="0.55" fill="#1a1a1a" opacity="0.75"/>
<circle cx="325.5" cy="312.6" r="0.55" fill="#1a1a1a" opacity="0.75"/>
<circle cx="319.9" cy="330.6" r="0.55" fill="#1a1a1a" opacity="0.75"/>
<circle cx="333.1" cy="303.1" r="0.55" fill="#1a1a1a" opacity="0.75"/>
<circle cx="340.9" cy="352.5" r="0.55" fill="#1a1a1a" opacity="0.75"/>
<circle cx="337.0" cy="325.1" r="0.55" fill="#1a1a1a" opacity="0.75"/>
<circle cx="314.8" cy="338.2" r="0.55" fill="#1a1a1a" opacity="0.75"/>
<circle cx="321.1" cy="304.0" r="0.55" fill="#1a1a1a" opacity="0.75"/>
<circle cx="346.7" cy="323.3" r="0.55" fill="#1a1a1a" opacity="0.75"/>
<circle cx="340.2" cy="339.1" r="0.55" fill="#1a1a1a" opacity="0.75"/>
<circle cx="349.7" cy="317.6" r="0.55" fill="#1a1a1a" opacity="0.75"/>
<circle cx="333.9" cy="296.3" r="0.55" fill="#1a1a1a" opacity="0.75"/>
<circle cx="326.3" cy="323.0" r="0.55" fill="#1a1a1a" opacity="0.75"/>
<circle cx="352.3" cy="346.4" r="0.55" fill="#1a1a1a" opacity="0.75"/>
<circle cx="324.5" cy="322.5" r="0.55" fill="#1a1a1a" opacity="0.75"/>
<circle cx="316.9" cy="356.7" r="0.55" fill="#1a1a1a" opacity="0.75"/>
<circle cx="331.7" cy="328.9" r="0.55" fill="#1a1a1a" opacity="0.75"/>
<circle cx="335.7" cy="350.3" r="0.55" fill="#1a1a1a" opacity="0.75"/>
<circle cx="324.0" cy="294.1" r="0.55" fill="#1a1a1a" opacity="0.75"/>
<circle cx="359.9" cy="333.7" r="0.55" fill="#1a1a1a" opacity="0.75"/>
<circle cx="325.1" cy="325.7" r="0.55" fill="#1a1a1a" opacity="0.75"/>
<circle cx="319.9" cy="315.6" r="0.55" fill="#1a1a1a" opacity="0.75"/>
<circle cx="345.8" cy="351.5" r="0.55" fill="#1a1a1a" opacity="0.75"/>
<circle cx="320.9" cy="298.1" r="0.55" fill="#1a1a1a" opacity="0.75"/>
<circle cx="327.4" cy="324.1" r="0.55" fill="#1a1a1a" opacity="0.75"/>
<circle cx="333.9" cy="312.2" r="0.55" fill="#1a1a1a" opacity="0.75"/>
<circle cx="327.1" cy="355.4" r="0.55" fill="#1a1a1a" opacity="0.75"/>
<circle cx="345.4" cy="343.6" r="0.55" fill="#1a1a1a" opacity="0.75"/>
<circle cx="320.7" cy="305.2" r="0.55" fill="#1a1a1a" opacity="0.75"/>
<circle cx="344.9" cy="300.4" r="0.55" fill="#1a1a1a" opacity="0.75"/>
<circle cx="319.6" cy="293.6" r="0.55" fill="#1a1a1a" opacity="0.75"/>
<circle cx="341.8" cy="303.9" r="0.55" fill="#1a1a1a" opacity="0.75"/>
<circle cx="361.0" cy="353.3" r="0.55" fill="#1a1a1a" opacity="0.75"/>
<circle cx="351.8" cy="349.6" r="0.55" fill="#1a1a1a" opacity="0.75"/>
<circle cx="359.4" cy="344.8" r="0.55" fill="#1a1a1a" opacity="0.75"/>
<circle cx="340.2" cy="318.4" r="0.55" fill="#1a1a1a" opacity="0.75"/>
<circle cx="321.6" cy="323.8" r="0.55" fill="#1a1a1a" opacity="0.75"/>
<circle cx="331.8" cy="330.0" r="0.55" fill="#1a1a1a" opacity="0.75"/>
<circle cx="351.3" cy="345.5" r="0.55" fill="#1a1a1a" opacity="0.75"/>
<circle cx="320.3" cy="292.3" r="0.55" fill="#1a1a1a" opacity="0.75"/>
<circle cx="345.9" cy="304.0" r="0.55" fill="#1a1a1a" opacity="0.75"/>
<circle cx="329.5" cy="330.4" r="0.55" fill="#1a1a1a" opacity="0.75"/>
<circle cx="358.0" cy="301.3" r="0.55" fill="#1a1a1a" opacity="0.75"/>
<circle cx="330.8" cy="353.9" r="0.55" fill="#1a1a1a" opacity="0.75"/>
<circle cx="329.5" cy="294.9" r="0.55" fill="#1a1a1a" opacity="0.75"/>
<circle cx="327.1" cy="356.3" r="0.55" fill="#1a1a1a" opacity="0.75"/>
<circle cx="339.9" cy="306.2" r="0.55" fill="#1a1a1a" opacity="0.75"/>
<circle cx="359.7" cy="304.8" r="0.55" fill="#1a1a1a" opacity="0.75"/>
<circle cx="339.9" cy="320.0" r="0.55" fill="#1a1a1a" opacity="0.75"/>
<circle cx="349.6" cy="334.1" r="0.55" fill="#1a1a1a" opacity="0.75"/>
<circle cx="339.0" cy="356.7" r="0.55" fill="#1a1a1a" opacity="0.75"/>
<circle cx="318.0" cy="323.4" r="0.55" fill="#1a1a1a" opacity="0.75"/>
<circle cx="342.2" cy="351.3" r="0.55" fill="#1a1a1a" opacity="0.75"/>
<circle cx="342.5" cy="350.8" r="0.55" fill="#1a1a1a" opacity="0.75"/>
<circle cx="342.6" cy="357.0" r="0.55" fill="#1a1a1a" opacity="0.75"/>
<circle cx="328.3" cy="315.8" r="0.55" fill="#1a1a1a" opacity="0.75"/>
<circle cx="326.8" cy="323.3" r="0.55" fill="#1a1a1a" opacity="0.75"/>
<circle cx="329.8" cy="293.4" r="0.55" fill="#1a1a1a" opacity="0.75"/>
<circle cx="315.5" cy="317.3" r="0.55" fill="#1a1a1a" opacity="0.75"/>
<circle cx="321.7" cy="315.3" r="0.55" fill="#1a1a1a" opacity="0.75"/>
<circle cx="327.8" cy="300.2" r="0.55" fill="#1a1a1a" opacity="0.75"/>
<circle cx="338.6" cy="346.9" r="0.55" fill="#1a1a1a" opacity="0.75"/>
<circle cx="357.8" cy="310.4" r="0.55" fill="#1a1a1a" opacity="0.75"/>
<circle cx="347.6" cy="300.6" r="0.55" fill="#1a1a1a" opacity="0.75"/>
<circle cx="338.8" cy="299.6" r="0.55" fill="#1a1a1a" opacity="0.75"/>
<circle cx="348.4" cy="293.6" r="0.55" fill="#1a1a1a" opacity="0.75"/>
<circle cx="335.3" cy="341.8" r="0.55" fill="#1a1a1a" opacity="0.75"/>
<circle cx="316.3" cy="327.1" r="0.55" fill="#1a1a1a" opacity="0.75"/>
<circle cx="347.0" cy="326.6" r="0.55" fill="#1a1a1a" opacity="0.75"/>
<circle cx="347.9" cy="319.3" r="0.55" fill="#1a1a1a" opacity="0.75"/>
<circle cx="345.5" cy="355.6" r="0.55" fill="#1a1a1a" opacity="0.75"/>
<circle cx="354.9" cy="316.9" r="0.55" fill="#1a1a1a" opacity="0.75"/>
<circle cx="351.5" cy="323.3" r="0.55" fill="#1a1a1a" opacity="0.75"/>
<circle cx="353.8" cy="337.5" r="0.55" fill="#1a1a1a" opacity="0.75"/>
<circle cx="316.2" cy="353.3" r="0.55" fill="#1a1a1a" opacity="0.75"/>
<circle cx="362.0" cy="348.7" r="0.55" fill="#1a1a1a" opacity="0.75"/>
<circle cx="342.2" cy="350.2" r="0.55" fill="#1a1a1a" opacity="0.75"/>
<circle cx="342.5" cy="304.1" r="0.55" fill="#1a1a1a" opacity="0.75"/>
<circle cx="343.4" cy="354.3" r="0.55" fill="#1a1a1a" opacity="0.75"/>
<circle cx="327.0" cy="346.4" r="0.55" fill="#1a1a1a" opacity="0.75"/>
<circle cx="328.5" cy="313.8" r="0.55" fill="#1a1a1a" opacity="0.75"/>
<circle cx="356.1" cy="345.2" r="0.55" fill="#1a1a1a" opacity="0.75"/>
<circle cx="342.8" cy="354.9" r="0.55" fill="#1a1a1a" opacity="0.75"/>
<circle cx="360.1" cy="341.1" r="0.55" fill="#1a1a1a" opacity="0.75"/>
<circle cx="324.0" cy="340.8" r="0.55" fill="#1a1a1a" opacity="0.75"/>
<circle cx="342.1" cy="347.3" r="0.55" fill="#1a1a1a" opacity="0.75"/>
<circle cx="342.8" cy="350.0" r="0.55" fill="#1a1a1a" opacity="0.75"/>
<circle cx="315.8" cy="343.6" r="0.55" fill="#1a1a1a" opacity="0.75"/>
<circle cx="344.1" cy="297.1" r="0.55" fill="#1a1a1a" opacity="0.75"/>
<circle cx="332.4" cy="305.8" r="0.55" fill="#1a1a1a" opacity="0.75"/>
<circle cx="334.6" cy="300.0" r="0.55" fill="#1a1a1a" opacity="0.75"/>
<circle cx="322.9" cy="322.8" r="0.55" fill="#1a1a1a" opacity="0.75"/>
<circle cx="342.5" cy="296.3" r="0.55" fill="#1a1a1a" opacity="0.75"/>
<circle cx="346.3" cy="328.3" r="0.55" fill="#1a1a1a" opacity="0.75"/>
<circle cx="356.8" cy="353.0" r="0.55" fill="#1a1a1a" opacity="0.75"/>
<circle cx="354.4" cy="356.8" r="0.55" fill="#1a1a1a" opacity="0.75"/>
<circle cx="361.0" cy="294.5" r="0.55" fill="#1a1a1a" opacity="0.75"/>
<circle cx="360.8" cy="337.0" r="0.55" fill="#1a1a1a" opacity="0.75"/>
<circle cx="347.6" cy="301.4" r="0.55" fill="#1a1a1a" opacity="0.75"/>
<circle cx="327.5" cy="348.9" r="0.55" fill="#1a1a1a" opacity="0.75"/>
<circle cx="339.9" cy="294.1" r="0.55" fill="#1a1a1a" opacity="0.75"/>
<circle cx="318.0" cy="298.8" r="0.55" fill="#1a1a1a" opacity="0.75"/>
<circle cx="341.2" cy="313.4" r="0.55" fill="#1a1a1a" opacity="0.75"/>
<circle cx="328.7" cy="292.3" r="0.55" fill="#1a1a1a" opacity="0.75"/>
<circle cx="339.8" cy="335.7" r="0.55" fill="#1a1a1a" opacity="0.75"/>
<circle cx="350.0" cy="305.6" r="0.55" fill="#1a1a1a" opacity="0.75"/>
<circle cx="316.9" cy="339.5" r="0.55" fill="#1a1a1a" opacity="0.75"/>
<circle cx="356.1" cy="354.7" r="0.55" fill="#1a1a1a" opacity="0.75"/>
<circle cx="315.8" cy="323.0" r="0.55" fill="#1a1a1a" opacity="0.75"/>
<circle cx="337.5" cy="323.0" r="0.55" fill="#1a1a1a" opacity="0.75"/>
<circle cx="324.5" cy="357.8" r="0.55" fill="#1a1a1a" opacity="0.75"/>
<circle cx="315.9" cy="312.7" r="0.55" fill="#1a1a1a" opacity="0.75"/>
<circle cx="337.0" cy="350.5" r="0.55" fill="#1a1a1a" opacity="0.75"/>
<circle cx="326.6" cy="339.1" r="0.55" fill="#1a1a1a" opacity="0.75"/>
<circle cx="317.8" cy="292.6" r="0.55" fill="#1a1a1a" opacity="0.75"/>
<circle cx="353.6" cy="311.6" r="0.55" fill="#1a1a1a" opacity="0.75"/>
<circle cx="325.8" cy="339.6" r="0.55" fill="#1a1a1a" opacity="0.75"/>
<circle cx="359.0" cy="295.0" r="0.55" fill="#1a1a1a" opacity="0.75"/>
<circle cx="343.2" cy="348.6" r="0.55" fill="#1a1a1a" opacity="0.75"/>
<circle cx="331.0" cy="352.2" r="0.55" fill="#1a1a1a" opacity="0.75"/>
<circle cx="316.9" cy="342.1" r="0.55" fill="#1a1a1a" opacity="0.75"/>
<circle cx="355.1" cy="345.5" r="0.55" fill="#1a1a1a" opacity="0.75"/>
<circle cx="319.2" cy="331.4" r="0.55" fill="#1a1a1a" opacity="0.75"/>
<circle cx="351.3" cy="345.4" r="0.55" fill="#1a1a1a" opacity="0.75"/>
<circle cx="339.4" cy="322.9" r="0.55" fill="#1a1a1a" opacity="0.75"/>
<circle cx="335.9" cy="319.0" r="0.55" fill="#1a1a1a" opacity="0.75"/>
<circle cx="317.9" cy="338.4" r="0.55" fill="#1a1a1a" opacity="0.75"/>
<circle cx="334.2" cy="322.7" r="0.55" fill="#1a1a1a" opacity="0.75"/>
<circle cx="314.8" cy="312.5" r="0.55" fill="#1a1a1a" opacity="0.75"/>
<circle cx="350.6" cy="309.5" r="0.55" fill="#1a1a1a" opacity="0.75"/>
<circle cx="347.9" cy="320.9" r="0.55" fill="#1a1a1a" opacity="0.75"/>
<circle cx="320.5" cy="317.2" r="0.55" fill="#1a1a1a" opacity="0.75"/>
<circle cx="338.5" cy="341.8" r="0.55" fill="#1a1a1a" opacity="0.75"/>
<circle cx="322.5" cy="343.8" r="0.55" fill="#1a1a1a" opacity="0.75"/>
<circle cx="348.2" cy="344.7" r="0.55" fill="#1a1a1a" opacity="0.75"/>
<circle cx="323.1" cy="347.8" r="0.55" fill="#1a1a1a" opacity="0.75"/>
<circle cx="322.3" cy="315.9" r="0.55" fill="#1a1a1a" opacity="0.75"/>
<circle cx="327.6" cy="316.4" r="0.55" fill="#1a1a1a" opacity="0.75"/>
<circle cx="360.6" cy="347.3" r="0.55" fill="#1a1a1a" opacity="0.75"/>
<circle cx="353.3" cy="303.9" r="0.55" fill="#1a1a1a" opacity="0.75"/>
<circle cx="333.4" cy="338.3" r="0.55" fill="#1a1a1a" opacity="0.75"/>
<circle cx="352.1" cy="326.6" r="0.55" fill="#1a1a1a" opacity="0.75"/>
<circle cx="331.3" cy="336.0" r="0.55" fill="#1a1a1a" opacity="0.75"/>
<circle cx="323.0" cy="338.0" r="0.55" fill="#1a1a1a" opacity="0.75"/>
<circle cx="357.1" cy="336.1" r="0.55" fill="#1a1a1a" opacity="0.75"/>
<circle cx="315.8" cy="307.5" r="0.55" fill="#1a1a1a" opacity="0.75"/>
<circle cx="352.1" cy="293.6" r="0.55" fill="#1a1a1a" opacity="0.75"/>
<circle cx="360.1" cy="354.9" r="0.55" fill="#1a1a1a" opacity="0.75"/>
<circle cx="318.0" cy="351.2" r="0.55" fill="#1a1a1a" opacity="0.75"/>
<circle cx="355.2" cy="325.3" r="0.55" fill="#1a1a1a" opacity="0.75"/>
<circle cx="351.4" cy="335.6" r="0.55" fill="#1a1a1a" opacity="0.75"/>
<circle cx="316.0" cy="298.0" r="0.55" fill="#1a1a1a" opacity="0.75"/>
<circle cx="335.3" cy="322.3" r="0.55" fill="#1a1a1a" opacity="0.75"/>
<circle cx="326.5" cy="330.8" r="0.55" fill="#1a1a1a" opacity="0.75"/>
<circle cx="332.4" cy="338.2" r="0.55" fill="#1a1a1a" opacity="0.75"/>
<circle cx="332.3" cy="306.5" r="0.55" fill="#1a1a1a" opacity="0.75"/>
<circle cx="332.9" cy="298.1" r="0.55" fill="#1a1a1a" opacity="0.75"/>
<circle cx="314.5" cy="355.4" r="0.55" fill="#1a1a1a" opacity="0.75"/>
<circle cx="327.0" cy="348.0" r="0.55" fill="#1a1a1a" opacity="0.75"/>
<circle cx="327.9" cy="303.8" r="0.55" fill="#1a1a1a" opacity="0.75"/>
<circle cx="345.2" cy="346.3" r="0.55" fill="#1a1a1a" opacity="0.75"/>
<circle cx="347.4" cy="345.6" r="0.55" fill="#1a1a1a" opacity="0.75"/>
<circle cx="350.0" cy="304.0" r="0.55" fill="#1a1a1a" opacity="0.75"/>
<circle cx="344.6" cy="345.1" r="0.55" fill="#1a1a1a" opacity="0.75"/>
<circle cx="356.9" cy="317.2" r="0.55" fill="#1a1a1a" opacity="0.75"/>
<circle cx="340.7" cy="314.1" r="0.55" fill="#1a1a1a" opacity="0.75"/>
<circle cx="329.0" cy="302.6" r="0.55" fill="#1a1a1a" opacity="0.75"/>
<circle cx="315.9" cy="331.0" r="0.55" fill="#1a1a1a" opacity="0.75"/>
<circle cx="348.9" cy="332.5" r="0.55" fill="#1a1a1a" opacity="0.75"/>
<circle cx="341.0" cy="325.8" r="0.55" fill="#1a1a1a" opacity="0.75"/>
<circle cx="321.8" cy="298.6" r="0.55" fill="#1a1a1a" opacity="0.75"/>
<circle cx="338.5" cy="344.5" r="0.55" fill="#1a1a1a" opacity="0.75"/>
<circle cx="359.3" cy="312.9" r="0.55" fill="#1a1a1a" opacity="0.75"/>
<circle cx="343.1" cy="309.5" r="0.55" fill="#1a1a1a" opacity="0.75"/>
<circle cx="328.8" cy="334.3" r="0.55" fill="#1a1a1a" opacity="0.75"/>
<circle cx="352.7" cy="304.2" r="0.55" fill="#1a1a1a" opacity="0.75"/>
<circle cx="332.9" cy="352.1" r="0.55" fill="#1a1a1a" opacity="0.75"/>
<circle cx="314.7" cy="334.8" r="0.55" fill="#1a1a1a" opacity="0.75"/>
<circle cx="317.8" cy="344.1" r="0.55" fill="#1a1a1a" opacity="0.75"/>
<circle cx="360.2" cy="314.5" r="0.55" fill="#1a1a1a" opacity="0.75"/>
<circle cx="318.5" cy="320.3" r="0.55" fill="#1a1a1a" opacity="0.75"/>
<circle cx="351.6" cy="308.6" r="0.55" fill="#1a1a1a" opacity="0.75"/>
<circle cx="315.5" cy="308.6" r="0.55" fill="#1a1a1a" opacity="0.75"/>
<circle cx="334.3" cy="319.4" r="0.55" fill="#1a1a1a" opacity="0.75"/>
<circle cx="327.5" cy="343.9" r="0.55" fill="#1a1a1a" opacity="0.75"/>
<circle cx="330.5" cy="325.2" r="0.55" fill="#1a1a1a" opacity="0.75"/><polyline points="365,287 366,290 368,293" fill="none" stroke="#7a5632" stroke-width="0.7" opacity="0.5"/>
<polyline points="361,285 362,288 365,291 365,294 367,297" fill="none" stroke="#7a5632" stroke-width="0.7" opacity="0.5"/>
<polyline points="359,286 360,289 362,292 364,295 365,299 367,302" fill="none" stroke="#7a5632" stroke-width="0.7" opacity="0.5"/>
<polyline points="356,288 358,291 359,294 361,297 363,300 364,303 366,306" fill="none" stroke="#7a5632" stroke-width="0.7" opacity="0.5"/>
<polyline points="352,286 354,289 355,292 357,295 359,298 360,301 362,304 364,307 365,311 367,314" fill="none" stroke="#7a5632" stroke-width="0.7" opacity="0.5"/>
<polyline points="350,287 351,290 353,293 355,296 356,299 358,302 360,305 361,309 363,312 365,315 366,318 368,321" fill="none" stroke="#7a5632" stroke-width="0.7" opacity="0.5"/>
<polyline points="348,288 349,291 351,294 353,297 353,301 356,304 357,307 358,310 361,313 362,316 363,319 366,322 367,326" fill="none" stroke="#7a5632" stroke-width="0.7" opacity="0.5"/>
<polyline points="343,286 345,289 346,293 348,296 350,299 351,302 353,305 354,308 356,311 358,314 359,318 361,321 363,324 364,327 366,330" fill="none" stroke="#7a5632" stroke-width="0.7" opacity="0.5"/>
<polyline points="341,287 343,291 344,294 346,297 348,300 349,303 351,306 352,309 354,313 356,315 357,319 359,322 361,325 362,328 364,331 366,334" fill="none" stroke="#7a5632" stroke-width="0.7" opacity="0.5"/>
<polyline points="337,286 339,289 340,292 342,295 344,298 345,301 347,304 349,307 350,311 352,313 354,317 355,320 357,323 358,326 360,329 362,332 363,336 365,339 367,341" fill="none" stroke="#7a5632" stroke-width="0.7" opacity="0.5"/>
<polyline points="335,287 337,290 338,293 340,296 342,299 342,303 345,305 346,309 347,312 350,315 351,318 353,321 355,324 356,327 358,331 360,333 361,337 363,340 365,343 366,346 368,349" fill="none" stroke="#7a5632" stroke-width="0.7" opacity="0.5"/>
<polyline points="330,285 333,288 333,292 335,295 337,297 338,301 340,304 342,307 343,310 346,313 347,316 348,320 351,322 352,326 353,329 356,332 357,335 358,338 361,341 362,344 363,347 366,350 366,354" fill="none" stroke="#7a5632" stroke-width="0.7" opacity="0.5"/>
<polyline points="328,286 329,290 331,293 333,296 334,299 336,302 338,305 339,308 341,311 343,314 344,318 346,321 348,324 349,327 351,330 353,333 354,336 356,339 357,343 359,346 361,348 362,352 364,355 366,358" fill="none" stroke="#7a5632" stroke-width="0.7" opacity="0.5"/>
<polyline points="326,288 327,291 329,294 331,297 332,300 334,303 335,306 337,310 339,312 340,316 342,319 344,322 345,325 347,328 349,331 350,335 352,338 354,340 355,344 357,347 359,350 360,353 362,356 364,359 365,363" fill="none" stroke="#7a5632" stroke-width="0.7" opacity="0.5"/>
<polyline points="321,286 323,289 324,292 327,295 328,299 329,302 332,304 333,308 334,311 337,314 337,317 339,320 341,323 342,327 344,330 346,333 347,336 350,339 351,342 352,345 355,348 356,351 357,355 360,357 361,361 362,364" fill="none" stroke="#7a5632" stroke-width="0.7" opacity="0.5"/>
<polyline points="319,287 320,290 323,293 323,297 325,300 327,303 328,306 331,309 332,312 333,316 336,318 337,321 338,325 341,328 342,331 343,334 346,337 347,340 348,343 351,346 352,350 354,353 356,356 356,359 359,362 360,365" fill="none" stroke="#7a5632" stroke-width="0.7" opacity="0.5"/>
<polyline points="315,285 316,289 318,292 320,295 321,298 323,301 325,304 326,307 328,310 330,313 331,317 333,320 335,323 336,326 338,329 340,332 341,335 343,338 345,341 346,345 348,347 349,351 351,354 353,357 354,360 356,363" fill="none" stroke="#7a5632" stroke-width="0.7" opacity="0.5"/>
<polyline points="313,286 314,290 316,293 318,296 319,299 321,302 323,305 324,309 326,311 327,315 329,318 331,321 332,324 334,327 336,330 337,333 339,336 341,339 342,343 344,346 346,349 347,352 349,355 351,358 352,361 354,364" fill="none" stroke="#7a5632" stroke-width="0.7" opacity="0.5"/>
<polyline points="311,288 312,291 314,294 316,297 317,300 319,303 321,306 322,310 324,313 326,316 327,319 329,322 330,325 332,328 334,331 335,334 337,338 339,340 340,344 342,347 344,350 345,353 347,356 349,359 350,363" fill="none" stroke="#7a5632" stroke-width="0.7" opacity="0.5"/>
<polyline points="310,292 311,295 314,298 315,302 317,304 319,307 319,311 322,314 323,317 324,320 327,323 328,326 329,330 332,332 333,336 334,339 337,342 338,345 340,348 342,351 343,354 345,357 347,360 348,364" fill="none" stroke="#7a5632" stroke-width="0.7" opacity="0.5"/>
<polyline points="310,296 311,299 313,303 315,305 316,309 318,312 320,315 321,318 323,321 325,324 326,328 328,330 330,333 331,337 333,340 334,343 336,346 338,349 339,352 341,355 343,358 344,362 346,365" fill="none" stroke="#7a5632" stroke-width="0.7" opacity="0.5"/>
<polyline points="310,300 311,304 312,307 315,310 315,313 317,316 319,319 320,322 323,325 324,328 325,332 328,335 329,338 330,341 333,344 334,347 335,350 338,353 339,357 340,360 343,362" fill="none" stroke="#7a5632" stroke-width="0.7" opacity="0.5"/>
<polyline points="309,305 311,308 312,311 314,314 316,317 317,320 319,323 320,326 322,330 324,332 325,336 327,339 329,342 330,345 332,348 334,351 335,355 337,357 339,360 340,364" fill="none" stroke="#7a5632" stroke-width="0.7" opacity="0.5"/>
<polyline points="308,309 310,312 312,315 313,318 315,321 316,325 318,328 320,330 321,334 323,337 325,340 326,343 328,346 330,349 331,353 333,355 335,359 336,362" fill="none" stroke="#7a5632" stroke-width="0.7" opacity="0.5"/>
<polyline points="309,317 311,319 312,323 314,326 316,329 317,332 319,335 321,338 322,342 324,344 326,347 327,351 329,354 331,357 332,360 334,363" fill="none" stroke="#7a5632" stroke-width="0.7" opacity="0.5"/>
<polyline points="308,321 310,324 311,327 313,330 315,333 316,337 319,339 320,343 321,346 324,349 325,352 326,355 328,358 329,362 331,364" fill="none" stroke="#7a5632" stroke-width="0.7" opacity="0.5"/>
<polyline points="309,328 311,331 312,335 314,338 316,341 317,344 320,347 321,350 322,353 325,356 326,359 327,363" fill="none" stroke="#7a5632" stroke-width="0.7" opacity="0.5"/>
<polyline points="309,333 311,335 312,339 314,342 316,345 317,348 319,351 321,354 322,357 324,361 326,363" fill="none" stroke="#7a5632" stroke-width="0.7" opacity="0.5"/>
<polyline points="309,337 310,340 311,343 314,346 315,349 316,352 319,355 320,358 321,362 324,364" fill="none" stroke="#7a5632" stroke-width="0.7" opacity="0.5"/>
<polyline points="309,344 311,347 313,350 314,354 316,357 318,360 319,363" fill="none" stroke="#7a5632" stroke-width="0.7" opacity="0.5"/>
<polyline points="309,348 311,351 312,355 314,358 316,361 317,364" fill="none" stroke="#7a5632" stroke-width="0.7" opacity="0.5"/>
<polyline points="308,353 310,356 311,359 313,362" fill="none" stroke="#7a5632" stroke-width="0.7" opacity="0.5"/><ellipse cx="348.7" cy="338.1" rx="2.0" ry="1.2" fill="#e8d4b4" opacity="0.6" transform="rotate(62 348.7 338.1)"/>
<ellipse cx="330.6" cy="341.2" rx="1.8" ry="1.2" fill="#e8d4b4" opacity="0.6" transform="rotate(47 330.6 341.2)"/>
<ellipse cx="360.8" cy="297.1" rx="2.4" ry="1.4" fill="#e8d4b4" opacity="0.6" transform="rotate(54 360.8 297.1)"/>
<ellipse cx="360.9" cy="294.4" rx="1.5" ry="1.0" fill="#e8d4b4" opacity="0.6" transform="rotate(66 360.9 294.4)"/>
<ellipse cx="342.3" cy="339.0" rx="2.7" ry="0.6" fill="#e8d4b4" opacity="0.6" transform="rotate(62 342.3 339.0)"/>
<ellipse cx="333.3" cy="337.5" rx="2.1" ry="1.0" fill="#e8d4b4" opacity="0.6" transform="rotate(40 333.3 337.5)"/>
<ellipse cx="328.9" cy="321.4" rx="1.7" ry="1.1" fill="#e8d4b4" opacity="0.6" transform="rotate(66 328.9 321.4)"/>
<ellipse cx="330.1" cy="348.2" rx="1.7" ry="1.1" fill="#e8d4b4" opacity="0.6" transform="rotate(57 330.1 348.2)"/>
<ellipse cx="357.4" cy="331.9" rx="2.9" ry="0.6" fill="#e8d4b4" opacity="0.6" transform="rotate(78 357.4 331.9)"/>
<ellipse cx="323.4" cy="351.2" rx="1.1" ry="1.6" fill="#e8d4b4" opacity="0.6" transform="rotate(65 323.4 351.2)"/>
<ellipse cx="346.9" cy="317.8" rx="1.8" ry="0.8" fill="#e8d4b4" opacity="0.6" transform="rotate(46 346.9 317.8)"/>
<ellipse cx="344.0" cy="314.6" rx="1.1" ry="0.8" fill="#e8d4b4" opacity="0.6" transform="rotate(47 344.0 314.6)"/>
<ellipse cx="323.3" cy="322.0" rx="2.8" ry="1.3" fill="#e8d4b4" opacity="0.6" transform="rotate(70 323.3 322.0)"/>
<ellipse cx="319.1" cy="337.7" rx="2.7" ry="1.8" fill="#e8d4b4" opacity="0.6" transform="rotate(68 319.1 337.7)"/>
<ellipse cx="343.1" cy="355.5" rx="1.3" ry="1.6" fill="#e8d4b4" opacity="0.6" transform="rotate(69 343.1 355.5)"/>
<ellipse cx="348.9" cy="315.4" rx="1.2" ry="0.8" fill="#e8d4b4" opacity="0.6" transform="rotate(67 348.9 315.4)"/>
<ellipse cx="329.0" cy="354.6" rx="1.2" ry="1.6" fill="#e8d4b4" opacity="0.6" transform="rotate(59 329.0 354.6)"/>
<ellipse cx="328.1" cy="308.8" rx="1.7" ry="1.0" fill="#e8d4b4" opacity="0.6" transform="rotate(49 328.1 308.8)"/>
<ellipse cx="324.5" cy="356.1" rx="1.8" ry="1.3" fill="#e8d4b4" opacity="0.6" transform="rotate(68 324.5 356.1)"/>
<ellipse cx="329.9" cy="353.7" rx="1.6" ry="0.8" fill="#e8d4b4" opacity="0.6" transform="rotate(42 329.9 353.7)"/></g>
<polygon points="346.0,292.0 372.0,318.0 400.0,341.5 385.0,345.0 368.0,348.0 358.0,325.0" fill="#b88c58" />
<clipPath id="c21"><polygon points="346.0,292.0 372.0,318.0 400.0,341.5 385.0,345.0 368.0,348.0 358.0,325.0"/></clipPath><g clip-path="url(#c21)"><circle cx="360.2" cy="327.0" r="0.55" fill="#1a1a1a" opacity="0.7"/>
<circle cx="349.3" cy="318.1" r="0.55" fill="#1a1a1a" opacity="0.7"/>
<circle cx="379.9" cy="313.9" r="0.55" fill="#1a1a1a" opacity="0.7"/>
<circle cx="377.1" cy="315.0" r="0.55" fill="#1a1a1a" opacity="0.7"/>
<circle cx="347.2" cy="329.7" r="0.55" fill="#1a1a1a" opacity="0.7"/>
<circle cx="397.3" cy="347.9" r="0.55" fill="#1a1a1a" opacity="0.7"/>
<circle cx="385.3" cy="318.5" r="0.55" fill="#1a1a1a" opacity="0.7"/>
<circle cx="375.7" cy="312.5" r="0.55" fill="#1a1a1a" opacity="0.7"/>
<circle cx="397.0" cy="327.2" r="0.55" fill="#1a1a1a" opacity="0.7"/>
<circle cx="374.6" cy="327.2" r="0.55" fill="#1a1a1a" opacity="0.7"/>
<circle cx="355.5" cy="314.8" r="0.55" fill="#1a1a1a" opacity="0.7"/>
<circle cx="388.1" cy="328.2" r="0.55" fill="#1a1a1a" opacity="0.7"/>
<circle cx="397.6" cy="328.8" r="0.55" fill="#1a1a1a" opacity="0.7"/>
<circle cx="349.2" cy="333.8" r="0.55" fill="#1a1a1a" opacity="0.7"/>
<circle cx="373.2" cy="301.4" r="0.55" fill="#1a1a1a" opacity="0.7"/>
<circle cx="358.2" cy="328.5" r="0.55" fill="#1a1a1a" opacity="0.7"/>
<circle cx="394.8" cy="315.4" r="0.55" fill="#1a1a1a" opacity="0.7"/>
<circle cx="351.2" cy="341.2" r="0.55" fill="#1a1a1a" opacity="0.7"/>
<circle cx="389.6" cy="326.6" r="0.55" fill="#1a1a1a" opacity="0.7"/>
<circle cx="357.1" cy="337.4" r="0.55" fill="#1a1a1a" opacity="0.7"/>
<circle cx="380.6" cy="337.4" r="0.55" fill="#1a1a1a" opacity="0.7"/>
<circle cx="383.4" cy="303.9" r="0.55" fill="#1a1a1a" opacity="0.7"/>
<circle cx="387.1" cy="296.3" r="0.55" fill="#1a1a1a" opacity="0.7"/>
<circle cx="348.9" cy="334.5" r="0.55" fill="#1a1a1a" opacity="0.7"/>
<circle cx="372.1" cy="295.1" r="0.55" fill="#1a1a1a" opacity="0.7"/>
<circle cx="352.8" cy="345.1" r="0.55" fill="#1a1a1a" opacity="0.7"/>
<circle cx="352.8" cy="330.7" r="0.55" fill="#1a1a1a" opacity="0.7"/>
<circle cx="354.7" cy="315.7" r="0.55" fill="#1a1a1a" opacity="0.7"/>
<circle cx="354.0" cy="329.5" r="0.55" fill="#1a1a1a" opacity="0.7"/>
<circle cx="396.5" cy="299.4" r="0.55" fill="#1a1a1a" opacity="0.7"/>
<circle cx="376.3" cy="327.7" r="0.55" fill="#1a1a1a" opacity="0.7"/>
<circle cx="359.7" cy="343.5" r="0.55" fill="#1a1a1a" opacity="0.7"/>
<circle cx="372.2" cy="292.0" r="0.55" fill="#1a1a1a" opacity="0.7"/>
<circle cx="349.0" cy="344.5" r="0.55" fill="#1a1a1a" opacity="0.7"/>
<circle cx="357.7" cy="309.4" r="0.55" fill="#1a1a1a" opacity="0.7"/>
<circle cx="379.9" cy="314.2" r="0.55" fill="#1a1a1a" opacity="0.7"/>
<circle cx="383.5" cy="344.6" r="0.55" fill="#1a1a1a" opacity="0.7"/>
<circle cx="379.2" cy="336.6" r="0.55" fill="#1a1a1a" opacity="0.7"/>
<circle cx="399.2" cy="313.6" r="0.55" fill="#1a1a1a" opacity="0.7"/>
<circle cx="398.9" cy="346.9" r="0.55" fill="#1a1a1a" opacity="0.7"/>
<circle cx="391.0" cy="293.8" r="0.55" fill="#1a1a1a" opacity="0.7"/>
<circle cx="371.1" cy="329.0" r="0.55" fill="#1a1a1a" opacity="0.7"/>
<circle cx="386.9" cy="320.5" r="0.55" fill="#1a1a1a" opacity="0.7"/>
<circle cx="359.5" cy="341.7" r="0.55" fill="#1a1a1a" opacity="0.7"/>
<circle cx="392.7" cy="293.0" r="0.55" fill="#1a1a1a" opacity="0.7"/>
<circle cx="359.2" cy="310.0" r="0.55" fill="#1a1a1a" opacity="0.7"/>
<circle cx="399.5" cy="318.8" r="0.55" fill="#1a1a1a" opacity="0.7"/>
<circle cx="346.7" cy="296.1" r="0.55" fill="#1a1a1a" opacity="0.7"/>
<circle cx="389.0" cy="328.2" r="0.55" fill="#1a1a1a" opacity="0.7"/>
<circle cx="373.0" cy="339.5" r="0.55" fill="#1a1a1a" opacity="0.7"/>
<circle cx="390.1" cy="342.8" r="0.55" fill="#1a1a1a" opacity="0.7"/>
<circle cx="374.1" cy="300.1" r="0.55" fill="#1a1a1a" opacity="0.7"/>
<circle cx="391.0" cy="320.4" r="0.55" fill="#1a1a1a" opacity="0.7"/>
<circle cx="384.3" cy="347.2" r="0.55" fill="#1a1a1a" opacity="0.7"/>
<circle cx="380.5" cy="296.0" r="0.55" fill="#1a1a1a" opacity="0.7"/>
<circle cx="397.4" cy="331.5" r="0.55" fill="#1a1a1a" opacity="0.7"/>
<circle cx="352.4" cy="308.0" r="0.55" fill="#1a1a1a" opacity="0.7"/>
<circle cx="396.0" cy="342.9" r="0.55" fill="#1a1a1a" opacity="0.7"/>
<circle cx="374.2" cy="326.1" r="0.55" fill="#1a1a1a" opacity="0.7"/>
<circle cx="384.2" cy="342.2" r="0.55" fill="#1a1a1a" opacity="0.7"/>
<circle cx="382.1" cy="294.8" r="0.55" fill="#1a1a1a" opacity="0.7"/>
<circle cx="367.2" cy="325.9" r="0.55" fill="#1a1a1a" opacity="0.7"/>
<circle cx="374.4" cy="315.5" r="0.55" fill="#1a1a1a" opacity="0.7"/>
<circle cx="398.5" cy="298.0" r="0.55" fill="#1a1a1a" opacity="0.7"/>
<circle cx="372.4" cy="314.9" r="0.55" fill="#1a1a1a" opacity="0.7"/>
<circle cx="395.5" cy="333.5" r="0.55" fill="#1a1a1a" opacity="0.7"/>
<circle cx="346.5" cy="324.6" r="0.55" fill="#1a1a1a" opacity="0.7"/>
<circle cx="377.0" cy="325.3" r="0.55" fill="#1a1a1a" opacity="0.7"/>
<circle cx="383.2" cy="307.7" r="0.55" fill="#1a1a1a" opacity="0.7"/>
<circle cx="367.3" cy="320.5" r="0.55" fill="#1a1a1a" opacity="0.7"/>
<circle cx="350.4" cy="317.0" r="0.55" fill="#1a1a1a" opacity="0.7"/>
<circle cx="388.8" cy="343.0" r="0.55" fill="#1a1a1a" opacity="0.7"/>
<circle cx="386.7" cy="341.2" r="0.55" fill="#1a1a1a" opacity="0.7"/>
<circle cx="366.6" cy="316.5" r="0.55" fill="#1a1a1a" opacity="0.7"/>
<circle cx="351.3" cy="320.2" r="0.55" fill="#1a1a1a" opacity="0.7"/>
<circle cx="391.3" cy="308.4" r="0.55" fill="#1a1a1a" opacity="0.7"/>
<circle cx="387.9" cy="323.7" r="0.55" fill="#1a1a1a" opacity="0.7"/>
<circle cx="391.0" cy="299.3" r="0.55" fill="#1a1a1a" opacity="0.7"/>
<circle cx="390.2" cy="346.1" r="0.55" fill="#1a1a1a" opacity="0.7"/>
<circle cx="360.2" cy="315.2" r="0.55" fill="#1a1a1a" opacity="0.7"/><polyline points="397,286 400,289 403,291 404,294" fill="none" stroke="#6a4a2a" stroke-width="0.7" opacity="0.55"/>
<polyline points="396,288 398,290 400,293 403,296 405,298" fill="none" stroke="#6a4a2a" stroke-width="0.7" opacity="0.55"/>
<polyline points="391,287 393,290 395,293 398,295 400,298 402,301 405,303" fill="none" stroke="#6a4a2a" stroke-width="0.7" opacity="0.55"/>
<polyline points="386,287 389,289 391,292 394,294 396,297 398,300 401,302 403,305 405,308" fill="none" stroke="#6a4a2a" stroke-width="0.7" opacity="0.55"/>
<polyline points="382,286 384,288 386,292 389,294 391,296 393,300 396,302 398,304 400,307 403,309 405,312" fill="none" stroke="#6a4a2a" stroke-width="0.7" opacity="0.55"/>
<polyline points="376,286 379,288 382,291 384,294 387,296 389,299 391,302 394,304 395,307 398,310 401,312 402,315 405,317" fill="none" stroke="#6a4a2a" stroke-width="0.7" opacity="0.55"/>
<polyline points="375,288 377,291 379,294 382,296 383,299 386,301 389,303 390,307 393,309 396,311 397,315 400,317 403,319 404,322" fill="none" stroke="#6a4a2a" stroke-width="0.7" opacity="0.55"/>
<polyline points="370,287 372,291 374,293 377,295 379,298 381,301 384,303 386,306 388,308 391,311 393,314 396,316 398,319 400,322 403,324 405,327" fill="none" stroke="#6a4a2a" stroke-width="0.7" opacity="0.55"/>
<polyline points="365,287 368,289 369,293 372,295 374,297 376,300 379,302 381,305 384,308 386,310 388,313 391,316 394,318 395,321 398,324 401,326 402,329 405,331" fill="none" stroke="#6a4a2a" stroke-width="0.7" opacity="0.55"/>
<polyline points="360,287 363,289 365,292 367,294 370,297 372,300 375,302 377,305 379,308 382,310 384,313 386,316 389,318 391,321 393,323 396,325 398,329 400,331 403,333 405,336" fill="none" stroke="#6a4a2a" stroke-width="0.7" opacity="0.55"/>
<polyline points="356,286 358,289 360,292 363,294 365,297 367,299 370,301 372,305 374,307 377,309 379,313 381,315 384,317 386,320 388,323 391,325 393,328 396,330 398,333 400,336 403,338 405,341" fill="none" stroke="#6a4a2a" stroke-width="0.7" opacity="0.55"/>
<polyline points="353,288 355,291 358,294 361,296 362,299 365,301 368,304 369,307 372,309 375,312 376,315 379,317 382,319 383,323 386,325 388,327 390,330 393,332 395,335 397,338 400,340 402,343 405,346" fill="none" stroke="#6a4a2a" stroke-width="0.7" opacity="0.55"/>
<polyline points="348,288 350,291 353,293 355,296 357,299 360,301 362,304 365,306 367,308 369,312 372,314 374,316 376,319 379,322 381,324 383,327 386,329 388,332 390,335 393,337 395,340 397,343 400,345 402,348 405,351" fill="none" stroke="#6a4a2a" stroke-width="0.7" opacity="0.55"/>
<polyline points="343,288 346,290 348,293 350,296 353,298 355,301 357,303 360,305 362,309 365,311 367,313 369,316 372,319 374,321 376,324 379,326 381,329 383,332 386,334 388,337 390,340 393,342 395,345 397,348 400,350 402,353" fill="none" stroke="#6a4a2a" stroke-width="0.7" opacity="0.55"/>
<polyline points="342,289 344,292 346,294 349,297 351,300 354,302 356,305 358,308 361,310 363,313 365,316 368,318 370,321 372,323 375,325 377,329 379,331 382,333 383,337 386,339 389,341 391,344 393,347 396,349 398,352" fill="none" stroke="#6a4a2a" stroke-width="0.7" opacity="0.55"/>
<polyline points="342,294 344,296 346,299 349,302 351,304 353,307 356,309 358,312 360,315 363,317 365,320 367,323 370,325 372,328 374,331 377,333 379,336 382,338 384,340 386,344 389,346 391,348 393,352 396,354" fill="none" stroke="#6a4a2a" stroke-width="0.7" opacity="0.55"/>
<polyline points="341,299 344,301 346,304 348,307 351,309 353,312 355,315 358,317 360,320 363,322 365,324 367,328 370,330 372,332 374,335 377,338 379,340 381,343 384,345 386,348 388,351 391,353" fill="none" stroke="#6a4a2a" stroke-width="0.7" opacity="0.55"/>
<polyline points="339,301 342,303 344,306 346,309 349,311 351,314 353,316 356,319 358,322 361,324 363,327 365,330 368,332 370,335 372,338 375,340 377,343 379,345 382,347 384,350 386,353" fill="none" stroke="#6a4a2a" stroke-width="0.7" opacity="0.55"/>
<polyline points="342,308 343,311 347,313 348,316 351,319 354,321 355,324 358,327 361,329 362,332 365,334 368,337 369,340 372,342 375,345 376,348 379,350 382,352" fill="none" stroke="#6a4a2a" stroke-width="0.7" opacity="0.55"/>
<polyline points="342,313 344,315 347,317 349,321 351,323 354,325 356,329 358,331 361,333 363,336 365,339 368,341 370,344 373,346 375,349 377,352" fill="none" stroke="#6a4a2a" stroke-width="0.7" opacity="0.55"/>
<polyline points="342,318 345,320 346,323 349,325 352,327 353,331 356,333 359,335 360,338 363,341 366,343 367,346 370,348 373,351 374,354" fill="none" stroke="#6a4a2a" stroke-width="0.7" opacity="0.55"/>
<polyline points="342,322 344,325 347,327 349,330 351,333 354,335 356,338 358,340 361,343 363,346 366,348 368,351 370,354" fill="none" stroke="#6a4a2a" stroke-width="0.7" opacity="0.55"/>
<polyline points="340,324 342,326 344,329 347,332 349,334 351,337 354,340 356,342 358,345 361,347 363,350 365,353" fill="none" stroke="#6a4a2a" stroke-width="0.7" opacity="0.55"/>
<polyline points="340,329 342,331 344,334 347,336 349,339 351,342 354,344 356,347 358,350 361,352 363,355" fill="none" stroke="#6a4a2a" stroke-width="0.7" opacity="0.55"/>
<polyline points="340,333 342,336 345,338 347,341 349,344 352,346 354,349 356,352 359,354" fill="none" stroke="#6a4a2a" stroke-width="0.7" opacity="0.55"/>
<polyline points="341,337 343,340 345,343 348,345 350,348 352,351 355,353" fill="none" stroke="#6a4a2a" stroke-width="0.7" opacity="0.55"/>
<polyline points="341,342 343,345 346,347 348,350 350,353" fill="none" stroke="#6a4a2a" stroke-width="0.7" opacity="0.55"/>
<polyline points="341,346 344,349 345,352 348,354" fill="none" stroke="#6a4a2a" stroke-width="0.7" opacity="0.55"/></g>
<polygon points="272.0,345.0 290.0,345.0 300.0,360.0 292.0,385.0 282.0,405.0 273.0,416.0 262.0,411.0 265.0,390.0 268.0,365.0" fill="#bca690" />
<clipPath id="c22"><polygon points="272.0,345.0 290.0,345.0 300.0,360.0 292.0,385.0 282.0,405.0 273.0,416.0 262.0,411.0 265.0,390.0 268.0,365.0"/></clipPath><g clip-path="url(#c22)"><polyline points="257,351 260,344 264,337" fill="none" stroke="#6e5e48" stroke-width="0.7" opacity="0.5"/>
<polyline points="255,358 259,352 263,345 266,338" fill="none" stroke="#6e5e48" stroke-width="0.7" opacity="0.5"/>
<polyline points="255,367 259,360 262,353 266,347 269,340" fill="none" stroke="#6e5e48" stroke-width="0.7" opacity="0.5"/>
<polyline points="254,375 258,368 261,361 265,355 269,348 272,341 276,335" fill="none" stroke="#6e5e48" stroke-width="0.7" opacity="0.5"/>
<polyline points="257,376 260,369 264,363 267,356 271,349 275,343 278,336" fill="none" stroke="#6e5e48" stroke-width="0.7" opacity="0.5"/>
<polyline points="257,385 259,377 263,371 267,365 270,357 274,351 277,344 280,337" fill="none" stroke="#6e5e48" stroke-width="0.7" opacity="0.5"/>
<polyline points="255,392 260,386 263,379 266,372 270,366 273,359 277,353 281,346 283,339" fill="none" stroke="#6e5e48" stroke-width="0.7" opacity="0.5"/>
<polyline points="255,401 259,394 263,388 265,381 270,374 273,368 276,361 281,355 283,348 287,341" fill="none" stroke="#6e5e48" stroke-width="0.7" opacity="0.5"/>
<polyline points="257,402 262,396 264,389 268,382 272,376 275,369 279,363 282,356 286,349 290,343 293,335" fill="none" stroke="#6e5e48" stroke-width="0.7" opacity="0.5"/>
<polyline points="257,410 260,404 264,397 267,390 271,384 275,377 278,370 282,364 285,357 288,350 293,344 295,337" fill="none" stroke="#6e5e48" stroke-width="0.7" opacity="0.5"/>
<polyline points="256,419 259,412 264,406 266,398 271,392 274,385 277,378 281,372 284,365 288,359 292,352 295,345 299,339" fill="none" stroke="#6e5e48" stroke-width="0.7" opacity="0.5"/>
<polyline points="259,420 263,414 267,407 269,400 274,394 277,387 280,380 285,374 287,367 291,360 295,354 298,347 302,341" fill="none" stroke="#6e5e48" stroke-width="0.7" opacity="0.5"/>
<polyline points="262,422 266,415 270,409 272,402 277,395 280,389 283,382 288,375 290,368 294,362 298,355 301,348 305,342" fill="none" stroke="#6e5e48" stroke-width="0.7" opacity="0.5"/>
<polyline points="264,423 269,417 272,410 275,403 279,397 282,390 286,383 290,377 293,370 297,363 300,356 303,350 308,343" fill="none" stroke="#6e5e48" stroke-width="0.7" opacity="0.5"/>
<polyline points="267,424 271,418 275,411 278,404 282,398 285,391 288,384 293,378 295,371 299,365 303,358 306,351" fill="none" stroke="#6e5e48" stroke-width="0.7" opacity="0.5"/>
<polyline points="270,426 274,420 277,413 281,406 285,400 287,392 292,386 295,379 298,373 303,366 305,359" fill="none" stroke="#6e5e48" stroke-width="0.7" opacity="0.5"/>
<polyline points="277,421 279,414 284,408 287,401 290,394 295,388 297,381 301,374 305,368" fill="none" stroke="#6e5e48" stroke-width="0.7" opacity="0.5"/>
<polyline points="280,422 283,415 287,409 290,402 293,396 298,389 300,382 305,376" fill="none" stroke="#6e5e48" stroke-width="0.7" opacity="0.5"/>
<polyline points="283,424 286,418 289,410 294,404 297,397 300,391 304,384" fill="none" stroke="#6e5e48" stroke-width="0.7" opacity="0.5"/>
<polyline points="286,426 289,419 292,412 297,406 300,399 303,392 307,386" fill="none" stroke="#6e5e48" stroke-width="0.7" opacity="0.5"/>
<polyline points="291,420 296,414 299,407 302,400 306,394" fill="none" stroke="#6e5e48" stroke-width="0.7" opacity="0.5"/>
<polyline points="294,422 298,415 302,409 305,402" fill="none" stroke="#6e5e48" stroke-width="0.7" opacity="0.5"/>
<polyline points="297,423 301,417 305,410" fill="none" stroke="#6e5e48" stroke-width="0.7" opacity="0.5"/><polyline points="256,350 260,344 263,337" fill="none" stroke="#e0d0bc" stroke-width="0.8" opacity="0.5"/>
<polyline points="257,359 261,353 264,346 268,339" fill="none" stroke="#e0d0bc" stroke-width="0.8" opacity="0.5"/>
<polyline points="257,368 260,361 264,354 268,348 271,341" fill="none" stroke="#e0d0bc" stroke-width="0.8" opacity="0.5"/>
<polyline points="257,376 262,370 264,363 268,357 272,350 275,343 279,337" fill="none" stroke="#e0d0bc" stroke-width="0.8" opacity="0.5"/>
<polyline points="258,385 262,379 265,372 269,365 273,359 276,352 280,346 283,339" fill="none" stroke="#e0d0bc" stroke-width="0.8" opacity="0.5"/>
<polyline points="256,401 260,395 262,388 267,381 270,375 273,368 278,362 280,354 284,348 288,341 291,334" fill="none" stroke="#e0d0bc" stroke-width="0.8" opacity="0.5"/>
<polyline points="255,409 260,403 263,396 266,390 270,383 273,376 277,370 281,363 283,356 288,350 291,343 294,336" fill="none" stroke="#e0d0bc" stroke-width="0.8" opacity="0.5"/>
<polyline points="255,418 260,412 263,405 266,398 271,392 273,385 277,379 281,372 284,365 288,359 291,352 295,345 299,339" fill="none" stroke="#e0d0bc" stroke-width="0.8" opacity="0.5"/>
<polyline points="260,421 264,414 268,408 270,400 275,394 278,387 281,381 286,374 288,367 292,361 296,354 299,347 303,341" fill="none" stroke="#e0d0bc" stroke-width="0.8" opacity="0.5"/>
<polyline points="265,423 268,416 272,410 275,403 278,396 283,390 285,383 290,376 293,370 296,363 301,357 304,350 307,343" fill="none" stroke="#e0d0bc" stroke-width="0.8" opacity="0.5"/>
<polyline points="268,425 273,419 275,412 279,405 283,399 286,392 290,385 293,378 297,372 301,365 304,358 308,352" fill="none" stroke="#e0d0bc" stroke-width="0.8" opacity="0.5"/>
<polyline points="276,421 281,414 283,407 287,401 291,394 294,387 298,381 301,374 305,367" fill="none" stroke="#e0d0bc" stroke-width="0.8" opacity="0.5"/>
<polyline points="280,423 285,417 288,410 291,403 295,397 298,389 302,383 306,377" fill="none" stroke="#e0d0bc" stroke-width="0.8" opacity="0.5"/>
<polyline points="285,425 288,418 293,412 295,405 299,399 303,392 306,385" fill="none" stroke="#e0d0bc" stroke-width="0.8" opacity="0.5"/>
<polyline points="292,421 295,414 300,407 302,400 306,394" fill="none" stroke="#e0d0bc" stroke-width="0.8" opacity="0.5"/>
<polyline points="295,422 299,416 302,409 306,402" fill="none" stroke="#e0d0bc" stroke-width="0.8" opacity="0.5"/>
<polyline points="299,424 302,418 307,411" fill="none" stroke="#e0d0bc" stroke-width="0.8" opacity="0.5"/><polyline points="284,346 281,346 278,346 275,346 272,347 271,350 270,352" fill="none" stroke="#b83232" stroke-width="0.9" opacity="0.8"/>
<polyline points="280,409 278,412 279,415 279,418 277,420 277,423 279,426" fill="none" stroke="#b83232" stroke-width="0.9" opacity="0.8"/>
<polyline points="272,359 274,360 277,361 280,360 282,357 284,355 285,352" fill="none" stroke="#b83232" stroke-width="0.9" opacity="0.8"/>
<polyline points="268,416 271,416 274,417 277,416 280,415 282,412 284,410" fill="none" stroke="#b83232" stroke-width="0.9" opacity="0.8"/>
<polyline points="298,414 301,414 303,415 305,417 308,418 310,420 313,421" fill="none" stroke="#b83232" stroke-width="0.9" opacity="0.8"/>
<polyline points="296,356 295,354 293,351 291,349 289,347 286,347 283,348" fill="none" stroke="#b83232" stroke-width="0.9" opacity="0.8"/>
<polyline points="283,408 281,410 279,412 276,412 274,415 273,417 271,420" fill="none" stroke="#b83232" stroke-width="0.9" opacity="0.8"/>
<polyline points="277,406 275,404 274,401 273,398 273,395 274,392 277,391" fill="none" stroke="#b83232" stroke-width="0.9" opacity="0.8"/>
<polyline points="294,409 294,406 295,403 295,400 296,397 296,394 295,391" fill="none" stroke="#b83232" stroke-width="0.9" opacity="0.8"/>
<polyline points="272,401 275,401 278,402 281,403 284,403 287,405 289,406" fill="none" stroke="#b83232" stroke-width="0.9" opacity="0.8"/></g>
<linearGradient id="drg" x1="0" y1="0" x2="0" y2="1"><stop offset="0" stop-color="#80603c" stop-opacity="0.97"/><stop offset="0.45" stop-color="#8a6a48" stop-opacity="0.85"/><stop offset="1" stop-color="#9a8068" stop-opacity="0.35"/></linearGradient>
<polygon points="313.0,273.0 322.0,274.0 338.0,275.0 349.0,277.0 355.0,280.0 345.0,290.0 340.0,292.0 335.6,315.6 331.0,335.0 313.8,357.0 296.0,379.0 283.0,401.0 272.0,416.0 262.0,411.0 257.0,380.0 263.0,346.0 276.0,325.0 290.0,306.0 302.0,290.0" fill="url(#drg)" />
<clipPath id="c23"><polygon points="313.0,273.0 322.0,274.0 338.0,275.0 349.0,277.0 355.0,280.0 345.0,290.0 340.0,292.0 335.6,315.6 331.0,335.0 313.8,357.0 296.0,379.0 283.0,401.0 272.0,416.0 262.0,411.0 257.0,380.0 263.0,346.0 276.0,325.0 290.0,306.0 302.0,290.0"/></clipPath><g clip-path="url(#c23)"><path d="M338.8,286.5 Q314.0,322.1 293.4,357.0" fill="none" stroke="#4e3a22" stroke-width="0.65" opacity="0.55"/>
<path d="M332.9,285.5 Q323.0,308.7 307.0,337.8" fill="none" stroke="#4e3a22" stroke-width="0.73" opacity="0.55"/>
<path d="M334.4,282.5 Q323.4,317.4 318.2,351.5" fill="none" stroke="#4e3a22" stroke-width="1.22" opacity="0.55"/>
<path d="M331.8,281.5 Q318.1,319.9 294.9,350.6" fill="none" stroke="#4e3a22" stroke-width="0.70" opacity="0.55"/>
<path d="M331.2,284.7 Q312.8,312.9 298.9,340.2" fill="none" stroke="#4e3a22" stroke-width="0.77" opacity="0.55"/>
<path d="M329.6,285.9 Q309.7,312.5 286.6,343.9" fill="none" stroke="#4e3a22" stroke-width="0.94" opacity="0.55"/>
<path d="M335.2,281.5 Q321.4,309.5 301.7,344.0" fill="none" stroke="#4e3a22" stroke-width="0.63" opacity="0.55"/>
<path d="M331.8,285.5 Q314.5,305.8 308.8,333.8" fill="none" stroke="#4e3a22" stroke-width="0.81" opacity="0.55"/>
<path d="M337.8,284.3 Q307.6,335.4 289.7,392.3" fill="none" stroke="#4e3a22" stroke-width="0.99" opacity="0.55"/>
<path d="M333.3,281.4 Q307.1,327.5 273.8,370.8" fill="none" stroke="#4e3a22" stroke-width="0.62" opacity="0.55"/>
<path d="M335.2,279.7 Q320.8,310.7 301.9,335.3" fill="none" stroke="#4e3a22" stroke-width="0.74" opacity="0.55"/>
<path d="M341.9,283.4 Q328.1,309.4 323.2,342.4" fill="none" stroke="#4e3a22" stroke-width="0.66" opacity="0.55"/>
<path d="M336.5,280.1 Q313.5,311.8 295.2,355.6" fill="none" stroke="#4e3a22" stroke-width="1.28" opacity="0.55"/>
<path d="M335.5,279.3 Q320.6,307.5 300.8,330.6" fill="none" stroke="#4e3a22" stroke-width="0.95" opacity="0.55"/>
<path d="M338.4,283.4 Q306.2,338.8 266.8,393.0" fill="none" stroke="#4e3a22" stroke-width="0.61" opacity="0.55"/>
<path d="M336.7,282.1 Q327.4,312.4 323.4,345.2" fill="none" stroke="#4e3a22" stroke-width="0.74" opacity="0.55"/>
<path d="M336.0,283.3 Q304.7,342.8 263.1,394.4" fill="none" stroke="#4e3a22" stroke-width="1.06" opacity="0.55"/>
<path d="M335.7,282.5 Q309.6,303.0 287.8,332.7" fill="none" stroke="#4e3a22" stroke-width="1.12" opacity="0.55"/>
<path d="M337.4,282.2 Q316.0,302.7 292.9,328.8" fill="none" stroke="#4e3a22" stroke-width="0.70" opacity="0.55"/>
<path d="M336.6,282.7 Q290.4,332.9 261.1,378.8" fill="none" stroke="#4e3a22" stroke-width="0.70" opacity="0.55"/>
<path d="M332.8,282.1 Q297.0,344.5 264.3,392.0" fill="none" stroke="#4e3a22" stroke-width="0.86" opacity="0.55"/>
<path d="M336.9,284.0 Q301.8,327.1 271.5,377.0" fill="none" stroke="#4e3a22" stroke-width="1.30" opacity="0.55"/>
<path d="M333.5,283.4 Q305.7,301.9 274.3,322.9" fill="none" stroke="#4e3a22" stroke-width="0.84" opacity="0.55"/>
<path d="M335.9,282.0 Q310.5,322.6 281.3,363.9" fill="none" stroke="#4e3a22" stroke-width="1.00" opacity="0.55"/>
<path d="M337.3,281.0 Q309.8,322.8 281.0,356.3" fill="none" stroke="#4e3a22" stroke-width="0.84" opacity="0.55"/>
<path d="M331.4,282.6 Q305.2,321.5 288.8,361.0" fill="none" stroke="#4e3a22" stroke-width="0.86" opacity="0.55"/>
<path d="M337.0,283.8 Q325.4,309.5 306.1,330.7" fill="none" stroke="#4e3a22" stroke-width="0.99" opacity="0.55"/>
<path d="M345.2,287.4 Q302.9,343.0 255.1,393.7" fill="none" stroke="#4e3a22" stroke-width="1.25" opacity="0.55"/>
<path d="M335.7,287.2 Q298.2,340.8 275.2,392.2" fill="none" stroke="#4e3a22" stroke-width="1.00" opacity="0.55"/>
<path d="M334.9,283.3 Q322.3,310.8 315.3,339.2" fill="none" stroke="#4e3a22" stroke-width="0.76" opacity="0.55"/>
<path d="M332.1,284.3 Q299.6,323.2 270.2,364.3" fill="none" stroke="#4e3a22" stroke-width="0.86" opacity="0.55"/>
<path d="M337.4,277.2 Q319.8,300.5 300.5,326.7" fill="none" stroke="#4e3a22" stroke-width="1.03" opacity="0.55"/>
<path d="M334.6,286.8 Q330.8,318.0 317.7,353.7" fill="none" stroke="#4e3a22" stroke-width="1.26" opacity="0.55"/>
<path d="M336.4,282.4 Q318.4,309.2 308.9,338.8" fill="none" stroke="#4e3a22" stroke-width="0.75" opacity="0.55"/>
<path d="M340.7,282.8 Q309.6,329.2 277.8,372.2" fill="none" stroke="#4e3a22" stroke-width="1.19" opacity="0.55"/>
<path d="M334.7,285.2 Q319.8,306.1 287.0,331.5" fill="none" stroke="#4e3a22" stroke-width="0.75" opacity="0.55"/>
<path d="M339.6,283.1 Q302.2,325.0 274.3,380.8" fill="none" stroke="#4e3a22" stroke-width="1.22" opacity="0.55"/>
<path d="M332.1,282.2 Q316.7,310.7 311.7,341.8" fill="none" stroke="#4e3a22" stroke-width="1.26" opacity="0.55"/>
<path d="M333.3,286.8 Q322.4,314.7 309.2,338.5" fill="none" stroke="#4e3a22" stroke-width="1.16" opacity="0.55"/>
<path d="M337.9,284.5 Q325.9,308.4 320.0,336.9" fill="none" stroke="#4e3a22" stroke-width="1.14" opacity="0.55"/>
<path d="M336.0,282.1 Q317.2,309.9 309.9,332.0" fill="none" stroke="#4e3a22" stroke-width="0.99" opacity="0.55"/>
<path d="M337.1,283.1 Q298.9,318.9 273.7,363.3" fill="none" stroke="#4e3a22" stroke-width="0.65" opacity="0.55"/>
<path d="M332.6,282.0 Q319.3,297.3 303.8,327.4" fill="none" stroke="#4e3a22" stroke-width="1.10" opacity="0.55"/>
<path d="M334.1,284.9 Q312.6,315.1 284.4,360.1" fill="none" stroke="#4e3a22" stroke-width="0.78" opacity="0.55"/>
<path d="M338.8,282.4 Q305.2,305.0 280.1,332.6" fill="none" stroke="#4e3a22" stroke-width="1.17" opacity="0.55"/>
<path d="M338.9,279.7 Q316.4,303.5 293.7,337.8" fill="none" stroke="#4e3a22" stroke-width="0.99" opacity="0.55"/>
<path d="M335.7,283.2 Q327.4,313.1 317.7,338.9" fill="none" stroke="#4e3a22" stroke-width="1.08" opacity="0.55"/>
<path d="M339.4,283.9 Q320.7,315.4 297.5,352.1" fill="none" stroke="#4e3a22" stroke-width="0.89" opacity="0.55"/>
<path d="M338.4,280.4 Q319.3,319.0 277.7,358.6" fill="none" stroke="#4e3a22" stroke-width="0.72" opacity="0.55"/>
<path d="M335.1,285.9 Q322.5,306.6 327.1,322.2" fill="none" stroke="#4e3a22" stroke-width="1.25" opacity="0.55"/>
<path d="M336.5,281.7 Q308.7,304.1 286.4,321.8" fill="none" stroke="#4e3a22" stroke-width="0.77" opacity="0.55"/>
<path d="M337.6,282.8 Q301.4,333.3 270.4,382.2" fill="none" stroke="#4e3a22" stroke-width="0.68" opacity="0.55"/>
<path d="M343.5,279.6 Q331.7,305.7 316.0,328.2" fill="none" stroke="#4e3a22" stroke-width="1.05" opacity="0.55"/>
<path d="M335.2,283.1 Q299.2,313.6 272.0,351.8" fill="none" stroke="#4e3a22" stroke-width="1.02" opacity="0.55"/>
<path d="M333.7,287.9 Q306.4,321.0 275.8,354.9" fill="none" stroke="#4e3a22" stroke-width="1.30" opacity="0.55"/>
<path d="M331.6,282.8 Q322.2,314.0 315.8,348.0" fill="none" stroke="#4e3a22" stroke-width="0.75" opacity="0.55"/>
<path d="M336.0,280.1 Q318.0,309.3 312.1,342.1" fill="none" stroke="#4e3a22" stroke-width="0.89" opacity="0.55"/>
<path d="M326.0,281.9 Q301.8,319.3 283.2,359.3" fill="none" stroke="#4e3a22" stroke-width="0.64" opacity="0.55"/>
<path d="M338.0,282.5 Q308.7,317.6 280.1,353.8" fill="none" stroke="#4e3a22" stroke-width="0.88" opacity="0.55"/>
<path d="M339.0,284.6 Q323.9,311.6 306.9,329.6" fill="none" stroke="#4e3a22" stroke-width="0.97" opacity="0.55"/>
<path d="M335.7,283.7 Q325.2,307.1 307.5,334.8" fill="none" stroke="#4e3a22" stroke-width="1.08" opacity="0.55"/>
<path d="M334.4,283.6 Q334.5,316.8 325.1,348.0" fill="none" stroke="#4e3a22" stroke-width="0.61" opacity="0.55"/>
<path d="M336.3,282.0 Q323.1,307.6 319.0,334.2" fill="none" stroke="#4e3a22" stroke-width="0.87" opacity="0.55"/>
<path d="M340.2,283.0 Q308.8,331.1 269.4,386.2" fill="none" stroke="#4e3a22" stroke-width="1.14" opacity="0.55"/>
<path d="M334.9,284.0 Q312.7,301.5 300.5,329.4" fill="none" stroke="#4e3a22" stroke-width="0.98" opacity="0.55"/>
<path d="M332.3,279.2 Q319.8,317.0 313.1,344.5" fill="none" stroke="#4e3a22" stroke-width="1.01" opacity="0.55"/>
<path d="M339.2,283.3 Q311.7,312.1 281.5,353.1" fill="none" stroke="#4e3a22" stroke-width="0.68" opacity="0.55"/>
<path d="M335.2,284.4 Q317.9,305.4 290.4,328.4" fill="none" stroke="#4e3a22" stroke-width="0.70" opacity="0.55"/>
<path d="M337.8,282.4 Q315.3,308.4 295.5,329.0" fill="none" stroke="#4e3a22" stroke-width="0.82" opacity="0.55"/>
<path d="M335.8,282.4 Q323.4,315.0 312.2,344.4" fill="none" stroke="#4e3a22" stroke-width="1.24" opacity="0.55"/><path d="M339.7,284.6 Q326.3,307.9 314.3,330.7" fill="none" stroke="#c8a070" stroke-width="0.57" opacity="0.5"/>
<path d="M337.6,285.7 Q329.0,300.5 328.9,320.5" fill="none" stroke="#c8a070" stroke-width="0.80" opacity="0.5"/>
<path d="M339.8,284.4 Q298.5,326.5 257.2,368.7" fill="none" stroke="#c8a070" stroke-width="0.53" opacity="0.5"/>
<path d="M332.7,283.3 Q316.6,308.7 302.0,337.4" fill="none" stroke="#c8a070" stroke-width="0.75" opacity="0.5"/>
<path d="M337.0,283.6 Q297.4,327.8 259.2,374.6" fill="none" stroke="#c8a070" stroke-width="0.96" opacity="0.5"/>
<path d="M337.0,283.1 Q302.2,316.8 270.6,352.0" fill="none" stroke="#c8a070" stroke-width="1.03" opacity="0.5"/>
<path d="M338.4,285.2 Q299.4,305.3 281.1,334.9" fill="none" stroke="#c8a070" stroke-width="0.80" opacity="0.5"/>
<path d="M337.2,284.4 Q327.6,308.7 313.1,322.5" fill="none" stroke="#c8a070" stroke-width="0.97" opacity="0.5"/>
<path d="M332.3,285.7 Q300.6,329.9 255.1,371.0" fill="none" stroke="#c8a070" stroke-width="0.54" opacity="0.5"/>
<path d="M336.5,285.1 Q319.6,302.0 297.2,335.0" fill="none" stroke="#c8a070" stroke-width="0.79" opacity="0.5"/>
<path d="M335.1,280.2 Q310.8,311.9 294.5,343.4" fill="none" stroke="#c8a070" stroke-width="0.94" opacity="0.5"/>
<path d="M334.5,286.2 Q319.3,314.3 306.9,333.8" fill="none" stroke="#c8a070" stroke-width="0.77" opacity="0.5"/>
<path d="M334.5,281.6 Q322.0,300.6 310.4,323.6" fill="none" stroke="#c8a070" stroke-width="0.56" opacity="0.5"/>
<path d="M335.3,282.5 Q322.0,307.8 298.4,333.3" fill="none" stroke="#c8a070" stroke-width="0.67" opacity="0.5"/>
<path d="M335.5,282.4 Q311.1,314.2 285.8,343.7" fill="none" stroke="#c8a070" stroke-width="0.91" opacity="0.5"/>
<path d="M328.0,284.6 Q303.3,315.3 272.0,338.5" fill="none" stroke="#c8a070" stroke-width="0.76" opacity="0.5"/>
<path d="M331.3,281.4 Q296.1,328.9 264.6,371.1" fill="none" stroke="#c8a070" stroke-width="1.03" opacity="0.5"/>
<path d="M336.8,281.4 Q310.7,306.9 295.0,337.1" fill="none" stroke="#c8a070" stroke-width="0.96" opacity="0.5"/>
<path d="M335.4,283.9 Q296.8,329.9 264.0,370.8" fill="none" stroke="#c8a070" stroke-width="0.82" opacity="0.5"/>
<path d="M333.5,279.8 Q317.7,306.4 298.2,337.2" fill="none" stroke="#c8a070" stroke-width="0.58" opacity="0.5"/>
<path d="M338.9,283.7 Q299.0,328.2 264.8,371.8" fill="none" stroke="#c8a070" stroke-width="0.79" opacity="0.5"/>
<path d="M335.5,282.7 Q314.4,305.0 299.0,336.0" fill="none" stroke="#c8a070" stroke-width="0.73" opacity="0.5"/>
<path d="M336.4,281.3 Q326.6,300.5 299.2,325.9" fill="none" stroke="#c8a070" stroke-width="0.88" opacity="0.5"/>
<path d="M329.6,283.5 Q302.6,327.3 270.5,378.6" fill="none" stroke="#c8a070" stroke-width="0.50" opacity="0.5"/>
<path d="M334.5,280.2 Q311.8,310.0 275.9,342.7" fill="none" stroke="#c8a070" stroke-width="0.50" opacity="0.5"/>
<path d="M339.9,282.4 Q322.4,308.6 302.9,334.4" fill="none" stroke="#c8a070" stroke-width="0.98" opacity="0.5"/>
<path d="M333.9,281.9 Q314.4,314.9 297.2,344.8" fill="none" stroke="#c8a070" stroke-width="0.57" opacity="0.5"/>
<path d="M336.7,282.6 Q319.1,305.1 303.4,326.8" fill="none" stroke="#c8a070" stroke-width="0.69" opacity="0.5"/>
<path d="M335.6,286.0 Q299.4,326.3 265.7,363.3" fill="none" stroke="#c8a070" stroke-width="0.91" opacity="0.5"/>
<path d="M334.7,285.5 Q316.2,305.2 293.0,329.4" fill="none" stroke="#c8a070" stroke-width="0.54" opacity="0.5"/>
<path d="M333.2,279.8 Q324.2,296.6 307.7,324.4" fill="none" stroke="#c8a070" stroke-width="0.66" opacity="0.5"/>
<path d="M335.3,282.1 Q297.5,313.0 272.8,344.7" fill="none" stroke="#c8a070" stroke-width="0.55" opacity="0.5"/>
<path d="M333.8,283.5 Q304.1,318.1 281.4,350.7" fill="none" stroke="#c8a070" stroke-width="1.00" opacity="0.5"/>
<path d="M337.2,285.7 Q313.9,321.1 296.5,350.2" fill="none" stroke="#c8a070" stroke-width="0.91" opacity="0.5"/>
<path d="M339.9,280.1 Q322.8,306.5 304.3,336.2" fill="none" stroke="#c8a070" stroke-width="0.70" opacity="0.5"/><path d="M338.6,282.0 Q308.1,309.1 284.5,340.5" fill="none" stroke="#8a8444" stroke-width="0.74" opacity="0.55"/>
<path d="M338.0,284.4 Q316.9,312.1 292.3,338.3" fill="none" stroke="#8a8444" stroke-width="0.82" opacity="0.55"/>
<path d="M336.9,284.2 Q307.3,311.6 278.1,342.2" fill="none" stroke="#8a8444" stroke-width="0.77" opacity="0.55"/>
<path d="M339.7,285.9 Q314.8,308.2 291.2,329.8" fill="none" stroke="#8a8444" stroke-width="0.51" opacity="0.55"/>
<path d="M340.3,284.3 Q311.0,311.8 283.0,347.4" fill="none" stroke="#8a8444" stroke-width="0.85" opacity="0.55"/>
<path d="M339.1,285.9 Q311.4,321.8 289.1,351.9" fill="none" stroke="#8a8444" stroke-width="1.00" opacity="0.55"/>
<path d="M339.3,286.9 Q318.4,314.7 300.7,339.3" fill="none" stroke="#8a8444" stroke-width="0.93" opacity="0.55"/>
<path d="M338.4,285.2 Q310.0,312.8 278.4,344.1" fill="none" stroke="#8a8444" stroke-width="0.65" opacity="0.55"/></g>
<clipPath id="c24"><polygon points="290.0,314.0 300.0,320.0 285.0,350.0 272.0,360.0 262.0,385.0 255.0,382.0 262.0,358.0 275.0,332.0"/></clipPath><g clip-path="url(#c24)"><path d="M299.2,297.8 Q283.4,342.8 263.5,378.3" fill="none" stroke="#6a5234" stroke-width="0.81" opacity="0.45"/>
<path d="M298.9,298.0 Q282.3,330.6 269.5,362.3" fill="none" stroke="#6a5234" stroke-width="0.68" opacity="0.45"/>
<path d="M300.6,297.8 Q290.2,328.9 272.6,354.2" fill="none" stroke="#6a5234" stroke-width="0.87" opacity="0.45"/>
<path d="M305.7,295.2 Q282.7,332.2 267.4,365.7" fill="none" stroke="#6a5234" stroke-width="0.84" opacity="0.45"/>
<path d="M301.5,297.6 Q279.4,337.1 260.5,372.5" fill="none" stroke="#6a5234" stroke-width="0.59" opacity="0.45"/>
<path d="M295.0,299.7 Q276.8,330.3 266.3,363.3" fill="none" stroke="#6a5234" stroke-width="0.68" opacity="0.45"/>
<path d="M301.8,300.7 Q290.7,324.6 274.6,353.9" fill="none" stroke="#6a5234" stroke-width="0.63" opacity="0.45"/>
<path d="M303.6,303.1 Q281.2,331.1 261.6,363.0" fill="none" stroke="#6a5234" stroke-width="0.99" opacity="0.45"/>
<path d="M301.9,301.2 Q281.0,346.3 259.5,376.9" fill="none" stroke="#6a5234" stroke-width="0.83" opacity="0.45"/>
<path d="M303.3,298.7 Q291.1,331.9 277.2,364.6" fill="none" stroke="#6a5234" stroke-width="0.66" opacity="0.45"/>
<path d="M300.0,299.1 Q281.8,336.5 259.5,381.4" fill="none" stroke="#6a5234" stroke-width="0.94" opacity="0.45"/>
<path d="M305.1,296.7 Q280.3,334.3 259.5,368.6" fill="none" stroke="#6a5234" stroke-width="0.51" opacity="0.45"/>
<path d="M298.8,300.5 Q279.3,334.3 256.2,369.3" fill="none" stroke="#6a5234" stroke-width="0.77" opacity="0.45"/>
<path d="M305.9,298.4 Q287.0,330.3 261.9,361.5" fill="none" stroke="#6a5234" stroke-width="0.53" opacity="0.45"/>
<path d="M301.1,299.6 Q286.0,324.4 269.1,352.8" fill="none" stroke="#6a5234" stroke-width="0.62" opacity="0.45"/>
<path d="M296.0,299.4 Q285.9,322.5 276.0,349.8" fill="none" stroke="#6a5234" stroke-width="0.95" opacity="0.45"/>
<path d="M297.9,299.3 Q285.1,330.9 267.2,369.4" fill="none" stroke="#6a5234" stroke-width="0.99" opacity="0.45"/>
<path d="M297.0,300.5 Q277.0,330.1 262.8,365.7" fill="none" stroke="#6a5234" stroke-width="1.03" opacity="0.45"/>
<path d="M303.0,298.6 Q277.4,319.2 268.8,339.9" fill="none" stroke="#6a5234" stroke-width="0.75" opacity="0.45"/>
<path d="M301.9,298.1 Q288.3,335.2 273.7,364.6" fill="none" stroke="#6a5234" stroke-width="0.72" opacity="0.45"/>
<path d="M299.0,297.6 Q288.1,317.3 273.0,340.5" fill="none" stroke="#6a5234" stroke-width="0.92" opacity="0.45"/>
<path d="M300.5,305.3 Q288.2,330.3 274.5,359.5" fill="none" stroke="#6a5234" stroke-width="0.60" opacity="0.45"/><path d="M294.3,300.5 Q275.1,343.4 264.1,378.6" fill="none" stroke="#8a8444" stroke-width="0.69" opacity="0.5"/>
<path d="M296.6,303.3 Q284.4,326.8 272.8,357.1" fill="none" stroke="#8a8444" stroke-width="0.53" opacity="0.5"/>
<path d="M301.8,298.3 Q291.0,333.0 276.2,360.1" fill="none" stroke="#8a8444" stroke-width="0.80" opacity="0.5"/>
<path d="M302.9,297.2 Q281.9,326.9 267.1,359.2" fill="none" stroke="#8a8444" stroke-width="0.98" opacity="0.5"/>
<path d="M300.0,299.9 Q286.3,328.4 272.0,354.3" fill="none" stroke="#8a8444" stroke-width="0.75" opacity="0.5"/>
<path d="M302.5,299.1 Q285.2,336.3 261.2,373.4" fill="none" stroke="#8a8444" stroke-width="0.56" opacity="0.5"/>
<path d="M300.6,300.1 Q282.8,324.8 267.2,353.8" fill="none" stroke="#8a8444" stroke-width="0.90" opacity="0.5"/>
<path d="M299.2,296.1 Q280.6,334.6 262.4,380.2" fill="none" stroke="#8a8444" stroke-width="0.67" opacity="0.5"/></g>
<polygon points="352.0,277.0 378.0,299.0 400.0,324.6 430.7,346.0 453.7,360.0 469.0,366.0 492.0,378.0 522.8,389.0 526.0,392.0 520.0,396.0 519.7,392.0 492.0,381.4 469.0,375.0 446.0,369.0 423.0,355.3 400.0,341.5 372.0,318.0 346.0,292.0" fill="#9c8870" opacity="0.85"/>
<clipPath id="c25"><polygon points="352.0,277.0 378.0,299.0 400.0,324.6 430.7,346.0 453.7,360.0 469.0,366.0 492.0,378.0 522.8,389.0 526.0,392.0 520.0,396.0 519.7,392.0 492.0,381.4 469.0,375.0 446.0,369.0 423.0,355.3 400.0,341.5 372.0,318.0 346.0,292.0"/></clipPath><g clip-path="url(#c25)"><polyline points="364,272 371,277 378,282 386,286 393,291 400,296 408,300 414,306 422,310 429,314 436,320 444,324 451,329 458,334 466,338 473,343 480,348 487,352 495,357 502,363 509,367 517,371 523,377 531,381" fill="none" stroke="#5a4630" stroke-width="0.7" opacity="0.55"/>
<polyline points="355,269 363,273 370,279 377,283 385,288 391,293 399,297 406,302 413,307 421,311 428,316 435,321 443,325 450,331 457,336 465,339 472,345 479,350 487,354 493,359 501,364 509,368 515,373 523,378 530,382" fill="none" stroke="#5a4630" stroke-width="0.7" opacity="0.55"/>
<polyline points="354,271 361,275 369,279 376,285 383,289 391,294 398,299 405,303 413,308 420,314 427,318 435,322 441,328 449,332 456,337 463,342 471,346 478,351 485,356 493,360 500,365 507,370 515,374 522,379 529,384 537,388" fill="none" stroke="#5a4630" stroke-width="0.7" opacity="0.55"/>
<polyline points="353,272 361,276 368,282 375,286 383,291 389,296 397,300 404,305 411,310 419,314 426,319 433,324 441,328 448,334 455,338 463,342 470,348 477,353 485,357 491,362 499,367 507,371 513,377 521,381 528,385 535,391" fill="none" stroke="#5a4630" stroke-width="0.7" opacity="0.55"/>
<polyline points="345,269 353,273 359,279 367,283 374,287 381,293 389,297 396,302 403,307 411,311 418,316 425,321 433,325 440,330 447,336 455,339 461,345 469,350 476,354 483,359 490,364 498,368 505,373 512,378 520,382 527,388 534,392" fill="none" stroke="#5a4630" stroke-width="0.7" opacity="0.55"/>
<polyline points="344,271 351,275 358,280 366,285 373,289 380,295 387,299 395,303 402,309 409,313 417,318 424,323 431,327 439,332 445,337 453,341 460,346 467,352 475,355 482,361 489,366 497,370 504,375 511,380 519,384 526,389 533,394" fill="none" stroke="#5a4630" stroke-width="0.7" opacity="0.55"/>
<polyline points="343,272 350,277 357,282 365,286 372,292 379,296 387,300 393,306 401,310 408,315 415,320 423,324 430,329 437,334 445,338 452,343 459,349 467,353 474,358 481,363 489,367 496,372 503,377 510,381 517,386 525,391 532,395" fill="none" stroke="#5a4630" stroke-width="0.7" opacity="0.55"/>
<polyline points="342,274 349,279 356,283 364,288 370,294 378,297 385,302 392,308 400,312 407,317 414,322 422,326 429,331 436,336 444,340 451,345 458,350 466,354 473,360 480,364 488,368 494,374 502,378 509,382 516,388 524,392 531,397" fill="none" stroke="#5a4630" stroke-width="0.7" opacity="0.55"/>
<polyline points="341,275 348,281 355,285 362,290 369,295 377,299 384,304 391,309 399,313 406,318 413,323 421,327 428,333 435,337 443,341 450,347 457,351 465,356 471,361 479,365 486,370 493,375 501,379 508,384 515,390 523,393 530,399" fill="none" stroke="#5a4630" stroke-width="0.7" opacity="0.55"/>
<polyline points="339,277 346,283 354,286 361,292 368,297 376,301 383,306 390,311 398,315 405,320 412,325 420,329 427,335 434,339 442,343 448,349 456,353 463,358 470,363 478,367 485,372 492,377 500,381 507,386 514,391 522,395 529,401" fill="none" stroke="#5a4630" stroke-width="0.7" opacity="0.55"/>
<polyline points="338,279 346,283 353,288 360,294 368,298 375,302 382,308 390,312 397,317 404,322 412,326 418,331 426,336 433,340 440,345 448,350 455,354 462,360 469,364 477,368 484,374 491,378 499,383 506,388 513,392 521,397 527,402" fill="none" stroke="#5a4630" stroke-width="0.7" opacity="0.55"/>
<polyline points="337,281 344,286 352,290 359,295 366,300 374,304 381,309 388,314 396,318 403,324 410,328 418,332 424,338 432,342 439,347 446,352 454,356 461,361 468,366 476,371 483,375 490,381 498,385 505,389 512,395 520,399 527,404" fill="none" stroke="#5a4630" stroke-width="0.7" opacity="0.55"/>
<polyline points="336,283 344,287 351,292 358,297 366,301 373,306 380,311 387,315 395,320 402,325 409,329 416,334 423,339 431,343 438,349 445,354 453,358 460,363 467,368 475,372 482,377 489,382 497,386 503,392 511,396 519,400" fill="none" stroke="#5a4630" stroke-width="0.7" opacity="0.55"/>
<polyline points="335,285 343,288 350,293 357,299 365,303 371,308 379,313 386,317 393,322 401,327 408,331 415,336 422,341 430,345 437,351 444,355 452,359 459,365 466,369 474,374 480,379 488,383 495,388 502,393 510,397 517,402" fill="none" stroke="#5a4630" stroke-width="0.7" opacity="0.55"/>
<polyline points="342,290 348,295 356,300 363,304 370,310 378,314 385,318 392,324 400,328 407,333 414,338 421,342 429,347 436,352 443,357 451,361 457,367 465,371 472,375 479,381 487,385 494,390 501,395 509,399 516,404" fill="none" stroke="#5a4630" stroke-width="0.7" opacity="0.55"/>
<polyline points="340,292 348,296 355,302 362,306 370,310 376,316 384,320 392,325 398,330 406,334 413,339 420,344 428,348 435,353 442,359 450,362 457,368 464,373 472,377 479,382 486,387 494,391 500,396 508,401" fill="none" stroke="#5a4630" stroke-width="0.7" opacity="0.55"/>
<polyline points="339,293 347,298 353,304 361,307 368,313 375,318 383,322 390,327 397,332 405,336 412,341 419,346 427,350 434,356 441,360 449,364 455,370 463,374 471,378 477,384 485,388 492,393 499,398 507,402" fill="none" stroke="#5a4630" stroke-width="0.7" opacity="0.55"/>
<polyline points="338,295 346,299 353,305 360,310 368,314 374,319 382,324 389,328 396,334 404,338 411,342 418,348 426,352 433,356 440,362 448,366 455,371 462,376 470,380 477,385 484,390 491,394 498,399 506,404" fill="none" stroke="#5a4630" stroke-width="0.7" opacity="0.55"/>
<polyline points="337,297 345,301 351,307 359,311 366,316 373,321 381,325 388,330 395,335 403,339 410,344 417,349 425,353 432,359 439,363 447,367 453,373 461,377 469,381 475,387 483,391 490,396 497,401" fill="none" stroke="#5a4630" stroke-width="0.7" opacity="0.55"/>
<polyline points="336,298 343,303 351,307 358,313 365,317 373,321 380,327 387,332 395,336 402,341 409,346 417,350 423,355 431,360 438,364 445,370 453,374 460,378 467,384 475,388 482,393 489,398 497,402" fill="none" stroke="#5a4630" stroke-width="0.7" opacity="0.55"/><polyline points="364,272 370,277 378,281 385,286 392,292 400,295 407,301 414,306 422,310 429,315 436,320 444,324 451,329 458,334 466,338 473,344 480,348 488,352 494,358 502,362 509,366 516,372 524,376 531,381" fill="none" stroke="#d0c0a4" stroke-width="0.6" opacity="0.45"/>
<polyline points="355,270 362,275 370,279 376,284 384,289 391,293 398,299 406,303 413,307 420,313 428,317 435,322 442,327 450,331 457,336 464,341 472,345 478,350 486,355 493,359 500,365 508,369 515,373 522,379 530,383 537,388" fill="none" stroke="#d0c0a4" stroke-width="0.6" opacity="0.45"/>
<polyline points="353,272 360,277 368,281 375,287 382,291 390,295 397,301 404,305 412,310 418,315 426,319 434,324 440,329 448,333 455,338 462,344 470,347 477,352 484,358 492,362 499,367 506,372 514,376 521,381 528,386 536,390" fill="none" stroke="#d0c0a4" stroke-width="0.6" opacity="0.45"/>
<polyline points="344,270 352,274 359,279 366,284 374,288 381,294 388,298 396,302 402,308 410,312 418,317 424,322 432,326 439,331 446,336 454,340 461,345 468,350 476,354 483,360 490,364 498,368 505,374 512,379 520,383 526,388 534,393" fill="none" stroke="#d0c0a4" stroke-width="0.6" opacity="0.45"/>
<polyline points="343,272 351,276 358,281 365,286 372,290 380,295 386,301 394,304 401,310 408,315 416,319 423,324 430,329 438,333 445,338 452,343 460,347 467,353 474,357 482,361 488,367 496,371 504,375 510,381 518,385 525,390 532,395" fill="none" stroke="#d0c0a4" stroke-width="0.6" opacity="0.45"/>
<polyline points="341,275 349,279 356,284 363,289 371,293 378,298 385,303 393,307 400,312 407,317 415,321 421,327 429,331 436,335 443,341 451,346 458,350 465,355 472,360 480,364 487,369 494,374 502,378 509,384 516,388 524,392 530,398" fill="none" stroke="#d0c0a4" stroke-width="0.6" opacity="0.45"/>
<polyline points="340,276 347,282 354,286 362,290 369,296 376,300 384,305 391,310 398,315 406,319 412,324 420,329 428,333 434,339 442,343 449,347 456,353 464,357 471,362 478,367 486,371 493,376 500,381 508,385 515,390 522,395 530,399" fill="none" stroke="#d0c0a4" stroke-width="0.6" opacity="0.45"/>
<polyline points="338,279 346,283 353,289 360,293 368,298 374,303 382,307 389,312 396,318 404,321 411,326 418,332 426,336 433,341 440,346 448,350 455,355 462,360 470,364 477,369 484,374 492,378 498,384 506,388 513,392 520,398 528,402" fill="none" stroke="#d0c0a4" stroke-width="0.6" opacity="0.45"/>
<polyline points="337,281 344,286 351,291 359,295 366,301 373,305 381,309 387,315 395,319 403,324 409,329 417,333 424,338 431,344 439,348 446,352 453,358 461,362 468,367 475,372 483,376 490,381 497,386 505,390 511,395 519,400" fill="none" stroke="#d0c0a4" stroke-width="0.6" opacity="0.45"/>
<polyline points="335,284 342,289 350,294 357,298 364,303 371,308 379,312 386,317 393,322 401,326 408,332 415,336 423,340 430,346 437,350 445,355 451,360 459,364 466,369 473,374 481,378 488,383 495,389 503,392 510,398 517,403" fill="none" stroke="#d0c0a4" stroke-width="0.6" opacity="0.45"/>
<polyline points="341,291 348,296 355,301 363,305 370,310 377,315 385,319 392,324 399,329 407,333 414,338 421,343 429,347 435,353 443,357 451,361 457,367 465,372 472,376 479,381 487,386 494,390 501,396 509,400 516,404" fill="none" stroke="#d0c0a4" stroke-width="0.6" opacity="0.45"/>
<polyline points="339,294 347,298 354,303 361,308 369,312 376,317 383,322 391,326 398,331 405,336 413,340 419,346 427,350 434,354 441,360 449,364 456,369 463,374 471,378 478,383 485,388 493,392 500,397 507,403" fill="none" stroke="#d0c0a4" stroke-width="0.6" opacity="0.45"/>
<polyline points="338,296 345,301 353,305 360,310 367,315 375,319 381,324 389,329 396,333 403,339 411,343 418,347 425,353 433,357 440,362 447,367 454,371 462,376 469,381 476,385 484,390 490,396 498,399 505,405" fill="none" stroke="#d0c0a4" stroke-width="0.6" opacity="0.45"/>
<polyline points="337,298 343,303 351,307 359,312 365,317 373,322 380,326 387,332 395,336 402,340 409,346 417,350 424,355 431,360 439,364 446,369 453,374 461,378 467,383 475,388 482,392 489,398 497,402" fill="none" stroke="#d0c0a4" stroke-width="0.6" opacity="0.45"/></g>
<polyline points="340.0,291.6 335.6,315.6 331.0,335.0 313.8,357.0 296.0,379.0 283.0,401.0 272.0,416.0" fill="none" stroke="#4a4a30" stroke-width="2.6" stroke-linejoin="round" stroke-linecap="round" opacity="0.8"/>
<polyline points="340.0,291.6 335.6,315.6 331.0,335.0 313.8,357.0 296.0,379.0 283.0,401.0 272.0,416.0" fill="none" stroke="#c8c040" stroke-width="1.4" stroke-linejoin="round" stroke-linecap="round" opacity="0.95"/>
<polyline points="341.0,292.0 350.0,318.0 360.0,347.0 370.0,372.0 384.0,398.0 403.6,424.8" fill="none" stroke="#4a4a30" stroke-width="2.6" stroke-linejoin="round" stroke-linecap="round" opacity="0.8"/>
<polyline points="341.0,292.0 350.0,318.0 360.0,347.0 370.0,372.0 384.0,398.0 403.6,424.8" fill="none" stroke="#c8c040" stroke-width="1.4" stroke-linejoin="round" stroke-linecap="round" opacity="0.95"/>
<polyline points="334.0,300.0 329.0,324.0 314.0,340.0 298.4,353.0 286.0,366.0 276.6,377.0" fill="none" stroke="#5a5434" stroke-width="1.4" stroke-linejoin="round" stroke-linecap="round" opacity="0.55"/>
<polyline points="334.0,300.0 329.0,324.0 314.0,340.0 298.4,353.0 286.0,366.0 276.6,377.0" fill="none" stroke="#a8a444" stroke-width="0.6" stroke-linejoin="round" stroke-linecap="round" opacity="0.6"/>
<polyline points="330.0,305.0 322.0,328.0 306.0,344.0 290.0,360.0 276.0,380.0 266.0,398.0" fill="none" stroke="#5a5434" stroke-width="1.4" stroke-linejoin="round" stroke-linecap="round" opacity="0.55"/>
<polyline points="330.0,305.0 322.0,328.0 306.0,344.0 290.0,360.0 276.0,380.0 266.0,398.0" fill="none" stroke="#a8a444" stroke-width="0.6" stroke-linejoin="round" stroke-linecap="round" opacity="0.6"/>
<polyline points="337.0,300.0 333.0,326.0 322.0,346.0 306.0,366.0 290.0,390.0 278.0,410.0" fill="none" stroke="#5a5434" stroke-width="1.4" stroke-linejoin="round" stroke-linecap="round" opacity="0.55"/>
<polyline points="337.0,300.0 333.0,326.0 322.0,346.0 306.0,366.0 290.0,390.0 278.0,410.0" fill="none" stroke="#a8a444" stroke-width="0.6" stroke-linejoin="round" stroke-linecap="round" opacity="0.6"/>
<polyline points="345.0,300.0 354.0,326.0 364.0,352.0" fill="none" stroke="#5a5434" stroke-width="1.4" stroke-linejoin="round" stroke-linecap="round" opacity="0.55"/>
<polyline points="345.0,300.0 354.0,326.0 364.0,352.0" fill="none" stroke="#a8a444" stroke-width="0.6" stroke-linejoin="round" stroke-linecap="round" opacity="0.6"/>
<polygon points="240.0,404.0 252.0,400.0 262.0,408.0 258.0,418.0 246.0,418.0" fill="#88c080" />
<polygon points="248.0,410.0 256.0,408.0 258.0,415.0 250.0,417.0" fill="#c8b440" opacity="0.9"/>
<polygon points="374.7,445.6 395.5,444.3 416.2,450.8 418.8,458.6 403.2,466.4 411.0,481.9 421.4,484.5 416.2,492.3 403.2,494.9 395.5,500.1 385.1,500.1 372.1,487.1 359.1,481.9 361.7,471.6 372.1,461.2" fill="#c6b43c" />
<polygon points="374.7,458.6 395.5,458.6 411.0,466.4 413.6,481.9 405.8,485.8 395.5,481.9 385.1,471.6 372.1,469.0" fill="#8cc68a" />
<polygon points="303.2,462.5 311.0,461.2 308.4,476.8 291.6,481.9 289.0,479.4" fill="#c6b43c" />
<polygon points="372.0,508.0 380.0,508.0 382.5,515.7 374.7,518.3" fill="#c6b43c" />
<polygon points="262.0,440.0 270.0,437.0 268.0,446.0 262.0,447.0" fill="#c6b43c" />
<polygon points="278.6,466.4 294.2,468.0 292.0,476.8 280.0,475.0" fill="#dde6e4" opacity="0.8"/>
<polygon points="336.0,503.0 359.0,500.0 357.0,515.7 340.0,514.0" fill="#dde6e4" opacity="0.8"/>
<polyline points="296.8,430.0 301.9,445.6 305.8,469.0 312.3,484.5 320.1,497.5 325.3,507.9" fill="none" stroke="#2e3236" stroke-width="1.1" stroke-linejoin="round" stroke-linecap="round" opacity="0.85" stroke-dasharray="2.6,1.3"/>
<polyline points="255.2,437.8 270.8,445.6 289.0,453.4 325.3,450.8 353.9,454.7 366.9,461.2 374.7,469.0 387.7,481.9 400.6,494.9 416.2,507.9 431.8,518.3 447.4,526.1" fill="none" stroke="#2e3236" stroke-width="1.1" stroke-linejoin="round" stroke-linecap="round" opacity="0.85" stroke-dasharray="2.6,1.3"/>
<polyline points="327.9,450.8 338.3,466.4 353.9,481.9 361.7,497.5 372.1,513.1 379.9,518.3" fill="none" stroke="#2e3236" stroke-width="1.1" stroke-linejoin="round" stroke-linecap="round" opacity="0.8" stroke-dasharray="2.6,1.3"/>
<polyline points="359.1,520.9 385.1,515.7 411.0,510.5 437.0,505.3" fill="none" stroke="#2e3236" stroke-width="1.1" stroke-linejoin="round" stroke-linecap="round" opacity="0.8" stroke-dasharray="2.6,1.3"/>
<polyline points="395.5,544.3 405.8,528.7 418.8,515.7 437.0,500.1 447.4,487.1" fill="none" stroke="#2e3236" stroke-width="1.1" stroke-linejoin="round" stroke-linecap="round" opacity="0.8" stroke-dasharray="2.6,1.3"/>
<polyline points="437.0,430.0 431.8,450.8 418.8,471.6 405.8,492.4 395.5,507.9 385.1,518.3 372.1,526.1" fill="none" stroke="#2e3236" stroke-width="1.1" stroke-linejoin="round" stroke-linecap="round" opacity="0.8" stroke-dasharray="2.6,1.3"/>
<polyline points="262.0,455.0 280.0,462.0 300.0,470.0 318.0,482.0 335.0,496.0" fill="none" stroke="#2e3236" stroke-width="0.9" stroke-linejoin="round" stroke-linecap="round" opacity="0.75" stroke-dasharray="2.4,1.2"/>
<polyline points="345.0,455.0 360.0,462.0 385.0,468.0 410.0,470.0 440.0,478.0" fill="none" stroke="#2e3236" stroke-width="0.9" stroke-linejoin="round" stroke-linecap="round" opacity="0.65" stroke-dasharray="2.4,1.2"/>
<polyline points="290.0,440.0 296.0,460.0 302.0,480.0 306.0,495.0" fill="none" stroke="#2e3236" stroke-width="0.9" stroke-linejoin="round" stroke-linecap="round" opacity="0.65" stroke-dasharray="2.4,1.2"/>
<polyline points="307.1,492.4 333.1,476.9 348.7,463.8 359.1,450.8" fill="none" stroke="#4f98d4" stroke-width="0.8" stroke-linejoin="round" stroke-linecap="round" opacity="0.8"/>
<polyline points="270.0,450.0 300.0,455.0 330.0,465.0 360.0,478.0 390.0,500.0 420.0,520.0" fill="none" stroke="#a8805a" stroke-width="0.7" stroke-linejoin="round" stroke-linecap="round" opacity="0.7"/>
<polyline points="290.0,470.0 320.0,480.0 350.0,492.0 375.0,505.0" fill="none" stroke="#a8805a" stroke-width="0.7" stroke-linejoin="round" stroke-linecap="round" opacity="0.6"/>
<polyline points="243.4,398.4 260.0,411.6 271.3,421.0 284.6,428.6 297.8,436.1 309.1,443.7 326.1,445.6 345.0,444.6 362.0,440.8 377.1,436.1 392.2,432.3 407.3,429.5 421.9,426.3 435.0,417.5 448.1,402.2 450.3,384.7 448.1,373.8" fill="none" stroke="#b83232" stroke-width="1.5" stroke-linejoin="round" stroke-linecap="round" opacity="1"/>
<polyline points="260.0,310.0 253.8,330.0 248.8,347.5 246.2,367.5 245.0,387.5 239.3,404.5 223.1,416.7 210.9,428.9 198.7,443.1" fill="none" stroke="#b83232" stroke-width="1.4" stroke-linejoin="round" stroke-linecap="round" opacity="1"/>
<polyline points="226.0,400.0 240.0,410.0 252.0,425.0 262.0,440.0 270.0,455.0" fill="none" stroke="#2e3236" stroke-width="1.1" stroke-linejoin="round" stroke-linecap="round" opacity="0.7" stroke-dasharray="2,1"/></g>
<text x="0" y="0" font-size="9.53" fill="#444" text-anchor="middle" dominant-baseline="central" textLength="26.8" lengthAdjust="spacingAndGlyphs" transform="translate(53.6 280.2) rotate(0.0) scale(1 0.95)">744.50</text>
<text x="0" y="0" font-size="9.32" fill="#444" text-anchor="middle" dominant-baseline="central" textLength="26.2" lengthAdjust="spacingAndGlyphs" transform="translate(61.2 312.6) rotate(0.0) scale(1 0.95)">615.60</text>
<text x="0" y="0" font-size="9.17" fill="#444" text-anchor="middle" dominant-baseline="central" textLength="25.8" lengthAdjust="spacingAndGlyphs" transform="translate(68.6 343.5) rotate(0.0) scale(1 0.95)">486.70</text>
<text x="0" y="0" font-size="9.00" fill="#444" text-anchor="middle" dominant-baseline="central" textLength="25.3" lengthAdjust="spacingAndGlyphs" transform="translate(75.3 372.5) rotate(0.0) scale(1 0.95)">357.80</text>
<text x="0" y="0" font-size="8.60" fill="#444" text-anchor="middle" dominant-baseline="central" textLength="24.2" lengthAdjust="spacingAndGlyphs" transform="translate(82.1 399.8) rotate(0.0) scale(1 0.95)">228.90</text>
<text x="0" y="0" font-size="8.18" fill="#444" text-anchor="middle" dominant-baseline="central" textLength="23.0" lengthAdjust="spacingAndGlyphs" transform="translate(88.6 427.3) rotate(0.0) scale(1 0.95)">100.00</text>
<text x="0" y="0" font-size="8.28" fill="#444" text-anchor="middle" dominant-baseline="central" textLength="23.3" lengthAdjust="spacingAndGlyphs" transform="translate(603.4 237.8) rotate(0.0) scale(1 0.95)">744.50</text>
<text x="0" y="0" font-size="8.21" fill="#444" text-anchor="middle" dominant-baseline="central" textLength="23.1" lengthAdjust="spacingAndGlyphs" transform="translate(597.3 267.8) rotate(0.0) scale(1 0.95)">615.60</text>
<text x="0" y="0" font-size="8.04" fill="#444" text-anchor="middle" dominant-baseline="central" textLength="22.6" lengthAdjust="spacingAndGlyphs" transform="translate(591.3 295.7) rotate(0.0) scale(1 0.95)">486.70</text>
<text x="0" y="0" font-size="8.04" fill="#444" text-anchor="middle" dominant-baseline="central" textLength="22.6" lengthAdjust="spacingAndGlyphs" transform="translate(586.0 322.2) rotate(0.0) scale(1 0.95)">357.80</text>
<text x="0" y="0" font-size="7.75" fill="#444" text-anchor="middle" dominant-baseline="central" textLength="21.8" lengthAdjust="spacingAndGlyphs" transform="translate(580.8 348.8) rotate(0.0) scale(1 0.95)">228.90</text>
<text x="0" y="0" font-size="7.25" fill="#444" text-anchor="middle" dominant-baseline="central" textLength="20.4" lengthAdjust="spacingAndGlyphs" transform="translate(576.2 373.4) rotate(0.0) scale(1 0.95)">100.00</text>
<text x="0" y="0" font-size="9.13" fill="#4a4a4a" text-anchor="middle" dominant-baseline="central" textLength="19.3" lengthAdjust="spacingAndGlyphs" transform="translate(103.0 445.8) rotate(-45.0) scale(1 0.72)">1320</text>
<text x="0" y="0" font-size="9.84" fill="#4a4a4a" text-anchor="middle" dominant-baseline="central" textLength="20.8" lengthAdjust="spacingAndGlyphs" transform="translate(148.3 471.4) rotate(-47.0) scale(1 0.72)">2392</text>
<text x="0" y="0" font-size="10.36" fill="#4a4a4a" text-anchor="middle" dominant-baseline="central" textLength="21.9" lengthAdjust="spacingAndGlyphs" transform="translate(198.6 499.2) rotate(-47.0) scale(1 0.72)">3464</text>
<text x="0" y="0" font-size="9.93" fill="#4a4a4a" text-anchor="middle" dominant-baseline="central" textLength="21.0" lengthAdjust="spacingAndGlyphs" transform="translate(255.5 529.0) rotate(-50.0) scale(1 0.72)">4536</text>
<text x="0" y="0" font-size="10.88" fill="#4a4a4a" text-anchor="middle" dominant-baseline="central" textLength="23.0" lengthAdjust="spacingAndGlyphs" transform="translate(317.5 563.8) rotate(-54.0) scale(1 0.72)">5608</text>
<text x="0" y="0" font-size="10.88" fill="#4a4a4a" text-anchor="middle" dominant-baseline="central" textLength="23.0" lengthAdjust="spacingAndGlyphs" transform="translate(386.9 601.0) rotate(-54.0) scale(1 0.72)">6680</text>
<text x="0" y="0" font-size="10.57" fill="#4a4a4a" text-anchor="middle" dominant-baseline="central" textLength="23.0" lengthAdjust="spacingAndGlyphs" transform="translate(429.1 594.8) rotate(36.4) scale(1 0.68)">1320</text>
<text x="0" y="0" font-size="10.80" fill="#4a4a4a" text-anchor="middle" dominant-baseline="central" textLength="23.5" lengthAdjust="spacingAndGlyphs" transform="translate(464.4 540.5) rotate(37.0) scale(1 0.68)">2392</text>
<text x="0" y="0" font-size="9.56" fill="#4a4a4a" text-anchor="middle" dominant-baseline="central" textLength="20.8" lengthAdjust="spacingAndGlyphs" transform="translate(496.0 494.4) rotate(37.0) scale(1 0.68)">3464</text>
<text x="0" y="0" font-size="8.55" fill="#4a4a4a" text-anchor="middle" dominant-baseline="central" textLength="18.6" lengthAdjust="spacingAndGlyphs" transform="translate(523.7 455.6) rotate(33.0) scale(1 0.68)">4536</text>
<text x="0" y="0" font-size="8.27" fill="#4a4a4a" text-anchor="middle" dominant-baseline="central" textLength="18.0" lengthAdjust="spacingAndGlyphs" transform="translate(546.9 420.6) rotate(33.7) scale(1 0.68)">5608</text>
<text x="0" y="0" font-size="8.18" fill="#4a4a4a" text-anchor="middle" dominant-baseline="central" textLength="17.8" lengthAdjust="spacingAndGlyphs" transform="translate(567.0 389.4) rotate(34.0) scale(1 0.68)">6680</text>
</svg>
</div>
<div id="chk"></div><svg style="position:absolute;left:686px;top:40px" width="20" height="20" viewBox="686 40 20 20"><polyline points="691.6,50.2 695.2,54.4 702.4,43.8" fill="none" stroke="#1c2444" stroke-width="2.3" stroke-linecap="round" stroke-linejoin="round"/></svg>
<div id="chkl">Surface texture</div>
<div id="hcm">Height color map</div>
<div id="grp"></div>
<div id="bar"></div>
<div class="tick" style="top:102px"></div>
<div class="tick" style="top:178px"></div>
<div class="tick" style="top:254px"></div>
<div class="tick" style="top:330px"></div>
<div class="tick" style="top:406px"></div>
<div class="tick" style="top:482px"></div>
<div class="bl" style="top:92px">550 m</div>
<div class="bl" style="top:168px">440 m</div>
<div class="bl" style="top:244px">330 m</div>
<div class="bl" style="top:320px">220 m</div>
<div class="bl" style="top:396px">110 m</div>
<div class="bl" style="top:472px">0 m</div>
<svg style="position:absolute;left:0;top:0" width="847" height="640" viewBox="0 0 847 640"><path d="M0,0 H4 A4,4 0 0 0 0,4 Z" fill="#000"/><path d="M847,0 H843 A4,4 0 0 1 847,4 Z" fill="#000"/><path d="M0,640 H4 A4,4 0 0 1 0,636 Z" fill="#000"/><path d="M847,640 H843 A4,4 0 0 0 847,636 Z" fill="#000"/></svg>
</body></html>
